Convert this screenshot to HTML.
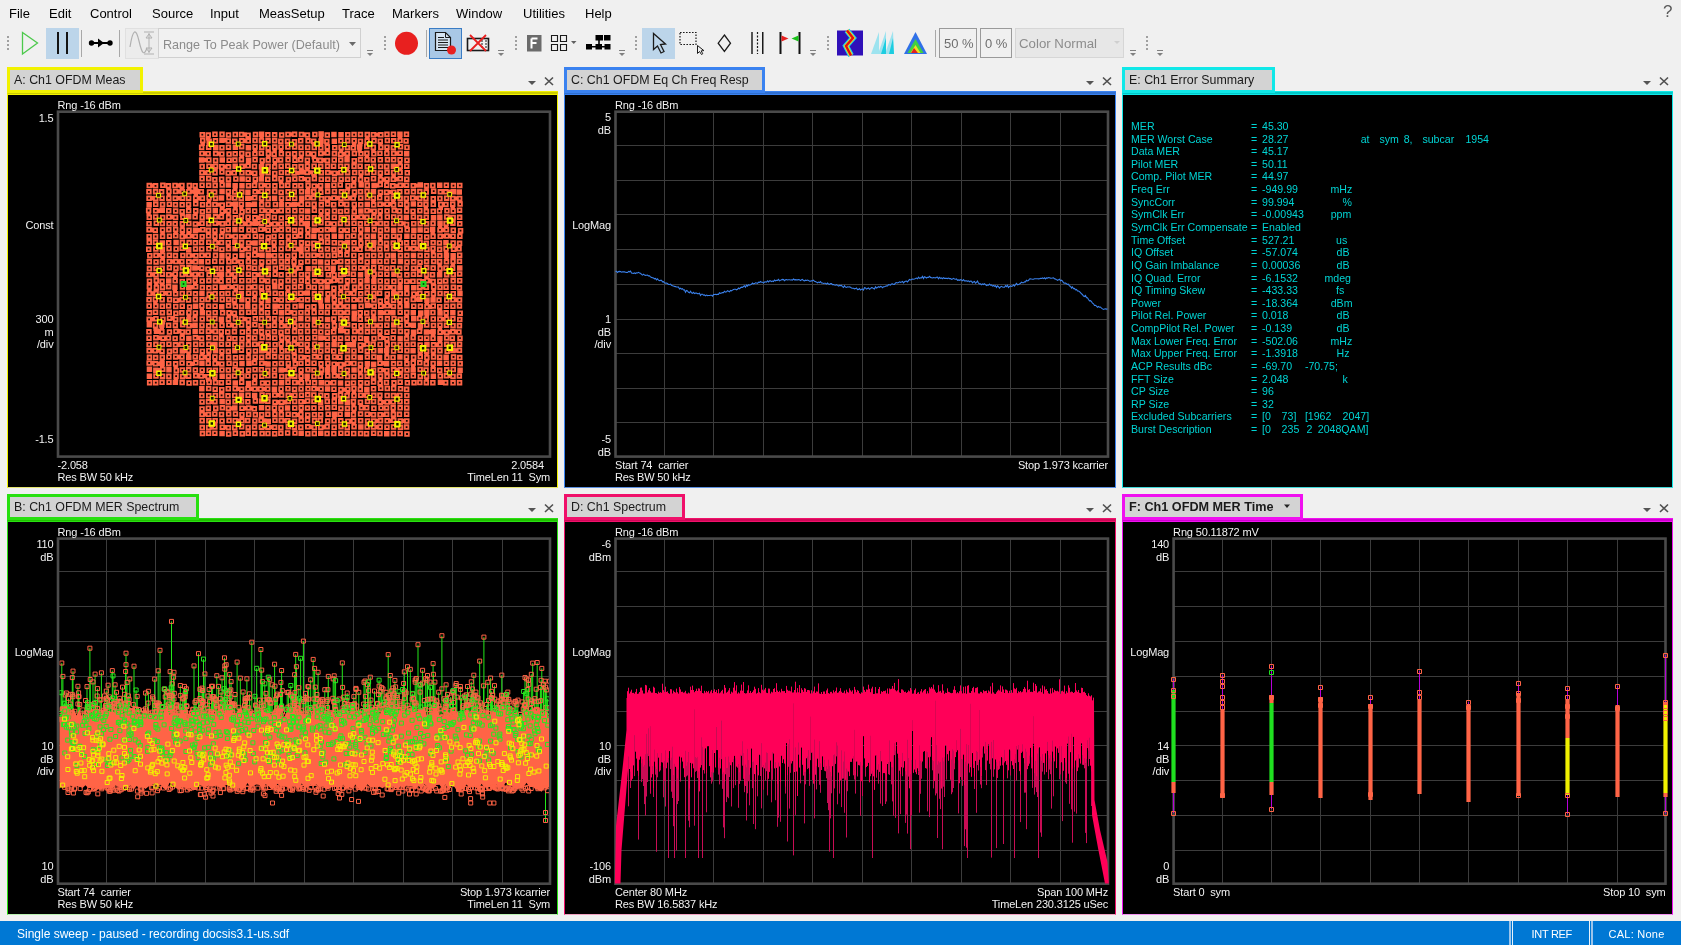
<!DOCTYPE html><html><head><meta charset="utf-8"><title>VSA</title><style>
*{box-sizing:border-box}
html,body{margin:0;padding:0}
body{width:1681px;height:945px;background:#f0f0f0;position:relative;overflow:hidden;will-change:transform;font-family:'Liberation Sans', sans-serif;color:#000}
.a{position:absolute;white-space:pre}
.m{font-size:13px;top:6px;line-height:16px;color:#000}
.tab{position:absolute;background:#d3d3d3;border:3px solid;font-size:12.4px;line-height:16px;color:#1a1a1a;padding:2px 0 0 4px}
.frame{position:absolute;background:#000;border-style:solid}
.pt{position:absolute;white-space:pre;color:#f2f2f2;font-size:11px;line-height:12px;letter-spacing:-0.15px}
.r{text-align:right}
.e{position:absolute;white-space:pre;color:#00d4d4;font-size:10.6px;line-height:12px}
svg{position:absolute;left:0;top:0;overflow:visible}
</style></head><body>
<div class="a m" style="left:9px">File</div>
<div class="a m" style="left:49px">Edit</div>
<div class="a m" style="left:90px">Control</div>
<div class="a m" style="left:152px">Source</div>
<div class="a m" style="left:210px">Input</div>
<div class="a m" style="left:259px">MeasSetup</div>
<div class="a m" style="left:342px">Trace</div>
<div class="a m" style="left:392px">Markers</div>
<div class="a m" style="left:456px">Window</div>
<div class="a m" style="left:523px">Utilities</div>
<div class="a m" style="left:585px">Help</div>
<div class="a" style="left:1663px;top:2px;font-size:17px;color:#5a5a5a">?</div>
<svg width="1681" height="70" style="left:0;top:0">
<rect x="7" y="36" width="2" height="2" fill="#a0a0a0"/><rect x="7" y="40" width="2" height="2" fill="#a0a0a0"/><rect x="7" y="44" width="2" height="2" fill="#a0a0a0"/><rect x="7" y="48" width="2" height="2" fill="#a0a0a0"/>
<path d="M22.5 32.5 L37.5 43 L22.5 54 Z" fill="none" stroke="#4cc94c" stroke-width="1.3"/>
<rect x="46" y="28" width="33" height="31" fill="#bcd5ea"/>
<rect x="57" y="32" width="2" height="22" fill="#141414"/><rect x="66" y="32" width="2" height="22" fill="#141414"/>
<rect x="81" y="30" width="1" height="27" fill="#a8a8a8"/>
<circle cx="91.5" cy="43" r="2.7" fill="#000"/><circle cx="110" cy="43" r="2.7" fill="#000"/><rect x="91" y="42" width="19" height="2" fill="#000"/><path d="M98 38.5 L104 43 L98 47.5Z" fill="#000"/>
<rect x="119" y="30" width="1" height="27" fill="#a8a8a8"/>
<rect x="125.5" y="28.5" width="33" height="30" fill="#ececec" stroke="#e0e0e0"/>
<path d="M130 47 C133 28, 136 28, 139 41 S 144 56, 147 48" fill="none" stroke="#b0b0b0" stroke-width="1.2"/><path d="M144 32 h10 M149 33 v20 M144 54 h10 M146 38 l3 -4 l3 4z M146 48 l3 4 l3 -4z" fill="none" stroke="#b0b0b0" stroke-width="1"/>
<rect x="158.5" y="28.5" width="202" height="29" fill="#f1f1f1" stroke="#d0d0d0"/>
<path d="M349 42 h7 l-3.5 4z" fill="#6a6a6a"/>
<rect x="367" y="50" width="6" height="1" fill="#808080"/><path d="M367 53 h6 l-3 3z" fill="#808080"/>
<rect x="384" y="36" width="2" height="2" fill="#a0a0a0"/><rect x="384" y="40" width="2" height="2" fill="#a0a0a0"/><rect x="384" y="44" width="2" height="2" fill="#a0a0a0"/><rect x="384" y="48" width="2" height="2" fill="#a0a0a0"/>
<circle cx="406.5" cy="43.3" r="11.5" fill="#e8201f"/>
<rect x="426" y="30" width="1" height="27" fill="#a8a8a8"/>
<rect x="429.5" y="28.5" width="32" height="30" fill="#a9c8e6" stroke="#3a7cc4"/>
<path d="M435.5 32.5 h10 l5 5 v13 h-15z" fill="#d6e4f2" stroke="#1a1a1a" stroke-width="1.2"/><path d="M445.5 32.5 v5 h5" fill="none" stroke="#1a1a1a" stroke-width="1"/><path d="M438 37.5h6 M438 40h10 M438 42.5h10 M438 45h10 M438 47.5h10" stroke="#1a1a1a" stroke-width="1"/>
<circle cx="451.5" cy="50" r="4.5" fill="#e8201f"/>
<rect x="467.5" y="38.5" width="21" height="12" fill="none" stroke="#1a1a1a" stroke-width="1.6"/><path d="M481 41h2 M481 44h2 M481 47h2 M485 41h2 M485 44h2 M485 47h2" stroke="#1a1a1a" stroke-width="1.2"/><path d="M470 35 L486 51 M486 35 L470 51" stroke="#e82020" stroke-width="1.8"/>
<rect x="498" y="50" width="6" height="1" fill="#808080"/><path d="M498 53 h6 l-3 3z" fill="#808080"/>
<rect x="515" y="36" width="2" height="2" fill="#a0a0a0"/><rect x="515" y="40" width="2" height="2" fill="#a0a0a0"/><rect x="515" y="44" width="2" height="2" fill="#a0a0a0"/><rect x="515" y="48" width="2" height="2" fill="#a0a0a0"/>
<rect x="527" y="35" width="14.5" height="16.5" fill="#6b6b6b"/><path d="M531.5 38.5 h6 M531.5 38.5 v10 M531.5 43 h5" stroke="#fff" stroke-width="2" fill="none"/>
<path d="M551.5 35.5h6v6h-6z M560.5 35.5h6v6h-6z M551.5 44.5h6v6h-6z M560.5 44.5h6v6h-6z" fill="none" stroke="#1a1a1a" stroke-width="1.1"/><path d="M571 41h5.5l-2.75 3z" fill="#606060"/>
<rect x="586" y="44" width="6" height="5.5" fill="#000"/><rect x="595.5" y="44" width="6.5" height="5.5" fill="#000"/><rect x="604.5" y="44" width="6" height="5.5" fill="#000"/><rect x="595.5" y="35" width="7.5" height="5.5" fill="#000"/><rect x="604" y="35" width="6.5" height="5.5" fill="#000"/><path d="M588 46.7h20 M599 38v8" stroke="#000" stroke-width="1.6"/>
<rect x="619" y="50" width="6" height="1" fill="#808080"/><path d="M619 53 h6 l-3 3z" fill="#808080"/>
<rect x="635" y="36" width="2" height="2" fill="#a0a0a0"/><rect x="635" y="40" width="2" height="2" fill="#a0a0a0"/><rect x="635" y="44" width="2" height="2" fill="#a0a0a0"/><rect x="635" y="48" width="2" height="2" fill="#a0a0a0"/>
<rect x="642" y="28" width="33" height="31" fill="#bcd5ea"/>
<path d="M653.5 33.5 L653.5 49.5 L657.5 46 L661 53 L664 51.5 L660.5 44.5 L665.5 44 Z" fill="none" stroke="#1a1a1a" stroke-width="1.3" stroke-linejoin="miter"/>
<rect x="680" y="32.5" width="16" height="12" fill="none" stroke="#1a1a1a" stroke-width="1.2" stroke-dasharray="1.6 1.4"/><path d="M697.5 45.5 v8 l2 -2 l2 3 l1.3 -0.8 l-1.7 -2.8 l2.8 -0.3z" fill="none" stroke="#1a1a1a" stroke-width="1"/>
<path d="M724.4 35 L730.5 43.2 L724.4 51.5 L718.2 43.2 Z" fill="none" stroke="#1a1a1a" stroke-width="1.3"/>
<rect x="751" y="32" width="2" height="22" fill="#555"/><path d="M757.5 32 v22" stroke="#1a1a1a" stroke-width="1.2" stroke-dasharray="2 1.5"/><rect x="762" y="32" width="1.5" height="22" fill="#1a1a1a"/>
<rect x="779.5" y="32" width="2" height="22" fill="#111"/><rect x="798.5" y="32" width="2" height="22" fill="#111"/><path d="M781.5 35.5 L788.5 38.5 L781.5 41.5Z" fill="#e82020"/><path d="M798.5 35.5 L791.5 38.5 L798.5 41.5Z" fill="#1cc41c"/>
<rect x="810" y="50" width="6" height="1" fill="#808080"/><path d="M810 53 h6 l-3 3z" fill="#808080"/>
<rect x="827" y="36" width="2" height="2" fill="#a0a0a0"/><rect x="827" y="40" width="2" height="2" fill="#a0a0a0"/><rect x="827" y="44" width="2" height="2" fill="#a0a0a0"/><rect x="827" y="48" width="2" height="2" fill="#a0a0a0"/>
<rect x="837" y="30.5" width="26" height="25" fill="#3010b8"/><path d="M847 30.5 L853 38 L846 46 L851 55.5" fill="none" stroke="#18c8f0" stroke-width="6"/><path d="M847 30.5 L853 38 L846 46 L851 55.5" fill="none" stroke="#f0e020" stroke-width="4"/><path d="M847 30.5 L853 38 L846 46 L851 55.5" fill="none" stroke="#e01010" stroke-width="2.4"/>
<path d="M871 54 L879 32 L879 54Z M878 54 L886 31 L886 54Z M885 54 L893 31 L894 54Z" fill="#5ad8ee" opacity="0.55"/><path d="M881 54 L886 38 L886 54Z M889 54 L893 38 L894 54Z" fill="#1ccde0"/>
<path d="M915.5 32 L927 54 L904 54Z" fill="#3070e8"/><path d="M915.5 39 L923.5 53 L907.5 53Z" fill="#40d040"/><path d="M915.5 45 L920.5 53 L910.5 53Z" fill="#f0e020"/><path d="M914 48 L918 53 L911 53Z" fill="#e02020"/>
<rect x="935" y="30" width="1" height="27" fill="#a8a8a8"/>
<rect x="939.5" y="28.5" width="37" height="29" fill="#f0f0f0" stroke="#9a9a9a"/><rect x="980.5" y="28.5" width="31" height="29" fill="#f0f0f0" stroke="#9a9a9a"/><rect x="1015.5" y="28.5" width="108" height="29" fill="#e7e7e7" stroke="#d6d6d6"/><path d="M1114 41h6l-3 3z" fill="#cfcfcf"/>
<rect x="1130" y="50" width="6" height="1" fill="#808080"/><path d="M1130 53 h6 l-3 3z" fill="#808080"/>
<rect x="1146" y="36" width="2" height="2" fill="#a0a0a0"/><rect x="1146" y="40" width="2" height="2" fill="#a0a0a0"/><rect x="1146" y="44" width="2" height="2" fill="#a0a0a0"/><rect x="1146" y="48" width="2" height="2" fill="#a0a0a0"/>
<rect x="1157" y="50" width="6" height="1" fill="#808080"/><path d="M1157 53 h6 l-3 3z" fill="#808080"/>
</svg>
<div class="a" style="left:163px;top:36.5px;font-size:12.6px;line-height:16px;color:#8c8c8c">Range To Peak Power (Default)</div>
<div class="a" style="left:944px;top:36px;font-size:13px;line-height:16px;color:#6e6e6e">50 %</div>
<div class="a" style="left:985px;top:36px;font-size:13px;line-height:16px;color:#6e6e6e">0 %</div>
<div class="a" style="left:1019px;top:36px;font-size:13.25px;line-height:16px;color:#8c8c8c">Color Normal</div>
<div class="frame" style="left:7px;top:91px;width:551px;height:397px;border-width:4px 1.5px 1px 1px;border-color:#cccc00 #f2f200 #e4e470 #f2f200"></div>
<div class="a" style="left:7px;top:91px;width:551px;height:1px;background:#f2f200"></div>
<div class="a" style="left:7px;top:94px;width:551px;height:1px;background:#f2f200"></div>
<div class="tab" style="left:7px;top:67px;width:136px;height:26px;border-color:#f2f200;">A: Ch1 OFDM Meas</div>
<svg width="40" height="30" style="left:527px;top:67px"><path d="M1 14 h8 l-4 4z" fill="#555"/><path d="M18 10.5 L26 18 M26 10.5 L18 18" stroke="#505050" stroke-width="1.6"/></svg>
<div class="frame" style="left:564px;top:91px;width:552px;height:397px;border-width:4px 1.5px 1px 1px;border-color:#2f6fd0 #3a82f0 #5c90e0 #3a82f0"></div>
<div class="a" style="left:565px;top:91px;width:551px;height:1px;background:#3a82f0"></div>
<div class="a" style="left:565px;top:94px;width:551px;height:1px;background:#3a82f0"></div>
<div class="tab" style="left:564px;top:67px;width:201px;height:26px;border-color:#3a82f0;">C: Ch1 OFDM Eq Ch Freq Resp</div>
<svg width="40" height="30" style="left:1085px;top:67px"><path d="M1 14 h8 l-4 4z" fill="#555"/><path d="M18 10.5 L26 18 M26 10.5 L18 18" stroke="#505050" stroke-width="1.6"/></svg>
<div class="frame" style="left:1122px;top:91px;width:551px;height:397px;border-width:4px 1.5px 1px 1px;border-color:#00c8c8 #10e8e8 #40d8d8 #10e8e8"></div>
<div class="a" style="left:1123px;top:91px;width:550px;height:1px;background:#10e8e8"></div>
<div class="a" style="left:1123px;top:94px;width:550px;height:1px;background:#10e8e8"></div>
<div class="tab" style="left:1122px;top:67px;width:153px;height:26px;border-color:#10e8e8;">E: Ch1 Error Summary</div>
<svg width="40" height="30" style="left:1642px;top:67px"><path d="M1 14 h8 l-4 4z" fill="#555"/><path d="M18 10.5 L26 18 M26 10.5 L18 18" stroke="#505050" stroke-width="1.6"/></svg>
<div class="frame" style="left:7px;top:518px;width:551px;height:397px;border-width:4px 1.5px 1px 1px;border-color:#20c000 #28e010 #b8f0b0 #28e010"></div>
<div class="a" style="left:7px;top:518px;width:551px;height:1px;background:#28e010"></div>
<div class="a" style="left:7px;top:521px;width:551px;height:1px;background:#28e010"></div>
<div class="tab" style="left:7px;top:494px;width:192px;height:26px;border-color:#28e010;">B: Ch1 OFDM MER Spectrum</div>
<svg width="40" height="30" style="left:527px;top:494px"><path d="M1 14 h8 l-4 4z" fill="#555"/><path d="M18 10.5 L26 18 M26 10.5 L18 18" stroke="#505050" stroke-width="1.6"/></svg>
<div class="frame" style="left:564px;top:518px;width:552px;height:397px;border-width:4px 1.5px 1px 1px;border-color:#d00858 #f0106a #f0a0c0 #f0106a"></div>
<div class="a" style="left:565px;top:518px;width:551px;height:1px;background:#f0106a"></div>
<div class="a" style="left:565px;top:521px;width:551px;height:1px;background:#f0106a"></div>
<div class="tab" style="left:564px;top:494px;width:121px;height:26px;border-color:#f0106a;">D: Ch1 Spectrum</div>
<svg width="40" height="30" style="left:1085px;top:494px"><path d="M1 14 h8 l-4 4z" fill="#555"/><path d="M18 10.5 L26 18 M26 10.5 L18 18" stroke="#505050" stroke-width="1.6"/></svg>
<div class="frame" style="left:1122px;top:518px;width:551px;height:397px;border-width:4px 1.5px 1px 1px;border-color:#d000d0 #f010f0 #f090f0 #f010f0"></div>
<div class="a" style="left:1123px;top:518px;width:550px;height:1px;background:#f010f0"></div>
<div class="a" style="left:1123px;top:521px;width:550px;height:1px;background:#f010f0"></div>
<div class="tab" style="left:1122px;top:494px;width:181px;height:26px;border-color:#f010f0;font-weight:bold;font-size:12.65px;">F: Ch1 OFDM MER Time</div>
<svg width="40" height="30" style="left:1642px;top:494px"><path d="M1 14 h8 l-4 4z" fill="#555"/><path d="M18 10.5 L26 18 M26 10.5 L18 18" stroke="#505050" stroke-width="1.6"/></svg>
<svg width="20" height="20" style="left:1280px;top:500px"><path d="M4 4.5h6l-3 3.5z" fill="#222"/></svg>
<svg width="1681" height="945" style="left:0;top:0">
<rect x="58.0" y="111.7" width="492.0" height="344.90000000000003" fill="none" stroke="#4a4a4a" stroke-width="2.6"/>
</svg>
<svg width="1681" height="945" style="left:0;top:0">
<path d="M664.5 111.7V456.6M713.5 111.7V456.6M763.5 111.7V456.6M812.5 111.7V456.6M862.5 111.7V456.6M911.5 111.7V456.6M961.5 111.7V456.6M1010.5 111.7V456.6M1060.5 111.7V456.6M615.5 145.5H1108.0M615.5 180.5H1108.0M615.5 214.5H1108.0M615.5 249.5H1108.0M615.5 284.5H1108.0M615.5 319.5H1108.0M615.5 353.5H1108.0M615.5 388.5H1108.0M615.5 422.5H1108.0" stroke="#3c3c3c" stroke-width="1" fill="none"/>
<rect x="615.5" y="111.7" width="492.5" height="344.90000000000003" fill="none" stroke="#4a4a4a" stroke-width="2.6"/>
</svg>
<svg width="1681" height="945" style="left:0;top:0">
<path d="M106.5 538.6V883.7M155.5 538.6V883.7M205.5 538.6V883.7M254.5 538.6V883.7M304.5 538.6V883.7M353.5 538.6V883.7M403.5 538.6V883.7M452.5 538.6V883.7M502.5 538.6V883.7M58.0 571.5H550.0M58.0 606.5H550.0M58.0 641.5H550.0M58.0 676.5H550.0M58.0 711.5H550.0M58.0 745.5H550.0M58.0 780.5H550.0M58.0 815.5H550.0M58.0 850.5H550.0" stroke="#3c3c3c" stroke-width="1" fill="none"/>
<rect x="58.0" y="538.6" width="492.0" height="345.1" fill="none" stroke="#4a4a4a" stroke-width="2.6"/>
</svg>
<svg width="1681" height="945" style="left:0;top:0">
<path d="M664.5 538.6V883.7M713.5 538.6V883.7M763.5 538.6V883.7M812.5 538.6V883.7M862.5 538.6V883.7M911.5 538.6V883.7M961.5 538.6V883.7M1010.5 538.6V883.7M1060.5 538.6V883.7M615.5 571.5H1108.0M615.5 606.5H1108.0M615.5 641.5H1108.0M615.5 676.5H1108.0M615.5 711.5H1108.0M615.5 745.5H1108.0M615.5 780.5H1108.0M615.5 815.5H1108.0M615.5 850.5H1108.0" stroke="#3c3c3c" stroke-width="1" fill="none"/>
<rect x="615.5" y="538.6" width="492.5" height="345.1" fill="none" stroke="#4a4a4a" stroke-width="2.6"/>
</svg>
<svg width="1681" height="945" style="left:0;top:0">
<path d="M1222.5 538.6V883.7M1271.5 538.6V883.7M1320.5 538.6V883.7M1370.5 538.6V883.7M1419.5 538.6V883.7M1468.5 538.6V883.7M1518.5 538.6V883.7M1567.5 538.6V883.7M1617.5 538.6V883.7M1173.6 571.5H1665.5M1173.6 606.5H1665.5M1173.6 641.5H1665.5M1173.6 676.5H1665.5M1173.6 711.5H1665.5M1173.6 745.5H1665.5M1173.6 780.5H1665.5M1173.6 815.5H1665.5M1173.6 850.5H1665.5" stroke="#3c3c3c" stroke-width="1" fill="none"/>
<rect x="1173.6" y="538.6" width="491.9000000000001" height="345.1" fill="none" stroke="#4a4a4a" stroke-width="2.6"/>
</svg>
<svg width="1681" height="945" style="left:0;top:0">
<path d="M146.5 182.8h5.5v5.5h-5.5zM150.3 183.4h4.4v4.4h-4.4zM146.2 189.1h5.5v5.5h-5.5zM146.3 195.6h5.5v5.5h-5.5zM150.1 196.1h4.4v4.4h-4.4zM146.4 202h5.5v5.5h-5.5zM145.9 207.8h5.5v5.5h-5.5zM146.4 211.5h4.4v4.4h-4.4zM146.5 214.6h5.5v5.5h-5.5zM146.3 220.9h5.5v5.5h-5.5zM146.3 226.9h5.5v5.5h-5.5zM150.2 227.5h4.4v4.4h-4.4zM146.4 233.9h5.5v5.5h-5.5zM147 237.6h4.4v4.4h-4.4zM146.5 239.6h5.5v5.5h-5.5zM146 246.6h5.5v5.5h-5.5zM147.1 252.9h5.5v5.5h-5.5zM146.6 259h5.5v5.5h-5.5zM146.7 265.8h5.5v5.5h-5.5zM146.3 271.8h5.5v5.5h-5.5zM150.2 272.3h4.4v4.4h-4.4zM146.7 278.5h5.5v5.5h-5.5zM146.6 283.9h5.5v5.5h-5.5zM147.2 287.6h4.4v4.4h-4.4zM146.7 290.7h5.5v5.5h-5.5zM150.5 291.3h4.4v4.4h-4.4zM146.3 297.1h5.5v5.5h-5.5zM146.4 303.2h5.5v5.5h-5.5zM146.8 310.1h5.5v5.5h-5.5zM146.4 316.6h5.5v5.5h-5.5zM150.2 317.1h4.4v4.4h-4.4zM146.6 322.1h5.5v5.5h-5.5zM146.2 329.1h5.5v5.5h-5.5zM146.3 335.4h5.5v5.5h-5.5zM146.4 341.9h5.5v5.5h-5.5zM146.4 348.1h5.5v5.5h-5.5zM150.3 348.6h4.4v4.4h-4.4zM146.7 354.5h5.5v5.5h-5.5zM146.4 360.2h5.5v5.5h-5.5zM150.3 360.8h4.4v4.4h-4.4zM146.7 366.6h5.5v5.5h-5.5zM146.7 373.6h5.5v5.5h-5.5zM146.9 379.9h5.5v5.5h-5.5zM152.8 183h5.5v5.5h-5.5zM152.8 188.9h5.5v5.5h-5.5zM153 195.7h5.5v5.5h-5.5zM153 201.6h5.5v5.5h-5.5zM152.9 208.1h5.5v5.5h-5.5zM156.8 208.6h4.4v4.4h-4.4zM152.9 214.2h5.5v5.5h-5.5zM153.5 220.4h5.5v5.5h-5.5zM152.5 227.5h5.5v5.5h-5.5zM152.8 233.7h5.5v5.5h-5.5zM152.7 239.6h5.5v5.5h-5.5zM153.1 246.3h5.5v5.5h-5.5zM153.2 252.6h5.5v5.5h-5.5zM157.1 253.1h4.4v4.4h-4.4zM153.3 259.2h5.5v5.5h-5.5zM153.3 265.7h5.5v5.5h-5.5zM153.3 272h5.5v5.5h-5.5zM153.5 277.7h5.5v5.5h-5.5zM154.1 281.5h4.4v4.4h-4.4zM153.6 284.9h5.5v5.5h-5.5zM153.3 290.5h5.5v5.5h-5.5zM152.6 296.6h5.5v5.5h-5.5zM153.1 300.3h4.4v4.4h-4.4zM153.1 303.3h5.5v5.5h-5.5zM152.8 309.4h5.5v5.5h-5.5zM153.2 316h5.5v5.5h-5.5zM152.8 322.7h5.5v5.5h-5.5zM153.3 326.5h4.4v4.4h-4.4zM153.7 328.6h5.5v5.5h-5.5zM153.1 334.9h5.5v5.5h-5.5zM156.9 335.5h4.4v4.4h-4.4zM153.1 341.6h5.5v5.5h-5.5zM152.4 347.9h5.5v5.5h-5.5zM156.2 348.4h4.4v4.4h-4.4zM152.9 354.8h5.5v5.5h-5.5zM152.8 361.1h5.5v5.5h-5.5zM156.6 361.7h4.4v4.4h-4.4zM153.1 367.4h5.5v5.5h-5.5zM156.9 368h4.4v4.4h-4.4zM153.2 373.3h5.5v5.5h-5.5zM153 379.9h5.5v5.5h-5.5zM160.1 182.6h5.5v5.5h-5.5zM158.9 189.1h5.5v5.5h-5.5zM159.3 195.4h5.5v5.5h-5.5zM159.8 201.8h5.5v5.5h-5.5zM159.5 207.6h5.5v5.5h-5.5zM159.9 214.7h5.5v5.5h-5.5zM159.6 220.8h5.5v5.5h-5.5zM159.8 227.2h5.5v5.5h-5.5zM160.4 231h4.4v4.4h-4.4zM159.8 233.6h5.5v5.5h-5.5zM159.6 240.2h5.5v5.5h-5.5zM159.6 246.4h5.5v5.5h-5.5zM160.1 250.1h4.4v4.4h-4.4zM159.9 252.4h5.5v5.5h-5.5zM160.5 256.2h4.4v4.4h-4.4zM159.6 258.9h5.5v5.5h-5.5zM159.4 265.5h5.5v5.5h-5.5zM159.6 271.4h5.5v5.5h-5.5zM159.3 278.5h5.5v5.5h-5.5zM159.9 282.3h4.4v4.4h-4.4zM159.7 284.6h5.5v5.5h-5.5zM159.5 290.4h5.5v5.5h-5.5zM163.3 291h4.4v4.4h-4.4zM159.4 296.9h5.5v5.5h-5.5zM159.6 303.6h5.5v5.5h-5.5zM159.6 310h5.5v5.5h-5.5zM160.2 316.5h5.5v5.5h-5.5zM160.8 320.2h4.4v4.4h-4.4zM159.1 322.2h5.5v5.5h-5.5zM159.6 326h4.4v4.4h-4.4zM159.1 328.9h5.5v5.5h-5.5zM160.3 335.4h5.5v5.5h-5.5zM159.6 341.7h5.5v5.5h-5.5zM159.3 348.4h5.5v5.5h-5.5zM159.5 354.6h5.5v5.5h-5.5zM160.1 358.3h4.4v4.4h-4.4zM159.3 360.4h5.5v5.5h-5.5zM159.8 364.1h4.4v4.4h-4.4zM160 366.6h5.5v5.5h-5.5zM159.8 373.4h5.5v5.5h-5.5zM159.3 379.6h5.5v5.5h-5.5zM165.7 183.1h5.5v5.5h-5.5zM166.2 186.9h4.4v4.4h-4.4zM166.2 188.7h5.5v5.5h-5.5zM166.7 192.5h4.4v4.4h-4.4zM166.1 195.5h5.5v5.5h-5.5zM166.6 201.4h5.5v5.5h-5.5zM166 208h5.5v5.5h-5.5zM166.1 214.3h5.5v5.5h-5.5zM170 214.8h4.4v4.4h-4.4zM166.3 221.1h5.5v5.5h-5.5zM166.1 226.9h5.5v5.5h-5.5zM166.7 233.4h5.5v5.5h-5.5zM166 240.1h5.5v5.5h-5.5zM166.3 246h5.5v5.5h-5.5zM166.6 252.4h5.5v5.5h-5.5zM166.5 258.7h5.5v5.5h-5.5zM170.3 259.3h4.4v4.4h-4.4zM166.6 264.9h5.5v5.5h-5.5zM165.9 271.9h5.5v5.5h-5.5zM169.8 272.4h4.4v4.4h-4.4zM166 278.2h5.5v5.5h-5.5zM165.9 283.9h5.5v5.5h-5.5zM166.3 290.8h5.5v5.5h-5.5zM166.8 296.9h5.5v5.5h-5.5zM165.9 303.3h5.5v5.5h-5.5zM166.5 309.6h5.5v5.5h-5.5zM166.7 315.4h5.5v5.5h-5.5zM170.5 316h4.4v4.4h-4.4zM165.9 322.6h5.5v5.5h-5.5zM166.7 329.2h5.5v5.5h-5.5zM165.7 335.2h5.5v5.5h-5.5zM166.2 341.4h5.5v5.5h-5.5zM166.7 348.6h5.5v5.5h-5.5zM166.2 354.3h5.5v5.5h-5.5zM166 361h5.5v5.5h-5.5zM166.2 366.9h5.5v5.5h-5.5zM166.1 373.6h5.5v5.5h-5.5zM166.3 379.5h5.5v5.5h-5.5zM172.2 182.7h5.5v5.5h-5.5zM176.1 183.3h4.4v4.4h-4.4zM172.8 188.8h5.5v5.5h-5.5zM176.6 189.3h4.4v4.4h-4.4zM172.5 195.5h5.5v5.5h-5.5zM176.4 196.1h4.4v4.4h-4.4zM172.7 202h5.5v5.5h-5.5zM172.9 208.2h5.5v5.5h-5.5zM172.8 214.7h5.5v5.5h-5.5zM172.4 221h5.5v5.5h-5.5zM172.9 226.8h5.5v5.5h-5.5zM173.5 230.5h4.4v4.4h-4.4zM173 233.1h5.5v5.5h-5.5zM173.3 239.8h5.5v5.5h-5.5zM173.3 246.3h5.5v5.5h-5.5zM172.7 252.8h5.5v5.5h-5.5zM173.2 258.8h5.5v5.5h-5.5zM177 259.4h4.4v4.4h-4.4zM173.2 265.5h5.5v5.5h-5.5zM172.6 271.3h5.5v5.5h-5.5zM173.1 275h4.4v4.4h-4.4zM172.4 278h5.5v5.5h-5.5zM172.2 284.4h5.5v5.5h-5.5zM172.7 288.1h4.4v4.4h-4.4zM172.9 291.1h5.5v5.5h-5.5zM173 297.4h5.5v5.5h-5.5zM176.9 298h4.4v4.4h-4.4zM173 303.8h5.5v5.5h-5.5zM173.1 310.5h5.5v5.5h-5.5zM172.9 316.7h5.5v5.5h-5.5zM172.6 322.6h5.5v5.5h-5.5zM173.2 328.6h5.5v5.5h-5.5zM177 329.1h4.4v4.4h-4.4zM172.4 335.7h5.5v5.5h-5.5zM172.7 342h5.5v5.5h-5.5zM176.6 342.6h4.4v4.4h-4.4zM172.6 348.1h5.5v5.5h-5.5zM172.9 354.2h5.5v5.5h-5.5zM176.8 354.7h4.4v4.4h-4.4zM172.9 361.1h5.5v5.5h-5.5zM173.5 364.8h4.4v4.4h-4.4zM173.5 367.8h5.5v5.5h-5.5zM173.3 373.5h5.5v5.5h-5.5zM173.9 377.2h4.4v4.4h-4.4zM172.6 379.4h5.5v5.5h-5.5zM179.2 182.7h5.5v5.5h-5.5zM179.8 186.4h4.4v4.4h-4.4zM179.6 188.8h5.5v5.5h-5.5zM179.8 195.4h5.5v5.5h-5.5zM179.4 202h5.5v5.5h-5.5zM179.4 208.9h5.5v5.5h-5.5zM179.9 212.7h4.4v4.4h-4.4zM180.1 214.4h5.5v5.5h-5.5zM179.6 221.1h5.5v5.5h-5.5zM180.2 224.8h4.4v4.4h-4.4zM179.6 227.4h5.5v5.5h-5.5zM180.2 231.2h4.4v4.4h-4.4zM179.4 233.7h5.5v5.5h-5.5zM183.3 234.3h4.4v4.4h-4.4zM179.6 239.7h5.5v5.5h-5.5zM179.4 245.6h5.5v5.5h-5.5zM183.2 246.2h4.4v4.4h-4.4zM180.1 252.7h5.5v5.5h-5.5zM179.1 258.9h5.5v5.5h-5.5zM179.6 264.9h5.5v5.5h-5.5zM179.4 271.7h5.5v5.5h-5.5zM183.2 272.3h4.4v4.4h-4.4zM179.5 278.7h5.5v5.5h-5.5zM179.7 284.3h5.5v5.5h-5.5zM179.5 290.8h5.5v5.5h-5.5zM179.4 296.9h5.5v5.5h-5.5zM179.5 303.5h5.5v5.5h-5.5zM179.1 309.9h5.5v5.5h-5.5zM179.5 316.7h5.5v5.5h-5.5zM180.1 320.5h4.4v4.4h-4.4zM179.9 322.1h5.5v5.5h-5.5zM179.7 329.2h5.5v5.5h-5.5zM180.2 332.9h4.4v4.4h-4.4zM179.4 335.2h5.5v5.5h-5.5zM178.8 341.6h5.5v5.5h-5.5zM179.6 348.2h5.5v5.5h-5.5zM183.4 348.7h4.4v4.4h-4.4zM179.2 354.2h5.5v5.5h-5.5zM179.3 360.2h5.5v5.5h-5.5zM179.6 367.2h5.5v5.5h-5.5zM179.8 373.7h5.5v5.5h-5.5zM183.7 374.2h4.4v4.4h-4.4zM179.4 379.8h5.5v5.5h-5.5zM186.6 182.7h5.5v5.5h-5.5zM187.1 186.5h4.4v4.4h-4.4zM186.1 188.9h5.5v5.5h-5.5zM189.9 189.4h4.4v4.4h-4.4zM185.9 195.4h5.5v5.5h-5.5zM185.8 201.7h5.5v5.5h-5.5zM186.3 205.4h4.4v4.4h-4.4zM185.9 208.1h5.5v5.5h-5.5zM185.9 213.9h5.5v5.5h-5.5zM186.1 220.8h5.5v5.5h-5.5zM186.3 227.4h5.5v5.5h-5.5zM186.9 231.2h4.4v4.4h-4.4zM185.9 233.2h5.5v5.5h-5.5zM189.8 233.8h4.4v4.4h-4.4zM186.4 239.8h5.5v5.5h-5.5zM186 247.1h5.5v5.5h-5.5zM186.1 252.8h5.5v5.5h-5.5zM189.9 253.3h4.4v4.4h-4.4zM186 259h5.5v5.5h-5.5zM189.8 259.6h4.4v4.4h-4.4zM186.3 265.1h5.5v5.5h-5.5zM186.9 268.8h4.4v4.4h-4.4zM186.2 271.8h5.5v5.5h-5.5zM190 272.4h4.4v4.4h-4.4zM186.2 278.3h5.5v5.5h-5.5zM186 284.5h5.5v5.5h-5.5zM189.8 285.1h4.4v4.4h-4.4zM186.3 290.6h5.5v5.5h-5.5zM185.8 297.3h5.5v5.5h-5.5zM186.8 304.2h5.5v5.5h-5.5zM186.1 310h5.5v5.5h-5.5zM186.7 313.7h4.4v4.4h-4.4zM186.1 316.7h5.5v5.5h-5.5zM186.2 322.9h5.5v5.5h-5.5zM190 323.4h4.4v4.4h-4.4zM185.4 329.3h5.5v5.5h-5.5zM186.1 335.7h5.5v5.5h-5.5zM186 342.1h5.5v5.5h-5.5zM185.9 347.8h5.5v5.5h-5.5zM186.4 351.5h4.4v4.4h-4.4zM186 354.7h5.5v5.5h-5.5zM186.2 361h5.5v5.5h-5.5zM190 361.6h4.4v4.4h-4.4zM185.9 367h5.5v5.5h-5.5zM185.9 373.4h5.5v5.5h-5.5zM186.3 380.2h5.5v5.5h-5.5zM192.4 183h5.5v5.5h-5.5zM193.2 188.5h5.5v5.5h-5.5zM193.7 192.2h4.4v4.4h-4.4zM192.9 195.4h5.5v5.5h-5.5zM196.8 196h4.4v4.4h-4.4zM193 201.1h5.5v5.5h-5.5zM193 208.1h5.5v5.5h-5.5zM193.5 211.8h4.4v4.4h-4.4zM192.4 214h5.5v5.5h-5.5zM192.6 221.2h5.5v5.5h-5.5zM196.5 221.7h4.4v4.4h-4.4zM192.7 227.4h5.5v5.5h-5.5zM196.5 228h4.4v4.4h-4.4zM192.6 233.6h5.5v5.5h-5.5zM192.6 240.1h5.5v5.5h-5.5zM192.8 246.2h5.5v5.5h-5.5zM193.2 253h5.5v5.5h-5.5zM192.8 259.1h5.5v5.5h-5.5zM192.1 265.3h5.5v5.5h-5.5zM196 265.9h4.4v4.4h-4.4zM192.5 271.7h5.5v5.5h-5.5zM196.3 272.2h4.4v4.4h-4.4zM192.4 277.5h5.5v5.5h-5.5zM192.9 281.3h4.4v4.4h-4.4zM192.9 284.1h5.5v5.5h-5.5zM192.7 291h5.5v5.5h-5.5zM192.7 296.9h5.5v5.5h-5.5zM192.9 303.5h5.5v5.5h-5.5zM192.6 310.2h5.5v5.5h-5.5zM193.1 313.9h4.4v4.4h-4.4zM192.3 316.3h5.5v5.5h-5.5zM192.3 322.4h5.5v5.5h-5.5zM192.4 328.8h5.5v5.5h-5.5zM192.6 335h5.5v5.5h-5.5zM196.4 335.6h4.4v4.4h-4.4zM192.9 341.5h5.5v5.5h-5.5zM193 347.7h5.5v5.5h-5.5zM192.5 354.2h5.5v5.5h-5.5zM193.1 360.1h5.5v5.5h-5.5zM192.6 367.2h5.5v5.5h-5.5zM193 372.9h5.5v5.5h-5.5zM192.7 380h5.5v5.5h-5.5zM199.5 131.9h5.5v5.5h-5.5zM200 137.8h5.5v5.5h-5.5zM200.5 141.5h4.4v4.4h-4.4zM198.9 144.6h5.5v5.5h-5.5zM199.2 150.7h5.5v5.5h-5.5zM203.1 151.3h4.4v4.4h-4.4zM198.9 157.3h5.5v5.5h-5.5zM202.8 157.8h4.4v4.4h-4.4zM199.4 163.8h5.5v5.5h-5.5zM199.2 169.9h5.5v5.5h-5.5zM203.1 170.5h4.4v4.4h-4.4zM199.3 176.1h5.5v5.5h-5.5zM199.3 182.5h5.5v5.5h-5.5zM198.6 188.9h5.5v5.5h-5.5zM199.6 195.6h5.5v5.5h-5.5zM199.8 201.9h5.5v5.5h-5.5zM199.6 208.9h5.5v5.5h-5.5zM199.4 214.7h5.5v5.5h-5.5zM199.3 220.6h5.5v5.5h-5.5zM200 227h5.5v5.5h-5.5zM199.4 233.9h5.5v5.5h-5.5zM198.8 239.7h5.5v5.5h-5.5zM199 246.2h5.5v5.5h-5.5zM199.1 252.6h5.5v5.5h-5.5zM203 253.2h4.4v4.4h-4.4zM198.6 258.9h5.5v5.5h-5.5zM199 265.4h5.5v5.5h-5.5zM198.7 271.7h5.5v5.5h-5.5zM199.4 278.3h5.5v5.5h-5.5zM199.6 284.8h5.5v5.5h-5.5zM199.2 290.8h5.5v5.5h-5.5zM199.3 297h5.5v5.5h-5.5zM199.1 303h5.5v5.5h-5.5zM199.7 306.8h4.4v4.4h-4.4zM199.6 309.9h5.5v5.5h-5.5zM199.4 316.2h5.5v5.5h-5.5zM199.2 322.6h5.5v5.5h-5.5zM198.8 328.6h5.5v5.5h-5.5zM198.8 335.6h5.5v5.5h-5.5zM199.1 341.6h5.5v5.5h-5.5zM199.6 348.4h5.5v5.5h-5.5zM200.2 352.2h4.4v4.4h-4.4zM198.8 354.4h5.5v5.5h-5.5zM202.7 355h4.4v4.4h-4.4zM199.2 360.5h5.5v5.5h-5.5zM199.4 367.4h5.5v5.5h-5.5zM198.5 373.3h5.5v5.5h-5.5zM202.4 373.9h4.4v4.4h-4.4zM199.6 379.7h5.5v5.5h-5.5zM199.1 385.9h5.5v5.5h-5.5zM199.1 392.8h5.5v5.5h-5.5zM199.3 399.2h5.5v5.5h-5.5zM199.3 406.2h5.5v5.5h-5.5zM199.3 411.7h5.5v5.5h-5.5zM203.1 412.2h4.4v4.4h-4.4zM199.4 417.9h5.5v5.5h-5.5zM199.5 424.8h5.5v5.5h-5.5zM199.7 430.8h5.5v5.5h-5.5zM205.5 132.3h5.5v5.5h-5.5zM206 136.1h4.4v4.4h-4.4zM206.4 138.5h5.5v5.5h-5.5zM207 142.2h4.4v4.4h-4.4zM205.9 144.4h5.5v5.5h-5.5zM205.4 151h5.5v5.5h-5.5zM206.1 157.3h5.5v5.5h-5.5zM206.2 163.5h5.5v5.5h-5.5zM210.1 164h4.4v4.4h-4.4zM205.7 170.1h5.5v5.5h-5.5zM206 175.9h5.5v5.5h-5.5zM205.9 182.6h5.5v5.5h-5.5zM206.7 189.3h5.5v5.5h-5.5zM207.3 193h4.4v4.4h-4.4zM206.3 195.1h5.5v5.5h-5.5zM206.8 198.8h4.4v4.4h-4.4zM206 201.9h5.5v5.5h-5.5zM205.9 207.9h5.5v5.5h-5.5zM205.7 214h5.5v5.5h-5.5zM205.9 221h5.5v5.5h-5.5zM205.7 227.5h5.5v5.5h-5.5zM206.2 231.3h4.4v4.4h-4.4zM205.8 233.3h5.5v5.5h-5.5zM206 239.5h5.5v5.5h-5.5zM206.1 246.1h5.5v5.5h-5.5zM205.4 252.6h5.5v5.5h-5.5zM205.2 259h5.5v5.5h-5.5zM205.2 266.2h5.5v5.5h-5.5zM206.3 272.1h5.5v5.5h-5.5zM206.1 277.9h5.5v5.5h-5.5zM206.1 285h5.5v5.5h-5.5zM206.4 291.3h5.5v5.5h-5.5zM210.2 291.9h4.4v4.4h-4.4zM205.2 296.7h5.5v5.5h-5.5zM205.8 303.5h5.5v5.5h-5.5zM205.9 310.3h5.5v5.5h-5.5zM206.2 315.9h5.5v5.5h-5.5zM205.9 323.1h5.5v5.5h-5.5zM205.6 328.7h5.5v5.5h-5.5zM209.5 329.2h4.4v4.4h-4.4zM206 335.1h5.5v5.5h-5.5zM206.1 341.6h5.5v5.5h-5.5zM210 342.2h4.4v4.4h-4.4zM206.1 347.9h5.5v5.5h-5.5zM206.6 351.7h4.4v4.4h-4.4zM205.5 354.4h5.5v5.5h-5.5zM206 358.2h4.4v4.4h-4.4zM205.5 360.6h5.5v5.5h-5.5zM206.4 367.4h5.5v5.5h-5.5zM205.4 374h5.5v5.5h-5.5zM206 377.7h4.4v4.4h-4.4zM206.4 379.6h5.5v5.5h-5.5zM205.9 385.8h5.5v5.5h-5.5zM206 393h5.5v5.5h-5.5zM205.7 399h5.5v5.5h-5.5zM209.5 399.6h4.4v4.4h-4.4zM205.6 405.5h5.5v5.5h-5.5zM205.8 411.5h5.5v5.5h-5.5zM206.1 417.9h5.5v5.5h-5.5zM205.9 424.7h5.5v5.5h-5.5zM209.7 425.3h4.4v4.4h-4.4zM205.8 430.5h5.5v5.5h-5.5zM212.2 131.5h5.5v5.5h-5.5zM212.7 138.1h5.5v5.5h-5.5zM213 144.7h5.5v5.5h-5.5zM212.9 150.8h5.5v5.5h-5.5zM216.8 151.4h4.4v4.4h-4.4zM212.8 157.8h5.5v5.5h-5.5zM212.9 163.4h5.5v5.5h-5.5zM213.4 167.2h4.4v4.4h-4.4zM212.3 169.9h5.5v5.5h-5.5zM212.1 177h5.5v5.5h-5.5zM212.4 182.7h5.5v5.5h-5.5zM212 189.3h5.5v5.5h-5.5zM212.8 195.5h5.5v5.5h-5.5zM212.1 201.8h5.5v5.5h-5.5zM216 202.4h4.4v4.4h-4.4zM212.5 208h5.5v5.5h-5.5zM212.8 214.1h5.5v5.5h-5.5zM216.6 214.7h4.4v4.4h-4.4zM212.5 220.5h5.5v5.5h-5.5zM216.3 221.1h4.4v4.4h-4.4zM212.2 227.7h5.5v5.5h-5.5zM212.7 231.4h4.4v4.4h-4.4zM212.2 233.6h5.5v5.5h-5.5zM212.8 237.3h4.4v4.4h-4.4zM212.5 239.9h5.5v5.5h-5.5zM216.4 240.5h4.4v4.4h-4.4zM213.1 246h5.5v5.5h-5.5zM212.7 252.6h5.5v5.5h-5.5zM212 258.6h5.5v5.5h-5.5zM212.6 265.8h5.5v5.5h-5.5zM213.2 272h5.5v5.5h-5.5zM212.6 277.9h5.5v5.5h-5.5zM216.5 278.4h4.4v4.4h-4.4zM212.4 284.4h5.5v5.5h-5.5zM212.4 290.8h5.5v5.5h-5.5zM212.7 296.8h5.5v5.5h-5.5zM212.3 303.4h5.5v5.5h-5.5zM212.4 310h5.5v5.5h-5.5zM212.2 316h5.5v5.5h-5.5zM212.2 322.7h5.5v5.5h-5.5zM212.6 328.8h5.5v5.5h-5.5zM212.6 335.2h5.5v5.5h-5.5zM212.2 341.8h5.5v5.5h-5.5zM212.8 345.6h4.4v4.4h-4.4zM212.8 347.9h5.5v5.5h-5.5zM212.2 354.3h5.5v5.5h-5.5zM212.8 358h4.4v4.4h-4.4zM212.3 360.8h5.5v5.5h-5.5zM216.2 361.3h4.4v4.4h-4.4zM212.6 367.6h5.5v5.5h-5.5zM212.1 373.5h5.5v5.5h-5.5zM212.6 377.2h4.4v4.4h-4.4zM212.8 379.8h5.5v5.5h-5.5zM212.4 386.4h5.5v5.5h-5.5zM212.6 392.7h5.5v5.5h-5.5zM212.2 399h5.5v5.5h-5.5zM213 405.6h5.5v5.5h-5.5zM212.1 411.2h5.5v5.5h-5.5zM212.4 417.9h5.5v5.5h-5.5zM212.9 421.6h4.4v4.4h-4.4zM212.1 424.2h5.5v5.5h-5.5zM212.1 430.5h5.5v5.5h-5.5zM219.3 131.5h5.5v5.5h-5.5zM219.2 137.6h5.5v5.5h-5.5zM223.1 138.1h4.4v4.4h-4.4zM219.2 144.9h5.5v5.5h-5.5zM219.1 151.3h5.5v5.5h-5.5zM219.5 157.3h5.5v5.5h-5.5zM219 163.9h5.5v5.5h-5.5zM222.9 164.4h4.4v4.4h-4.4zM219.2 169.3h5.5v5.5h-5.5zM218.9 176.4h5.5v5.5h-5.5zM219.4 180.1h4.4v4.4h-4.4zM219.4 182.2h5.5v5.5h-5.5zM219.3 188.8h5.5v5.5h-5.5zM218.8 195.2h5.5v5.5h-5.5zM219.5 202.3h5.5v5.5h-5.5zM220 206.1h4.4v4.4h-4.4zM219.4 208.4h5.5v5.5h-5.5zM223.3 209h4.4v4.4h-4.4zM218.7 214.1h5.5v5.5h-5.5zM219.8 220.9h5.5v5.5h-5.5zM219.6 227.4h5.5v5.5h-5.5zM220.2 231.1h4.4v4.4h-4.4zM218.9 233.4h5.5v5.5h-5.5zM218.8 239.8h5.5v5.5h-5.5zM219.1 246.7h5.5v5.5h-5.5zM219.2 252.9h5.5v5.5h-5.5zM218.9 258.8h5.5v5.5h-5.5zM218.5 265.7h5.5v5.5h-5.5zM218.7 271.4h5.5v5.5h-5.5zM219.2 275.1h4.4v4.4h-4.4zM218.4 278.3h5.5v5.5h-5.5zM219.3 284.5h5.5v5.5h-5.5zM223.2 285h4.4v4.4h-4.4zM219.2 290.9h5.5v5.5h-5.5zM219.4 297h5.5v5.5h-5.5zM219 304.1h5.5v5.5h-5.5zM219.8 310h5.5v5.5h-5.5zM218.7 316.6h5.5v5.5h-5.5zM219.3 320.4h4.4v4.4h-4.4zM219.2 322.6h5.5v5.5h-5.5zM218.5 328.9h5.5v5.5h-5.5zM219 332.6h4.4v4.4h-4.4zM218.7 335.5h5.5v5.5h-5.5zM218.7 341.4h5.5v5.5h-5.5zM219.1 348.4h5.5v5.5h-5.5zM219.7 352.2h4.4v4.4h-4.4zM218.8 354.8h5.5v5.5h-5.5zM219.1 361.2h5.5v5.5h-5.5zM219.2 367.3h5.5v5.5h-5.5zM219.4 373.4h5.5v5.5h-5.5zM218.6 379.9h5.5v5.5h-5.5zM219 386.9h5.5v5.5h-5.5zM218.9 392.5h5.5v5.5h-5.5zM219.4 398.7h5.5v5.5h-5.5zM219.6 405.1h5.5v5.5h-5.5zM218.8 411.7h5.5v5.5h-5.5zM219.3 418.2h5.5v5.5h-5.5zM219.5 424.5h5.5v5.5h-5.5zM223.4 425h4.4v4.4h-4.4zM219.3 430.7h5.5v5.5h-5.5zM225.7 132.2h5.5v5.5h-5.5zM225.6 138.3h5.5v5.5h-5.5zM225.7 144.4h5.5v5.5h-5.5zM226.3 151.3h5.5v5.5h-5.5zM226.4 157.4h5.5v5.5h-5.5zM225.8 164.1h5.5v5.5h-5.5zM225.4 170.2h5.5v5.5h-5.5zM229.3 170.8h4.4v4.4h-4.4zM225.7 176.6h5.5v5.5h-5.5zM225.6 182.3h5.5v5.5h-5.5zM225.6 188.9h5.5v5.5h-5.5zM226.1 192.6h4.4v4.4h-4.4zM226.2 194.9h5.5v5.5h-5.5zM225.8 201.5h5.5v5.5h-5.5zM229.7 202.1h4.4v4.4h-4.4zM225.7 208.1h5.5v5.5h-5.5zM226.3 211.9h4.4v4.4h-4.4zM225.9 214.6h5.5v5.5h-5.5zM226.4 218.4h4.4v4.4h-4.4zM225.4 220.6h5.5v5.5h-5.5zM225.5 226.9h5.5v5.5h-5.5zM225.2 233.6h5.5v5.5h-5.5zM229.1 234.2h4.4v4.4h-4.4zM225.5 239.9h5.5v5.5h-5.5zM226 243.7h4.4v4.4h-4.4zM225.7 246.1h5.5v5.5h-5.5zM225.4 252.7h5.5v5.5h-5.5zM225.9 256.4h4.4v4.4h-4.4zM226.1 258.9h5.5v5.5h-5.5zM225.8 265.4h5.5v5.5h-5.5zM226.3 269.2h4.4v4.4h-4.4zM225.5 271.8h5.5v5.5h-5.5zM229.4 272.3h4.4v4.4h-4.4zM225.8 278.1h5.5v5.5h-5.5zM225.5 284.3h5.5v5.5h-5.5zM229.4 284.9h4.4v4.4h-4.4zM225.2 290.8h5.5v5.5h-5.5zM225.8 296.9h5.5v5.5h-5.5zM225.8 303h5.5v5.5h-5.5zM226.2 310h5.5v5.5h-5.5zM226.8 313.8h4.4v4.4h-4.4zM225.7 316.4h5.5v5.5h-5.5zM226.1 322.3h5.5v5.5h-5.5zM229.9 322.8h4.4v4.4h-4.4zM225 329.2h5.5v5.5h-5.5zM226.3 335.4h5.5v5.5h-5.5zM225.4 341.5h5.5v5.5h-5.5zM225.6 348.6h5.5v5.5h-5.5zM225.9 354.6h5.5v5.5h-5.5zM226.3 360.5h5.5v5.5h-5.5zM225.6 367.3h5.5v5.5h-5.5zM225.7 373.4h5.5v5.5h-5.5zM225.7 379.4h5.5v5.5h-5.5zM225.5 385.9h5.5v5.5h-5.5zM225.3 393.1h5.5v5.5h-5.5zM225.4 399.3h5.5v5.5h-5.5zM225.6 405.6h5.5v5.5h-5.5zM229.5 406.2h4.4v4.4h-4.4zM225.9 411.3h5.5v5.5h-5.5zM226.3 417.8h5.5v5.5h-5.5zM225.7 425h5.5v5.5h-5.5zM225.9 431.2h5.5v5.5h-5.5zM232.5 131.7h5.5v5.5h-5.5zM232 138.6h5.5v5.5h-5.5zM232.6 144.5h5.5v5.5h-5.5zM232.4 151.1h5.5v5.5h-5.5zM232.1 157.3h5.5v5.5h-5.5zM232.4 163.5h5.5v5.5h-5.5zM231.5 170h5.5v5.5h-5.5zM233.1 176.2h5.5v5.5h-5.5zM232.4 182.9h5.5v5.5h-5.5zM233 186.7h4.4v4.4h-4.4zM232 189.2h5.5v5.5h-5.5zM232 195.2h5.5v5.5h-5.5zM232.7 201.4h5.5v5.5h-5.5zM233.2 205.2h4.4v4.4h-4.4zM232.4 208.6h5.5v5.5h-5.5zM232.5 215.1h5.5v5.5h-5.5zM232.2 220.8h5.5v5.5h-5.5zM232.2 227h5.5v5.5h-5.5zM232.7 233.7h5.5v5.5h-5.5zM232.1 239.6h5.5v5.5h-5.5zM232.3 245.9h5.5v5.5h-5.5zM232.4 253.2h5.5v5.5h-5.5zM231.8 258.6h5.5v5.5h-5.5zM235.7 259.2h4.4v4.4h-4.4zM232.3 265.2h5.5v5.5h-5.5zM232.1 271.7h5.5v5.5h-5.5zM232.7 275.4h4.4v4.4h-4.4zM232 277.7h5.5v5.5h-5.5zM233.1 284.2h5.5v5.5h-5.5zM233.6 287.9h4.4v4.4h-4.4zM232.2 290.8h5.5v5.5h-5.5zM231.7 297.3h5.5v5.5h-5.5zM232.3 301.1h4.4v4.4h-4.4zM232.6 303.6h5.5v5.5h-5.5zM231.7 310.4h5.5v5.5h-5.5zM232.6 315.9h5.5v5.5h-5.5zM232.1 322.9h5.5v5.5h-5.5zM231.7 329h5.5v5.5h-5.5zM232.1 335.9h5.5v5.5h-5.5zM232.1 342.1h5.5v5.5h-5.5zM232.1 348h5.5v5.5h-5.5zM232.7 354.9h5.5v5.5h-5.5zM232.5 361.3h5.5v5.5h-5.5zM232.2 366.9h5.5v5.5h-5.5zM236 367.5h4.4v4.4h-4.4zM231.8 373.2h5.5v5.5h-5.5zM232.5 380.2h5.5v5.5h-5.5zM232.4 385.9h5.5v5.5h-5.5zM236.2 386.5h4.4v4.4h-4.4zM232 392.7h5.5v5.5h-5.5zM232.3 398.9h5.5v5.5h-5.5zM232.1 405.2h5.5v5.5h-5.5zM232.7 411.2h5.5v5.5h-5.5zM232.4 417.9h5.5v5.5h-5.5zM236.2 418.5h4.4v4.4h-4.4zM232 424.8h5.5v5.5h-5.5zM232.6 430.5h5.5v5.5h-5.5zM238.7 131.7h5.5v5.5h-5.5zM242.5 132.3h4.4v4.4h-4.4zM238.9 138h5.5v5.5h-5.5zM242.8 138.6h4.4v4.4h-4.4zM238.9 144h5.5v5.5h-5.5zM239 150.8h5.5v5.5h-5.5zM239.5 154.5h4.4v4.4h-4.4zM238.7 157h5.5v5.5h-5.5zM239.2 163.6h5.5v5.5h-5.5zM243 164.1h4.4v4.4h-4.4zM239.2 170.1h5.5v5.5h-5.5zM239.4 176.3h5.5v5.5h-5.5zM239.2 182.9h5.5v5.5h-5.5zM239 189.2h5.5v5.5h-5.5zM238.5 195.6h5.5v5.5h-5.5zM238.6 201.4h5.5v5.5h-5.5zM239.1 205.1h4.4v4.4h-4.4zM239.3 209h5.5v5.5h-5.5zM238.6 213.5h5.5v5.5h-5.5zM239.2 217.2h4.4v4.4h-4.4zM239.1 221.1h5.5v5.5h-5.5zM242.9 221.6h4.4v4.4h-4.4zM238.6 227.1h5.5v5.5h-5.5zM238.9 234h5.5v5.5h-5.5zM242.8 234.5h4.4v4.4h-4.4zM238.8 240h5.5v5.5h-5.5zM239.4 243.7h4.4v4.4h-4.4zM239.2 246.4h5.5v5.5h-5.5zM243 246.9h4.4v4.4h-4.4zM239.2 252.6h5.5v5.5h-5.5zM238.5 259.3h5.5v5.5h-5.5zM239 264.9h5.5v5.5h-5.5zM238.7 271.4h5.5v5.5h-5.5zM239 278h5.5v5.5h-5.5zM238.9 284.7h5.5v5.5h-5.5zM238.6 290.9h5.5v5.5h-5.5zM239.1 294.6h4.4v4.4h-4.4zM239.1 297h5.5v5.5h-5.5zM238.8 303.7h5.5v5.5h-5.5zM238.9 309.7h5.5v5.5h-5.5zM238.7 316.2h5.5v5.5h-5.5zM242.5 316.8h4.4v4.4h-4.4zM238.9 322.2h5.5v5.5h-5.5zM239.5 329.2h5.5v5.5h-5.5zM239.2 335.9h5.5v5.5h-5.5zM239 341.8h5.5v5.5h-5.5zM238.7 347.5h5.5v5.5h-5.5zM238.9 354.4h5.5v5.5h-5.5zM239.2 360.8h5.5v5.5h-5.5zM238.5 367.5h5.5v5.5h-5.5zM239.2 373.3h5.5v5.5h-5.5zM239.7 377.1h4.4v4.4h-4.4zM238.9 379.5h5.5v5.5h-5.5zM238.9 386.4h5.5v5.5h-5.5zM238.7 392.6h5.5v5.5h-5.5zM239.3 396.4h4.4v4.4h-4.4zM238.9 399h5.5v5.5h-5.5zM239.2 405.5h5.5v5.5h-5.5zM243.1 406h4.4v4.4h-4.4zM239.2 412h5.5v5.5h-5.5zM239.8 415.7h4.4v4.4h-4.4zM239.3 418h5.5v5.5h-5.5zM238.9 424.1h5.5v5.5h-5.5zM239.5 430.9h5.5v5.5h-5.5zM245.4 132.4h5.5v5.5h-5.5zM245.5 138.1h5.5v5.5h-5.5zM245.6 145.1h5.5v5.5h-5.5zM245.3 151.6h5.5v5.5h-5.5zM245.8 157.4h5.5v5.5h-5.5zM245.4 163.1h5.5v5.5h-5.5zM245.3 170.1h5.5v5.5h-5.5zM249.2 170.6h4.4v4.4h-4.4zM245.4 176.4h5.5v5.5h-5.5zM245.7 182.9h5.5v5.5h-5.5zM245.2 189.4h5.5v5.5h-5.5zM245.1 195.5h5.5v5.5h-5.5zM249 196h4.4v4.4h-4.4zM245.3 202.1h5.5v5.5h-5.5zM249.1 202.6h4.4v4.4h-4.4zM245.4 208.1h5.5v5.5h-5.5zM245.4 214.5h5.5v5.5h-5.5zM245.9 218.2h4.4v4.4h-4.4zM246 220.9h5.5v5.5h-5.5zM249.8 221.4h4.4v4.4h-4.4zM246.2 227.3h5.5v5.5h-5.5zM245.4 233.5h5.5v5.5h-5.5zM245.8 240.2h5.5v5.5h-5.5zM249.6 240.7h4.4v4.4h-4.4zM245.8 246.1h5.5v5.5h-5.5zM245.6 252.3h5.5v5.5h-5.5zM246.2 256h4.4v4.4h-4.4zM245.6 258.9h5.5v5.5h-5.5zM246 264.9h5.5v5.5h-5.5zM245.7 271.4h5.5v5.5h-5.5zM245.8 277.9h5.5v5.5h-5.5zM245.8 284.6h5.5v5.5h-5.5zM249.7 285.1h4.4v4.4h-4.4zM245.8 290.5h5.5v5.5h-5.5zM245.2 297.3h5.5v5.5h-5.5zM245.7 301h4.4v4.4h-4.4zM245.1 303.5h5.5v5.5h-5.5zM245.8 309.6h5.5v5.5h-5.5zM245.7 316.9h5.5v5.5h-5.5zM245.8 322.4h5.5v5.5h-5.5zM246.3 326.1h4.4v4.4h-4.4zM245.7 329.2h5.5v5.5h-5.5zM245.9 335.1h5.5v5.5h-5.5zM246.4 338.8h4.4v4.4h-4.4zM245.7 341.8h5.5v5.5h-5.5zM246 348.3h5.5v5.5h-5.5zM246.5 352h4.4v4.4h-4.4zM245.7 354.7h5.5v5.5h-5.5zM246.2 360.6h5.5v5.5h-5.5zM245.8 367.4h5.5v5.5h-5.5zM245.2 373.3h5.5v5.5h-5.5zM245.8 380.8h5.5v5.5h-5.5zM245.2 386.1h5.5v5.5h-5.5zM249.1 386.6h4.4v4.4h-4.4zM245.3 392.5h5.5v5.5h-5.5zM245.1 399.1h5.5v5.5h-5.5zM245.8 405.2h5.5v5.5h-5.5zM249.7 405.8h4.4v4.4h-4.4zM245.9 411.6h5.5v5.5h-5.5zM245 417.8h5.5v5.5h-5.5zM245.4 424.7h5.5v5.5h-5.5zM245.4 430.5h5.5v5.5h-5.5zM252.7 131.7h5.5v5.5h-5.5zM252.3 137.8h5.5v5.5h-5.5zM252.3 144.2h5.5v5.5h-5.5zM252.9 147.9h4.4v4.4h-4.4zM252.2 151.1h5.5v5.5h-5.5zM252.3 157.1h5.5v5.5h-5.5zM251.7 163.8h5.5v5.5h-5.5zM252 170.5h5.5v5.5h-5.5zM252.5 176.5h5.5v5.5h-5.5zM253.1 180.2h4.4v4.4h-4.4zM251.8 182.6h5.5v5.5h-5.5zM252.3 189.1h5.5v5.5h-5.5zM256.1 189.7h4.4v4.4h-4.4zM252 195.1h5.5v5.5h-5.5zM251.7 201.5h5.5v5.5h-5.5zM251.9 208.3h5.5v5.5h-5.5zM252.1 215.1h5.5v5.5h-5.5zM256 215.6h4.4v4.4h-4.4zM252.6 220.6h5.5v5.5h-5.5zM256.4 221.2h4.4v4.4h-4.4zM252 227.4h5.5v5.5h-5.5zM252.5 233.4h5.5v5.5h-5.5zM252.3 240.3h5.5v5.5h-5.5zM252.3 246.8h5.5v5.5h-5.5zM252 252.2h5.5v5.5h-5.5zM255.9 252.8h4.4v4.4h-4.4zM251.9 259.3h5.5v5.5h-5.5zM251.9 265.4h5.5v5.5h-5.5zM251.9 272h5.5v5.5h-5.5zM255.7 272.6h4.4v4.4h-4.4zM251.7 277.8h5.5v5.5h-5.5zM252.1 284.3h5.5v5.5h-5.5zM252.1 290.6h5.5v5.5h-5.5zM252.7 294.4h4.4v4.4h-4.4zM251.8 297.1h5.5v5.5h-5.5zM251.9 303.8h5.5v5.5h-5.5zM251.7 309.6h5.5v5.5h-5.5zM252.5 316.1h5.5v5.5h-5.5zM252.1 322h5.5v5.5h-5.5zM252.5 329.1h5.5v5.5h-5.5zM252 335.2h5.5v5.5h-5.5zM252 341.6h5.5v5.5h-5.5zM255.9 342.2h4.4v4.4h-4.4zM252.6 348.2h5.5v5.5h-5.5zM252.4 354.4h5.5v5.5h-5.5zM251.9 360.1h5.5v5.5h-5.5zM252.3 366.9h5.5v5.5h-5.5zM252.2 373.7h5.5v5.5h-5.5zM252.7 377.5h4.4v4.4h-4.4zM251.9 380.1h5.5v5.5h-5.5zM252.1 386.2h5.5v5.5h-5.5zM255.9 386.8h4.4v4.4h-4.4zM251.9 392.8h5.5v5.5h-5.5zM252.6 398.2h5.5v5.5h-5.5zM251.6 406.1h5.5v5.5h-5.5zM252.6 412h5.5v5.5h-5.5zM252.1 418.2h5.5v5.5h-5.5zM251.8 424.3h5.5v5.5h-5.5zM252 430.8h5.5v5.5h-5.5zM258.8 131.4h5.5v5.5h-5.5zM259.4 135.1h4.4v4.4h-4.4zM258.7 138h5.5v5.5h-5.5zM259 144.5h5.5v5.5h-5.5zM258.6 150.6h5.5v5.5h-5.5zM259.4 157.7h5.5v5.5h-5.5zM259.9 161.4h4.4v4.4h-4.4zM258.7 164.1h5.5v5.5h-5.5zM259.3 167.8h4.4v4.4h-4.4zM259.1 170.1h5.5v5.5h-5.5zM259.7 173.8h4.4v4.4h-4.4zM258.6 176.2h5.5v5.5h-5.5zM258.4 182.5h5.5v5.5h-5.5zM262.2 183.1h4.4v4.4h-4.4zM258.7 188.6h5.5v5.5h-5.5zM258.8 195.5h5.5v5.5h-5.5zM259.4 199.3h4.4v4.4h-4.4zM258.9 201.8h5.5v5.5h-5.5zM259.1 207.8h5.5v5.5h-5.5zM262.9 208.3h4.4v4.4h-4.4zM258.9 214.1h5.5v5.5h-5.5zM258.8 220.5h5.5v5.5h-5.5zM258.2 226.5h5.5v5.5h-5.5zM262 227.1h4.4v4.4h-4.4zM258.6 233.7h5.5v5.5h-5.5zM258.6 239.7h5.5v5.5h-5.5zM258.7 246.2h5.5v5.5h-5.5zM259.3 252.4h5.5v5.5h-5.5zM258.9 259.2h5.5v5.5h-5.5zM259.5 262.9h4.4v4.4h-4.4zM258.4 265.2h5.5v5.5h-5.5zM258.9 271.8h5.5v5.5h-5.5zM259 277.7h5.5v5.5h-5.5zM262.8 278.2h4.4v4.4h-4.4zM258.6 284.5h5.5v5.5h-5.5zM259.1 290.1h5.5v5.5h-5.5zM259.7 293.8h4.4v4.4h-4.4zM258.7 297.4h5.5v5.5h-5.5zM259.3 301.2h4.4v4.4h-4.4zM258.7 303.7h5.5v5.5h-5.5zM259.2 307.5h4.4v4.4h-4.4zM258.7 309.7h5.5v5.5h-5.5zM258.7 315.9h5.5v5.5h-5.5zM258.3 323h5.5v5.5h-5.5zM258.7 329.1h5.5v5.5h-5.5zM259.3 332.8h4.4v4.4h-4.4zM259.3 334.7h5.5v5.5h-5.5zM258.4 341.3h5.5v5.5h-5.5zM259 345.1h4.4v4.4h-4.4zM258.9 348.1h5.5v5.5h-5.5zM262.7 348.7h4.4v4.4h-4.4zM258.9 354.5h5.5v5.5h-5.5zM259 360.5h5.5v5.5h-5.5zM262.8 361.1h4.4v4.4h-4.4zM258.6 366.9h5.5v5.5h-5.5zM259 373.5h5.5v5.5h-5.5zM259.7 380.2h5.5v5.5h-5.5zM257.9 386.2h5.5v5.5h-5.5zM261.7 386.8h4.4v4.4h-4.4zM259.3 392.2h5.5v5.5h-5.5zM258.9 398.2h5.5v5.5h-5.5zM262.8 398.8h4.4v4.4h-4.4zM258.8 405h5.5v5.5h-5.5zM258.9 412h5.5v5.5h-5.5zM258.3 417.6h5.5v5.5h-5.5zM262.2 418.2h4.4v4.4h-4.4zM258.6 424.4h5.5v5.5h-5.5zM262.4 425h4.4v4.4h-4.4zM259.4 430.8h5.5v5.5h-5.5zM265.1 132h5.5v5.5h-5.5zM265.3 138.1h5.5v5.5h-5.5zM265.4 145.3h5.5v5.5h-5.5zM265.6 150.8h5.5v5.5h-5.5zM266.1 154.6h4.4v4.4h-4.4zM265.4 157.2h5.5v5.5h-5.5zM265.4 163.6h5.5v5.5h-5.5zM266 167.4h4.4v4.4h-4.4zM265.3 170.1h5.5v5.5h-5.5zM265 176.6h5.5v5.5h-5.5zM265.3 183h5.5v5.5h-5.5zM265.1 189h5.5v5.5h-5.5zM265.5 195.7h5.5v5.5h-5.5zM265.2 201.7h5.5v5.5h-5.5zM265.5 208.2h5.5v5.5h-5.5zM269.3 208.7h4.4v4.4h-4.4zM265.3 214.1h5.5v5.5h-5.5zM265.8 217.8h4.4v4.4h-4.4zM265.3 221.4h5.5v5.5h-5.5zM269.2 221.9h4.4v4.4h-4.4zM265.4 227.4h5.5v5.5h-5.5zM265.5 234.4h5.5v5.5h-5.5zM265.1 239.5h5.5v5.5h-5.5zM265.4 246.9h5.5v5.5h-5.5zM265.6 252.9h5.5v5.5h-5.5zM269.5 253.4h4.4v4.4h-4.4zM265.8 259.2h5.5v5.5h-5.5zM265.6 265.5h5.5v5.5h-5.5zM265.5 271.7h5.5v5.5h-5.5zM265 278.2h5.5v5.5h-5.5zM265.3 284.7h5.5v5.5h-5.5zM265.7 290.6h5.5v5.5h-5.5zM265.3 297.5h5.5v5.5h-5.5zM265 303.4h5.5v5.5h-5.5zM264.8 310h5.5v5.5h-5.5zM265.5 316h5.5v5.5h-5.5zM265.7 323h5.5v5.5h-5.5zM265.2 329.5h5.5v5.5h-5.5zM265.6 335.1h5.5v5.5h-5.5zM265.4 341.7h5.5v5.5h-5.5zM265.8 348h5.5v5.5h-5.5zM266.3 351.7h4.4v4.4h-4.4zM265.4 353.9h5.5v5.5h-5.5zM265.3 361.3h5.5v5.5h-5.5zM265.1 367.6h5.5v5.5h-5.5zM265.1 373.1h5.5v5.5h-5.5zM265 380.2h5.5v5.5h-5.5zM265 386.2h5.5v5.5h-5.5zM265.4 392.8h5.5v5.5h-5.5zM265.1 398.6h5.5v5.5h-5.5zM265.1 405.2h5.5v5.5h-5.5zM265.1 411.6h5.5v5.5h-5.5zM265.5 418.6h5.5v5.5h-5.5zM265.3 424.4h5.5v5.5h-5.5zM269.2 424.9h4.4v4.4h-4.4zM265.2 430.7h5.5v5.5h-5.5zM271.9 132.1h5.5v5.5h-5.5zM271.9 137.9h5.5v5.5h-5.5zM272 144.3h5.5v5.5h-5.5zM272.5 148.1h4.4v4.4h-4.4zM271.4 151.4h5.5v5.5h-5.5zM272.3 157.3h5.5v5.5h-5.5zM272.8 161h4.4v4.4h-4.4zM271.9 163.9h5.5v5.5h-5.5zM272 170.7h5.5v5.5h-5.5zM272.6 174.5h4.4v4.4h-4.4zM272 176h5.5v5.5h-5.5zM272.1 183.1h5.5v5.5h-5.5zM272 188.7h5.5v5.5h-5.5zM271.8 195.5h5.5v5.5h-5.5zM272.6 201.7h5.5v5.5h-5.5zM272.3 208.3h5.5v5.5h-5.5zM276.2 208.8h4.4v4.4h-4.4zM271.6 214.7h5.5v5.5h-5.5zM272 221.2h5.5v5.5h-5.5zM275.8 221.8h4.4v4.4h-4.4zM272.1 227.2h5.5v5.5h-5.5zM276 227.7h4.4v4.4h-4.4zM271.3 233.7h5.5v5.5h-5.5zM271.3 239.7h5.5v5.5h-5.5zM271.9 243.4h4.4v4.4h-4.4zM271.5 246.4h5.5v5.5h-5.5zM271.8 252.9h5.5v5.5h-5.5zM271.8 259h5.5v5.5h-5.5zM272.5 265.5h5.5v5.5h-5.5zM273.1 269.3h4.4v4.4h-4.4zM272.4 271.4h5.5v5.5h-5.5zM271.8 278.7h5.5v5.5h-5.5zM272.1 284.1h5.5v5.5h-5.5zM272.4 290.6h5.5v5.5h-5.5zM272.4 297.1h5.5v5.5h-5.5zM276.2 297.7h4.4v4.4h-4.4zM272.3 303.5h5.5v5.5h-5.5zM276.1 304.1h4.4v4.4h-4.4zM272.4 309.3h5.5v5.5h-5.5zM271.8 315.9h5.5v5.5h-5.5zM272.4 319.6h4.4v4.4h-4.4zM271.8 322.5h5.5v5.5h-5.5zM271.7 328.9h5.5v5.5h-5.5zM272 335.3h5.5v5.5h-5.5zM272.3 341.9h5.5v5.5h-5.5zM271.9 348h5.5v5.5h-5.5zM271.9 354h5.5v5.5h-5.5zM272.2 361h5.5v5.5h-5.5zM271.8 367.3h5.5v5.5h-5.5zM271.8 372.9h5.5v5.5h-5.5zM272.1 379.9h5.5v5.5h-5.5zM271.7 386.4h5.5v5.5h-5.5zM272 392.3h5.5v5.5h-5.5zM275.9 392.9h4.4v4.4h-4.4zM272.2 399.5h5.5v5.5h-5.5zM276 400h4.4v4.4h-4.4zM271.7 405.3h5.5v5.5h-5.5zM272.2 409h4.4v4.4h-4.4zM272.1 411.5h5.5v5.5h-5.5zM272.2 417.6h5.5v5.5h-5.5zM271.9 424.5h5.5v5.5h-5.5zM271.9 430.9h5.5v5.5h-5.5zM278.9 132.2h5.5v5.5h-5.5zM278.1 138.5h5.5v5.5h-5.5zM278.3 144.2h5.5v5.5h-5.5zM278.8 148h4.4v4.4h-4.4zM278.6 151.1h5.5v5.5h-5.5zM277.9 157.2h5.5v5.5h-5.5zM278.4 163.4h5.5v5.5h-5.5zM278.6 169.7h5.5v5.5h-5.5zM278.2 176h5.5v5.5h-5.5zM278.8 179.7h4.4v4.4h-4.4zM279 182.7h5.5v5.5h-5.5zM278.4 189.5h5.5v5.5h-5.5zM278.7 195.4h5.5v5.5h-5.5zM279.3 199.2h4.4v4.4h-4.4zM278.7 201.9h5.5v5.5h-5.5zM278.5 207.9h5.5v5.5h-5.5zM278.5 215.2h5.5v5.5h-5.5zM278.5 221.3h5.5v5.5h-5.5zM278.6 227.1h5.5v5.5h-5.5zM278.4 233.4h5.5v5.5h-5.5zM278.8 240h5.5v5.5h-5.5zM278.4 246.2h5.5v5.5h-5.5zM278.3 252.7h5.5v5.5h-5.5zM278.6 258.7h5.5v5.5h-5.5zM278.8 264.6h5.5v5.5h-5.5zM278.4 272h5.5v5.5h-5.5zM278.3 278.7h5.5v5.5h-5.5zM278.1 284.1h5.5v5.5h-5.5zM278.5 290.9h5.5v5.5h-5.5zM278.5 297.3h5.5v5.5h-5.5zM278.3 303.8h5.5v5.5h-5.5zM278.7 310.1h5.5v5.5h-5.5zM278.5 316.3h5.5v5.5h-5.5zM279 320.1h4.4v4.4h-4.4zM278.7 323.1h5.5v5.5h-5.5zM282.6 323.6h4.4v4.4h-4.4zM278.3 329.6h5.5v5.5h-5.5zM278.8 333.4h4.4v4.4h-4.4zM279 334.9h5.5v5.5h-5.5zM279.6 338.7h4.4v4.4h-4.4zM278.4 341.3h5.5v5.5h-5.5zM279 345h4.4v4.4h-4.4zM279.1 348.3h5.5v5.5h-5.5zM278.4 354.2h5.5v5.5h-5.5zM278.6 360.8h5.5v5.5h-5.5zM278.4 367.3h5.5v5.5h-5.5zM282.2 367.9h4.4v4.4h-4.4zM279 373.7h5.5v5.5h-5.5zM278.8 380h5.5v5.5h-5.5zM278.3 386.3h5.5v5.5h-5.5zM278.9 390h4.4v4.4h-4.4zM278.9 392.3h5.5v5.5h-5.5zM278.8 399.5h5.5v5.5h-5.5zM282.6 400h4.4v4.4h-4.4zM278.3 405.5h5.5v5.5h-5.5zM278.9 409.3h4.4v4.4h-4.4zM278.6 411.7h5.5v5.5h-5.5zM278.5 417.7h5.5v5.5h-5.5zM282.4 418.3h4.4v4.4h-4.4zM278.1 424.7h5.5v5.5h-5.5zM278.1 430.6h5.5v5.5h-5.5zM285.2 131.7h5.5v5.5h-5.5zM289 132.2h4.4v4.4h-4.4zM284.8 138.4h5.5v5.5h-5.5zM285.1 144.3h5.5v5.5h-5.5zM285.4 151.2h5.5v5.5h-5.5zM285.3 157.1h5.5v5.5h-5.5zM285 163.3h5.5v5.5h-5.5zM284.9 170.1h5.5v5.5h-5.5zM285.7 176.7h5.5v5.5h-5.5zM285 182.5h5.5v5.5h-5.5zM285.3 189.1h5.5v5.5h-5.5zM285.5 195.5h5.5v5.5h-5.5zM285.1 202.1h5.5v5.5h-5.5zM289 202.6h4.4v4.4h-4.4zM285.3 208h5.5v5.5h-5.5zM285.3 214.4h5.5v5.5h-5.5zM284.9 221h5.5v5.5h-5.5zM285.5 227.1h5.5v5.5h-5.5zM285.6 233.7h5.5v5.5h-5.5zM286.2 237.5h4.4v4.4h-4.4zM285.6 240h5.5v5.5h-5.5zM286.1 243.7h4.4v4.4h-4.4zM285.3 245.8h5.5v5.5h-5.5zM285 253.2h5.5v5.5h-5.5zM284.6 259.1h5.5v5.5h-5.5zM284.8 265.2h5.5v5.5h-5.5zM285.4 272.1h5.5v5.5h-5.5zM285.3 278h5.5v5.5h-5.5zM285.2 284.7h5.5v5.5h-5.5zM285.8 288.5h4.4v4.4h-4.4zM285.1 291.2h5.5v5.5h-5.5zM285.3 297.2h5.5v5.5h-5.5zM289.2 297.8h4.4v4.4h-4.4zM284.9 303.8h5.5v5.5h-5.5zM284.8 309.4h5.5v5.5h-5.5zM288.7 310h4.4v4.4h-4.4zM285.2 316.6h5.5v5.5h-5.5zM285.5 322.8h5.5v5.5h-5.5zM284.7 328.8h5.5v5.5h-5.5zM285 335.3h5.5v5.5h-5.5zM285.6 339.1h4.4v4.4h-4.4zM285.5 341.6h5.5v5.5h-5.5zM285 347.9h5.5v5.5h-5.5zM284.8 354.6h5.5v5.5h-5.5zM285.5 360.7h5.5v5.5h-5.5zM286.1 364.4h4.4v4.4h-4.4zM285.7 366.8h5.5v5.5h-5.5zM285.1 373.8h5.5v5.5h-5.5zM288.9 374.3h4.4v4.4h-4.4zM285.2 379.6h5.5v5.5h-5.5zM285.2 385.9h5.5v5.5h-5.5zM285.4 392.5h5.5v5.5h-5.5zM289.3 393.1h4.4v4.4h-4.4zM285.5 398.7h5.5v5.5h-5.5zM284.8 405.2h5.5v5.5h-5.5zM285.4 411.5h5.5v5.5h-5.5zM285 418h5.5v5.5h-5.5zM285.5 424h5.5v5.5h-5.5zM284.9 430.2h5.5v5.5h-5.5zM291.8 131.6h5.5v5.5h-5.5zM291.8 138.9h5.5v5.5h-5.5zM291.9 144.3h5.5v5.5h-5.5zM291.8 151h5.5v5.5h-5.5zM292.4 154.8h4.4v4.4h-4.4zM292.2 157.5h5.5v5.5h-5.5zM292 163.9h5.5v5.5h-5.5zM291.4 170.3h5.5v5.5h-5.5zM295.3 170.8h4.4v4.4h-4.4zM292.1 176.3h5.5v5.5h-5.5zM292.2 183h5.5v5.5h-5.5zM291.5 189.2h5.5v5.5h-5.5zM291.9 195.5h5.5v5.5h-5.5zM291.5 201.7h5.5v5.5h-5.5zM295.3 202.2h4.4v4.4h-4.4zM292.1 208.1h5.5v5.5h-5.5zM291.9 214.8h5.5v5.5h-5.5zM292.1 220.6h5.5v5.5h-5.5zM291.8 227.5h5.5v5.5h-5.5zM292.1 233.5h5.5v5.5h-5.5zM296 234h4.4v4.4h-4.4zM291.6 240h5.5v5.5h-5.5zM291.9 246.2h5.5v5.5h-5.5zM295.8 246.8h4.4v4.4h-4.4zM291.5 252.5h5.5v5.5h-5.5zM292 256.3h4.4v4.4h-4.4zM291.3 258.9h5.5v5.5h-5.5zM291.8 262.7h4.4v4.4h-4.4zM292.1 265.5h5.5v5.5h-5.5zM292.7 269.3h4.4v4.4h-4.4zM291.6 271.8h5.5v5.5h-5.5zM291.7 278.3h5.5v5.5h-5.5zM291.8 284.3h5.5v5.5h-5.5zM291.9 290.8h5.5v5.5h-5.5zM291.5 297.1h5.5v5.5h-5.5zM295.4 297.7h4.4v4.4h-4.4zM292.3 303.8h5.5v5.5h-5.5zM291.8 310.2h5.5v5.5h-5.5zM291.8 316.6h5.5v5.5h-5.5zM292.3 320.3h4.4v4.4h-4.4zM292.1 323.3h5.5v5.5h-5.5zM292.7 327.1h4.4v4.4h-4.4zM291.8 328.7h5.5v5.5h-5.5zM292 335.8h5.5v5.5h-5.5zM291.5 341.3h5.5v5.5h-5.5zM295.4 341.9h4.4v4.4h-4.4zM291.3 348.4h5.5v5.5h-5.5zM291.8 352.1h4.4v4.4h-4.4zM291.7 354.1h5.5v5.5h-5.5zM292.3 357.8h4.4v4.4h-4.4zM292.5 361h5.5v5.5h-5.5zM291.3 366.8h5.5v5.5h-5.5zM292 373.4h5.5v5.5h-5.5zM292 379.8h5.5v5.5h-5.5zM295.8 380.3h4.4v4.4h-4.4zM291.8 386.5h5.5v5.5h-5.5zM292.1 392.4h5.5v5.5h-5.5zM291.9 398.7h5.5v5.5h-5.5zM292 405.3h5.5v5.5h-5.5zM291.7 412.1h5.5v5.5h-5.5zM295.5 412.7h4.4v4.4h-4.4zM291.8 418.5h5.5v5.5h-5.5zM291.7 424.4h5.5v5.5h-5.5zM292.2 430.2h5.5v5.5h-5.5zM298.7 131.7h5.5v5.5h-5.5zM302.5 132.3h4.4v4.4h-4.4zM298 138.1h5.5v5.5h-5.5zM298.2 144.6h5.5v5.5h-5.5zM298.6 150.7h5.5v5.5h-5.5zM299.2 154.5h4.4v4.4h-4.4zM297.9 157.1h5.5v5.5h-5.5zM298.3 163.8h5.5v5.5h-5.5zM298.9 167.6h4.4v4.4h-4.4zM299 169.3h5.5v5.5h-5.5zM298.5 176.1h5.5v5.5h-5.5zM302.3 176.7h4.4v4.4h-4.4zM298.1 182.9h5.5v5.5h-5.5zM298.8 189h5.5v5.5h-5.5zM298.9 195.6h5.5v5.5h-5.5zM299.4 199.4h4.4v4.4h-4.4zM298.6 201.6h5.5v5.5h-5.5zM298.8 207.9h5.5v5.5h-5.5zM298.5 214.4h5.5v5.5h-5.5zM299 218.1h4.4v4.4h-4.4zM298.7 220.8h5.5v5.5h-5.5zM302.5 221.4h4.4v4.4h-4.4zM297.9 227.5h5.5v5.5h-5.5zM297.7 233.1h5.5v5.5h-5.5zM298.7 240.1h5.5v5.5h-5.5zM299.2 243.9h4.4v4.4h-4.4zM298.3 246.4h5.5v5.5h-5.5zM298.8 250.2h4.4v4.4h-4.4zM298.8 252.6h5.5v5.5h-5.5zM298.2 259.4h5.5v5.5h-5.5zM297.4 265.2h5.5v5.5h-5.5zM298.6 272h5.5v5.5h-5.5zM298.5 277.9h5.5v5.5h-5.5zM298 284h5.5v5.5h-5.5zM297.9 290.5h5.5v5.5h-5.5zM301.8 291h4.4v4.4h-4.4zM298.6 297h5.5v5.5h-5.5zM298.4 303.3h5.5v5.5h-5.5zM298.2 309.9h5.5v5.5h-5.5zM298.1 316h5.5v5.5h-5.5zM298.3 322.7h5.5v5.5h-5.5zM297.9 329h5.5v5.5h-5.5zM298.3 335.2h5.5v5.5h-5.5zM298.3 341.5h5.5v5.5h-5.5zM298.2 347.8h5.5v5.5h-5.5zM298.2 354.6h5.5v5.5h-5.5zM302 355.1h4.4v4.4h-4.4zM298.2 360.6h5.5v5.5h-5.5zM298.3 367.4h5.5v5.5h-5.5zM298.8 371.2h4.4v4.4h-4.4zM298.3 373.4h5.5v5.5h-5.5zM298.9 377.2h4.4v4.4h-4.4zM298.7 380.1h5.5v5.5h-5.5zM298.3 386.2h5.5v5.5h-5.5zM298.7 392.5h5.5v5.5h-5.5zM298.2 398.9h5.5v5.5h-5.5zM302 399.5h4.4v4.4h-4.4zM298.4 405h5.5v5.5h-5.5zM299 408.8h4.4v4.4h-4.4zM298.2 411.7h5.5v5.5h-5.5zM298.7 415.4h4.4v4.4h-4.4zM298.4 417.5h5.5v5.5h-5.5zM298.1 424.6h5.5v5.5h-5.5zM298.4 430.5h5.5v5.5h-5.5zM304.7 132.2h5.5v5.5h-5.5zM305.3 138.1h5.5v5.5h-5.5zM304.9 144.7h5.5v5.5h-5.5zM305.3 151h5.5v5.5h-5.5zM309.1 151.5h4.4v4.4h-4.4zM304.6 157.4h5.5v5.5h-5.5zM305.2 161.1h4.4v4.4h-4.4zM304.6 163.4h5.5v5.5h-5.5zM305.2 167.1h4.4v4.4h-4.4zM304.5 169.7h5.5v5.5h-5.5zM308.3 170.2h4.4v4.4h-4.4zM305.2 176.7h5.5v5.5h-5.5zM305.3 182.6h5.5v5.5h-5.5zM305.8 186.3h4.4v4.4h-4.4zM305 189.3h5.5v5.5h-5.5zM304.9 195.1h5.5v5.5h-5.5zM308.8 195.6h4.4v4.4h-4.4zM305.1 201.5h5.5v5.5h-5.5zM304.9 208.3h5.5v5.5h-5.5zM304.8 214.7h5.5v5.5h-5.5zM304.5 221h5.5v5.5h-5.5zM305.1 224.8h4.4v4.4h-4.4zM305.1 227h5.5v5.5h-5.5zM305.7 230.8h4.4v4.4h-4.4zM305.1 233.6h5.5v5.5h-5.5zM304.9 240.4h5.5v5.5h-5.5zM304.4 246.3h5.5v5.5h-5.5zM305.1 252.6h5.5v5.5h-5.5zM304.9 258.7h5.5v5.5h-5.5zM305.3 266h5.5v5.5h-5.5zM304.8 271.9h5.5v5.5h-5.5zM305.4 275.6h4.4v4.4h-4.4zM304.9 278.4h5.5v5.5h-5.5zM305.6 284.2h5.5v5.5h-5.5zM304.6 290.2h5.5v5.5h-5.5zM304.8 297.1h5.5v5.5h-5.5zM305 304.3h5.5v5.5h-5.5zM304.5 309.9h5.5v5.5h-5.5zM304.9 316.3h5.5v5.5h-5.5zM304.5 322.8h5.5v5.5h-5.5zM304.8 328.8h5.5v5.5h-5.5zM305 335.4h5.5v5.5h-5.5zM304.4 341.8h5.5v5.5h-5.5zM304.9 345.6h4.4v4.4h-4.4zM304.8 348.2h5.5v5.5h-5.5zM304.9 355h5.5v5.5h-5.5zM305 360.4h5.5v5.5h-5.5zM305.2 366.9h5.5v5.5h-5.5zM304.4 373.4h5.5v5.5h-5.5zM305 377.2h4.4v4.4h-4.4zM305.5 379.7h5.5v5.5h-5.5zM305.2 386.1h5.5v5.5h-5.5zM305 392h5.5v5.5h-5.5zM304.9 398.3h5.5v5.5h-5.5zM304.8 405.3h5.5v5.5h-5.5zM305 412.2h5.5v5.5h-5.5zM304.8 417.3h5.5v5.5h-5.5zM305 424.1h5.5v5.5h-5.5zM308.9 424.7h4.4v4.4h-4.4zM305.1 431h5.5v5.5h-5.5zM312.1 131.7h5.5v5.5h-5.5zM311 138.4h5.5v5.5h-5.5zM311.5 142.1h4.4v4.4h-4.4zM311.5 144.8h5.5v5.5h-5.5zM311 151.3h5.5v5.5h-5.5zM311.6 155h4.4v4.4h-4.4zM312.2 157.3h5.5v5.5h-5.5zM311.4 163.4h5.5v5.5h-5.5zM311.3 170.5h5.5v5.5h-5.5zM311.6 176h5.5v5.5h-5.5zM311.5 183.3h5.5v5.5h-5.5zM315.3 183.8h4.4v4.4h-4.4zM311 188.9h5.5v5.5h-5.5zM311.6 192.6h4.4v4.4h-4.4zM310.8 195.1h5.5v5.5h-5.5zM311.4 201.6h5.5v5.5h-5.5zM311.9 205.4h4.4v4.4h-4.4zM311.6 207.5h5.5v5.5h-5.5zM311.7 214.9h5.5v5.5h-5.5zM311.8 221h5.5v5.5h-5.5zM311.4 227.4h5.5v5.5h-5.5zM315.2 228h4.4v4.4h-4.4zM311.1 233.5h5.5v5.5h-5.5zM311.1 240.4h5.5v5.5h-5.5zM314.9 240.9h4.4v4.4h-4.4zM311.2 245.9h5.5v5.5h-5.5zM311.2 252.6h5.5v5.5h-5.5zM315.1 253.1h4.4v4.4h-4.4zM311.8 258.9h5.5v5.5h-5.5zM311.5 265.8h5.5v5.5h-5.5zM311.8 271.4h5.5v5.5h-5.5zM311.8 278.3h5.5v5.5h-5.5zM315.6 278.8h4.4v4.4h-4.4zM311.5 284.8h5.5v5.5h-5.5zM311.6 291h5.5v5.5h-5.5zM311.9 296.7h5.5v5.5h-5.5zM311.2 304h5.5v5.5h-5.5zM311.7 307.8h4.4v4.4h-4.4zM311.4 309.7h5.5v5.5h-5.5zM311.7 316.5h5.5v5.5h-5.5zM312.2 320.2h4.4v4.4h-4.4zM311.7 322.2h5.5v5.5h-5.5zM311.9 328.8h5.5v5.5h-5.5zM312.1 334.9h5.5v5.5h-5.5zM311.9 341.5h5.5v5.5h-5.5zM312.5 345.2h4.4v4.4h-4.4zM311.7 348h5.5v5.5h-5.5zM311.7 354.1h5.5v5.5h-5.5zM311.3 360.4h5.5v5.5h-5.5zM311.2 367.3h5.5v5.5h-5.5zM311.2 373.8h5.5v5.5h-5.5zM311.8 380.1h5.5v5.5h-5.5zM311.2 386.1h5.5v5.5h-5.5zM315 386.6h4.4v4.4h-4.4zM311.1 392.2h5.5v5.5h-5.5zM311.2 398.6h5.5v5.5h-5.5zM311.2 405.3h5.5v5.5h-5.5zM311.7 411.9h5.5v5.5h-5.5zM311.8 417.9h5.5v5.5h-5.5zM311.6 424.7h5.5v5.5h-5.5zM311.5 430.7h5.5v5.5h-5.5zM318.4 131.3h5.5v5.5h-5.5zM319 135.1h4.4v4.4h-4.4zM318.3 138.3h5.5v5.5h-5.5zM318.9 142.1h4.4v4.4h-4.4zM318.1 145.1h5.5v5.5h-5.5zM318 150.7h5.5v5.5h-5.5zM321.9 151.2h4.4v4.4h-4.4zM317.6 157.6h5.5v5.5h-5.5zM321.4 158.1h4.4v4.4h-4.4zM318 163.6h5.5v5.5h-5.5zM318.5 169.9h5.5v5.5h-5.5zM318.5 176.5h5.5v5.5h-5.5zM317.9 182.9h5.5v5.5h-5.5zM318.4 186.7h4.4v4.4h-4.4zM318.1 189.4h5.5v5.5h-5.5zM318.8 195.9h5.5v5.5h-5.5zM318.5 202h5.5v5.5h-5.5zM318.3 208.2h5.5v5.5h-5.5zM318.8 212h4.4v4.4h-4.4zM318.2 215.1h5.5v5.5h-5.5zM318.2 220.1h5.5v5.5h-5.5zM318.3 227.2h5.5v5.5h-5.5zM318 233.8h5.5v5.5h-5.5zM318.6 239.2h5.5v5.5h-5.5zM318 246.5h5.5v5.5h-5.5zM318.8 252.6h5.5v5.5h-5.5zM317.9 259.2h5.5v5.5h-5.5zM317.9 265.6h5.5v5.5h-5.5zM318.1 271.5h5.5v5.5h-5.5zM317.9 278.7h5.5v5.5h-5.5zM321.8 279.2h4.4v4.4h-4.4zM318.4 284.7h5.5v5.5h-5.5zM318.1 290.9h5.5v5.5h-5.5zM317.7 297.2h5.5v5.5h-5.5zM318.3 301h4.4v4.4h-4.4zM318.5 303.4h5.5v5.5h-5.5zM318.3 309.6h5.5v5.5h-5.5zM318 316.3h5.5v5.5h-5.5zM318.4 323h5.5v5.5h-5.5zM318.1 329.3h5.5v5.5h-5.5zM318.1 335.2h5.5v5.5h-5.5zM321.9 335.7h4.4v4.4h-4.4zM318.1 341.9h5.5v5.5h-5.5zM318.1 348.2h5.5v5.5h-5.5zM317.2 354.2h5.5v5.5h-5.5zM318.2 361.1h5.5v5.5h-5.5zM318.8 364.8h4.4v4.4h-4.4zM318.7 367h5.5v5.5h-5.5zM319.2 370.7h4.4v4.4h-4.4zM317.5 373.6h5.5v5.5h-5.5zM318.5 380h5.5v5.5h-5.5zM318.3 386.3h5.5v5.5h-5.5zM318.1 392.5h5.5v5.5h-5.5zM317.8 399.4h5.5v5.5h-5.5zM318.1 405.3h5.5v5.5h-5.5zM317.9 412h5.5v5.5h-5.5zM317.6 417.7h5.5v5.5h-5.5zM318 424.5h5.5v5.5h-5.5zM321.8 425.1h4.4v4.4h-4.4zM318 430.6h5.5v5.5h-5.5zM324.5 132.3h5.5v5.5h-5.5zM324.1 138.7h5.5v5.5h-5.5zM324.5 144.2h5.5v5.5h-5.5zM325.1 148h4.4v4.4h-4.4zM324.7 150.2h5.5v5.5h-5.5zM324.7 157.7h5.5v5.5h-5.5zM324.8 163.4h5.5v5.5h-5.5zM324.9 169.8h5.5v5.5h-5.5zM328.8 170.4h4.4v4.4h-4.4zM324.9 176.5h5.5v5.5h-5.5zM324.7 182.9h5.5v5.5h-5.5zM324.9 188.8h5.5v5.5h-5.5zM324.5 195.7h5.5v5.5h-5.5zM328.3 196.2h4.4v4.4h-4.4zM324.9 201.3h5.5v5.5h-5.5zM324.7 208.5h5.5v5.5h-5.5zM325.2 212.2h4.4v4.4h-4.4zM324.6 214.4h5.5v5.5h-5.5zM324.9 220.8h5.5v5.5h-5.5zM328.7 221.3h4.4v4.4h-4.4zM324.5 227h5.5v5.5h-5.5zM328.4 227.6h4.4v4.4h-4.4zM324.5 233.8h5.5v5.5h-5.5zM324.8 239.6h5.5v5.5h-5.5zM324.7 246.3h5.5v5.5h-5.5zM325.2 252.8h5.5v5.5h-5.5zM324.5 259.6h5.5v5.5h-5.5zM324.5 265.6h5.5v5.5h-5.5zM325.5 271.9h5.5v5.5h-5.5zM325 278.5h5.5v5.5h-5.5zM328.9 279h4.4v4.4h-4.4zM324.4 284.3h5.5v5.5h-5.5zM325.2 291h5.5v5.5h-5.5zM325.8 294.8h4.4v4.4h-4.4zM324.6 297.2h5.5v5.5h-5.5zM325 303.7h5.5v5.5h-5.5zM324.5 309.7h5.5v5.5h-5.5zM324.8 316.8h5.5v5.5h-5.5zM324.6 323.2h5.5v5.5h-5.5zM324.7 329.4h5.5v5.5h-5.5zM324.7 335.4h5.5v5.5h-5.5zM324.7 342h5.5v5.5h-5.5zM324.6 347.7h5.5v5.5h-5.5zM324.6 354.6h5.5v5.5h-5.5zM325.1 360.6h5.5v5.5h-5.5zM325.7 364.3h4.4v4.4h-4.4zM324.8 367.2h5.5v5.5h-5.5zM325.3 371h4.4v4.4h-4.4zM325 373.2h5.5v5.5h-5.5zM324.3 380.3h5.5v5.5h-5.5zM328.2 380.8h4.4v4.4h-4.4zM324.8 386.3h5.5v5.5h-5.5zM324.1 393h5.5v5.5h-5.5zM324.5 398.7h5.5v5.5h-5.5zM324.9 405h5.5v5.5h-5.5zM325.4 411.4h5.5v5.5h-5.5zM324.9 418.3h5.5v5.5h-5.5zM324.4 424h5.5v5.5h-5.5zM324.3 430.8h5.5v5.5h-5.5zM331.2 131.8h5.5v5.5h-5.5zM331.6 138.4h5.5v5.5h-5.5zM332 145.1h5.5v5.5h-5.5zM331.7 150.9h5.5v5.5h-5.5zM331.5 157.3h5.5v5.5h-5.5zM330.9 163.5h5.5v5.5h-5.5zM331.8 170.4h5.5v5.5h-5.5zM335.7 170.9h4.4v4.4h-4.4zM331.7 176.6h5.5v5.5h-5.5zM331.2 182.4h5.5v5.5h-5.5zM331.7 188.7h5.5v5.5h-5.5zM331.3 195.3h5.5v5.5h-5.5zM335.1 195.8h4.4v4.4h-4.4zM331 201.9h5.5v5.5h-5.5zM331.7 208.2h5.5v5.5h-5.5zM331.6 214.6h5.5v5.5h-5.5zM331.3 221.3h5.5v5.5h-5.5zM331.1 227h5.5v5.5h-5.5zM331.5 233.6h5.5v5.5h-5.5zM331.5 239.9h5.5v5.5h-5.5zM331.3 246.8h5.5v5.5h-5.5zM331.6 252.6h5.5v5.5h-5.5zM331.1 259.2h5.5v5.5h-5.5zM334.9 259.7h4.4v4.4h-4.4zM330.4 265.5h5.5v5.5h-5.5zM331 269.2h4.4v4.4h-4.4zM331.4 272.2h5.5v5.5h-5.5zM331.3 277.6h5.5v5.5h-5.5zM335.2 278.1h4.4v4.4h-4.4zM331.2 285.4h5.5v5.5h-5.5zM331.1 290.7h5.5v5.5h-5.5zM331.6 294.5h4.4v4.4h-4.4zM331.5 297.1h5.5v5.5h-5.5zM332.1 300.8h4.4v4.4h-4.4zM331.6 303.7h5.5v5.5h-5.5zM335.5 304.3h4.4v4.4h-4.4zM332 309.7h5.5v5.5h-5.5zM331.1 316.3h5.5v5.5h-5.5zM331.6 320.1h4.4v4.4h-4.4zM331.7 323h5.5v5.5h-5.5zM332.2 326.7h4.4v4.4h-4.4zM331 329.1h5.5v5.5h-5.5zM331.6 335.4h5.5v5.5h-5.5zM332.1 339.2h4.4v4.4h-4.4zM331.4 341.7h5.5v5.5h-5.5zM331 348.3h5.5v5.5h-5.5zM331.8 354.2h5.5v5.5h-5.5zM331.4 361.4h5.5v5.5h-5.5zM335.2 361.9h4.4v4.4h-4.4zM331.3 366.9h5.5v5.5h-5.5zM331.9 370.7h4.4v4.4h-4.4zM331.7 373.1h5.5v5.5h-5.5zM335.6 373.7h4.4v4.4h-4.4zM331 379.9h5.5v5.5h-5.5zM331.2 386.4h5.5v5.5h-5.5zM331.8 393h5.5v5.5h-5.5zM331.5 398.6h5.5v5.5h-5.5zM331.5 404.6h5.5v5.5h-5.5zM331.7 411.6h5.5v5.5h-5.5zM332.2 415.4h4.4v4.4h-4.4zM331.3 417.9h5.5v5.5h-5.5zM331.4 424.6h5.5v5.5h-5.5zM331.1 430.8h5.5v5.5h-5.5zM338.3 132h5.5v5.5h-5.5zM338.1 138h5.5v5.5h-5.5zM338.3 144.8h5.5v5.5h-5.5zM338.9 148.5h4.4v4.4h-4.4zM337.8 151.4h5.5v5.5h-5.5zM341.7 152h4.4v4.4h-4.4zM338 157.3h5.5v5.5h-5.5zM337.9 163.5h5.5v5.5h-5.5zM338.2 169.9h5.5v5.5h-5.5zM338.4 176.5h5.5v5.5h-5.5zM337.5 182.2h5.5v5.5h-5.5zM338.6 189.1h5.5v5.5h-5.5zM338.3 195.6h5.5v5.5h-5.5zM338.1 201.2h5.5v5.5h-5.5zM342 201.8h4.4v4.4h-4.4zM337.8 208.7h5.5v5.5h-5.5zM338.4 215.1h5.5v5.5h-5.5zM342.3 215.6h4.4v4.4h-4.4zM337.6 220.7h5.5v5.5h-5.5zM338.3 227.4h5.5v5.5h-5.5zM342.1 227.9h4.4v4.4h-4.4zM338.2 233.4h5.5v5.5h-5.5zM337.7 240.3h5.5v5.5h-5.5zM341.6 240.9h4.4v4.4h-4.4zM337.3 246.5h5.5v5.5h-5.5zM337.5 252.1h5.5v5.5h-5.5zM338 258.7h5.5v5.5h-5.5zM337.8 265.2h5.5v5.5h-5.5zM337.8 271.9h5.5v5.5h-5.5zM341.6 272.5h4.4v4.4h-4.4zM337.9 277.9h5.5v5.5h-5.5zM338.2 284.7h5.5v5.5h-5.5zM338.7 288.5h4.4v4.4h-4.4zM337.8 291h5.5v5.5h-5.5zM337.8 297.6h5.5v5.5h-5.5zM338.4 301.4h4.4v4.4h-4.4zM337.5 303.8h5.5v5.5h-5.5zM341.4 304.3h4.4v4.4h-4.4zM337.8 310h5.5v5.5h-5.5zM341.7 310.5h4.4v4.4h-4.4zM338 316h5.5v5.5h-5.5zM341.8 316.5h4.4v4.4h-4.4zM338.5 322.4h5.5v5.5h-5.5zM342.4 322.9h4.4v4.4h-4.4zM338 328.1h5.5v5.5h-5.5zM341.9 328.7h4.4v4.4h-4.4zM337.8 335.4h5.5v5.5h-5.5zM337.4 341.7h5.5v5.5h-5.5zM338 348.6h5.5v5.5h-5.5zM337.2 354.4h5.5v5.5h-5.5zM338 361.7h5.5v5.5h-5.5zM341.8 362.3h4.4v4.4h-4.4zM337.9 367.1h5.5v5.5h-5.5zM338 373.2h5.5v5.5h-5.5zM337.8 380.2h5.5v5.5h-5.5zM338.1 386.8h5.5v5.5h-5.5zM341.9 387.4h4.4v4.4h-4.4zM337.8 392.2h5.5v5.5h-5.5zM338.3 395.9h4.4v4.4h-4.4zM338 399.1h5.5v5.5h-5.5zM338.1 405.6h5.5v5.5h-5.5zM337.4 411.5h5.5v5.5h-5.5zM338 418h5.5v5.5h-5.5zM338.2 424h5.5v5.5h-5.5zM338.1 430.4h5.5v5.5h-5.5zM345 131.9h5.5v5.5h-5.5zM344.9 138h5.5v5.5h-5.5zM344.7 144.9h5.5v5.5h-5.5zM344.6 150.9h5.5v5.5h-5.5zM345.1 154.7h4.4v4.4h-4.4zM344.3 157.1h5.5v5.5h-5.5zM344.2 163.4h5.5v5.5h-5.5zM344.7 167.2h4.4v4.4h-4.4zM344.8 169.9h5.5v5.5h-5.5zM344.8 176.6h5.5v5.5h-5.5zM345.2 183h5.5v5.5h-5.5zM345.8 186.7h4.4v4.4h-4.4zM344.3 189h5.5v5.5h-5.5zM344.1 195.3h5.5v5.5h-5.5zM348 195.9h4.4v4.4h-4.4zM344 201.7h5.5v5.5h-5.5zM344.1 208.3h5.5v5.5h-5.5zM344.5 214.7h5.5v5.5h-5.5zM344.6 220.8h5.5v5.5h-5.5zM344.5 227.5h5.5v5.5h-5.5zM344.9 233.7h5.5v5.5h-5.5zM344.7 240h5.5v5.5h-5.5zM344.6 246.2h5.5v5.5h-5.5zM345.1 250h4.4v4.4h-4.4zM344.2 252.1h5.5v5.5h-5.5zM344.7 259.1h5.5v5.5h-5.5zM344.7 265.2h5.5v5.5h-5.5zM344.6 271.1h5.5v5.5h-5.5zM344.8 278h5.5v5.5h-5.5zM345.3 281.8h4.4v4.4h-4.4zM344 284.5h5.5v5.5h-5.5zM344.7 290.5h5.5v5.5h-5.5zM348.5 291.1h4.4v4.4h-4.4zM344.6 296.9h5.5v5.5h-5.5zM344.6 303.7h5.5v5.5h-5.5zM344.7 309.8h5.5v5.5h-5.5zM344.1 316.1h5.5v5.5h-5.5zM344.9 322.1h5.5v5.5h-5.5zM344.3 328.9h5.5v5.5h-5.5zM344.6 335.4h5.5v5.5h-5.5zM345.2 341.7h5.5v5.5h-5.5zM344.8 348h5.5v5.5h-5.5zM344.8 354.5h5.5v5.5h-5.5zM344.6 360.5h5.5v5.5h-5.5zM348.5 361.1h4.4v4.4h-4.4zM344.6 367.4h5.5v5.5h-5.5zM345.1 371.1h4.4v4.4h-4.4zM344.9 373.8h5.5v5.5h-5.5zM344.8 380.4h5.5v5.5h-5.5zM345.1 386.5h5.5v5.5h-5.5zM345.6 390.2h4.4v4.4h-4.4zM344.3 392.9h5.5v5.5h-5.5zM344.6 399.4h5.5v5.5h-5.5zM344.7 405.5h5.5v5.5h-5.5zM344.5 411.5h5.5v5.5h-5.5zM345.1 418.4h5.5v5.5h-5.5zM349 419h4.4v4.4h-4.4zM344.5 424.6h5.5v5.5h-5.5zM344.4 430.6h5.5v5.5h-5.5zM351.3 131.8h5.5v5.5h-5.5zM351.4 138h5.5v5.5h-5.5zM351.9 141.8h4.4v4.4h-4.4zM350.6 145h5.5v5.5h-5.5zM351.6 150.8h5.5v5.5h-5.5zM351.5 158h5.5v5.5h-5.5zM351.3 163.5h5.5v5.5h-5.5zM351.9 169.8h5.5v5.5h-5.5zM351.2 176.3h5.5v5.5h-5.5zM351.8 180h4.4v4.4h-4.4zM351 182.8h5.5v5.5h-5.5zM351.7 189.2h5.5v5.5h-5.5zM352.3 193h4.4v4.4h-4.4zM350.5 195.3h5.5v5.5h-5.5zM351.5 201.7h5.5v5.5h-5.5zM352.1 205.4h4.4v4.4h-4.4zM351.5 208.8h5.5v5.5h-5.5zM351.1 214.4h5.5v5.5h-5.5zM355 215h4.4v4.4h-4.4zM351.3 220.5h5.5v5.5h-5.5zM351.5 226.9h5.5v5.5h-5.5zM351 233.3h5.5v5.5h-5.5zM351.3 240h5.5v5.5h-5.5zM351.4 246.3h5.5v5.5h-5.5zM355.2 246.9h4.4v4.4h-4.4zM351.1 252.8h5.5v5.5h-5.5zM351.2 258.9h5.5v5.5h-5.5zM351.4 265.2h5.5v5.5h-5.5zM350.7 271.6h5.5v5.5h-5.5zM351.1 278.1h5.5v5.5h-5.5zM351.8 284.6h5.5v5.5h-5.5zM352.4 288.4h4.4v4.4h-4.4zM351.1 290.7h5.5v5.5h-5.5zM351.2 297.1h5.5v5.5h-5.5zM355.1 297.7h4.4v4.4h-4.4zM351.3 303.9h5.5v5.5h-5.5zM351.5 310.5h5.5v5.5h-5.5zM352.1 314.3h4.4v4.4h-4.4zM351.4 316.1h5.5v5.5h-5.5zM351.5 323h5.5v5.5h-5.5zM351.9 328.7h5.5v5.5h-5.5zM355.8 329.2h4.4v4.4h-4.4zM351.3 335.6h5.5v5.5h-5.5zM351.9 339.4h4.4v4.4h-4.4zM350.6 342h5.5v5.5h-5.5zM351.2 348.2h5.5v5.5h-5.5zM351.2 354.3h5.5v5.5h-5.5zM351.2 360.7h5.5v5.5h-5.5zM351.3 367.3h5.5v5.5h-5.5zM351.2 373.7h5.5v5.5h-5.5zM350.8 380.2h5.5v5.5h-5.5zM351.2 386h5.5v5.5h-5.5zM351.8 389.7h4.4v4.4h-4.4zM351.2 392.9h5.5v5.5h-5.5zM350.7 398.9h5.5v5.5h-5.5zM351.3 402.6h4.4v4.4h-4.4zM351.2 405.7h5.5v5.5h-5.5zM351.7 409.5h4.4v4.4h-4.4zM350.7 412h5.5v5.5h-5.5zM350.9 418.1h5.5v5.5h-5.5zM351.4 421.9h4.4v4.4h-4.4zM351.3 423.9h5.5v5.5h-5.5zM351 430.7h5.5v5.5h-5.5zM357.7 131.7h5.5v5.5h-5.5zM357.7 138.4h5.5v5.5h-5.5zM358.2 142.1h4.4v4.4h-4.4zM356.8 144.3h5.5v5.5h-5.5zM357.4 148h4.4v4.4h-4.4zM358.2 151h5.5v5.5h-5.5zM357.7 157.1h5.5v5.5h-5.5zM357.4 163.5h5.5v5.5h-5.5zM358.2 169.7h5.5v5.5h-5.5zM358.7 173.4h4.4v4.4h-4.4zM357.8 176.7h5.5v5.5h-5.5zM358.4 180.5h4.4v4.4h-4.4zM358.4 182.3h5.5v5.5h-5.5zM357.8 189h5.5v5.5h-5.5zM358 195.2h5.5v5.5h-5.5zM358 201.9h5.5v5.5h-5.5zM358.1 208.2h5.5v5.5h-5.5zM358.5 214.3h5.5v5.5h-5.5zM362.3 214.9h4.4v4.4h-4.4zM357.6 221h5.5v5.5h-5.5zM358 226.8h5.5v5.5h-5.5zM358.6 230.5h4.4v4.4h-4.4zM357.8 233.7h5.5v5.5h-5.5zM358.4 237.5h4.4v4.4h-4.4zM358.1 240.3h5.5v5.5h-5.5zM358.7 244.1h4.4v4.4h-4.4zM357.3 246.5h5.5v5.5h-5.5zM358.1 253.1h5.5v5.5h-5.5zM357.9 258.5h5.5v5.5h-5.5zM358 265.2h5.5v5.5h-5.5zM361.8 265.7h4.4v4.4h-4.4zM357.8 272.1h5.5v5.5h-5.5zM357.9 278.2h5.5v5.5h-5.5zM358.4 281.9h4.4v4.4h-4.4zM357.8 284.6h5.5v5.5h-5.5zM357.9 291.1h5.5v5.5h-5.5zM357.7 296.9h5.5v5.5h-5.5zM358.3 303.6h5.5v5.5h-5.5zM357.5 310.1h5.5v5.5h-5.5zM358 313.8h4.4v4.4h-4.4zM357.5 316.4h5.5v5.5h-5.5zM358.2 323h5.5v5.5h-5.5zM358.7 326.8h4.4v4.4h-4.4zM358.1 328.9h5.5v5.5h-5.5zM357.8 335.5h5.5v5.5h-5.5zM357.6 342.2h5.5v5.5h-5.5zM361.4 342.8h4.4v4.4h-4.4zM357.9 347.5h5.5v5.5h-5.5zM357.6 354.7h5.5v5.5h-5.5zM357.7 361.4h5.5v5.5h-5.5zM357.5 366.9h5.5v5.5h-5.5zM358 370.7h4.4v4.4h-4.4zM357.9 373.6h5.5v5.5h-5.5zM357.9 380.1h5.5v5.5h-5.5zM358.4 383.9h4.4v4.4h-4.4zM357.6 386.4h5.5v5.5h-5.5zM357.9 392.5h5.5v5.5h-5.5zM361.8 393h4.4v4.4h-4.4zM357.7 399.4h5.5v5.5h-5.5zM358.6 405.1h5.5v5.5h-5.5zM357.8 411.3h5.5v5.5h-5.5zM357.9 418h5.5v5.5h-5.5zM358.1 424.3h5.5v5.5h-5.5zM357.8 430.8h5.5v5.5h-5.5zM364.5 131.8h5.5v5.5h-5.5zM365.1 135.6h4.4v4.4h-4.4zM364.4 138.3h5.5v5.5h-5.5zM364.9 142h4.4v4.4h-4.4zM364 143.7h5.5v5.5h-5.5zM364.1 150.6h5.5v5.5h-5.5zM364.7 154.3h4.4v4.4h-4.4zM364.3 156.9h5.5v5.5h-5.5zM364.5 163.9h5.5v5.5h-5.5zM364.5 170h5.5v5.5h-5.5zM364.1 177h5.5v5.5h-5.5zM364.5 182.8h5.5v5.5h-5.5zM364.3 188.8h5.5v5.5h-5.5zM364.8 192.5h4.4v4.4h-4.4zM364.6 195.1h5.5v5.5h-5.5zM364.5 201.8h5.5v5.5h-5.5zM364.2 207.9h5.5v5.5h-5.5zM368 208.4h4.4v4.4h-4.4zM364.2 214.5h5.5v5.5h-5.5zM364.1 220.7h5.5v5.5h-5.5zM364.5 227h5.5v5.5h-5.5zM364.4 233.5h5.5v5.5h-5.5zM364.9 239.5h5.5v5.5h-5.5zM365.4 243.2h4.4v4.4h-4.4zM364.8 245.8h5.5v5.5h-5.5zM368.7 246.4h4.4v4.4h-4.4zM364.7 252.8h5.5v5.5h-5.5zM364.4 259.3h5.5v5.5h-5.5zM364.2 265.2h5.5v5.5h-5.5zM364.8 268.9h4.4v4.4h-4.4zM364.5 271.3h5.5v5.5h-5.5zM365 275h4.4v4.4h-4.4zM364.3 277.9h5.5v5.5h-5.5zM364.5 284.3h5.5v5.5h-5.5zM364.4 290.3h5.5v5.5h-5.5zM364.2 297.1h5.5v5.5h-5.5zM364.7 302.8h5.5v5.5h-5.5zM368.6 303.4h4.4v4.4h-4.4zM364 310.2h5.5v5.5h-5.5zM364.6 316.2h5.5v5.5h-5.5zM364.5 323h5.5v5.5h-5.5zM364.6 329h5.5v5.5h-5.5zM363.9 335.9h5.5v5.5h-5.5zM364.4 341.3h5.5v5.5h-5.5zM364.5 348.4h5.5v5.5h-5.5zM364.6 354.3h5.5v5.5h-5.5zM364.6 361h5.5v5.5h-5.5zM365.1 364.8h4.4v4.4h-4.4zM363.9 367.2h5.5v5.5h-5.5zM364.4 373.5h5.5v5.5h-5.5zM364.3 380.2h5.5v5.5h-5.5zM364.1 386.7h5.5v5.5h-5.5zM364.3 392.6h5.5v5.5h-5.5zM364.7 398.8h5.5v5.5h-5.5zM363.9 405.1h5.5v5.5h-5.5zM364.5 411.4h5.5v5.5h-5.5zM368.3 411.9h4.4v4.4h-4.4zM364.8 418.3h5.5v5.5h-5.5zM365.4 422h4.4v4.4h-4.4zM364.4 424.2h5.5v5.5h-5.5zM363.8 431h5.5v5.5h-5.5zM370.6 131.9h5.5v5.5h-5.5zM374.4 132.4h4.4v4.4h-4.4zM371.3 138.1h5.5v5.5h-5.5zM370.6 144.7h5.5v5.5h-5.5zM371.2 148.5h4.4v4.4h-4.4zM371.1 151h5.5v5.5h-5.5zM370.5 157.2h5.5v5.5h-5.5zM370.9 163.5h5.5v5.5h-5.5zM371.1 169.8h5.5v5.5h-5.5zM370.8 175.9h5.5v5.5h-5.5zM371.3 182.7h5.5v5.5h-5.5zM375.1 183.3h4.4v4.4h-4.4zM370.7 188.9h5.5v5.5h-5.5zM370.6 195.4h5.5v5.5h-5.5zM371.2 199.2h4.4v4.4h-4.4zM370.9 202h5.5v5.5h-5.5zM371.4 208.4h5.5v5.5h-5.5zM372 212.1h4.4v4.4h-4.4zM371 214.2h5.5v5.5h-5.5zM371.2 220.9h5.5v5.5h-5.5zM375 221.4h4.4v4.4h-4.4zM371.4 227.1h5.5v5.5h-5.5zM370.7 233.5h5.5v5.5h-5.5zM371.1 239.8h5.5v5.5h-5.5zM371.6 243.6h4.4v4.4h-4.4zM370.9 246.2h5.5v5.5h-5.5zM371 252.8h5.5v5.5h-5.5zM371.1 259h5.5v5.5h-5.5zM371 265.1h5.5v5.5h-5.5zM371.6 268.9h4.4v4.4h-4.4zM371.4 271.5h5.5v5.5h-5.5zM371.9 275.2h4.4v4.4h-4.4zM371.1 278.4h5.5v5.5h-5.5zM371.2 284.4h5.5v5.5h-5.5zM371.2 290.5h5.5v5.5h-5.5zM371.8 294.3h4.4v4.4h-4.4zM371.2 297.2h5.5v5.5h-5.5zM371.5 303.6h5.5v5.5h-5.5zM370.8 309.8h5.5v5.5h-5.5zM371.4 313.5h4.4v4.4h-4.4zM371.1 316.3h5.5v5.5h-5.5zM370.8 322.8h5.5v5.5h-5.5zM374.6 323.3h4.4v4.4h-4.4zM370.8 328.7h5.5v5.5h-5.5zM371.2 335.8h5.5v5.5h-5.5zM370.4 341.6h5.5v5.5h-5.5zM371 348.1h5.5v5.5h-5.5zM371.1 354.3h5.5v5.5h-5.5zM370.9 361.4h5.5v5.5h-5.5zM370.8 367.4h5.5v5.5h-5.5zM371.4 371.1h4.4v4.4h-4.4zM370.8 373.9h5.5v5.5h-5.5zM370.8 379.3h5.5v5.5h-5.5zM370.8 386.1h5.5v5.5h-5.5zM371.1 392.5h5.5v5.5h-5.5zM370.8 398.7h5.5v5.5h-5.5zM371.1 405.6h5.5v5.5h-5.5zM370.8 412h5.5v5.5h-5.5zM371 418.2h5.5v5.5h-5.5zM374.8 418.7h4.4v4.4h-4.4zM370.7 424.3h5.5v5.5h-5.5zM374.6 424.9h4.4v4.4h-4.4zM370.9 430.4h5.5v5.5h-5.5zM378.1 132.1h5.5v5.5h-5.5zM377.5 138.4h5.5v5.5h-5.5zM378.1 142.1h4.4v4.4h-4.4zM378.1 144.5h5.5v5.5h-5.5zM377.2 150.5h5.5v5.5h-5.5zM377.6 157.1h5.5v5.5h-5.5zM377.9 163.7h5.5v5.5h-5.5zM377.6 170.2h5.5v5.5h-5.5zM378.2 173.9h4.4v4.4h-4.4zM377.8 176.9h5.5v5.5h-5.5zM381.7 177.4h4.4v4.4h-4.4zM377.5 181.8h5.5v5.5h-5.5zM377.7 189.4h5.5v5.5h-5.5zM377 195.1h5.5v5.5h-5.5zM377.3 201.6h5.5v5.5h-5.5zM381.1 202.2h4.4v4.4h-4.4zM377.5 208.2h5.5v5.5h-5.5zM378.1 212h4.4v4.4h-4.4zM377.2 214.7h5.5v5.5h-5.5zM377.8 220.7h5.5v5.5h-5.5zM377.7 227.6h5.5v5.5h-5.5zM377.7 233.3h5.5v5.5h-5.5zM378.2 237.1h4.4v4.4h-4.4zM377.6 240.3h5.5v5.5h-5.5zM377.2 246.3h5.5v5.5h-5.5zM377.7 252.5h5.5v5.5h-5.5zM377.2 258.7h5.5v5.5h-5.5zM378.1 265h5.5v5.5h-5.5zM377.6 271.4h5.5v5.5h-5.5zM377.5 278.3h5.5v5.5h-5.5zM377.9 284.5h5.5v5.5h-5.5zM376.9 290.6h5.5v5.5h-5.5zM377.5 298.3h5.5v5.5h-5.5zM378 303.4h5.5v5.5h-5.5zM381.8 304h4.4v4.4h-4.4zM377.7 310.1h5.5v5.5h-5.5zM381.5 310.6h4.4v4.4h-4.4zM377.8 316h5.5v5.5h-5.5zM377.5 322.8h5.5v5.5h-5.5zM377.2 328.7h5.5v5.5h-5.5zM377.7 332.4h4.4v4.4h-4.4zM377.4 335.1h5.5v5.5h-5.5zM381.2 335.7h4.4v4.4h-4.4zM377.4 341.7h5.5v5.5h-5.5zM377.6 348h5.5v5.5h-5.5zM376.9 354.8h5.5v5.5h-5.5zM377.2 360.5h5.5v5.5h-5.5zM381 361h4.4v4.4h-4.4zM377.4 367.3h5.5v5.5h-5.5zM381.3 367.9h4.4v4.4h-4.4zM377.8 373.3h5.5v5.5h-5.5zM378.3 377.1h4.4v4.4h-4.4zM377.4 380.4h5.5v5.5h-5.5zM377.9 384.1h4.4v4.4h-4.4zM378 385.6h5.5v5.5h-5.5zM377.2 392.6h5.5v5.5h-5.5zM377.8 396.4h4.4v4.4h-4.4zM377.5 399.4h5.5v5.5h-5.5zM381.3 399.9h4.4v4.4h-4.4zM378.2 405.2h5.5v5.5h-5.5zM377.3 412h5.5v5.5h-5.5zM381.2 412.5h4.4v4.4h-4.4zM377.8 417.9h5.5v5.5h-5.5zM377.4 424.2h5.5v5.5h-5.5zM377.2 430.7h5.5v5.5h-5.5zM384.2 131.5h5.5v5.5h-5.5zM384.6 137.8h5.5v5.5h-5.5zM384.2 144.4h5.5v5.5h-5.5zM384.7 148.1h4.4v4.4h-4.4zM384.1 150.7h5.5v5.5h-5.5zM384.7 156.9h5.5v5.5h-5.5zM384 163.7h5.5v5.5h-5.5zM384.3 169.6h5.5v5.5h-5.5zM384.3 176.5h5.5v5.5h-5.5zM384.8 180.2h4.4v4.4h-4.4zM384 182.4h5.5v5.5h-5.5zM383.9 189.4h5.5v5.5h-5.5zM387.7 189.9h4.4v4.4h-4.4zM384.2 195.6h5.5v5.5h-5.5zM384.4 201.4h5.5v5.5h-5.5zM388.2 201.9h4.4v4.4h-4.4zM384.3 208.2h5.5v5.5h-5.5zM384.5 214.3h5.5v5.5h-5.5zM383.8 221h5.5v5.5h-5.5zM384.2 226.9h5.5v5.5h-5.5zM384 233.8h5.5v5.5h-5.5zM383.8 240.6h5.5v5.5h-5.5zM383.9 246.1h5.5v5.5h-5.5zM384.7 252.7h5.5v5.5h-5.5zM383.9 258.8h5.5v5.5h-5.5zM384.1 265.5h5.5v5.5h-5.5zM384.1 271.4h5.5v5.5h-5.5zM384.2 278.5h5.5v5.5h-5.5zM384.1 284.6h5.5v5.5h-5.5zM387.9 285.1h4.4v4.4h-4.4zM384.5 291.2h5.5v5.5h-5.5zM385 294.9h4.4v4.4h-4.4zM384.1 297.5h5.5v5.5h-5.5zM384.6 303h5.5v5.5h-5.5zM388.4 303.6h4.4v4.4h-4.4zM384.4 309.7h5.5v5.5h-5.5zM388.2 310.2h4.4v4.4h-4.4zM384.6 316.1h5.5v5.5h-5.5zM384.1 322.5h5.5v5.5h-5.5zM384.2 329.5h5.5v5.5h-5.5zM384.1 336.1h5.5v5.5h-5.5zM384.4 341.5h5.5v5.5h-5.5zM384.9 345.3h4.4v4.4h-4.4zM383.9 347.8h5.5v5.5h-5.5zM384.5 351.6h4.4v4.4h-4.4zM384.2 354.8h5.5v5.5h-5.5zM383.8 361h5.5v5.5h-5.5zM384.1 367.9h5.5v5.5h-5.5zM384.3 373.6h5.5v5.5h-5.5zM383.7 379.8h5.5v5.5h-5.5zM384.5 385.8h5.5v5.5h-5.5zM384.4 392.7h5.5v5.5h-5.5zM384.5 399.2h5.5v5.5h-5.5zM388.3 399.8h4.4v4.4h-4.4zM383.8 405.2h5.5v5.5h-5.5zM383.9 411.5h5.5v5.5h-5.5zM384.4 418h5.5v5.5h-5.5zM388.2 418.6h4.4v4.4h-4.4zM384.2 424.4h5.5v5.5h-5.5zM384 431.1h5.5v5.5h-5.5zM390.7 131.4h5.5v5.5h-5.5zM391 138.1h5.5v5.5h-5.5zM390.6 144.9h5.5v5.5h-5.5zM390.9 150.7h5.5v5.5h-5.5zM394.7 151.3h4.4v4.4h-4.4zM390.9 157.1h5.5v5.5h-5.5zM390.7 163.5h5.5v5.5h-5.5zM394.6 164.1h4.4v4.4h-4.4zM390.8 169.7h5.5v5.5h-5.5zM391.4 173.5h4.4v4.4h-4.4zM390.5 176.5h5.5v5.5h-5.5zM394.4 177.1h4.4v4.4h-4.4zM390 183.1h5.5v5.5h-5.5zM393.9 183.7h4.4v4.4h-4.4zM391.1 189.4h5.5v5.5h-5.5zM390.6 195.3h5.5v5.5h-5.5zM391.1 199h4.4v4.4h-4.4zM390.8 202h5.5v5.5h-5.5zM391.4 207.8h5.5v5.5h-5.5zM395.3 208.4h4.4v4.4h-4.4zM391 214.2h5.5v5.5h-5.5zM391 220.8h5.5v5.5h-5.5zM390.9 227.4h5.5v5.5h-5.5zM390.9 233.4h5.5v5.5h-5.5zM390.5 240.3h5.5v5.5h-5.5zM390.9 246.1h5.5v5.5h-5.5zM394.7 246.6h4.4v4.4h-4.4zM390.6 252.8h5.5v5.5h-5.5zM390.8 258.5h5.5v5.5h-5.5zM390.1 265.2h5.5v5.5h-5.5zM391.1 271.6h5.5v5.5h-5.5zM391.1 278.5h5.5v5.5h-5.5zM391 284.8h5.5v5.5h-5.5zM391.5 288.5h4.4v4.4h-4.4zM391 290.9h5.5v5.5h-5.5zM394.8 291.5h4.4v4.4h-4.4zM390.8 297.4h5.5v5.5h-5.5zM390.7 303.7h5.5v5.5h-5.5zM390.2 309.9h5.5v5.5h-5.5zM391.3 316h5.5v5.5h-5.5zM391 322.2h5.5v5.5h-5.5zM390.9 328.4h5.5v5.5h-5.5zM390.4 335.3h5.5v5.5h-5.5zM390.9 341.8h5.5v5.5h-5.5zM390.8 348.3h5.5v5.5h-5.5zM390.3 354.8h5.5v5.5h-5.5zM390.8 361h5.5v5.5h-5.5zM390.8 367.1h5.5v5.5h-5.5zM394.7 367.7h4.4v4.4h-4.4zM390.7 373.3h5.5v5.5h-5.5zM391.2 380h5.5v5.5h-5.5zM391.8 383.8h4.4v4.4h-4.4zM390.9 385.7h5.5v5.5h-5.5zM390.7 392.7h5.5v5.5h-5.5zM394.5 393.2h4.4v4.4h-4.4zM390.4 399.2h5.5v5.5h-5.5zM390.4 405.1h5.5v5.5h-5.5zM391 408.8h4.4v4.4h-4.4zM390.6 411.6h5.5v5.5h-5.5zM391.2 415.3h4.4v4.4h-4.4zM391 417.6h5.5v5.5h-5.5zM390.8 424.3h5.5v5.5h-5.5zM390.6 430.8h5.5v5.5h-5.5zM397.2 131.6h5.5v5.5h-5.5zM397.8 135.4h4.4v4.4h-4.4zM397.3 137.8h5.5v5.5h-5.5zM397.8 144h5.5v5.5h-5.5zM397.4 150.5h5.5v5.5h-5.5zM397.3 157.1h5.5v5.5h-5.5zM397.9 160.9h4.4v4.4h-4.4zM397.5 163.6h5.5v5.5h-5.5zM398 167.3h4.4v4.4h-4.4zM397.4 169.7h5.5v5.5h-5.5zM397.6 176.1h5.5v5.5h-5.5zM397.6 182.5h5.5v5.5h-5.5zM401.4 183.1h4.4v4.4h-4.4zM397.1 189.1h5.5v5.5h-5.5zM397.4 195.6h5.5v5.5h-5.5zM397.7 201.4h5.5v5.5h-5.5zM396.8 208.2h5.5v5.5h-5.5zM397.2 214.4h5.5v5.5h-5.5zM397.5 220.7h5.5v5.5h-5.5zM401.4 221.2h4.4v4.4h-4.4zM397.4 227.2h5.5v5.5h-5.5zM396.6 233.8h5.5v5.5h-5.5zM397.1 237.5h4.4v4.4h-4.4zM397.5 240.2h5.5v5.5h-5.5zM397.4 246.4h5.5v5.5h-5.5zM397.7 252.8h5.5v5.5h-5.5zM397.7 258.7h5.5v5.5h-5.5zM397.1 265.6h5.5v5.5h-5.5zM396.9 272.2h5.5v5.5h-5.5zM397.5 278.2h5.5v5.5h-5.5zM398.1 281.9h4.4v4.4h-4.4zM397.3 284.8h5.5v5.5h-5.5zM397.6 290.8h5.5v5.5h-5.5zM397.1 297.4h5.5v5.5h-5.5zM397.7 301.1h4.4v4.4h-4.4zM397.3 303.6h5.5v5.5h-5.5zM397.4 309.5h5.5v5.5h-5.5zM397.4 316.6h5.5v5.5h-5.5zM397.4 322.8h5.5v5.5h-5.5zM397.7 328.7h5.5v5.5h-5.5zM397.4 335.8h5.5v5.5h-5.5zM397.4 341.8h5.5v5.5h-5.5zM397.5 347.6h5.5v5.5h-5.5zM397.2 354.2h5.5v5.5h-5.5zM397 360.7h5.5v5.5h-5.5zM397.9 367h5.5v5.5h-5.5zM398.5 370.8h4.4v4.4h-4.4zM397.4 373h5.5v5.5h-5.5zM397.4 379.4h5.5v5.5h-5.5zM397.8 386.1h5.5v5.5h-5.5zM397.1 392.7h5.5v5.5h-5.5zM397.3 398.9h5.5v5.5h-5.5zM397.4 405.1h5.5v5.5h-5.5zM396.7 411.6h5.5v5.5h-5.5zM397.6 418.2h5.5v5.5h-5.5zM401.4 418.7h4.4v4.4h-4.4zM397.7 424.5h5.5v5.5h-5.5zM397.4 430.8h5.5v5.5h-5.5zM403.7 131.6h5.5v5.5h-5.5zM403.3 138.2h5.5v5.5h-5.5zM404.2 144.7h5.5v5.5h-5.5zM403.9 150.9h5.5v5.5h-5.5zM404.2 157.4h5.5v5.5h-5.5zM404 163.4h5.5v5.5h-5.5zM404.5 170h5.5v5.5h-5.5zM404 176.4h5.5v5.5h-5.5zM403.8 182.5h5.5v5.5h-5.5zM404.2 189h5.5v5.5h-5.5zM403.6 195.7h5.5v5.5h-5.5zM404.2 199.5h4.4v4.4h-4.4zM404 202h5.5v5.5h-5.5zM404.5 205.7h4.4v4.4h-4.4zM403.9 208.2h5.5v5.5h-5.5zM403.6 214.7h5.5v5.5h-5.5zM403.8 221.7h5.5v5.5h-5.5zM404.4 225.5h4.4v4.4h-4.4zM404.4 227.1h5.5v5.5h-5.5zM404.1 233.5h5.5v5.5h-5.5zM403.8 240.1h5.5v5.5h-5.5zM404.2 245.8h5.5v5.5h-5.5zM408.1 246.3h4.4v4.4h-4.4zM404.1 252.8h5.5v5.5h-5.5zM404.2 259.2h5.5v5.5h-5.5zM403.7 265.2h5.5v5.5h-5.5zM404.1 272.1h5.5v5.5h-5.5zM403.9 278.7h5.5v5.5h-5.5zM407.7 279.2h4.4v4.4h-4.4zM404 285.1h5.5v5.5h-5.5zM404.6 288.9h4.4v4.4h-4.4zM404.1 290.7h5.5v5.5h-5.5zM403.9 297.4h5.5v5.5h-5.5zM404.1 303h5.5v5.5h-5.5zM404 309.8h5.5v5.5h-5.5zM404.5 313.5h4.4v4.4h-4.4zM403.7 316h5.5v5.5h-5.5zM404.3 319.8h4.4v4.4h-4.4zM404.2 322.3h5.5v5.5h-5.5zM408 322.8h4.4v4.4h-4.4zM404.1 328.9h5.5v5.5h-5.5zM404.6 332.6h4.4v4.4h-4.4zM403.8 335.8h5.5v5.5h-5.5zM404.2 341.8h5.5v5.5h-5.5zM404.2 347.9h5.5v5.5h-5.5zM403.7 354.5h5.5v5.5h-5.5zM404.3 358.2h4.4v4.4h-4.4zM404.1 361h5.5v5.5h-5.5zM404.2 367.2h5.5v5.5h-5.5zM403.8 373.5h5.5v5.5h-5.5zM404.6 380.1h5.5v5.5h-5.5zM403.9 386.6h5.5v5.5h-5.5zM404.1 392.7h5.5v5.5h-5.5zM404 399.1h5.5v5.5h-5.5zM404 405.2h5.5v5.5h-5.5zM403.9 411.4h5.5v5.5h-5.5zM404 418.2h5.5v5.5h-5.5zM403.8 424.3h5.5v5.5h-5.5zM404.2 431.3h5.5v5.5h-5.5zM410.5 182.9h5.5v5.5h-5.5zM414.3 183.4h4.4v4.4h-4.4zM410.7 189.1h5.5v5.5h-5.5zM409.9 195.3h5.5v5.5h-5.5zM413.8 195.8h4.4v4.4h-4.4zM410.6 201.3h5.5v5.5h-5.5zM410.3 208.4h5.5v5.5h-5.5zM410.6 214.2h5.5v5.5h-5.5zM411 220.9h5.5v5.5h-5.5zM411.1 227.6h5.5v5.5h-5.5zM410.7 233.5h5.5v5.5h-5.5zM411 240h5.5v5.5h-5.5zM410.9 246h5.5v5.5h-5.5zM414.7 246.6h4.4v4.4h-4.4zM410.7 252.7h5.5v5.5h-5.5zM410.9 259h5.5v5.5h-5.5zM410.8 265.4h5.5v5.5h-5.5zM410.7 271.5h5.5v5.5h-5.5zM410.3 278.5h5.5v5.5h-5.5zM411 285h5.5v5.5h-5.5zM411.1 291.3h5.5v5.5h-5.5zM415 291.8h4.4v4.4h-4.4zM410.5 296.8h5.5v5.5h-5.5zM414.4 297.3h4.4v4.4h-4.4zM411 303.4h5.5v5.5h-5.5zM410.5 309.9h5.5v5.5h-5.5zM411 316.1h5.5v5.5h-5.5zM410.6 322.4h5.5v5.5h-5.5zM410.8 329.5h5.5v5.5h-5.5zM410.4 335h5.5v5.5h-5.5zM410.4 341.6h5.5v5.5h-5.5zM410.3 347.9h5.5v5.5h-5.5zM410.9 354.7h5.5v5.5h-5.5zM410.5 360.3h5.5v5.5h-5.5zM411 364h4.4v4.4h-4.4zM410.4 367.3h5.5v5.5h-5.5zM410.5 373h5.5v5.5h-5.5zM411.3 379.9h5.5v5.5h-5.5zM417.5 182.3h5.5v5.5h-5.5zM417.1 188.8h5.5v5.5h-5.5zM417.1 195.6h5.5v5.5h-5.5zM417.2 201.4h5.5v5.5h-5.5zM417.1 207.9h5.5v5.5h-5.5zM416.9 214.7h5.5v5.5h-5.5zM417.4 221h5.5v5.5h-5.5zM417.4 227.3h5.5v5.5h-5.5zM417.2 233.9h5.5v5.5h-5.5zM417.3 239.7h5.5v5.5h-5.5zM417.9 243.4h4.4v4.4h-4.4zM417.8 246h5.5v5.5h-5.5zM417.4 252.8h5.5v5.5h-5.5zM417.3 259.4h5.5v5.5h-5.5zM416.5 265.3h5.5v5.5h-5.5zM417 269h4.4v4.4h-4.4zM416.9 271.4h5.5v5.5h-5.5zM416.5 278.4h5.5v5.5h-5.5zM420.3 279h4.4v4.4h-4.4zM416.9 284.5h5.5v5.5h-5.5zM420.8 285h4.4v4.4h-4.4zM417.1 290.6h5.5v5.5h-5.5zM417.1 296.6h5.5v5.5h-5.5zM417.6 303.6h5.5v5.5h-5.5zM418 310.3h5.5v5.5h-5.5zM416.9 315.8h5.5v5.5h-5.5zM417.7 322.7h5.5v5.5h-5.5zM418.2 326.4h4.4v4.4h-4.4zM416.8 328.5h5.5v5.5h-5.5zM417.7 335.4h5.5v5.5h-5.5zM417.4 342.2h5.5v5.5h-5.5zM417.5 347.9h5.5v5.5h-5.5zM418 351.6h4.4v4.4h-4.4zM417.5 354.1h5.5v5.5h-5.5zM417.1 360.1h5.5v5.5h-5.5zM417.4 366.7h5.5v5.5h-5.5zM417.5 373.7h5.5v5.5h-5.5zM417.1 379.8h5.5v5.5h-5.5zM423.7 183h5.5v5.5h-5.5zM424.3 186.7h4.4v4.4h-4.4zM423.5 189.2h5.5v5.5h-5.5zM423.2 195.7h5.5v5.5h-5.5zM423.2 201.6h5.5v5.5h-5.5zM423.7 205.3h4.4v4.4h-4.4zM423.6 208.5h5.5v5.5h-5.5zM423.5 214.4h5.5v5.5h-5.5zM423.8 221.1h5.5v5.5h-5.5zM423.7 227.4h5.5v5.5h-5.5zM424 234.2h5.5v5.5h-5.5zM423.6 240.5h5.5v5.5h-5.5zM424.2 246.6h5.5v5.5h-5.5zM424.1 252.8h5.5v5.5h-5.5zM423.8 258.9h5.5v5.5h-5.5zM423.9 265.1h5.5v5.5h-5.5zM423.8 271.8h5.5v5.5h-5.5zM424.3 275.5h4.4v4.4h-4.4zM424.2 277.9h5.5v5.5h-5.5zM428 278.5h4.4v4.4h-4.4zM423.6 284.6h5.5v5.5h-5.5zM424.2 291h5.5v5.5h-5.5zM424.2 297.5h5.5v5.5h-5.5zM424.7 301.2h4.4v4.4h-4.4zM424.2 303.9h5.5v5.5h-5.5zM428 304.5h4.4v4.4h-4.4zM424.1 310h5.5v5.5h-5.5zM424.6 313.8h4.4v4.4h-4.4zM423.4 316.5h5.5v5.5h-5.5zM424 322.2h5.5v5.5h-5.5zM423.7 329.3h5.5v5.5h-5.5zM427.5 329.8h4.4v4.4h-4.4zM424 335.4h5.5v5.5h-5.5zM424.2 341.8h5.5v5.5h-5.5zM423.9 348.4h5.5v5.5h-5.5zM424.4 352.1h4.4v4.4h-4.4zM424.1 354.8h5.5v5.5h-5.5zM424.6 358.6h4.4v4.4h-4.4zM423.5 360.9h5.5v5.5h-5.5zM423.3 367.2h5.5v5.5h-5.5zM423.8 373.5h5.5v5.5h-5.5zM424.4 377.3h4.4v4.4h-4.4zM423.6 379.9h5.5v5.5h-5.5zM430.1 182.7h5.5v5.5h-5.5zM430.9 188.5h5.5v5.5h-5.5zM430.5 196.1h5.5v5.5h-5.5zM431 199.9h4.4v4.4h-4.4zM430.5 201.6h5.5v5.5h-5.5zM430.5 208.6h5.5v5.5h-5.5zM430.8 215.1h5.5v5.5h-5.5zM430.3 220.7h5.5v5.5h-5.5zM429.9 226.7h5.5v5.5h-5.5zM430.5 230.4h4.4v4.4h-4.4zM430.3 233.6h5.5v5.5h-5.5zM430.4 240h5.5v5.5h-5.5zM430.3 245.9h5.5v5.5h-5.5zM430.8 249.6h4.4v4.4h-4.4zM430.8 252.6h5.5v5.5h-5.5zM430.9 258.7h5.5v5.5h-5.5zM430.4 265.3h5.5v5.5h-5.5zM429.8 271.9h5.5v5.5h-5.5zM430.4 278.8h5.5v5.5h-5.5zM430.9 284.3h5.5v5.5h-5.5zM431.5 288h4.4v4.4h-4.4zM430.7 291h5.5v5.5h-5.5zM431.2 294.8h4.4v4.4h-4.4zM430.3 297.2h5.5v5.5h-5.5zM430.5 303.3h5.5v5.5h-5.5zM430.2 309.8h5.5v5.5h-5.5zM430.5 316.2h5.5v5.5h-5.5zM430.7 322.7h5.5v5.5h-5.5zM430.4 329h5.5v5.5h-5.5zM430.9 332.8h4.4v4.4h-4.4zM430.3 335.5h5.5v5.5h-5.5zM430.8 342.1h5.5v5.5h-5.5zM434.6 342.6h4.4v4.4h-4.4zM430.6 347.9h5.5v5.5h-5.5zM431.1 351.7h4.4v4.4h-4.4zM430.8 354.3h5.5v5.5h-5.5zM430.4 360.7h5.5v5.5h-5.5zM431 364.5h4.4v4.4h-4.4zM430.4 367.1h5.5v5.5h-5.5zM430.6 373.6h5.5v5.5h-5.5zM430.1 379.9h5.5v5.5h-5.5zM437 182.6h5.5v5.5h-5.5zM437.6 189h5.5v5.5h-5.5zM437.2 195.7h5.5v5.5h-5.5zM438 201.8h5.5v5.5h-5.5zM438.6 205.5h4.4v4.4h-4.4zM436.7 208.2h5.5v5.5h-5.5zM437.1 214.4h5.5v5.5h-5.5zM437.3 220.5h5.5v5.5h-5.5zM437.9 224.2h4.4v4.4h-4.4zM437.2 227.2h5.5v5.5h-5.5zM441.1 227.7h4.4v4.4h-4.4zM437.4 233.5h5.5v5.5h-5.5zM441.3 234.1h4.4v4.4h-4.4zM436.7 240.2h5.5v5.5h-5.5zM436.9 246.5h5.5v5.5h-5.5zM437.1 252.8h5.5v5.5h-5.5zM436.9 258.9h5.5v5.5h-5.5zM437.4 262.7h4.4v4.4h-4.4zM437.3 265.7h5.5v5.5h-5.5zM437.9 269.5h4.4v4.4h-4.4zM436.9 272.1h5.5v5.5h-5.5zM437.1 278.5h5.5v5.5h-5.5zM437.3 284.6h5.5v5.5h-5.5zM437.3 290.7h5.5v5.5h-5.5zM436.3 297.3h5.5v5.5h-5.5zM437 303.9h5.5v5.5h-5.5zM437.5 307.6h4.4v4.4h-4.4zM437.3 310.2h5.5v5.5h-5.5zM437.1 316.3h5.5v5.5h-5.5zM441 316.9h4.4v4.4h-4.4zM437.2 322.4h5.5v5.5h-5.5zM437.8 326.2h4.4v4.4h-4.4zM437.3 329.4h5.5v5.5h-5.5zM441.1 330h4.4v4.4h-4.4zM437.2 335.8h5.5v5.5h-5.5zM437.8 339.5h4.4v4.4h-4.4zM437.2 341.9h5.5v5.5h-5.5zM437.2 347.9h5.5v5.5h-5.5zM437 354.5h5.5v5.5h-5.5zM436.9 360.6h5.5v5.5h-5.5zM437 367.5h5.5v5.5h-5.5zM437.5 373.3h5.5v5.5h-5.5zM437.7 379.5h5.5v5.5h-5.5zM443.6 182.4h5.5v5.5h-5.5zM443 189.1h5.5v5.5h-5.5zM446.8 189.6h4.4v4.4h-4.4zM443.9 195.5h5.5v5.5h-5.5zM443.2 201.7h5.5v5.5h-5.5zM444.2 208.1h5.5v5.5h-5.5zM443.9 214.2h5.5v5.5h-5.5zM447.8 214.7h4.4v4.4h-4.4zM443.3 220.8h5.5v5.5h-5.5zM443.9 224.5h4.4v4.4h-4.4zM443.7 227.1h5.5v5.5h-5.5zM444.1 233.3h5.5v5.5h-5.5zM448 233.9h4.4v4.4h-4.4zM443.2 240h5.5v5.5h-5.5zM443.3 246.1h5.5v5.5h-5.5zM443.9 249.9h4.4v4.4h-4.4zM443.7 252.5h5.5v5.5h-5.5zM444.3 256.2h4.4v4.4h-4.4zM443.7 259.1h5.5v5.5h-5.5zM443.2 265.3h5.5v5.5h-5.5zM443.9 271.9h5.5v5.5h-5.5zM443 278.2h5.5v5.5h-5.5zM443.3 284.6h5.5v5.5h-5.5zM443.6 291h5.5v5.5h-5.5zM444 297.2h5.5v5.5h-5.5zM443.7 303.4h5.5v5.5h-5.5zM443.4 310h5.5v5.5h-5.5zM444 313.8h4.4v4.4h-4.4zM443.9 316.3h5.5v5.5h-5.5zM443.7 322.4h5.5v5.5h-5.5zM443.9 329.5h5.5v5.5h-5.5zM447.8 330.1h4.4v4.4h-4.4zM443.9 335.3h5.5v5.5h-5.5zM443.9 341.5h5.5v5.5h-5.5zM444.4 348.6h5.5v5.5h-5.5zM443.4 354.5h5.5v5.5h-5.5zM443.7 360.4h5.5v5.5h-5.5zM444 367.1h5.5v5.5h-5.5zM443.6 373h5.5v5.5h-5.5zM447.5 373.6h4.4v4.4h-4.4zM442.9 380h5.5v5.5h-5.5zM450.7 182.8h5.5v5.5h-5.5zM450.6 189.1h5.5v5.5h-5.5zM450 195.7h5.5v5.5h-5.5zM453.9 196.2h4.4v4.4h-4.4zM450 201.4h5.5v5.5h-5.5zM450.5 205.1h4.4v4.4h-4.4zM450.4 208.2h5.5v5.5h-5.5zM450.4 214.7h5.5v5.5h-5.5zM451 218.5h4.4v4.4h-4.4zM450.2 220.5h5.5v5.5h-5.5zM450.5 227.4h5.5v5.5h-5.5zM450.3 233.4h5.5v5.5h-5.5zM450.4 240.2h5.5v5.5h-5.5zM451 244h4.4v4.4h-4.4zM450.8 246.4h5.5v5.5h-5.5zM450.4 253h5.5v5.5h-5.5zM450.3 258.6h5.5v5.5h-5.5zM450.8 262.4h4.4v4.4h-4.4zM449.9 265.4h5.5v5.5h-5.5zM450.5 272h5.5v5.5h-5.5zM450.4 278h5.5v5.5h-5.5zM450.6 284.5h5.5v5.5h-5.5zM450.5 290.9h5.5v5.5h-5.5zM450.1 297h5.5v5.5h-5.5zM454 297.6h4.4v4.4h-4.4zM450.2 303.6h5.5v5.5h-5.5zM450.1 310h5.5v5.5h-5.5zM450.2 316.1h5.5v5.5h-5.5zM450.3 323h5.5v5.5h-5.5zM450.1 329.1h5.5v5.5h-5.5zM454 329.6h4.4v4.4h-4.4zM449.6 335.4h5.5v5.5h-5.5zM450.4 341.7h5.5v5.5h-5.5zM450.1 347.8h5.5v5.5h-5.5zM454 348.3h4.4v4.4h-4.4zM450.8 354.3h5.5v5.5h-5.5zM450.4 360.6h5.5v5.5h-5.5zM450.5 366.7h5.5v5.5h-5.5zM450.3 373.7h5.5v5.5h-5.5zM450.3 380.1h5.5v5.5h-5.5zM457 182.7h5.5v5.5h-5.5zM456.5 189.3h5.5v5.5h-5.5zM456.9 195.8h5.5v5.5h-5.5zM457.3 201.3h5.5v5.5h-5.5zM456.8 207.4h5.5v5.5h-5.5zM456.9 214.6h5.5v5.5h-5.5zM457 221.1h5.5v5.5h-5.5zM457.8 227.9h5.5v5.5h-5.5zM457.1 233.5h5.5v5.5h-5.5zM456.8 240.6h5.5v5.5h-5.5zM456.3 246.1h5.5v5.5h-5.5zM456.9 252.4h5.5v5.5h-5.5zM456.7 258.6h5.5v5.5h-5.5zM457 265.3h5.5v5.5h-5.5zM456.9 271.2h5.5v5.5h-5.5zM456.9 278h5.5v5.5h-5.5zM456.7 285.1h5.5v5.5h-5.5zM457.2 290.7h5.5v5.5h-5.5zM456.8 297.2h5.5v5.5h-5.5zM456.7 303.3h5.5v5.5h-5.5zM457.4 310.4h5.5v5.5h-5.5zM457 316.7h5.5v5.5h-5.5zM456.7 323h5.5v5.5h-5.5zM456.2 329.2h5.5v5.5h-5.5zM457.2 335.4h5.5v5.5h-5.5zM456.8 341.4h5.5v5.5h-5.5zM456.7 347.6h5.5v5.5h-5.5zM457 354.8h5.5v5.5h-5.5zM457.4 360.9h5.5v5.5h-5.5zM457.3 367.5h5.5v5.5h-5.5zM456.6 373.3h5.5v5.5h-5.5zM456.8 380h5.5v5.5h-5.5z" fill="#ff6446"/>
<path d="M148.3 184.7h1.8v1.8h-1.8zM148 190.9h1.8v1.8h-1.8zM148.1 197.4h1.8v1.8h-1.8zM147.7 209.6h1.8v1.8h-1.8zM148.4 216.4h1.8v1.8h-1.8zM148.1 222.7h1.8v1.8h-1.8zM148.2 228.8h1.8v1.8h-1.8zM148.3 235.7h1.8v1.8h-1.8zM148.3 241.4h1.8v1.8h-1.8zM147.8 248.4h1.8v1.8h-1.8zM148.9 254.8h1.8v1.8h-1.8zM148.5 260.8h1.8v1.8h-1.8zM148.5 267.7h1.8v1.8h-1.8zM148.2 273.6h1.8v1.8h-1.8zM148.6 280.3h1.8v1.8h-1.8zM148.5 285.7h1.8v1.8h-1.8zM148.5 292.6h1.8v1.8h-1.8zM148.2 299h1.8v1.8h-1.8zM148.2 305.1h1.8v1.8h-1.8zM148.7 312h1.8v1.8h-1.8zM148.2 318.4h1.8v1.8h-1.8zM148 330.9h1.8v1.8h-1.8zM148.1 337.3h1.8v1.8h-1.8zM148.2 343.8h1.8v1.8h-1.8zM148.3 349.9h1.8v1.8h-1.8zM148.6 356.4h1.8v1.8h-1.8zM148.3 362.1h1.8v1.8h-1.8zM148.7 381.7h1.8v1.8h-1.8zM154.6 184.9h1.8v1.8h-1.8zM154.7 190.7h1.8v1.8h-1.8zM154.9 197.6h1.8v1.8h-1.8zM154.8 203.5h1.8v1.8h-1.8zM154.8 209.9h1.8v1.8h-1.8zM154.7 216h1.8v1.8h-1.8zM155.3 222.3h1.8v1.8h-1.8zM154.4 229.3h1.8v1.8h-1.8zM154.7 235.6h1.8v1.8h-1.8zM154.6 241.4h1.8v1.8h-1.8zM155 248.2h1.8v1.8h-1.8zM155.1 254.4h1.8v1.8h-1.8zM155.1 261h1.8v1.8h-1.8zM155.2 267.5h1.8v1.8h-1.8zM155.1 273.9h1.8v1.8h-1.8zM155.4 279.6h1.8v1.8h-1.8zM155.5 286.8h1.8v1.8h-1.8zM155.2 292.4h1.8v1.8h-1.8zM154.4 298.4h1.8v1.8h-1.8zM154.9 305.2h1.8v1.8h-1.8zM154.6 311.3h1.8v1.8h-1.8zM155 317.8h1.8v1.8h-1.8zM154.6 324.6h1.8v1.8h-1.8zM154.9 336.8h1.8v1.8h-1.8zM154.9 343.5h1.8v1.8h-1.8zM154.2 349.7h1.8v1.8h-1.8zM154.7 356.7h1.8v1.8h-1.8zM154.6 363h1.8v1.8h-1.8zM155.1 375.2h1.8v1.8h-1.8zM154.9 381.7h1.8v1.8h-1.8zM161.9 184.4h1.8v1.8h-1.8zM160.7 191h1.8v1.8h-1.8zM161.2 197.2h1.8v1.8h-1.8zM161.6 203.6h1.8v1.8h-1.8zM161.8 216.6h1.8v1.8h-1.8zM161.4 222.7h1.8v1.8h-1.8zM161.7 229.1h1.8v1.8h-1.8zM161.7 235.5h1.8v1.8h-1.8zM161.8 254.3h1.8v1.8h-1.8zM161.4 260.7h1.8v1.8h-1.8zM161.2 267.4h1.8v1.8h-1.8zM161.4 273.3h1.8v1.8h-1.8zM161.2 280.4h1.8v1.8h-1.8zM161.6 286.5h1.8v1.8h-1.8zM161.3 292.3h1.8v1.8h-1.8zM161.2 298.8h1.8v1.8h-1.8zM161.4 305.5h1.8v1.8h-1.8zM161.5 311.8h1.8v1.8h-1.8zM162.1 318.3h1.8v1.8h-1.8zM161 330.7h1.8v1.8h-1.8zM162.2 337.3h1.8v1.8h-1.8zM161.5 343.5h1.8v1.8h-1.8zM161.2 350.3h1.8v1.8h-1.8zM161.4 356.4h1.8v1.8h-1.8zM161.8 368.5h1.8v1.8h-1.8zM161.6 375.3h1.8v1.8h-1.8zM161.1 381.5h1.8v1.8h-1.8zM167.5 185h1.8v1.8h-1.8zM168 190.6h1.8v1.8h-1.8zM167.9 197.3h1.8v1.8h-1.8zM168.4 203.3h1.8v1.8h-1.8zM167.8 209.9h1.8v1.8h-1.8zM168 216.1h1.8v1.8h-1.8zM168.1 223h1.8v1.8h-1.8zM167.9 228.8h1.8v1.8h-1.8zM168.6 235.2h1.8v1.8h-1.8zM167.9 242h1.8v1.8h-1.8zM168.1 247.8h1.8v1.8h-1.8zM168.4 254.3h1.8v1.8h-1.8zM168.3 260.6h1.8v1.8h-1.8zM168.4 266.8h1.8v1.8h-1.8zM167.8 273.7h1.8v1.8h-1.8zM167.8 285.8h1.8v1.8h-1.8zM168.2 292.7h1.8v1.8h-1.8zM168.7 298.7h1.8v1.8h-1.8zM167.7 305.1h1.8v1.8h-1.8zM168.4 311.5h1.8v1.8h-1.8zM168.5 317.3h1.8v1.8h-1.8zM167.8 324.4h1.8v1.8h-1.8zM168.5 331.1h1.8v1.8h-1.8zM167.5 337.1h1.8v1.8h-1.8zM168.1 343.2h1.8v1.8h-1.8zM168.5 350.5h1.8v1.8h-1.8zM168.1 356.1h1.8v1.8h-1.8zM167.8 362.8h1.8v1.8h-1.8zM167.9 375.4h1.8v1.8h-1.8zM168.1 381.3h1.8v1.8h-1.8zM174.1 184.6h1.8v1.8h-1.8zM174.6 190.6h1.8v1.8h-1.8zM174.4 197.4h1.8v1.8h-1.8zM174.6 203.8h1.8v1.8h-1.8zM174.8 210.1h1.8v1.8h-1.8zM174.6 216.6h1.8v1.8h-1.8zM174.3 222.9h1.8v1.8h-1.8zM174.8 228.6h1.8v1.8h-1.8zM174.8 235h1.8v1.8h-1.8zM175.2 248.1h1.8v1.8h-1.8zM174.5 254.7h1.8v1.8h-1.8zM175 260.7h1.8v1.8h-1.8zM175 267.4h1.8v1.8h-1.8zM174.4 273.1h1.8v1.8h-1.8zM174.2 279.9h1.8v1.8h-1.8zM174.7 292.9h1.8v1.8h-1.8zM174.9 299.3h1.8v1.8h-1.8zM174.8 305.6h1.8v1.8h-1.8zM175 312.4h1.8v1.8h-1.8zM174.8 318.5h1.8v1.8h-1.8zM174.4 324.4h1.8v1.8h-1.8zM175 330.4h1.8v1.8h-1.8zM174.3 337.5h1.8v1.8h-1.8zM174.6 343.9h1.8v1.8h-1.8zM174.5 350h1.8v1.8h-1.8zM174.8 356h1.8v1.8h-1.8zM174.8 362.9h1.8v1.8h-1.8zM175.4 369.6h1.8v1.8h-1.8zM175.2 375.3h1.8v1.8h-1.8zM181.1 184.5h1.8v1.8h-1.8zM181.5 190.7h1.8v1.8h-1.8zM181.7 197.3h1.8v1.8h-1.8zM181.3 203.9h1.8v1.8h-1.8zM181.2 210.8h1.8v1.8h-1.8zM181.9 216.3h1.8v1.8h-1.8zM181.5 222.9h1.8v1.8h-1.8zM181.5 229.3h1.8v1.8h-1.8zM181.3 235.6h1.8v1.8h-1.8zM181.4 241.6h1.8v1.8h-1.8zM181.2 247.5h1.8v1.8h-1.8zM181.9 254.5h1.8v1.8h-1.8zM181 260.7h1.8v1.8h-1.8zM181.4 266.8h1.8v1.8h-1.8zM181.2 273.6h1.8v1.8h-1.8zM181.3 280.5h1.8v1.8h-1.8zM181.5 286.1h1.8v1.8h-1.8zM181.3 292.6h1.8v1.8h-1.8zM181.3 298.7h1.8v1.8h-1.8zM181.3 305.3h1.8v1.8h-1.8zM181 311.7h1.8v1.8h-1.8zM181.4 318.6h1.8v1.8h-1.8zM181.8 323.9h1.8v1.8h-1.8zM181.5 331h1.8v1.8h-1.8zM181.2 337h1.8v1.8h-1.8zM180.7 343.5h1.8v1.8h-1.8zM181.1 356h1.8v1.8h-1.8zM181.1 362.1h1.8v1.8h-1.8zM181.4 369h1.8v1.8h-1.8zM181.7 375.5h1.8v1.8h-1.8zM181.3 381.7h1.8v1.8h-1.8zM188.4 184.6h1.8v1.8h-1.8zM187.9 190.7h1.8v1.8h-1.8zM187.7 197.3h1.8v1.8h-1.8zM187.6 203.5h1.8v1.8h-1.8zM187.8 210h1.8v1.8h-1.8zM188 222.7h1.8v1.8h-1.8zM188.2 229.3h1.8v1.8h-1.8zM187.8 235.1h1.8v1.8h-1.8zM188.3 241.7h1.8v1.8h-1.8zM187.9 254.6h1.8v1.8h-1.8zM187.8 260.9h1.8v1.8h-1.8zM188.2 266.9h1.8v1.8h-1.8zM188 273.7h1.8v1.8h-1.8zM188.1 280.2h1.8v1.8h-1.8zM188.2 292.4h1.8v1.8h-1.8zM187.6 299.1h1.8v1.8h-1.8zM188.6 306h1.8v1.8h-1.8zM188 311.8h1.8v1.8h-1.8zM188 324.7h1.8v1.8h-1.8zM187.3 331.1h1.8v1.8h-1.8zM187.9 343.9h1.8v1.8h-1.8zM187.7 349.6h1.8v1.8h-1.8zM188 362.9h1.8v1.8h-1.8zM187.8 368.9h1.8v1.8h-1.8zM187.8 375.2h1.8v1.8h-1.8zM188.2 382.1h1.8v1.8h-1.8zM194.3 184.8h1.8v1.8h-1.8zM194.8 197.3h1.8v1.8h-1.8zM194.8 203h1.8v1.8h-1.8zM194.8 209.9h1.8v1.8h-1.8zM194.3 215.9h1.8v1.8h-1.8zM194.5 223h1.8v1.8h-1.8zM194.5 235.5h1.8v1.8h-1.8zM194.4 241.9h1.8v1.8h-1.8zM194.6 248h1.8v1.8h-1.8zM195.1 254.8h1.8v1.8h-1.8zM194.7 260.9h1.8v1.8h-1.8zM194.3 273.5h1.8v1.8h-1.8zM194.2 279.4h1.8v1.8h-1.8zM194.7 285.9h1.8v1.8h-1.8zM194.5 292.9h1.8v1.8h-1.8zM194.6 298.8h1.8v1.8h-1.8zM194.4 312h1.8v1.8h-1.8zM194.1 318.2h1.8v1.8h-1.8zM194.4 336.9h1.8v1.8h-1.8zM194.8 343.4h1.8v1.8h-1.8zM194.9 349.6h1.8v1.8h-1.8zM194.3 356h1.8v1.8h-1.8zM195 361.9h1.8v1.8h-1.8zM194.5 369.1h1.8v1.8h-1.8zM194.9 374.7h1.8v1.8h-1.8zM194.6 381.8h1.8v1.8h-1.8zM201.4 133.8h1.8v1.8h-1.8zM201.8 139.6h1.8v1.8h-1.8zM200.8 146.5h1.8v1.8h-1.8zM201.1 152.6h1.8v1.8h-1.8zM201.2 165.6h1.8v1.8h-1.8zM201.1 171.8h1.8v1.8h-1.8zM201.1 178h1.8v1.8h-1.8zM201.2 184.3h1.8v1.8h-1.8zM200.5 190.7h1.8v1.8h-1.8zM201.5 197.5h1.8v1.8h-1.8zM201.7 203.7h1.8v1.8h-1.8zM201.5 210.7h1.8v1.8h-1.8zM201.2 216.6h1.8v1.8h-1.8zM201.2 222.4h1.8v1.8h-1.8zM201.8 228.8h1.8v1.8h-1.8zM201.3 235.8h1.8v1.8h-1.8zM200.6 241.5h1.8v1.8h-1.8zM200.8 248.1h1.8v1.8h-1.8zM201 254.5h1.8v1.8h-1.8zM200.9 267.2h1.8v1.8h-1.8zM200.6 273.6h1.8v1.8h-1.8zM201.2 280.2h1.8v1.8h-1.8zM201.4 286.7h1.8v1.8h-1.8zM201.2 298.9h1.8v1.8h-1.8zM201 304.9h1.8v1.8h-1.8zM201.3 318.1h1.8v1.8h-1.8zM201.1 324.5h1.8v1.8h-1.8zM200.7 330.5h1.8v1.8h-1.8zM200.7 337.4h1.8v1.8h-1.8zM200.9 343.5h1.8v1.8h-1.8zM201.5 350.3h1.8v1.8h-1.8zM200.7 356.3h1.8v1.8h-1.8zM201.2 369.3h1.8v1.8h-1.8zM200.4 375.2h1.8v1.8h-1.8zM201.5 381.6h1.8v1.8h-1.8zM200.9 394.7h1.8v1.8h-1.8zM201.2 401h1.8v1.8h-1.8zM201.1 408h1.8v1.8h-1.8zM201.1 413.5h1.8v1.8h-1.8zM201.2 419.7h1.8v1.8h-1.8zM201.3 426.7h1.8v1.8h-1.8zM201.6 432.7h1.8v1.8h-1.8zM207.3 134.2h1.8v1.8h-1.8zM207.8 146.2h1.8v1.8h-1.8zM207.2 152.8h1.8v1.8h-1.8zM208 159.1h1.8v1.8h-1.8zM208.1 165.3h1.8v1.8h-1.8zM207.5 171.9h1.8v1.8h-1.8zM207.8 177.8h1.8v1.8h-1.8zM207.7 184.5h1.8v1.8h-1.8zM208.6 191.1h1.8v1.8h-1.8zM208.1 196.9h1.8v1.8h-1.8zM207.9 203.8h1.8v1.8h-1.8zM207.8 209.8h1.8v1.8h-1.8zM207.8 222.8h1.8v1.8h-1.8zM207.5 229.4h1.8v1.8h-1.8zM207.6 235.1h1.8v1.8h-1.8zM207.8 241.4h1.8v1.8h-1.8zM207.9 248h1.8v1.8h-1.8zM207.2 254.4h1.8v1.8h-1.8zM207.1 260.8h1.8v1.8h-1.8zM207.1 268h1.8v1.8h-1.8zM208.1 273.9h1.8v1.8h-1.8zM207.9 279.8h1.8v1.8h-1.8zM208 286.9h1.8v1.8h-1.8zM208.2 293.2h1.8v1.8h-1.8zM207.1 298.5h1.8v1.8h-1.8zM207.7 305.4h1.8v1.8h-1.8zM207.7 312.1h1.8v1.8h-1.8zM208 317.8h1.8v1.8h-1.8zM207.8 325h1.8v1.8h-1.8zM207.5 330.5h1.8v1.8h-1.8zM207.9 337h1.8v1.8h-1.8zM208 343.5h1.8v1.8h-1.8zM207.9 349.8h1.8v1.8h-1.8zM207.3 356.3h1.8v1.8h-1.8zM207.3 362.4h1.8v1.8h-1.8zM208.3 369.3h1.8v1.8h-1.8zM207.3 375.8h1.8v1.8h-1.8zM208.2 381.4h1.8v1.8h-1.8zM207.8 387.7h1.8v1.8h-1.8zM207.8 394.8h1.8v1.8h-1.8zM207.5 400.9h1.8v1.8h-1.8zM207.5 407.3h1.8v1.8h-1.8zM207.6 413.4h1.8v1.8h-1.8zM207.9 419.7h1.8v1.8h-1.8zM207.7 426.6h1.8v1.8h-1.8zM207.7 432.4h1.8v1.8h-1.8zM214.1 133.4h1.8v1.8h-1.8zM214.6 139.9h1.8v1.8h-1.8zM214.8 152.7h1.8v1.8h-1.8zM214.7 159.6h1.8v1.8h-1.8zM214.7 165.3h1.8v1.8h-1.8zM214.2 171.8h1.8v1.8h-1.8zM213.9 178.8h1.8v1.8h-1.8zM214.2 184.5h1.8v1.8h-1.8zM213.8 191.2h1.8v1.8h-1.8zM214.6 197.4h1.8v1.8h-1.8zM214 203.7h1.8v1.8h-1.8zM214.6 216h1.8v1.8h-1.8zM214.3 222.4h1.8v1.8h-1.8zM214 229.5h1.8v1.8h-1.8zM214.1 235.4h1.8v1.8h-1.8zM214.4 241.8h1.8v1.8h-1.8zM214.9 247.8h1.8v1.8h-1.8zM214.5 254.5h1.8v1.8h-1.8zM213.8 260.5h1.8v1.8h-1.8zM214.5 267.6h1.8v1.8h-1.8zM215 273.8h1.8v1.8h-1.8zM214.5 279.7h1.8v1.8h-1.8zM214.3 286.2h1.8v1.8h-1.8zM214.2 292.7h1.8v1.8h-1.8zM214.5 298.7h1.8v1.8h-1.8zM214.1 305.3h1.8v1.8h-1.8zM214.3 311.8h1.8v1.8h-1.8zM214.1 317.8h1.8v1.8h-1.8zM214.1 324.6h1.8v1.8h-1.8zM214.5 330.6h1.8v1.8h-1.8zM214.4 337h1.8v1.8h-1.8zM214.1 356.1h1.8v1.8h-1.8zM214.2 362.6h1.8v1.8h-1.8zM214.4 369.4h1.8v1.8h-1.8zM213.9 375.3h1.8v1.8h-1.8zM214.6 381.6h1.8v1.8h-1.8zM214.3 388.2h1.8v1.8h-1.8zM214.4 394.5h1.8v1.8h-1.8zM214.1 400.8h1.8v1.8h-1.8zM214.8 407.4h1.8v1.8h-1.8zM213.9 413h1.8v1.8h-1.8zM214.2 419.7h1.8v1.8h-1.8zM213.9 426.1h1.8v1.8h-1.8zM213.9 432.3h1.8v1.8h-1.8zM221.1 133.4h1.8v1.8h-1.8zM221 146.7h1.8v1.8h-1.8zM221 153.1h1.8v1.8h-1.8zM220.9 165.7h1.8v1.8h-1.8zM221 171.2h1.8v1.8h-1.8zM220.7 178.2h1.8v1.8h-1.8zM221.2 184h1.8v1.8h-1.8zM221.3 204.2h1.8v1.8h-1.8zM221.3 210.3h1.8v1.8h-1.8zM220.5 215.9h1.8v1.8h-1.8zM221.6 222.7h1.8v1.8h-1.8zM221.5 229.2h1.8v1.8h-1.8zM220.8 235.2h1.8v1.8h-1.8zM220.6 241.7h1.8v1.8h-1.8zM221 248.5h1.8v1.8h-1.8zM220.8 260.6h1.8v1.8h-1.8zM220.3 267.6h1.8v1.8h-1.8zM220.3 280.2h1.8v1.8h-1.8zM221 292.8h1.8v1.8h-1.8zM221.3 298.8h1.8v1.8h-1.8zM221.6 311.9h1.8v1.8h-1.8zM221 324.5h1.8v1.8h-1.8zM220.3 330.7h1.8v1.8h-1.8zM220.6 337.4h1.8v1.8h-1.8zM220.5 343.2h1.8v1.8h-1.8zM221 350.3h1.8v1.8h-1.8zM220.6 356.6h1.8v1.8h-1.8zM221 363h1.8v1.8h-1.8zM221.1 369.1h1.8v1.8h-1.8zM220.5 381.7h1.8v1.8h-1.8zM220.9 388.7h1.8v1.8h-1.8zM220.7 394.4h1.8v1.8h-1.8zM221.5 407h1.8v1.8h-1.8zM220.6 413.5h1.8v1.8h-1.8zM221.1 420.1h1.8v1.8h-1.8zM221.4 426.3h1.8v1.8h-1.8zM227.6 134h1.8v1.8h-1.8zM227.5 140.1h1.8v1.8h-1.8zM227.5 146.2h1.8v1.8h-1.8zM228.2 153.2h1.8v1.8h-1.8zM228.2 159.2h1.8v1.8h-1.8zM227.6 165.9h1.8v1.8h-1.8zM227.3 172.1h1.8v1.8h-1.8zM227.5 178.5h1.8v1.8h-1.8zM227.4 190.7h1.8v1.8h-1.8zM228 196.7h1.8v1.8h-1.8zM227.7 203.4h1.8v1.8h-1.8zM227.6 210h1.8v1.8h-1.8zM227.7 216.5h1.8v1.8h-1.8zM227.2 222.5h1.8v1.8h-1.8zM227.3 228.7h1.8v1.8h-1.8zM227.1 235.5h1.8v1.8h-1.8zM227.3 241.8h1.8v1.8h-1.8zM227.6 247.9h1.8v1.8h-1.8zM227.2 254.5h1.8v1.8h-1.8zM228 260.7h1.8v1.8h-1.8zM227.6 267.3h1.8v1.8h-1.8zM227.4 273.6h1.8v1.8h-1.8zM227.7 279.9h1.8v1.8h-1.8zM227.4 286.2h1.8v1.8h-1.8zM227.1 292.7h1.8v1.8h-1.8zM227.6 298.7h1.8v1.8h-1.8zM227.6 304.9h1.8v1.8h-1.8zM228.1 311.9h1.8v1.8h-1.8zM227.6 318.3h1.8v1.8h-1.8zM227.9 324.1h1.8v1.8h-1.8zM226.8 331.1h1.8v1.8h-1.8zM228.2 337.3h1.8v1.8h-1.8zM227.2 343.3h1.8v1.8h-1.8zM227.4 350.4h1.8v1.8h-1.8zM227.7 356.4h1.8v1.8h-1.8zM228.1 362.4h1.8v1.8h-1.8zM227.4 369.2h1.8v1.8h-1.8zM227.6 375.3h1.8v1.8h-1.8zM227.6 381.2h1.8v1.8h-1.8zM227.4 387.8h1.8v1.8h-1.8zM227.1 394.9h1.8v1.8h-1.8zM227.2 401.1h1.8v1.8h-1.8zM227.5 407.5h1.8v1.8h-1.8zM227.7 413.2h1.8v1.8h-1.8zM228.2 419.7h1.8v1.8h-1.8zM227.5 426.8h1.8v1.8h-1.8zM227.7 433.1h1.8v1.8h-1.8zM234.3 133.6h1.8v1.8h-1.8zM233.9 140.4h1.8v1.8h-1.8zM234.3 153h1.8v1.8h-1.8zM234 159.2h1.8v1.8h-1.8zM233.3 171.9h1.8v1.8h-1.8zM234.9 178h1.8v1.8h-1.8zM233.9 191h1.8v1.8h-1.8zM233.9 197.1h1.8v1.8h-1.8zM234.3 210.5h1.8v1.8h-1.8zM234.3 216.9h1.8v1.8h-1.8zM234.1 222.6h1.8v1.8h-1.8zM234.6 235.5h1.8v1.8h-1.8zM234.2 255.1h1.8v1.8h-1.8zM233.7 260.5h1.8v1.8h-1.8zM234.2 267.1h1.8v1.8h-1.8zM234 273.5h1.8v1.8h-1.8zM233.8 279.6h1.8v1.8h-1.8zM234.9 286h1.8v1.8h-1.8zM234.1 292.6h1.8v1.8h-1.8zM233.6 299.2h1.8v1.8h-1.8zM234.4 305.5h1.8v1.8h-1.8zM233.5 312.2h1.8v1.8h-1.8zM234.5 317.7h1.8v1.8h-1.8zM234 324.8h1.8v1.8h-1.8zM233.6 330.8h1.8v1.8h-1.8zM233.9 337.8h1.8v1.8h-1.8zM233.9 343.9h1.8v1.8h-1.8zM234.6 356.7h1.8v1.8h-1.8zM234.4 363.1h1.8v1.8h-1.8zM234 368.8h1.8v1.8h-1.8zM233.7 375.1h1.8v1.8h-1.8zM234.2 387.8h1.8v1.8h-1.8zM233.8 394.6h1.8v1.8h-1.8zM234.2 400.7h1.8v1.8h-1.8zM234.5 413h1.8v1.8h-1.8zM234.2 419.8h1.8v1.8h-1.8zM233.8 426.7h1.8v1.8h-1.8zM234.4 432.4h1.8v1.8h-1.8zM240.5 133.6h1.8v1.8h-1.8zM240.8 139.9h1.8v1.8h-1.8zM240.8 145.8h1.8v1.8h-1.8zM240.8 152.6h1.8v1.8h-1.8zM240.6 158.8h1.8v1.8h-1.8zM241 165.4h1.8v1.8h-1.8zM241 171.9h1.8v1.8h-1.8zM240.9 191.1h1.8v1.8h-1.8zM240.4 197.4h1.8v1.8h-1.8zM240.4 203.2h1.8v1.8h-1.8zM241.1 210.9h1.8v1.8h-1.8zM240.5 215.3h1.8v1.8h-1.8zM240.9 222.9h1.8v1.8h-1.8zM240.4 228.9h1.8v1.8h-1.8zM240.8 235.8h1.8v1.8h-1.8zM240.7 241.8h1.8v1.8h-1.8zM241 248.2h1.8v1.8h-1.8zM240.3 261.2h1.8v1.8h-1.8zM240.9 266.8h1.8v1.8h-1.8zM240.5 273.3h1.8v1.8h-1.8zM240.9 279.8h1.8v1.8h-1.8zM240.8 286.5h1.8v1.8h-1.8zM240.7 305.5h1.8v1.8h-1.8zM240.8 311.6h1.8v1.8h-1.8zM240.5 318.1h1.8v1.8h-1.8zM240.7 324.1h1.8v1.8h-1.8zM241.4 331.1h1.8v1.8h-1.8zM241.1 337.7h1.8v1.8h-1.8zM240.8 343.6h1.8v1.8h-1.8zM240.5 349.3h1.8v1.8h-1.8zM240.8 356.3h1.8v1.8h-1.8zM240.4 369.3h1.8v1.8h-1.8zM241 375.2h1.8v1.8h-1.8zM240.7 381.3h1.8v1.8h-1.8zM240.7 388.2h1.8v1.8h-1.8zM240.8 400.8h1.8v1.8h-1.8zM241.1 407.3h1.8v1.8h-1.8zM241.1 413.8h1.8v1.8h-1.8zM241.1 419.9h1.8v1.8h-1.8zM240.8 425.9h1.8v1.8h-1.8zM241.4 432.8h1.8v1.8h-1.8zM247.2 134.3h1.8v1.8h-1.8zM247.4 139.9h1.8v1.8h-1.8zM247.2 153.5h1.8v1.8h-1.8zM247.2 164.9h1.8v1.8h-1.8zM247.2 171.9h1.8v1.8h-1.8zM247.2 178.2h1.8v1.8h-1.8zM247.5 184.7h1.8v1.8h-1.8zM247.3 209.9h1.8v1.8h-1.8zM247.2 216.3h1.8v1.8h-1.8zM247.8 222.7h1.8v1.8h-1.8zM248.1 229.2h1.8v1.8h-1.8zM247.2 235.4h1.8v1.8h-1.8zM247.6 242h1.8v1.8h-1.8zM247.6 247.9h1.8v1.8h-1.8zM247.5 254.1h1.8v1.8h-1.8zM247.5 260.8h1.8v1.8h-1.8zM247.9 266.8h1.8v1.8h-1.8zM247.6 273.2h1.8v1.8h-1.8zM247.6 279.8h1.8v1.8h-1.8zM247.7 286.4h1.8v1.8h-1.8zM247.6 292.3h1.8v1.8h-1.8zM247 299.1h1.8v1.8h-1.8zM247.7 311.4h1.8v1.8h-1.8zM247.5 318.8h1.8v1.8h-1.8zM247.6 324.2h1.8v1.8h-1.8zM247.6 331h1.8v1.8h-1.8zM247.7 336.9h1.8v1.8h-1.8zM247.5 343.6h1.8v1.8h-1.8zM247.8 350.1h1.8v1.8h-1.8zM247.5 356.5h1.8v1.8h-1.8zM247.7 369.2h1.8v1.8h-1.8zM247 375.1h1.8v1.8h-1.8zM247.1 387.9h1.8v1.8h-1.8zM247.2 394.4h1.8v1.8h-1.8zM247 401h1.8v1.8h-1.8zM247.7 407.1h1.8v1.8h-1.8zM247.7 413.5h1.8v1.8h-1.8zM246.8 419.7h1.8v1.8h-1.8zM247.2 426.5h1.8v1.8h-1.8zM247.2 432.4h1.8v1.8h-1.8zM254.5 133.5h1.8v1.8h-1.8zM254.2 139.7h1.8v1.8h-1.8zM254.2 146h1.8v1.8h-1.8zM254.1 152.9h1.8v1.8h-1.8zM254.1 159h1.8v1.8h-1.8zM253.6 165.6h1.8v1.8h-1.8zM253.8 172.3h1.8v1.8h-1.8zM254.4 178.3h1.8v1.8h-1.8zM253.6 184.4h1.8v1.8h-1.8zM254.1 191h1.8v1.8h-1.8zM253.8 197h1.8v1.8h-1.8zM253.8 210.2h1.8v1.8h-1.8zM254 216.9h1.8v1.8h-1.8zM253.9 229.3h1.8v1.8h-1.8zM254.4 235.2h1.8v1.8h-1.8zM254.1 248.7h1.8v1.8h-1.8zM253.9 254.1h1.8v1.8h-1.8zM253.8 261.1h1.8v1.8h-1.8zM253.7 267.2h1.8v1.8h-1.8zM253.7 273.9h1.8v1.8h-1.8zM253.5 279.7h1.8v1.8h-1.8zM253.9 286.1h1.8v1.8h-1.8zM254 292.5h1.8v1.8h-1.8zM253.7 298.9h1.8v1.8h-1.8zM253.7 305.7h1.8v1.8h-1.8zM253.6 311.4h1.8v1.8h-1.8zM254.3 317.9h1.8v1.8h-1.8zM254 323.9h1.8v1.8h-1.8zM254.4 330.9h1.8v1.8h-1.8zM253.9 337h1.8v1.8h-1.8zM253.9 343.5h1.8v1.8h-1.8zM254.5 350h1.8v1.8h-1.8zM254.3 356.3h1.8v1.8h-1.8zM253.8 362h1.8v1.8h-1.8zM254.2 368.8h1.8v1.8h-1.8zM254 375.6h1.8v1.8h-1.8zM253.8 382h1.8v1.8h-1.8zM253.9 388.1h1.8v1.8h-1.8zM254.4 400h1.8v1.8h-1.8zM253.5 408h1.8v1.8h-1.8zM254.4 413.8h1.8v1.8h-1.8zM253.9 420h1.8v1.8h-1.8zM253.6 426.2h1.8v1.8h-1.8zM253.9 432.7h1.8v1.8h-1.8zM260.6 139.8h1.8v1.8h-1.8zM260.9 146.4h1.8v1.8h-1.8zM260.4 152.4h1.8v1.8h-1.8zM261.2 159.5h1.8v1.8h-1.8zM260.2 184.4h1.8v1.8h-1.8zM260.6 190.4h1.8v1.8h-1.8zM260.7 197.4h1.8v1.8h-1.8zM260.8 203.7h1.8v1.8h-1.8zM260.9 209.6h1.8v1.8h-1.8zM260.7 216h1.8v1.8h-1.8zM260.6 222.3h1.8v1.8h-1.8zM260 228.4h1.8v1.8h-1.8zM260.5 235.5h1.8v1.8h-1.8zM260.5 241.6h1.8v1.8h-1.8zM260.5 248.1h1.8v1.8h-1.8zM260.8 261h1.8v1.8h-1.8zM260.2 267.1h1.8v1.8h-1.8zM260.8 273.6h1.8v1.8h-1.8zM260.8 279.5h1.8v1.8h-1.8zM260.5 286.3h1.8v1.8h-1.8zM261 291.9h1.8v1.8h-1.8zM260.6 299.3h1.8v1.8h-1.8zM260.5 305.6h1.8v1.8h-1.8zM260.6 311.6h1.8v1.8h-1.8zM260.5 317.8h1.8v1.8h-1.8zM260.2 324.8h1.8v1.8h-1.8zM260.6 330.9h1.8v1.8h-1.8zM261.2 336.5h1.8v1.8h-1.8zM260.3 343.2h1.8v1.8h-1.8zM260.7 356.3h1.8v1.8h-1.8zM260.8 362.4h1.8v1.8h-1.8zM260.5 368.7h1.8v1.8h-1.8zM260.9 375.4h1.8v1.8h-1.8zM261.5 382h1.8v1.8h-1.8zM259.7 388.1h1.8v1.8h-1.8zM261.1 394h1.8v1.8h-1.8zM260.8 413.8h1.8v1.8h-1.8zM260.2 419.5h1.8v1.8h-1.8zM260.4 426.3h1.8v1.8h-1.8zM261.2 432.7h1.8v1.8h-1.8zM267 133.9h1.8v1.8h-1.8zM267.2 139.9h1.8v1.8h-1.8zM267.3 147.1h1.8v1.8h-1.8zM267.4 152.7h1.8v1.8h-1.8zM267.3 159.1h1.8v1.8h-1.8zM267.3 165.5h1.8v1.8h-1.8zM267.2 172h1.8v1.8h-1.8zM266.9 178.4h1.8v1.8h-1.8zM267.2 184.8h1.8v1.8h-1.8zM267 190.9h1.8v1.8h-1.8zM267.3 197.6h1.8v1.8h-1.8zM267.1 203.6h1.8v1.8h-1.8zM267.3 210h1.8v1.8h-1.8zM267.1 215.9h1.8v1.8h-1.8zM267.2 223.2h1.8v1.8h-1.8zM267.2 229.3h1.8v1.8h-1.8zM267.3 236.2h1.8v1.8h-1.8zM267 241.4h1.8v1.8h-1.8zM267.3 248.7h1.8v1.8h-1.8zM267.7 261.1h1.8v1.8h-1.8zM267.3 273.6h1.8v1.8h-1.8zM266.9 280h1.8v1.8h-1.8zM267.2 286.5h1.8v1.8h-1.8zM267.6 292.5h1.8v1.8h-1.8zM266.8 305.2h1.8v1.8h-1.8zM266.6 311.8h1.8v1.8h-1.8zM267.3 317.9h1.8v1.8h-1.8zM267.5 324.8h1.8v1.8h-1.8zM267.1 331.3h1.8v1.8h-1.8zM267.4 337h1.8v1.8h-1.8zM267.3 343.6h1.8v1.8h-1.8zM267.6 349.8h1.8v1.8h-1.8zM267.3 355.8h1.8v1.8h-1.8zM267 369.4h1.8v1.8h-1.8zM267 375h1.8v1.8h-1.8zM266.9 382.1h1.8v1.8h-1.8zM266.9 388.1h1.8v1.8h-1.8zM267.3 394.6h1.8v1.8h-1.8zM266.9 400.5h1.8v1.8h-1.8zM266.9 407.1h1.8v1.8h-1.8zM266.9 413.5h1.8v1.8h-1.8zM267.2 426.2h1.8v1.8h-1.8zM267 432.6h1.8v1.8h-1.8zM273.7 134h1.8v1.8h-1.8zM273.8 139.7h1.8v1.8h-1.8zM273.8 146.2h1.8v1.8h-1.8zM273.3 153.3h1.8v1.8h-1.8zM274.1 159.1h1.8v1.8h-1.8zM273.8 165.7h1.8v1.8h-1.8zM273.9 172.6h1.8v1.8h-1.8zM273.8 177.8h1.8v1.8h-1.8zM273.9 184.9h1.8v1.8h-1.8zM273.9 190.6h1.8v1.8h-1.8zM274.4 203.5h1.8v1.8h-1.8zM274.2 210.1h1.8v1.8h-1.8zM273.5 216.6h1.8v1.8h-1.8zM273.8 223.1h1.8v1.8h-1.8zM274 229h1.8v1.8h-1.8zM273.2 235.5h1.8v1.8h-1.8zM273.2 241.5h1.8v1.8h-1.8zM273.4 248.2h1.8v1.8h-1.8zM273.7 254.7h1.8v1.8h-1.8zM273.7 260.9h1.8v1.8h-1.8zM274.4 267.4h1.8v1.8h-1.8zM274.2 273.3h1.8v1.8h-1.8zM273.7 280.6h1.8v1.8h-1.8zM274.3 292.4h1.8v1.8h-1.8zM274.2 299h1.8v1.8h-1.8zM274.2 311.1h1.8v1.8h-1.8zM273.7 317.7h1.8v1.8h-1.8zM273.6 324.4h1.8v1.8h-1.8zM273.5 330.8h1.8v1.8h-1.8zM273.9 337.2h1.8v1.8h-1.8zM274.1 343.7h1.8v1.8h-1.8zM273.8 349.8h1.8v1.8h-1.8zM273.8 355.9h1.8v1.8h-1.8zM274 362.9h1.8v1.8h-1.8zM273.6 369.1h1.8v1.8h-1.8zM273.6 374.8h1.8v1.8h-1.8zM273.9 381.8h1.8v1.8h-1.8zM273.9 394.2h1.8v1.8h-1.8zM274 401.3h1.8v1.8h-1.8zM273.5 407.1h1.8v1.8h-1.8zM274 413.3h1.8v1.8h-1.8zM274 419.4h1.8v1.8h-1.8zM273.8 426.4h1.8v1.8h-1.8zM273.8 432.7h1.8v1.8h-1.8zM280.8 134h1.8v1.8h-1.8zM279.9 140.4h1.8v1.8h-1.8zM280.1 146.1h1.8v1.8h-1.8zM280.4 153h1.8v1.8h-1.8zM279.8 159h1.8v1.8h-1.8zM280.3 165.3h1.8v1.8h-1.8zM280.4 171.6h1.8v1.8h-1.8zM280.1 177.8h1.8v1.8h-1.8zM280.8 184.5h1.8v1.8h-1.8zM280.2 191.4h1.8v1.8h-1.8zM280.6 197.3h1.8v1.8h-1.8zM280.3 209.7h1.8v1.8h-1.8zM280.3 217.1h1.8v1.8h-1.8zM280.4 223.1h1.8v1.8h-1.8zM280.4 229h1.8v1.8h-1.8zM280.2 235.3h1.8v1.8h-1.8zM280.6 241.8h1.8v1.8h-1.8zM280.3 248.1h1.8v1.8h-1.8zM280.2 254.5h1.8v1.8h-1.8zM280.4 260.6h1.8v1.8h-1.8zM280.7 266.5h1.8v1.8h-1.8zM280.3 273.9h1.8v1.8h-1.8zM280.1 280.6h1.8v1.8h-1.8zM280 286h1.8v1.8h-1.8zM280.3 292.8h1.8v1.8h-1.8zM280.4 299.2h1.8v1.8h-1.8zM280.2 305.7h1.8v1.8h-1.8zM280.3 318.2h1.8v1.8h-1.8zM280.6 324.9h1.8v1.8h-1.8zM280.1 331.5h1.8v1.8h-1.8zM280.9 336.8h1.8v1.8h-1.8zM280.3 343.1h1.8v1.8h-1.8zM280.9 350.1h1.8v1.8h-1.8zM280.3 356h1.8v1.8h-1.8zM280.4 362.6h1.8v1.8h-1.8zM280.8 375.6h1.8v1.8h-1.8zM280.2 388.1h1.8v1.8h-1.8zM280.7 394.2h1.8v1.8h-1.8zM280.6 401.3h1.8v1.8h-1.8zM280.2 407.4h1.8v1.8h-1.8zM280.5 413.6h1.8v1.8h-1.8zM280.4 419.6h1.8v1.8h-1.8zM280 426.6h1.8v1.8h-1.8zM279.9 432.5h1.8v1.8h-1.8zM287 133.5h1.8v1.8h-1.8zM286.7 140.2h1.8v1.8h-1.8zM287 146.2h1.8v1.8h-1.8zM287.2 153.1h1.8v1.8h-1.8zM287.2 159h1.8v1.8h-1.8zM286.9 165.2h1.8v1.8h-1.8zM286.7 171.9h1.8v1.8h-1.8zM287.5 178.5h1.8v1.8h-1.8zM286.9 184.4h1.8v1.8h-1.8zM287.1 191h1.8v1.8h-1.8zM287.4 197.3h1.8v1.8h-1.8zM287 203.9h1.8v1.8h-1.8zM287.2 209.9h1.8v1.8h-1.8zM287.2 216.2h1.8v1.8h-1.8zM286.8 222.8h1.8v1.8h-1.8zM287.3 228.9h1.8v1.8h-1.8zM287.5 235.6h1.8v1.8h-1.8zM287.4 241.8h1.8v1.8h-1.8zM287.1 247.7h1.8v1.8h-1.8zM286.8 255h1.8v1.8h-1.8zM286.4 260.9h1.8v1.8h-1.8zM286.6 267h1.8v1.8h-1.8zM287.2 273.9h1.8v1.8h-1.8zM287.2 279.8h1.8v1.8h-1.8zM287.1 286.6h1.8v1.8h-1.8zM287 293h1.8v1.8h-1.8zM287.2 299.1h1.8v1.8h-1.8zM286.8 305.7h1.8v1.8h-1.8zM286.7 311.3h1.8v1.8h-1.8zM287.1 318.5h1.8v1.8h-1.8zM287.4 324.6h1.8v1.8h-1.8zM286.6 330.6h1.8v1.8h-1.8zM286.9 337.2h1.8v1.8h-1.8zM287.4 343.5h1.8v1.8h-1.8zM286.9 349.8h1.8v1.8h-1.8zM286.7 356.4h1.8v1.8h-1.8zM287.4 362.5h1.8v1.8h-1.8zM287.5 368.7h1.8v1.8h-1.8zM286.9 375.6h1.8v1.8h-1.8zM287.1 381.4h1.8v1.8h-1.8zM287 387.8h1.8v1.8h-1.8zM287.3 394.4h1.8v1.8h-1.8zM287.4 400.5h1.8v1.8h-1.8zM287.3 413.3h1.8v1.8h-1.8zM286.8 419.8h1.8v1.8h-1.8zM287.3 425.8h1.8v1.8h-1.8zM286.7 432.1h1.8v1.8h-1.8zM293.7 133.5h1.8v1.8h-1.8zM293.6 140.7h1.8v1.8h-1.8zM293.8 146.2h1.8v1.8h-1.8zM293.7 152.9h1.8v1.8h-1.8zM294 159.3h1.8v1.8h-1.8zM293.8 165.7h1.8v1.8h-1.8zM293.3 172.1h1.8v1.8h-1.8zM294 178.2h1.8v1.8h-1.8zM294.1 184.9h1.8v1.8h-1.8zM293.4 191.1h1.8v1.8h-1.8zM293.7 197.4h1.8v1.8h-1.8zM293.9 210h1.8v1.8h-1.8zM293.8 216.7h1.8v1.8h-1.8zM293.9 222.4h1.8v1.8h-1.8zM293.6 229.3h1.8v1.8h-1.8zM294 235.3h1.8v1.8h-1.8zM293.4 241.8h1.8v1.8h-1.8zM293.8 248.1h1.8v1.8h-1.8zM293.3 254.4h1.8v1.8h-1.8zM293.1 260.8h1.8v1.8h-1.8zM294 267.4h1.8v1.8h-1.8zM293.5 273.7h1.8v1.8h-1.8zM293.5 280.2h1.8v1.8h-1.8zM293.7 286.2h1.8v1.8h-1.8zM293.7 292.6h1.8v1.8h-1.8zM293.4 299h1.8v1.8h-1.8zM294.1 305.7h1.8v1.8h-1.8zM293.6 312.1h1.8v1.8h-1.8zM293.6 318.4h1.8v1.8h-1.8zM294 325.2h1.8v1.8h-1.8zM293.7 330.6h1.8v1.8h-1.8zM293.9 337.6h1.8v1.8h-1.8zM293.4 343.2h1.8v1.8h-1.8zM293.1 350.2h1.8v1.8h-1.8zM293.6 355.9h1.8v1.8h-1.8zM294.4 362.9h1.8v1.8h-1.8zM293.2 368.7h1.8v1.8h-1.8zM293.8 375.3h1.8v1.8h-1.8zM293.8 381.6h1.8v1.8h-1.8zM293.7 388.3h1.8v1.8h-1.8zM294 394.2h1.8v1.8h-1.8zM293.8 400.6h1.8v1.8h-1.8zM293.9 407.1h1.8v1.8h-1.8zM293.5 414h1.8v1.8h-1.8zM293.7 420.3h1.8v1.8h-1.8zM293.5 426.2h1.8v1.8h-1.8zM294.1 432.1h1.8v1.8h-1.8zM300.5 133.6h1.8v1.8h-1.8zM299.8 139.9h1.8v1.8h-1.8zM300.1 146.4h1.8v1.8h-1.8zM300.5 152.6h1.8v1.8h-1.8zM299.8 159h1.8v1.8h-1.8zM300.2 165.7h1.8v1.8h-1.8zM300.3 178h1.8v1.8h-1.8zM299.9 184.8h1.8v1.8h-1.8zM300.6 190.8h1.8v1.8h-1.8zM300.5 203.5h1.8v1.8h-1.8zM300.7 209.7h1.8v1.8h-1.8zM300.3 216.2h1.8v1.8h-1.8zM300.5 222.7h1.8v1.8h-1.8zM299.7 229.4h1.8v1.8h-1.8zM299.6 235h1.8v1.8h-1.8zM300.5 242h1.8v1.8h-1.8zM300.6 254.4h1.8v1.8h-1.8zM300.1 261.2h1.8v1.8h-1.8zM299.3 267.1h1.8v1.8h-1.8zM300.4 273.8h1.8v1.8h-1.8zM300.3 279.7h1.8v1.8h-1.8zM299.8 285.9h1.8v1.8h-1.8zM299.8 292.3h1.8v1.8h-1.8zM300.5 298.8h1.8v1.8h-1.8zM300 311.8h1.8v1.8h-1.8zM300.1 324.5h1.8v1.8h-1.8zM299.8 330.8h1.8v1.8h-1.8zM300.1 337h1.8v1.8h-1.8zM300.2 343.4h1.8v1.8h-1.8zM300.1 349.6h1.8v1.8h-1.8zM300 356.4h1.8v1.8h-1.8zM300 362.5h1.8v1.8h-1.8zM300.1 369.3h1.8v1.8h-1.8zM300.2 375.3h1.8v1.8h-1.8zM300.5 382h1.8v1.8h-1.8zM300.2 388h1.8v1.8h-1.8zM300.5 394.3h1.8v1.8h-1.8zM300 400.8h1.8v1.8h-1.8zM300.3 406.9h1.8v1.8h-1.8zM300 413.5h1.8v1.8h-1.8zM300.3 419.4h1.8v1.8h-1.8zM299.9 426.4h1.8v1.8h-1.8zM306.5 134.1h1.8v1.8h-1.8zM307.2 140h1.8v1.8h-1.8zM306.8 146.6h1.8v1.8h-1.8zM307.1 152.8h1.8v1.8h-1.8zM306.5 159.2h1.8v1.8h-1.8zM306.5 165.2h1.8v1.8h-1.8zM306.3 171.5h1.8v1.8h-1.8zM307 178.5h1.8v1.8h-1.8zM307.1 184.4h1.8v1.8h-1.8zM306.8 196.9h1.8v1.8h-1.8zM306.9 203.4h1.8v1.8h-1.8zM306.7 216.5h1.8v1.8h-1.8zM307 228.9h1.8v1.8h-1.8zM307 235.4h1.8v1.8h-1.8zM306.8 242.3h1.8v1.8h-1.8zM306.2 248.1h1.8v1.8h-1.8zM306.9 254.4h1.8v1.8h-1.8zM306.8 260.6h1.8v1.8h-1.8zM306.7 273.7h1.8v1.8h-1.8zM306.8 280.3h1.8v1.8h-1.8zM307.5 286.1h1.8v1.8h-1.8zM306.6 298.9h1.8v1.8h-1.8zM306.8 306.1h1.8v1.8h-1.8zM306.3 311.7h1.8v1.8h-1.8zM306.7 318.1h1.8v1.8h-1.8zM306.3 324.6h1.8v1.8h-1.8zM306.7 330.6h1.8v1.8h-1.8zM306.9 337.3h1.8v1.8h-1.8zM306.2 343.7h1.8v1.8h-1.8zM306.7 350.1h1.8v1.8h-1.8zM306.8 356.9h1.8v1.8h-1.8zM306.8 362.2h1.8v1.8h-1.8zM307.1 368.8h1.8v1.8h-1.8zM307.3 381.6h1.8v1.8h-1.8zM307.1 388h1.8v1.8h-1.8zM306.8 393.9h1.8v1.8h-1.8zM306.7 400.1h1.8v1.8h-1.8zM306.6 407.2h1.8v1.8h-1.8zM306.8 414h1.8v1.8h-1.8zM306.6 419.1h1.8v1.8h-1.8zM306.9 426h1.8v1.8h-1.8zM306.9 432.8h1.8v1.8h-1.8zM314 133.5h1.8v1.8h-1.8zM312.8 140.2h1.8v1.8h-1.8zM313.3 146.6h1.8v1.8h-1.8zM312.9 153.1h1.8v1.8h-1.8zM314.1 159.1h1.8v1.8h-1.8zM313.2 165.3h1.8v1.8h-1.8zM313.2 172.3h1.8v1.8h-1.8zM313.5 177.8h1.8v1.8h-1.8zM313.3 185.1h1.8v1.8h-1.8zM312.9 190.7h1.8v1.8h-1.8zM312.7 196.9h1.8v1.8h-1.8zM313.2 203.5h1.8v1.8h-1.8zM313.5 209.4h1.8v1.8h-1.8zM313.6 216.7h1.8v1.8h-1.8zM313.6 222.8h1.8v1.8h-1.8zM312.9 242.2h1.8v1.8h-1.8zM313.1 247.8h1.8v1.8h-1.8zM313.1 254.4h1.8v1.8h-1.8zM313.6 260.7h1.8v1.8h-1.8zM313.3 267.7h1.8v1.8h-1.8zM313.6 280.1h1.8v1.8h-1.8zM313.4 286.6h1.8v1.8h-1.8zM313.5 292.9h1.8v1.8h-1.8zM313.7 298.5h1.8v1.8h-1.8zM313 305.9h1.8v1.8h-1.8zM313.2 311.6h1.8v1.8h-1.8zM313.5 324h1.8v1.8h-1.8zM313.8 330.7h1.8v1.8h-1.8zM313.9 336.7h1.8v1.8h-1.8zM313.8 343.3h1.8v1.8h-1.8zM313.5 349.9h1.8v1.8h-1.8zM313.6 356h1.8v1.8h-1.8zM313.2 362.3h1.8v1.8h-1.8zM313.1 369.2h1.8v1.8h-1.8zM313.1 375.6h1.8v1.8h-1.8zM313.6 381.9h1.8v1.8h-1.8zM313 387.9h1.8v1.8h-1.8zM313 394.1h1.8v1.8h-1.8zM313 400.5h1.8v1.8h-1.8zM313 407.1h1.8v1.8h-1.8zM313.5 413.8h1.8v1.8h-1.8zM313.6 419.8h1.8v1.8h-1.8zM313.5 426.6h1.8v1.8h-1.8zM313.4 432.6h1.8v1.8h-1.8zM319.9 147h1.8v1.8h-1.8zM319.9 152.5h1.8v1.8h-1.8zM319.4 159.4h1.8v1.8h-1.8zM319.8 165.5h1.8v1.8h-1.8zM320.4 171.7h1.8v1.8h-1.8zM320.4 178.4h1.8v1.8h-1.8zM319.7 184.8h1.8v1.8h-1.8zM319.9 191.2h1.8v1.8h-1.8zM320.6 197.7h1.8v1.8h-1.8zM320.4 203.9h1.8v1.8h-1.8zM320.1 210.1h1.8v1.8h-1.8zM320 216.9h1.8v1.8h-1.8zM320.1 222h1.8v1.8h-1.8zM320.1 229.1h1.8v1.8h-1.8zM319.8 235.7h1.8v1.8h-1.8zM320.4 241h1.8v1.8h-1.8zM319.9 248.4h1.8v1.8h-1.8zM320.7 254.5h1.8v1.8h-1.8zM319.8 267.4h1.8v1.8h-1.8zM319.9 273.3h1.8v1.8h-1.8zM319.8 280.5h1.8v1.8h-1.8zM320.3 286.6h1.8v1.8h-1.8zM319.9 292.8h1.8v1.8h-1.8zM320.1 311.5h1.8v1.8h-1.8zM319.9 318.2h1.8v1.8h-1.8zM320.2 324.9h1.8v1.8h-1.8zM320 331.1h1.8v1.8h-1.8zM319.9 350.1h1.8v1.8h-1.8zM319.1 356h1.8v1.8h-1.8zM320.1 362.9h1.8v1.8h-1.8zM320.5 368.8h1.8v1.8h-1.8zM319.4 375.5h1.8v1.8h-1.8zM320.1 388.1h1.8v1.8h-1.8zM319.9 394.3h1.8v1.8h-1.8zM320 407.2h1.8v1.8h-1.8zM319.8 413.8h1.8v1.8h-1.8zM319.4 419.6h1.8v1.8h-1.8zM319.8 426.4h1.8v1.8h-1.8zM326.4 134.2h1.8v1.8h-1.8zM325.9 140.5h1.8v1.8h-1.8zM326.4 146.1h1.8v1.8h-1.8zM326.6 152.1h1.8v1.8h-1.8zM326.5 159.6h1.8v1.8h-1.8zM326.6 165.3h1.8v1.8h-1.8zM326.8 171.7h1.8v1.8h-1.8zM326.8 178.4h1.8v1.8h-1.8zM326.7 190.7h1.8v1.8h-1.8zM326.3 197.5h1.8v1.8h-1.8zM326.7 203.2h1.8v1.8h-1.8zM326.5 210.3h1.8v1.8h-1.8zM326.5 216.3h1.8v1.8h-1.8zM326.7 222.6h1.8v1.8h-1.8zM326.4 228.9h1.8v1.8h-1.8zM326.4 235.7h1.8v1.8h-1.8zM326.6 241.5h1.8v1.8h-1.8zM326.5 248.2h1.8v1.8h-1.8zM327.1 254.6h1.8v1.8h-1.8zM326.3 261.4h1.8v1.8h-1.8zM326.4 267.5h1.8v1.8h-1.8zM327.3 273.8h1.8v1.8h-1.8zM326.9 280.3h1.8v1.8h-1.8zM327.1 292.9h1.8v1.8h-1.8zM326.9 305.5h1.8v1.8h-1.8zM326.4 311.6h1.8v1.8h-1.8zM326.4 325h1.8v1.8h-1.8zM326.5 331.3h1.8v1.8h-1.8zM326.5 337.2h1.8v1.8h-1.8zM326.5 343.8h1.8v1.8h-1.8zM326.5 349.5h1.8v1.8h-1.8zM326.4 356.5h1.8v1.8h-1.8zM327 362.4h1.8v1.8h-1.8zM326.8 375h1.8v1.8h-1.8zM326.2 382.1h1.8v1.8h-1.8zM326 394.9h1.8v1.8h-1.8zM326.3 400.6h1.8v1.8h-1.8zM326.7 406.9h1.8v1.8h-1.8zM327.2 413.2h1.8v1.8h-1.8zM326.8 420.1h1.8v1.8h-1.8zM326.3 425.8h1.8v1.8h-1.8zM326.2 432.7h1.8v1.8h-1.8zM333.8 146.9h1.8v1.8h-1.8zM333.5 152.7h1.8v1.8h-1.8zM333.3 159.1h1.8v1.8h-1.8zM332.8 165.3h1.8v1.8h-1.8zM333.7 172.2h1.8v1.8h-1.8zM333.5 178.5h1.8v1.8h-1.8zM333.1 184.2h1.8v1.8h-1.8zM333.5 190.5h1.8v1.8h-1.8zM333.1 197.1h1.8v1.8h-1.8zM332.9 203.7h1.8v1.8h-1.8zM333.6 210.1h1.8v1.8h-1.8zM333.4 216.4h1.8v1.8h-1.8zM333.2 223.1h1.8v1.8h-1.8zM333.3 241.8h1.8v1.8h-1.8zM333.2 248.7h1.8v1.8h-1.8zM333.5 254.5h1.8v1.8h-1.8zM332.9 261h1.8v1.8h-1.8zM333.3 274h1.8v1.8h-1.8zM333.2 279.4h1.8v1.8h-1.8zM333 287.3h1.8v1.8h-1.8zM332.9 292.6h1.8v1.8h-1.8zM333.4 298.9h1.8v1.8h-1.8zM333.5 305.6h1.8v1.8h-1.8zM333.8 311.6h1.8v1.8h-1.8zM332.9 318.2h1.8v1.8h-1.8zM333.5 324.8h1.8v1.8h-1.8zM332.9 330.9h1.8v1.8h-1.8zM333.4 337.3h1.8v1.8h-1.8zM332.9 350.2h1.8v1.8h-1.8zM333.6 356h1.8v1.8h-1.8zM333.2 363.2h1.8v1.8h-1.8zM333.6 375h1.8v1.8h-1.8zM332.9 381.8h1.8v1.8h-1.8zM333.1 388.3h1.8v1.8h-1.8zM333.7 394.9h1.8v1.8h-1.8zM333.3 400.5h1.8v1.8h-1.8zM333.4 406.4h1.8v1.8h-1.8zM333.1 419.8h1.8v1.8h-1.8zM333.3 426.4h1.8v1.8h-1.8zM332.9 432.7h1.8v1.8h-1.8zM340 139.9h1.8v1.8h-1.8zM340.2 146.6h1.8v1.8h-1.8zM339.7 153.3h1.8v1.8h-1.8zM339.8 159.2h1.8v1.8h-1.8zM339.7 165.3h1.8v1.8h-1.8zM340.1 171.8h1.8v1.8h-1.8zM340.3 178.3h1.8v1.8h-1.8zM339.4 184h1.8v1.8h-1.8zM340.4 190.9h1.8v1.8h-1.8zM340.1 197.4h1.8v1.8h-1.8zM340 203.1h1.8v1.8h-1.8zM339.7 210.5h1.8v1.8h-1.8zM340.3 216.9h1.8v1.8h-1.8zM339.5 222.5h1.8v1.8h-1.8zM340.1 229.2h1.8v1.8h-1.8zM339.6 242.2h1.8v1.8h-1.8zM339.1 248.3h1.8v1.8h-1.8zM339.4 254h1.8v1.8h-1.8zM339.9 260.5h1.8v1.8h-1.8zM339.7 267h1.8v1.8h-1.8zM339.6 273.8h1.8v1.8h-1.8zM339.7 279.8h1.8v1.8h-1.8zM340 286.6h1.8v1.8h-1.8zM339.7 292.9h1.8v1.8h-1.8zM339.7 299.5h1.8v1.8h-1.8zM339.4 305.6h1.8v1.8h-1.8zM339.7 311.8h1.8v1.8h-1.8zM339.8 317.8h1.8v1.8h-1.8zM340.4 324.2h1.8v1.8h-1.8zM339.7 337.3h1.8v1.8h-1.8zM339.3 343.6h1.8v1.8h-1.8zM339.8 350.5h1.8v1.8h-1.8zM339 356.3h1.8v1.8h-1.8zM339.8 363.6h1.8v1.8h-1.8zM339.7 368.9h1.8v1.8h-1.8zM339.9 375h1.8v1.8h-1.8zM339.9 388.7h1.8v1.8h-1.8zM339.6 394h1.8v1.8h-1.8zM340 407.4h1.8v1.8h-1.8zM339.3 413.3h1.8v1.8h-1.8zM339.9 419.9h1.8v1.8h-1.8zM340.1 425.8h1.8v1.8h-1.8zM340 432.3h1.8v1.8h-1.8zM346.9 133.7h1.8v1.8h-1.8zM346.8 139.8h1.8v1.8h-1.8zM346.5 146.8h1.8v1.8h-1.8zM346.4 152.8h1.8v1.8h-1.8zM346 165.3h1.8v1.8h-1.8zM346.7 171.8h1.8v1.8h-1.8zM346.7 178.4h1.8v1.8h-1.8zM347.1 184.8h1.8v1.8h-1.8zM346.1 190.8h1.8v1.8h-1.8zM346 197.2h1.8v1.8h-1.8zM345.8 203.6h1.8v1.8h-1.8zM345.9 210.1h1.8v1.8h-1.8zM346.3 216.6h1.8v1.8h-1.8zM346.4 222.6h1.8v1.8h-1.8zM346.3 229.3h1.8v1.8h-1.8zM346.7 235.6h1.8v1.8h-1.8zM346.4 248.1h1.8v1.8h-1.8zM346.1 253.9h1.8v1.8h-1.8zM346.5 260.9h1.8v1.8h-1.8zM346.5 267.1h1.8v1.8h-1.8zM346.4 273h1.8v1.8h-1.8zM346.6 279.9h1.8v1.8h-1.8zM345.9 286.4h1.8v1.8h-1.8zM346.5 292.4h1.8v1.8h-1.8zM346.5 298.8h1.8v1.8h-1.8zM346.5 305.5h1.8v1.8h-1.8zM346.6 311.7h1.8v1.8h-1.8zM346 317.9h1.8v1.8h-1.8zM346.8 324h1.8v1.8h-1.8zM346.1 330.7h1.8v1.8h-1.8zM346.5 337.2h1.8v1.8h-1.8zM346.6 349.8h1.8v1.8h-1.8zM346.6 356.4h1.8v1.8h-1.8zM346.5 362.4h1.8v1.8h-1.8zM346.4 369.2h1.8v1.8h-1.8zM346.7 375.6h1.8v1.8h-1.8zM346.7 382.2h1.8v1.8h-1.8zM346.9 388.3h1.8v1.8h-1.8zM346.2 394.8h1.8v1.8h-1.8zM346.6 407.4h1.8v1.8h-1.8zM347 420.3h1.8v1.8h-1.8zM346.3 426.5h1.8v1.8h-1.8zM346.3 432.5h1.8v1.8h-1.8zM353.2 133.7h1.8v1.8h-1.8zM353.2 139.9h1.8v1.8h-1.8zM352.4 146.9h1.8v1.8h-1.8zM353.5 152.6h1.8v1.8h-1.8zM353.3 159.8h1.8v1.8h-1.8zM353.2 165.4h1.8v1.8h-1.8zM353.7 171.7h1.8v1.8h-1.8zM353.1 178.1h1.8v1.8h-1.8zM352.8 184.7h1.8v1.8h-1.8zM353.6 191.1h1.8v1.8h-1.8zM352.4 197.2h1.8v1.8h-1.8zM353.4 203.5h1.8v1.8h-1.8zM353.4 210.6h1.8v1.8h-1.8zM353 216.3h1.8v1.8h-1.8zM353.2 222.4h1.8v1.8h-1.8zM353.3 228.8h1.8v1.8h-1.8zM352.9 235.1h1.8v1.8h-1.8zM353.1 241.9h1.8v1.8h-1.8zM353.2 248.2h1.8v1.8h-1.8zM353 254.6h1.8v1.8h-1.8zM353 260.8h1.8v1.8h-1.8zM353.3 267h1.8v1.8h-1.8zM352.5 273.5h1.8v1.8h-1.8zM352.9 280h1.8v1.8h-1.8zM353.7 286.5h1.8v1.8h-1.8zM353 292.5h1.8v1.8h-1.8zM353.1 299h1.8v1.8h-1.8zM353.4 324.9h1.8v1.8h-1.8zM353.8 330.5h1.8v1.8h-1.8zM353.2 337.5h1.8v1.8h-1.8zM353 350h1.8v1.8h-1.8zM353.1 356.2h1.8v1.8h-1.8zM353.1 362.6h1.8v1.8h-1.8zM353 375.5h1.8v1.8h-1.8zM352.7 382h1.8v1.8h-1.8zM353.1 387.8h1.8v1.8h-1.8zM353.1 394.8h1.8v1.8h-1.8zM352.6 400.7h1.8v1.8h-1.8zM353 407.6h1.8v1.8h-1.8zM352.6 413.8h1.8v1.8h-1.8zM352.7 420h1.8v1.8h-1.8zM353.2 425.8h1.8v1.8h-1.8zM352.8 432.6h1.8v1.8h-1.8zM359.6 133.5h1.8v1.8h-1.8zM359.5 140.2h1.8v1.8h-1.8zM360.1 152.9h1.8v1.8h-1.8zM359.5 158.9h1.8v1.8h-1.8zM359.2 165.3h1.8v1.8h-1.8zM360 171.5h1.8v1.8h-1.8zM359.7 178.6h1.8v1.8h-1.8zM359.6 190.8h1.8v1.8h-1.8zM359.8 197h1.8v1.8h-1.8zM359.9 203.7h1.8v1.8h-1.8zM360.3 216.2h1.8v1.8h-1.8zM359.5 222.9h1.8v1.8h-1.8zM359.9 228.6h1.8v1.8h-1.8zM359.7 235.6h1.8v1.8h-1.8zM360 242.2h1.8v1.8h-1.8zM359.2 248.4h1.8v1.8h-1.8zM359.9 254.9h1.8v1.8h-1.8zM359.8 260.4h1.8v1.8h-1.8zM359.8 267h1.8v1.8h-1.8zM359.7 280h1.8v1.8h-1.8zM359.6 286.4h1.8v1.8h-1.8zM359.8 293h1.8v1.8h-1.8zM359.6 298.7h1.8v1.8h-1.8zM360.2 305.5h1.8v1.8h-1.8zM359.3 311.9h1.8v1.8h-1.8zM359.4 318.2h1.8v1.8h-1.8zM360 324.9h1.8v1.8h-1.8zM359.9 330.7h1.8v1.8h-1.8zM359.7 337.3h1.8v1.8h-1.8zM359.4 344.1h1.8v1.8h-1.8zM359.8 349.4h1.8v1.8h-1.8zM359.5 363.3h1.8v1.8h-1.8zM359.3 368.8h1.8v1.8h-1.8zM359.7 375.4h1.8v1.8h-1.8zM359.7 382h1.8v1.8h-1.8zM359.4 388.2h1.8v1.8h-1.8zM359.8 394.3h1.8v1.8h-1.8zM359.6 401.2h1.8v1.8h-1.8zM360.5 406.9h1.8v1.8h-1.8zM359.7 413.2h1.8v1.8h-1.8zM359.7 419.8h1.8v1.8h-1.8zM359.7 432.6h1.8v1.8h-1.8zM366.4 133.7h1.8v1.8h-1.8zM366.2 140.1h1.8v1.8h-1.8zM365.8 145.5h1.8v1.8h-1.8zM366 152.4h1.8v1.8h-1.8zM366.1 158.8h1.8v1.8h-1.8zM366.4 165.7h1.8v1.8h-1.8zM366.3 171.8h1.8v1.8h-1.8zM366 178.8h1.8v1.8h-1.8zM366.4 184.6h1.8v1.8h-1.8zM366.1 190.6h1.8v1.8h-1.8zM366.4 197h1.8v1.8h-1.8zM366 209.7h1.8v1.8h-1.8zM366.1 216.4h1.8v1.8h-1.8zM366 222.5h1.8v1.8h-1.8zM366.3 235.3h1.8v1.8h-1.8zM366.7 241.3h1.8v1.8h-1.8zM366.7 247.7h1.8v1.8h-1.8zM366.5 254.6h1.8v1.8h-1.8zM366.3 261.1h1.8v1.8h-1.8zM366.1 267h1.8v1.8h-1.8zM366.4 286.1h1.8v1.8h-1.8zM366.3 292.2h1.8v1.8h-1.8zM366.1 298.9h1.8v1.8h-1.8zM365.8 312h1.8v1.8h-1.8zM366.4 318h1.8v1.8h-1.8zM366.3 324.8h1.8v1.8h-1.8zM366.4 330.9h1.8v1.8h-1.8zM366.2 343.2h1.8v1.8h-1.8zM366.4 350.2h1.8v1.8h-1.8zM366.4 356.2h1.8v1.8h-1.8zM365.8 369h1.8v1.8h-1.8zM366.3 375.3h1.8v1.8h-1.8zM366.2 382h1.8v1.8h-1.8zM366.1 394.4h1.8v1.8h-1.8zM366.6 400.7h1.8v1.8h-1.8zM365.8 407h1.8v1.8h-1.8zM366.3 413.2h1.8v1.8h-1.8zM366.7 420.1h1.8v1.8h-1.8zM366.2 426.1h1.8v1.8h-1.8zM365.6 432.8h1.8v1.8h-1.8zM372.4 133.7h1.8v1.8h-1.8zM373.1 139.9h1.8v1.8h-1.8zM372.5 146.6h1.8v1.8h-1.8zM372.9 152.9h1.8v1.8h-1.8zM372.3 159h1.8v1.8h-1.8zM372.8 165.4h1.8v1.8h-1.8zM373 171.6h1.8v1.8h-1.8zM372.6 177.8h1.8v1.8h-1.8zM372.5 197.3h1.8v1.8h-1.8zM372.7 203.9h1.8v1.8h-1.8zM373.3 210.2h1.8v1.8h-1.8zM372.9 216h1.8v1.8h-1.8zM373 222.7h1.8v1.8h-1.8zM373.2 229h1.8v1.8h-1.8zM372.7 248h1.8v1.8h-1.8zM372.8 254.7h1.8v1.8h-1.8zM372.9 267h1.8v1.8h-1.8zM373.2 273.3h1.8v1.8h-1.8zM373 286.3h1.8v1.8h-1.8zM373.1 292.4h1.8v1.8h-1.8zM373.1 299h1.8v1.8h-1.8zM373.4 305.4h1.8v1.8h-1.8zM372.7 311.6h1.8v1.8h-1.8zM372.6 324.6h1.8v1.8h-1.8zM372.7 330.5h1.8v1.8h-1.8zM373.1 337.6h1.8v1.8h-1.8zM372.2 343.5h1.8v1.8h-1.8zM372.8 349.9h1.8v1.8h-1.8zM372.9 356.1h1.8v1.8h-1.8zM372.7 369.2h1.8v1.8h-1.8zM372.7 375.7h1.8v1.8h-1.8zM372.7 381.2h1.8v1.8h-1.8zM372.7 388h1.8v1.8h-1.8zM372.9 394.4h1.8v1.8h-1.8zM372.7 400.6h1.8v1.8h-1.8zM373 407.5h1.8v1.8h-1.8zM372.6 413.8h1.8v1.8h-1.8zM372.8 420h1.8v1.8h-1.8zM372.6 426.2h1.8v1.8h-1.8zM372.8 432.2h1.8v1.8h-1.8zM379.9 133.9h1.8v1.8h-1.8zM379.4 140.2h1.8v1.8h-1.8zM380 146.4h1.8v1.8h-1.8zM379.1 152.4h1.8v1.8h-1.8zM379.4 159h1.8v1.8h-1.8zM379.7 165.6h1.8v1.8h-1.8zM379.5 172h1.8v1.8h-1.8zM379.7 178.7h1.8v1.8h-1.8zM379.3 183.7h1.8v1.8h-1.8zM379.6 191.3h1.8v1.8h-1.8zM378.9 196.9h1.8v1.8h-1.8zM379.1 203.5h1.8v1.8h-1.8zM379.4 210.1h1.8v1.8h-1.8zM379 216.6h1.8v1.8h-1.8zM379.6 222.6h1.8v1.8h-1.8zM379.6 229.5h1.8v1.8h-1.8zM379.5 235.2h1.8v1.8h-1.8zM379.5 242.1h1.8v1.8h-1.8zM379 248.2h1.8v1.8h-1.8zM379.6 254.4h1.8v1.8h-1.8zM379 260.5h1.8v1.8h-1.8zM380 266.8h1.8v1.8h-1.8zM379.5 273.3h1.8v1.8h-1.8zM379.3 280.1h1.8v1.8h-1.8zM379.7 286.4h1.8v1.8h-1.8zM378.8 292.5h1.8v1.8h-1.8zM379.4 300.2h1.8v1.8h-1.8zM379.8 305.3h1.8v1.8h-1.8zM379.6 317.9h1.8v1.8h-1.8zM379.4 324.7h1.8v1.8h-1.8zM379 330.5h1.8v1.8h-1.8zM379.2 337h1.8v1.8h-1.8zM379.2 343.6h1.8v1.8h-1.8zM379 362.3h1.8v1.8h-1.8zM379.3 369.2h1.8v1.8h-1.8zM379.6 375.2h1.8v1.8h-1.8zM379.2 382.2h1.8v1.8h-1.8zM379.8 387.4h1.8v1.8h-1.8zM379.1 394.5h1.8v1.8h-1.8zM379.3 401.2h1.8v1.8h-1.8zM380.1 407.1h1.8v1.8h-1.8zM379.2 413.8h1.8v1.8h-1.8zM379.6 419.7h1.8v1.8h-1.8zM379.3 426.1h1.8v1.8h-1.8zM379 432.6h1.8v1.8h-1.8zM386 133.4h1.8v1.8h-1.8zM386.4 139.6h1.8v1.8h-1.8zM386 146.2h1.8v1.8h-1.8zM385.9 152.6h1.8v1.8h-1.8zM386.6 158.8h1.8v1.8h-1.8zM385.8 165.6h1.8v1.8h-1.8zM386.1 171.4h1.8v1.8h-1.8zM386.1 178.3h1.8v1.8h-1.8zM385.9 184.2h1.8v1.8h-1.8zM385.7 191.2h1.8v1.8h-1.8zM386 197.5h1.8v1.8h-1.8zM386.2 203.2h1.8v1.8h-1.8zM386.2 210.1h1.8v1.8h-1.8zM386.4 216.1h1.8v1.8h-1.8zM385.6 222.8h1.8v1.8h-1.8zM386.1 228.8h1.8v1.8h-1.8zM385.8 235.6h1.8v1.8h-1.8zM385.6 242.5h1.8v1.8h-1.8zM385.7 248h1.8v1.8h-1.8zM386.5 254.6h1.8v1.8h-1.8zM385.8 260.6h1.8v1.8h-1.8zM386 267.3h1.8v1.8h-1.8zM386 273.3h1.8v1.8h-1.8zM386 280.4h1.8v1.8h-1.8zM385.9 286.4h1.8v1.8h-1.8zM386.3 293h1.8v1.8h-1.8zM385.9 299.3h1.8v1.8h-1.8zM386.4 304.9h1.8v1.8h-1.8zM386.2 311.5h1.8v1.8h-1.8zM386.5 318h1.8v1.8h-1.8zM385.9 324.4h1.8v1.8h-1.8zM386.1 331.3h1.8v1.8h-1.8zM385.9 338h1.8v1.8h-1.8zM386.2 343.4h1.8v1.8h-1.8zM386.1 356.7h1.8v1.8h-1.8zM385.9 369.7h1.8v1.8h-1.8zM386.2 375.4h1.8v1.8h-1.8zM385.6 381.6h1.8v1.8h-1.8zM386.4 387.6h1.8v1.8h-1.8zM386.3 394.6h1.8v1.8h-1.8zM386.3 401.1h1.8v1.8h-1.8zM385.7 407h1.8v1.8h-1.8zM385.8 413.4h1.8v1.8h-1.8zM386.2 419.9h1.8v1.8h-1.8zM386.1 426.2h1.8v1.8h-1.8zM392.5 133.2h1.8v1.8h-1.8zM392.9 140h1.8v1.8h-1.8zM392.5 146.7h1.8v1.8h-1.8zM392.7 152.6h1.8v1.8h-1.8zM392.8 159h1.8v1.8h-1.8zM392.7 171.6h1.8v1.8h-1.8zM392.4 178.4h1.8v1.8h-1.8zM391.9 185h1.8v1.8h-1.8zM393 191.3h1.8v1.8h-1.8zM392.4 197.1h1.8v1.8h-1.8zM392.7 203.9h1.8v1.8h-1.8zM393.3 209.7h1.8v1.8h-1.8zM392.8 216.1h1.8v1.8h-1.8zM392.9 222.6h1.8v1.8h-1.8zM392.7 235.3h1.8v1.8h-1.8zM392.3 242.2h1.8v1.8h-1.8zM392.7 247.9h1.8v1.8h-1.8zM392.6 260.3h1.8v1.8h-1.8zM391.9 267.1h1.8v1.8h-1.8zM393 280.4h1.8v1.8h-1.8zM392.8 286.6h1.8v1.8h-1.8zM392.6 299.3h1.8v1.8h-1.8zM392.6 305.5h1.8v1.8h-1.8zM393.1 317.8h1.8v1.8h-1.8zM392.8 330.2h1.8v1.8h-1.8zM392.2 337.1h1.8v1.8h-1.8zM392.7 343.6h1.8v1.8h-1.8zM392.6 350.1h1.8v1.8h-1.8zM392.1 356.6h1.8v1.8h-1.8zM392.7 362.9h1.8v1.8h-1.8zM392.7 369h1.8v1.8h-1.8zM392.6 375.1h1.8v1.8h-1.8zM393.1 381.9h1.8v1.8h-1.8zM392.7 387.6h1.8v1.8h-1.8zM392.5 394.5h1.8v1.8h-1.8zM392.3 401.1h1.8v1.8h-1.8zM392.3 406.9h1.8v1.8h-1.8zM392.5 413.4h1.8v1.8h-1.8zM392.8 419.4h1.8v1.8h-1.8zM392.6 426.1h1.8v1.8h-1.8zM392.5 432.6h1.8v1.8h-1.8zM399.2 139.7h1.8v1.8h-1.8zM399.6 145.9h1.8v1.8h-1.8zM399.3 152.3h1.8v1.8h-1.8zM399.2 159h1.8v1.8h-1.8zM399.3 165.4h1.8v1.8h-1.8zM399.2 171.6h1.8v1.8h-1.8zM399.4 177.9h1.8v1.8h-1.8zM399.4 184.4h1.8v1.8h-1.8zM398.9 190.9h1.8v1.8h-1.8zM399.2 197.4h1.8v1.8h-1.8zM399.5 203.3h1.8v1.8h-1.8zM398.6 210.1h1.8v1.8h-1.8zM399 216.2h1.8v1.8h-1.8zM399.4 222.5h1.8v1.8h-1.8zM399.3 229h1.8v1.8h-1.8zM398.4 235.6h1.8v1.8h-1.8zM399.3 242.1h1.8v1.8h-1.8zM399.2 248.3h1.8v1.8h-1.8zM399.6 254.7h1.8v1.8h-1.8zM398.9 267.4h1.8v1.8h-1.8zM398.8 274h1.8v1.8h-1.8zM399.4 280h1.8v1.8h-1.8zM399.4 292.7h1.8v1.8h-1.8zM399 299.2h1.8v1.8h-1.8zM399.1 305.5h1.8v1.8h-1.8zM399.2 311.3h1.8v1.8h-1.8zM399.2 318.4h1.8v1.8h-1.8zM399.3 324.7h1.8v1.8h-1.8zM399.6 330.5h1.8v1.8h-1.8zM399.2 343.7h1.8v1.8h-1.8zM399.3 349.4h1.8v1.8h-1.8zM398.8 362.5h1.8v1.8h-1.8zM399.8 368.9h1.8v1.8h-1.8zM399.3 374.9h1.8v1.8h-1.8zM399.2 381.2h1.8v1.8h-1.8zM399.6 387.9h1.8v1.8h-1.8zM399 394.5h1.8v1.8h-1.8zM399.2 400.8h1.8v1.8h-1.8zM399.2 407h1.8v1.8h-1.8zM398.6 413.5h1.8v1.8h-1.8zM399.4 420h1.8v1.8h-1.8zM399.5 426.4h1.8v1.8h-1.8zM399.2 432.7h1.8v1.8h-1.8zM405.6 133.5h1.8v1.8h-1.8zM405.1 140h1.8v1.8h-1.8zM406 146.6h1.8v1.8h-1.8zM406 159.3h1.8v1.8h-1.8zM405.8 165.3h1.8v1.8h-1.8zM406.3 171.9h1.8v1.8h-1.8zM405.9 178.3h1.8v1.8h-1.8zM405.7 184.3h1.8v1.8h-1.8zM406.1 190.8h1.8v1.8h-1.8zM405.5 197.6h1.8v1.8h-1.8zM405.8 203.8h1.8v1.8h-1.8zM405.8 210.1h1.8v1.8h-1.8zM405.7 223.6h1.8v1.8h-1.8zM406.3 228.9h1.8v1.8h-1.8zM405.6 241.9h1.8v1.8h-1.8zM406.1 247.6h1.8v1.8h-1.8zM405.9 254.7h1.8v1.8h-1.8zM406.1 261.1h1.8v1.8h-1.8zM405.6 267.1h1.8v1.8h-1.8zM405.9 274h1.8v1.8h-1.8zM405.7 280.5h1.8v1.8h-1.8zM406 292.6h1.8v1.8h-1.8zM405.7 299.2h1.8v1.8h-1.8zM405.8 311.6h1.8v1.8h-1.8zM405.6 317.9h1.8v1.8h-1.8zM406 324.1h1.8v1.8h-1.8zM405.9 330.7h1.8v1.8h-1.8zM405.6 337.7h1.8v1.8h-1.8zM406.1 343.6h1.8v1.8h-1.8zM406.1 349.8h1.8v1.8h-1.8zM405.6 356.3h1.8v1.8h-1.8zM405.9 362.9h1.8v1.8h-1.8zM406.1 369.1h1.8v1.8h-1.8zM405.6 375.3h1.8v1.8h-1.8zM406.4 382h1.8v1.8h-1.8zM405.7 388.4h1.8v1.8h-1.8zM405.9 394.6h1.8v1.8h-1.8zM405.8 401h1.8v1.8h-1.8zM405.8 407h1.8v1.8h-1.8zM405.8 413.3h1.8v1.8h-1.8zM405.9 420h1.8v1.8h-1.8zM405.7 426.2h1.8v1.8h-1.8zM406.1 433.1h1.8v1.8h-1.8zM412.3 184.7h1.8v1.8h-1.8zM412.5 191h1.8v1.8h-1.8zM411.8 197.1h1.8v1.8h-1.8zM412.1 210.2h1.8v1.8h-1.8zM412.5 216h1.8v1.8h-1.8zM412.8 222.7h1.8v1.8h-1.8zM412.5 235.4h1.8v1.8h-1.8zM412.9 241.8h1.8v1.8h-1.8zM412.7 247.9h1.8v1.8h-1.8zM412.7 260.9h1.8v1.8h-1.8zM412.7 267.3h1.8v1.8h-1.8zM412.5 273.4h1.8v1.8h-1.8zM412.1 280.4h1.8v1.8h-1.8zM413 293.1h1.8v1.8h-1.8zM412.4 298.6h1.8v1.8h-1.8zM412.9 305.3h1.8v1.8h-1.8zM412.3 336.8h1.8v1.8h-1.8zM412.3 343.5h1.8v1.8h-1.8zM412.7 356.6h1.8v1.8h-1.8zM412.3 362.1h1.8v1.8h-1.8zM412.3 374.9h1.8v1.8h-1.8zM413.1 381.7h1.8v1.8h-1.8zM418.9 190.7h1.8v1.8h-1.8zM418.9 197.4h1.8v1.8h-1.8zM419 203.3h1.8v1.8h-1.8zM419 209.8h1.8v1.8h-1.8zM418.8 216.5h1.8v1.8h-1.8zM419.3 222.9h1.8v1.8h-1.8zM419.1 235.8h1.8v1.8h-1.8zM419.2 241.5h1.8v1.8h-1.8zM419.6 247.8h1.8v1.8h-1.8zM419.3 254.7h1.8v1.8h-1.8zM419.2 261.3h1.8v1.8h-1.8zM418.3 267.1h1.8v1.8h-1.8zM418.7 273.3h1.8v1.8h-1.8zM418.3 280.3h1.8v1.8h-1.8zM418.8 286.3h1.8v1.8h-1.8zM419 292.5h1.8v1.8h-1.8zM419.4 305.5h1.8v1.8h-1.8zM418.7 317.6h1.8v1.8h-1.8zM418.6 330.3h1.8v1.8h-1.8zM419.5 337.3h1.8v1.8h-1.8zM419.2 344h1.8v1.8h-1.8zM419.3 349.7h1.8v1.8h-1.8zM419.3 355.9h1.8v1.8h-1.8zM418.9 361.9h1.8v1.8h-1.8zM419.2 368.5h1.8v1.8h-1.8zM419.3 375.5h1.8v1.8h-1.8zM418.9 381.6h1.8v1.8h-1.8zM425.6 184.8h1.8v1.8h-1.8zM425.3 191.1h1.8v1.8h-1.8zM425 197.6h1.8v1.8h-1.8zM425 203.4h1.8v1.8h-1.8zM425.5 210.4h1.8v1.8h-1.8zM425.4 216.2h1.8v1.8h-1.8zM425.6 223h1.8v1.8h-1.8zM425.6 229.2h1.8v1.8h-1.8zM425.8 236h1.8v1.8h-1.8zM425.4 242.4h1.8v1.8h-1.8zM426 248.5h1.8v1.8h-1.8zM425.9 254.7h1.8v1.8h-1.8zM425.7 260.7h1.8v1.8h-1.8zM425.8 266.9h1.8v1.8h-1.8zM425.6 273.6h1.8v1.8h-1.8zM426 279.8h1.8v1.8h-1.8zM425.4 286.5h1.8v1.8h-1.8zM426 292.9h1.8v1.8h-1.8zM426 305.8h1.8v1.8h-1.8zM425.3 318.4h1.8v1.8h-1.8zM425.9 324.1h1.8v1.8h-1.8zM425.9 337.3h1.8v1.8h-1.8zM425.7 350.2h1.8v1.8h-1.8zM425.9 356.7h1.8v1.8h-1.8zM425.4 362.8h1.8v1.8h-1.8zM425.2 369.1h1.8v1.8h-1.8zM425.7 375.4h1.8v1.8h-1.8zM425.4 381.7h1.8v1.8h-1.8zM431.9 184.6h1.8v1.8h-1.8zM432.8 190.3h1.8v1.8h-1.8zM432.3 198h1.8v1.8h-1.8zM432.3 203.5h1.8v1.8h-1.8zM432.3 210.5h1.8v1.8h-1.8zM432.1 222.5h1.8v1.8h-1.8zM432.1 235.4h1.8v1.8h-1.8zM432.3 241.8h1.8v1.8h-1.8zM432.1 247.7h1.8v1.8h-1.8zM432.7 254.4h1.8v1.8h-1.8zM432.8 260.5h1.8v1.8h-1.8zM432.3 267.2h1.8v1.8h-1.8zM431.6 273.8h1.8v1.8h-1.8zM432.3 280.7h1.8v1.8h-1.8zM432.8 286.1h1.8v1.8h-1.8zM432.5 292.9h1.8v1.8h-1.8zM432.3 305.1h1.8v1.8h-1.8zM432 311.6h1.8v1.8h-1.8zM432.3 318.1h1.8v1.8h-1.8zM432.6 324.5h1.8v1.8h-1.8zM432.2 337.4h1.8v1.8h-1.8zM432.6 343.9h1.8v1.8h-1.8zM432.4 349.8h1.8v1.8h-1.8zM432.7 356.2h1.8v1.8h-1.8zM432.3 362.6h1.8v1.8h-1.8zM432.2 369h1.8v1.8h-1.8zM431.9 381.8h1.8v1.8h-1.8zM439.5 190.9h1.8v1.8h-1.8zM439 197.6h1.8v1.8h-1.8zM439.9 203.6h1.8v1.8h-1.8zM438.5 210.1h1.8v1.8h-1.8zM439.1 229h1.8v1.8h-1.8zM439.3 235.4h1.8v1.8h-1.8zM438.6 242h1.8v1.8h-1.8zM438.7 248.4h1.8v1.8h-1.8zM438.9 254.7h1.8v1.8h-1.8zM438.7 260.8h1.8v1.8h-1.8zM439.2 267.6h1.8v1.8h-1.8zM438.9 280.3h1.8v1.8h-1.8zM439.2 286.5h1.8v1.8h-1.8zM439.1 292.5h1.8v1.8h-1.8zM438.1 299.2h1.8v1.8h-1.8zM438.8 305.7h1.8v1.8h-1.8zM439 318.2h1.8v1.8h-1.8zM439.1 324.3h1.8v1.8h-1.8zM439.1 331.3h1.8v1.8h-1.8zM439.1 343.7h1.8v1.8h-1.8zM439 349.8h1.8v1.8h-1.8zM438.9 356.3h1.8v1.8h-1.8zM438.8 369.4h1.8v1.8h-1.8zM439.3 375.1h1.8v1.8h-1.8zM445.4 184.3h1.8v1.8h-1.8zM444.8 190.9h1.8v1.8h-1.8zM445.8 197.3h1.8v1.8h-1.8zM445 203.5h1.8v1.8h-1.8zM446.1 210h1.8v1.8h-1.8zM445.8 216h1.8v1.8h-1.8zM445.2 222.6h1.8v1.8h-1.8zM445.5 229h1.8v1.8h-1.8zM446 235.2h1.8v1.8h-1.8zM445.2 248h1.8v1.8h-1.8zM445.6 261h1.8v1.8h-1.8zM445 267.2h1.8v1.8h-1.8zM445.7 273.7h1.8v1.8h-1.8zM444.8 280.1h1.8v1.8h-1.8zM445.1 286.5h1.8v1.8h-1.8zM445.5 292.9h1.8v1.8h-1.8zM445.8 299.1h1.8v1.8h-1.8zM445.6 305.3h1.8v1.8h-1.8zM445.3 311.9h1.8v1.8h-1.8zM445.7 318.1h1.8v1.8h-1.8zM445.6 324.3h1.8v1.8h-1.8zM445.8 331.4h1.8v1.8h-1.8zM445.8 337.1h1.8v1.8h-1.8zM445.8 343.3h1.8v1.8h-1.8zM446.3 350.4h1.8v1.8h-1.8zM445.5 362.2h1.8v1.8h-1.8zM445.8 369h1.8v1.8h-1.8zM445.5 374.9h1.8v1.8h-1.8zM444.8 381.8h1.8v1.8h-1.8zM452.5 184.7h1.8v1.8h-1.8zM451.9 197.5h1.8v1.8h-1.8zM451.8 203.2h1.8v1.8h-1.8zM452.3 210.1h1.8v1.8h-1.8zM452.3 216.6h1.8v1.8h-1.8zM452 222.3h1.8v1.8h-1.8zM452.4 229.2h1.8v1.8h-1.8zM452.2 235.2h1.8v1.8h-1.8zM452.3 242.1h1.8v1.8h-1.8zM452.7 248.2h1.8v1.8h-1.8zM452.1 260.5h1.8v1.8h-1.8zM451.7 267.3h1.8v1.8h-1.8zM452.3 273.8h1.8v1.8h-1.8zM452.3 279.9h1.8v1.8h-1.8zM452.4 286.4h1.8v1.8h-1.8zM452.3 292.8h1.8v1.8h-1.8zM452 298.9h1.8v1.8h-1.8zM452.1 305.5h1.8v1.8h-1.8zM452 317.9h1.8v1.8h-1.8zM452.1 324.8h1.8v1.8h-1.8zM452 330.9h1.8v1.8h-1.8zM451.4 337.3h1.8v1.8h-1.8zM452.3 343.6h1.8v1.8h-1.8zM452.6 356.1h1.8v1.8h-1.8zM452.3 362.4h1.8v1.8h-1.8zM452.4 368.6h1.8v1.8h-1.8zM452.1 375.5h1.8v1.8h-1.8zM452.1 381.9h1.8v1.8h-1.8zM458.9 184.5h1.8v1.8h-1.8zM458.8 197.6h1.8v1.8h-1.8zM459.2 203.2h1.8v1.8h-1.8zM458.7 209.3h1.8v1.8h-1.8zM458.7 216.5h1.8v1.8h-1.8zM458.9 222.9h1.8v1.8h-1.8zM459.6 229.7h1.8v1.8h-1.8zM459 235.3h1.8v1.8h-1.8zM458.7 242.4h1.8v1.8h-1.8zM458.2 248h1.8v1.8h-1.8zM458.7 254.3h1.8v1.8h-1.8zM458.6 260.5h1.8v1.8h-1.8zM458.7 273h1.8v1.8h-1.8zM458.8 279.8h1.8v1.8h-1.8zM458.6 286.9h1.8v1.8h-1.8zM458.6 299.1h1.8v1.8h-1.8zM458.6 305.1h1.8v1.8h-1.8zM459.2 312.2h1.8v1.8h-1.8zM458.8 318.5h1.8v1.8h-1.8zM458.6 324.8h1.8v1.8h-1.8zM458.1 331.1h1.8v1.8h-1.8zM459.1 337.2h1.8v1.8h-1.8zM458.7 343.2h1.8v1.8h-1.8zM458.6 349.5h1.8v1.8h-1.8zM458.9 356.7h1.8v1.8h-1.8zM459.3 362.8h1.8v1.8h-1.8zM458.4 375.2h1.8v1.8h-1.8zM458.7 381.8h1.8v1.8h-1.8z" fill="#1e0802"/>
<path d="M157.1 243.8h4.4v4.4h-4.4zm26.6 24.5h4.4v4.4h-4.4zm26.5 102.8h4.4v4.4h-4.4zm-0.6 50.2h4.4v4.4h-4.4zm26.8 -23.6h4.4v4.4h-4.4zm26.3 -229.7h4.4v4.4h-4.4zm-0.8 75.9h4.4v4.4h-4.4zm0.9 25.3h4.4v4.4h-4.4zm-0.7 24.9h4.4v4.4h-4.4zm0 50.9h4.4v4.4h-4.4zm0.2 51h4.4v4.4h-4.4zm26.6 -177.9h4.4v4.4h-4.4zm0.2 76.5h4.4v4.4h-4.4zm0.1 76.3h4.4v4.4h-4.4zm-0.5 50.7h4.4v4.4h-4.4zm26.4 -253.2h4.4v4.4h-4.4zm0.3 49.8h4.4v4.4h-4.4zm0 51.3h4.4v4.4h-4.4zm0.3 25.2h4.4v4.4h-4.4zm-0.1 102.1h4.4v4.4h-4.4zm26.3 -127.9h4.4v4.4h-4.4zm-0.1 51.5h4.4v4.4h-4.4zm-0.5 25.6h4.4v4.4h-4.4zm27.1 24.2h4.4v4.4h-4.4zm26.4 -176.8h4.4v4.4h-4.4zm-0.3 50.1h4.4v4.4h-4.4zm0.7 178.6h4.4v4.4h-4.4zm25.8 -178.2h4.4v4.4h-4.4zm-0.1 102.1h4.4v4.4h-4.4zm26.9 -127.6h4.4v4.4h-4.4zm-0.4 50.5h4.4v4.4h-4.4zm0.2 76.7h4.4v4.4h-4.4z" fill="#1a1400" stroke="#f2f200" stroke-width="2.0"/>
<path d="M157.1 268.6h4v4h-4zm-0.5 25.9h4v4h-4zm1.1 25.4h4v4h-4zm-0.8 51.3h4v4h-4zm26.4 -126.9h4v4h-4zm-0.1 75.8h4v4h-4zm26.2 -177.8h4v4h-4zm-0.1 76h4v4h-4zm1.2 51h4v4h-4zm26.2 -102.3h4v4h-4zm0.9 25.9h4v4h-4zm-0.7 26h4v4h-4zm0 49.4h4v4h-4zm-0.4 153.9h4v4h-4zm26.2 -280.4h4v4h-4zm0.1 51.5h4v4h-4zm26.8 -24.8h4v4h-4zm0 23.9h4v4h-4zm-1 127.1h4v4h-4zm0.4 26.4h4v4h-4zm26.1 -204h4v4h-4zm0.6 101.8h4v4h-4zm26.1 -76h4v4h-4zm0.8 25.4h4v4h-4zm-0.6 24.5h4v4h-4zm-0.4 179.1h4v4h-4zm0.9 25.3h4v4h-4zm25.3 -280h4v4h-4zm0.8 25h4v4h-4zm-0.2 254.9h4v4h-4zm26.7 -279.2h4v4h-4zm-0.3 177.4h4v4h-4zm-0.1 51.3h4v4h-4zm0.3 25.7h4v4h-4zm26.2 -204.1h4v4h-4zm-0.2 26.6h4v4h-4zm0.8 49.2h4v4h-4zm-0.9 25.8h4v4h-4zm26.4 -0.1h4v4h-4zm0 25.9h4v4h-4z" fill="#1a1400" stroke="#f2f200" stroke-width="1.4"/>
<path d="M156.6 193.4h3.8v3.8h-3.8zm0.8 24.8h3.8v3.8h-3.8zm-0.3 127.1h3.8v3.8h-3.8zm25.7 -153.3h3.8v3.8h-3.8zm1.1 26.5h3.8v3.8h-3.8zm-0.4 76.8h3.8v3.8h-3.8zm0.5 50.3h3.8v3.8h-3.8zm-0.9 25.3h3.8v3.8h-3.8zm26.2 -202.8h3.8v3.8h-3.8zm0.1 25h3.8v3.8h-3.8zm1 51.3h3.8v3.8h-3.8zm-0.3 50.6h3.8v3.8h-3.8zm0.2 25.1h3.8v3.8h-3.8zm0.2 25.8h3.8v3.8h-3.8zm-0.2 50.4h3.8v3.8h-3.8zm26 -254.2h3.8v3.8h-3.8zm-0.9 101.8h3.8v3.8h-3.8zm1.4 50.6h3.8v3.8h-3.8zm-0.5 25.9h3.8v3.8h-3.8zm-0.6 25.4h3.8v3.8h-3.8zm0.5 25.1h3.8v3.8h-3.8zm26.6 -151.4h3.8v3.8h-3.8zm0 100.8h3.8v3.8h-3.8zm0.3 51.3h3.8v3.8h-3.8zm-0.5 51.5h3.8v3.8h-3.8zm26.9 -280.9h3.8v3.8h-3.8zm-0.4 101.3h3.8v3.8h-3.8zm0 25.5h3.8v3.8h-3.8zm-1.1 127.4h3.8v3.8h-3.8zm28 -203.4h3.8v3.8h-3.8zm0.2 127.4h3.8v3.8h-3.8zm-0.9 24.6h3.8v3.8h-3.8zm0.1 26.2h3.8v3.8h-3.8zm0.1 50.5h3.8v3.8h-3.8zm26.9 -279h3.8v3.8h-3.8zm0.2 101.5h3.8v3.8h-3.8zm-1 50.6h3.8v3.8h-3.8zm0.5 76.9h3.8v3.8h-3.8zm25.8 -178.5h3.8v3.8h-3.8zm0.2 25.6h3.8v3.8h-3.8zm0 24.4h3.8v3.8h-3.8zm0.1 26.8h3.8v3.8h-3.8zm0 24.9h3.8v3.8h-3.8zm0.4 25h3.8v3.8h-3.8zm0.4 25.9h3.8v3.8h-3.8zm-1.2 49.7h3.8v3.8h-3.8zm27 -228h3.8v3.8h-3.8zm-0.2 51.3h3.8v3.8h-3.8zm0.7 50.3h3.8v3.8h-3.8zm-0.8 26h3.8v3.8h-3.8zm0.4 50.8h3.8v3.8h-3.8zm26.1 -26.1h3.8v3.8h-3.8zm0.7 51.4h3.8v3.8h-3.8zm26.1 -178.8h3.8v3.8h-3.8zm-0.5 51.7h3.8v3.8h-3.8zm0.4 126.9h3.8v3.8h-3.8z" fill="#1a1400" stroke="#f2f200" stroke-width="1.0"/>
<path d="M180.5 281h6v6h-6z M420.5 281h6v6h-6z" fill="#22d822"/><path d="M182.7 283.2h1.6v1.6h-1.6z M422.7 283.2h1.6v1.6h-1.6z" fill="#062006"/>
</svg>
<svg width="1681" height="945" style="left:0;top:0"><path d="M615.5 271.4 616.5 271.4 617.5 272.5 618.5 271.6 619.5 271.4 620.5 271.6 621.5 272.2 622.5 271.8 623.5 271.9 624.5 271.9 625.5 272.2 626.5 272.4 627.5 272.5 628.5 271.4 629.5 271.8 630.5 271 631.5 273 632.5 273.2 633.5 273.4 634.5 272.9 635.5 273.5 636.5 272.9 637.5 273 638.5 272.4 639.5 273 640.5 273.3 641.5 274.4 642.5 275.1 643.5 274.2 644.5 275.1 645.5 275.4 646.5 275.2 647.5 275 648.5 275.9 649.5 275.9 650.5 276.9 651.5 277.4 652.5 277.7 653.5 278.1 654.5 278.8 655.5 278.4 656.5 279.8 657.5 278.8 658.5 280.1 659.5 280.7 660.5 280.4 661.5 280.3 662.5 281.9 663.5 281.6 664.5 282.8 665.5 283.1 666.5 283.1 667.5 283.5 668.5 284.4 669.5 284.5 670.5 284.2 671.5 285.2 672.5 285.8 673.5 286 674.5 286.4 675.5 286.6 676.5 287 677.5 287 678.5 287.1 679.5 288.9 680.5 288.3 681.5 289.2 682.5 288.7 683.5 290 684.5 289.8 685.5 292.3 686.5 290.5 687.5 290.9 688.5 292.3 689.5 292.7 690.5 291.2 691.5 292.8 692.5 293.3 693.5 292.4 694.5 293.6 695.5 293.1 696.5 293 697.5 293.6 698.5 293.7 699.5 293.3 700.5 295.5 701.5 294.2 702.5 294.2 703.5 295.2 704.5 294.9 705.5 295.8 706.5 295.1 707.5 295.6 708.5 295.5 709.5 295.5 710.5 295.3 711.5 295.2 712.5 296.1 713.5 294.6 714.5 294.5 715.5 294.3 716.5 294.6 717.5 294.2 718.5 294.3 719.5 292.8 720.5 293.4 721.5 292.9 722.5 292.6 723.5 292.6 724.5 291.2 725.5 292.1 726.5 291.8 727.5 290.7 728.5 291.2 729.5 291.8 730.5 290.5 731.5 290.8 732.5 290.1 733.5 289.5 734.5 289.2 735.5 289.2 736.5 289.8 737.5 289.3 738.5 288.1 739.5 288.8 740.5 287.8 741.5 287.2 742.5 287.5 743.5 286.5 744.5 285.8 745.5 287.1 746.5 285.1 747.5 286.1 748.5 284.7 749.5 285.2 750.5 284.8 751.5 284.3 752.5 283.1 753.5 283.9 754.5 283.6 755.5 282.9 756.5 283 757.5 283.3 758.5 282.2 759.5 282.5 760.5 281.5 761.5 282.2 762.5 282.2 763.5 283.1 764.5 282.1 765.5 281.8 766.5 282.2 767.5 280.8 768.5 281.9 769.5 280.9 770.5 280.8 771.5 281.6 772.5 281.1 773.5 281.6 774.5 280 775.5 280.8 776.5 280.3 777.5 280.4 778.5 279.4 779.5 280.9 780.5 280.4 781.5 279.7 782.5 279.4 783.5 279.6 784.5 280.7 785.5 279.8 786.5 279.6 787.5 280 788.5 279.7 789.5 279.8 790.5 280 791.5 279.8 792.5 280.1 793.5 279 794.5 279.8 795.5 279.6 796.5 279.9 797.5 279.9 798.5 279.6 799.5 279.8 800.5 280.6 801.5 279.8 802.5 279.5 803.5 280.6 804.5 280.8 805.5 280.2 806.5 280.5 807.5 280 808.5 280.4 809.5 281.2 810.5 281.1 811.5 280.9 812.5 280.7 813.5 280.1 814.5 281.3 815.5 281.6 816.5 282.1 817.5 282.8 818.5 282.1 819.5 282.6 820.5 281.6 821.5 283 822.5 283 823.5 283.5 824.5 283.3 825.5 283.3 826.5 284.1 827.5 283.1 828.5 284 829.5 284.4 830.5 283.6 831.5 283.6 832.5 284.6 833.5 284.6 834.5 285 835.5 285.2 836.5 284.7 837.5 285.4 838.5 286 839.5 285.4 840.5 285.6 841.5 285.4 842.5 286.6 843.5 287.4 844.5 285.8 845.5 287.1 846.5 287.4 847.5 286.8 848.5 287 849.5 286.9 850.5 287.2 851.5 287.9 852.5 288.3 853.5 288.2 854.5 288.8 855.5 288.6 856.5 288 857.5 289.6 858.5 289.5 859.5 288.6 860.5 290 861.5 289.3 862.5 289.1 863.5 290 864.5 287.6 865.5 288 866.5 289.1 867.5 288.5 868.5 288 869.5 289.3 870.5 288.6 871.5 287.6 872.5 287.8 873.5 288.6 874.5 289 875.5 286.8 876.5 288 877.5 287.5 878.5 286.6 879.5 287.3 880.5 286.4 881.5 286.7 882.5 287.7 883.5 286.8 884.5 286.7 885.5 286.3 886.5 285.9 887.5 286 888.5 284.6 889.5 284.7 890.5 285.1 891.5 284 892.5 283.8 893.5 284.5 894.5 284.4 895.5 282.9 896.5 282.5 897.5 283 898.5 282.6 899.5 281.8 900.5 282.3 901.5 282 902.5 281.5 903.5 282.8 904.5 281.8 905.5 281.2 906.5 281.1 907.5 282 908.5 280.7 909.5 279.5 910.5 279.9 911.5 279.5 912.5 279 913.5 279.2 914.5 279 915.5 278.6 916.5 278.1 917.5 278.7 918.5 277.2 919.5 278.4 920.5 277.8 921.5 277.9 922.5 276.4 923.5 278.5 924.5 276.7 925.5 277.2 926.5 278 927.5 277.3 928.5 277.4 929.5 276.4 930.5 277.4 931.5 277.7 932.5 278 933.5 277.5 934.5 277.7 935.5 277.9 936.5 277.3 937.5 277.2 938.5 278.7 939.5 277.3 940.5 278.4 941.5 277.9 942.5 278.7 943.5 277.7 944.5 278.4 945.5 278.4 946.5 278.2 947.5 278.6 948.5 278.1 949.5 278.6 950.5 278.6 951.5 279.3 952.5 279 953.5 278.4 954.5 279 955.5 279.3 956.5 279 957.5 280.3 958.5 279.9 959.5 280.3 960.5 279.6 961.5 279.9 962.5 280.8 963.5 279.7 964.5 280.9 965.5 280.9 966.5 280.8 967.5 281.3 968.5 280.8 969.5 281.7 970.5 281.1 971.5 281.3 972.5 282.9 973.5 281.9 974.5 281.4 975.5 283.2 976.5 282.4 977.5 281.1 978.5 283.2 979.5 283.9 980.5 283.8 981.5 284.7 982.5 283.9 983.5 284.5 984.5 283.8 985.5 284.6 986.5 285.5 987.5 285.1 988.5 285.1 989.5 284.1 990.5 285.2 991.5 284.9 992.5 286.1 993.5 285.5 994.5 286.3 995.5 285.7 996.5 287.4 997.5 285.9 998.5 286.7 999.5 288.1 1000.5 286.9 1001.5 286.3 1002.5 287.1 1003.5 287.3 1004.5 287.2 1005.5 285.6 1006.5 286.7 1007.5 285.4 1008.5 287.5 1009.5 286.4 1010.5 285.9 1011.5 286.3 1012.5 286 1013.5 284.9 1014.5 286.1 1015.5 284.7 1016.5 283.5 1017.5 284.9 1018.5 284.6 1019.5 284 1020.5 283.3 1021.5 282.1 1022.5 282.7 1023.5 282.8 1024.5 281.9 1025.5 281.9 1026.5 280.3 1027.5 280.9 1028.5 280.6 1029.5 279 1030.5 278.7 1031.5 279 1032.5 279.2 1033.5 279.3 1034.5 278.8 1035.5 278.8 1036.5 278.7 1037.5 278.7 1038.5 278.9 1039.5 278.8 1040.5 278.4 1041.5 278.5 1042.5 278 1043.5 278.6 1044.5 277.8 1045.5 278.9 1046.5 277.9 1047.5 278.1 1048.5 277.5 1049.5 277.8 1050.5 278.1 1051.5 278.2 1052.5 278 1053.5 277.9 1054.5 278.8 1055.5 279.1 1056.5 279.6 1057.5 280.3 1058.5 279.8 1059.5 279.2 1060.5 280.7 1061.5 280.2 1062.5 281 1063.5 282.8 1064.5 283.1 1065.5 283.1 1066.5 283.7 1067.5 284.5 1068.5 284.2 1069.5 286 1070.5 286.2 1071.5 288 1072.5 287 1073.5 288.7 1074.5 288.4 1075.5 289.9 1076.5 289.4 1077.5 291 1078.5 291 1079.5 291.6 1080.5 292.7 1081.5 293.8 1082.5 294.6 1083.5 296.1 1084.5 296.5 1085.5 295.5 1086.5 297.7 1087.5 297.7 1088.5 299.5 1089.5 300.9 1090.5 300.7 1091.5 301.7 1092.5 303.2 1093.5 303.8 1094.5 305.5 1095.5 305.4 1096.5 306.1 1097.5 307.3 1098.5 306.5 1099.5 307.2 1100.5 307 1101.5 308.1 1102.5 308.9 1103.5 309.4 1104.5 309 1105.5 308.9 1106.5 309.1 1107.5 309" fill="none" stroke="#3a7fe8" stroke-width="1.1"/></svg>
<svg width="1681" height="945" style="left:0;top:0">
<defs><clipPath id="cb"><rect x="59.5" y="539.8" width="489.5" height="342.70000000000005"/></clipPath></defs><g clip-path="url(#cb)">
<path d="M60.1 713.4V721.3M60.4 715.4V721.8M61.1 692.7V723M61.8 663V722.1M62.2 708.8V720.4M62.9 676.4V716.9M63.6 710.4V713.5M64.3 703.1V710M64.6 703.8V708.8M65.3 695V709M66.4 693V709.3M68.5 698.3V714.2M69.2 711.8V717.5M69.5 706.5V719.2M70.2 704V722.5M70.9 694.3V722.1M72 713V717.9M72.3 677.6V716.5M72.7 694.8V715.1M73 671.1V713.7M74.8 711.3V715.1M77.9 686.3V716.5M78.6 692.8V715M79 696.7V714.3M79.7 704.5V713.7M82.5 715.1V721.3M82.8 709.9V721.4M84.6 715.2V721.4M85.6 700.5V721.2M86.7 712.9V720.4M87 686.6V720.1M87.4 712.5V719.8M87.7 702.8V719.5M88.5 707.8V719M89.2 716.8V719.5M89.5 710.3V719.8M89.9 648.2V720.1M90.2 679.5V720.4M90.9 716.9V721M91.3 716V721.3M91.6 718.5V721.4M92.7 711.9V720.3M93 681.9V720M93.4 708.1V719.6M94.1 703.6V718.9M94.4 712.2V718.5M95.1 674.1V718.9M95.8 702.5V719.3M96.5 711.3V719.8M97.2 696V720.3M97.6 688.6V720.6M98.6 718.5V722.4M100 699.9V724.7M100.4 712.3V725.3M100.7 714.1V725.3M101.1 699.9V725M101.4 672.8V724.6M101.8 716.6V724.3M102.1 720.9V724M102.8 721V723.3M103.5 710.3V722.6M104.2 712.6V720.9M104.6 695.9V720.1M104.9 711.2V719.3M105.3 707V718.5M105.6 705.5V717.7M106 713.4V716.8M106.3 691.1V716M107.4 699.9V715.5M108.1 685.2V715.3M109.5 696.9V715M110.2 704.8V715.6M111.6 700.3V716.6M111.9 706.2V716.9M112.3 670.6V717.1M112.6 698.1V717.3M113 675.9V717.3M114 711.7V717.3M114.4 703.6V717.3M114.7 706.9V717.3M115.1 684.8V717.3M116.5 692.3V717.7M116.9 701.7V717.9M117.2 711.3V718M117.9 713.5V718.3M118.6 712.1V718.5M119.3 701.3V717.8M119.7 698.3V717.5M120 705.9V717.2M120.7 701.4V716.6M121.4 709.1V715.9M121.8 706.7V716.3M122.5 687.1V717.5M122.8 715.1V718M123.9 716.1V719.8M124.2 716.3V720.4M124.6 694.3V720.8M125.6 671.5V720M126 653.2V719.7M126.3 717.1V719.4M126.7 706.8V719.1M127 682.4V718.8M127.4 716.5V718.5M127.7 711.5V718.5M128.4 695.9V718.8M129.1 699.6V719.1M129.8 679V719.4M130.2 714.6V719.6M130.5 710.7V719.7M131.2 710.9V719.4M132.3 716.6V718.9M132.6 712.9V718.7M133 711.5V718.5M133.3 704.6V718.4M134 666.2V718.7M134.4 713.7V719M134.7 709.6V719.3M135.8 709.3V720.1M136.1 690V720.4M136.5 709V720.7M137.2 696.4V719.1M138.6 709.5V715.7M141.4 713.5V720.5M142.4 720.4V724.4M143.5 710.2V722.9M144.2 713.1V721.8M145.6 693V719.7M146 714.8V719.7M146.7 711V719.8M148.1 703.1V720M148.4 691.3V720.1M149.8 717.5V720.4M151.2 715.2V720.7M151.6 717V720.8M152.3 712.2V721.2M152.6 696.9V721.4M153 698.8V721.6M153.7 717.2V722.1M154 720.2V722.3M154.4 719.7V722.5M154.7 679.1V722.5M155.1 705.4V722.3M156.5 711.6V721.7M156.8 703V721.5M157.5 705.5V721.2M157.9 705.4V721M158.2 670.8V720.7M158.6 706.3V720.5M159.3 704V720M159.6 711.9V719.8M160 650.3V719.6M162.1 707.6V718.3M162.4 712.3V718.2M162.8 711.5V718M164.2 689.1V716.2M164.5 688.9V715.5M164.9 689.4V714.9M165.2 696.9V714.2M165.6 708.6V713.5M166.6 706V712.1M167 691.3V712.9M168 692.3V715.5M168.4 710.5V716.4M168.7 704.1V717.3M169.8 695.5V718.9M170.1 671.6V718.7M170.8 706.8V718.2M171.2 687.7V718M171.5 621.4V717.7M171.9 695.9V717.5M172.2 683.8V717.2M172.6 707.5V717M172.9 710.6V717M173.6 677.2V717M174 672.3V717M174.3 693.3V717M176.5 705.4V720.5M176.8 704.7V721.8M177.5 716.5V724.3M178.2 711.2V726.8M178.6 719.7V727.6M179.3 713V723.6M180 706.2V719.6M180.3 685.5V717.6M181.7 707V711.4M182.8 698.9V714.1M183.1 698V715M184.2 713.3V717.7M184.5 686.4V718.5M185.2 693.4V719.6M185.6 691.5V720.2M186.3 688.8V721.2M186.6 705.7V721.8M187 706.5V722.3M187.3 716.7V722.9M190.8 717.3V722.3M191.2 715.5V722.4M191.5 712.9V722.5M191.9 713.1V722.7M192.6 716.2V722.9M192.9 709.2V723M193.3 717.6V723.2M194 665.9V721.6M195 702.2V718.1M196.1 700.7V714.6M198.5 653.6V714.1M199.2 709.9V714.4M199.9 689.3V715.4M200.6 707.7V716.9M201.7 700.6V719.1M202 688.1V719.8M202.4 690.5V720.6M202.7 702.5V720.5M203.1 701.6V720M203.5 659.1V719.6M203.8 714.8V719.2M204.9 673.9V717.9M205.6 704.8V717.3M206.3 716.9V719.1M207.3 716.6V722M208 696V723.8M208.7 711.4V724.7M209.1 689.5V724M209.4 701.6V723.4M209.8 717.8V722.7M210.8 713.2V720.6M211.2 713.7V719.9M211.5 686.3V719.2M212.6 686.3V719.2M212.9 698.9V719.2M213.6 696.7V719.1M214.3 716.6V719.1M215 698.9V719.3M215.7 699.7V719.5M216.1 704.6V719.6M216.4 706V719.7M216.8 675.7V719.8M217.1 715.1V720M218.5 686.4V719.1M219.2 714V718.4M219.9 711.5V717.8M220.3 698.7V717.4M221 692V717.5M221.3 707.4V717.7M221.7 707.7V717.8M222 677.8V718M223.4 711.5V718.8M223.8 703V718.5M224.1 688.7V718.1M224.5 657.8V717.7M224.8 665.8V717.4M225.2 699.8V717M225.5 699.5V716.6M226.2 664.7V715.9M227.3 702.9V716.3M227.6 693.7V716.6M228.3 707.4V717.2M228.7 715V717.5M229.4 691.1V718.1M229.7 674.4V718M230.1 707.5V717.8M230.8 689.9V717.4M231.1 681.6V717.2M231.5 705.2V717M232.2 703.8V716.6M232.6 704.1V716.4M234 705.6V717.8M234.3 704V718.2M235 694.5V718.9M235.7 715.3V718.9M237.1 662.1V715.8M238.9 707.3V712.6M240.3 678.1V712.5M243.1 692V716.4M243.8 709.1V718.3M244.5 705.4V720.1M244.8 712V720.1M245.2 698.9V720M245.5 701.8V719.8M245.9 707.9V719.7M246.2 698.4V719.6M246.6 716.3V719.5M246.9 678.8V719.4M247.3 697.8V719.3M248.3 707.6V717.9M249.4 693.8V716.3M249.7 698V715.7M250.8 711.9V714.8M251.8 642.2V715.8M253.6 713.3V717.3M255 696.3V715.8M255.7 705V715M256 705.9V714.6M256.7 668.3V715.1M257.1 709.4V716.6M258.5 714.4V722.4M259.2 710.6V725.2M259.5 700.1V726.3M259.9 712.2V724.6M260.2 718V722.9M260.9 649.5V719.5M261.3 706.3V717.8M261.7 670.1V716.2M262.4 681.7V712.8M263.8 705.6V717.6M264.1 700.1V719.1M264.8 683.8V722.2M265.2 711.8V723.7M265.5 716.6V725.2M265.9 693.4V724M266.2 717.5V722.8M266.9 714.5V720.4M267.3 699.1V719.2M268.3 677.2V715.7M268.7 699.5V715.3M269.4 700V716.5M269.7 679.3V717.1M270.1 702.7V717.6M270.4 714.4V718.2M271.1 703.2V719.4M272.2 684.8V719.4M272.9 716.2V718.8M274.6 664.2V717.3M275 686.2V717.2M275.3 712.8V717.2M275.7 699.2V717.1M276 711.2V717.1M276.7 695.8V716.9M277.1 707.9V716.9M277.4 694.1V716.8M278.5 712.1V718.5M278.8 709.9V719.2M279.2 715.9V719.8M279.5 708.6V720.4M280.6 694.5V722.1M280.9 682.4V722M281.3 714.8V722M281.6 670.5V721.9M282 708.6V721.8M282.3 690.7V721.8M286.5 712.1V717.2M287.2 692.5V716.6M287.9 707.2V716M288.6 692.2V715.4M290.1 710V716.9M290.4 705.9V718.3M290.8 685.5V719.7M291.1 718V721.1M291.8 696.2V723.9M292.2 716.2V725.3M292.5 697.2V726.6M292.9 709.5V726.3M293.2 715.6V726M293.6 720.1V725.7M293.9 697.2V725.4M294.3 703.3V725.1M294.6 674.7V724.8M295 692.4V724.4M295.3 701.4V724.1M295.7 654.4V723.7M296 714.2V723.1M296.4 666.7V722.5M297.1 707.7V721.3M297.4 708.3V720.7M298.8 687.7V718.7M299.2 714V718.5M299.5 698.2V718.3M300.6 658.3V717.7M300.9 714.1V717.5M301.6 710.2V717.3M303 699.2V718.4M303.4 641.1V718.6M303.7 701.4V718.9M305.1 713.9V719.3M305.5 693.4V719.2M305.8 697.4V719.2M306.9 698.9V718.9M307.2 714.7V718.8M307.6 708.9V718.8M307.9 686.5V719.3M308.6 686.9V720.4M310 707.6V722.4M310.7 679.8V722.5M311.1 718.2V721.4M312.1 709.7V718.4M313.2 659.4V715.4M313.9 699V715M314.6 668.4V715.9M314.9 706.9V716.4M315.3 687.1V716.9M316 713.1V717.8M316.3 716V718.2M316.7 716V718.2M317 694.5V717.9M317.4 699.5V717.5M318.1 672.3V716.7M318.8 705.8V716M319.5 713V715.2M320.2 701V717.2M320.9 714.7V719.1M321.6 707.2V721.1M322 705.1V722.1M322.3 699.4V723M323 717.9V723.9M323.4 720.2V724.1M323.7 709.1V724.4M324.1 713.5V724.6M324.4 721.2V724.8M324.8 689.7V725.1M325.8 719.1V724.8M326.2 719.8V723.9M326.5 714.5V723M327.2 701.4V721.2M327.6 707.5V720.4M327.9 689.7V719.5M328.3 676.4V718.6M330 714.3V719.3M330.7 712.4V719.9M332.8 698.3V722M333.2 678.9V722.5M333.5 713.3V722.9M333.9 701.4V723.3M334.2 675.8V723.7M334.9 706.4V723M335.6 680.7V721.4M336.3 716.3V719.8M337 700.4V718.2M339.1 699V715.8M339.8 712.3V715.2M342.3 662.9V719.3M342.6 687.4V720.3M343 707.9V721.2M343.7 697.1V722.4M344 716.1V722.1M344.7 703.5V721.6M345.4 713.5V721.1M346.1 712.4V720.6M346.8 700.3V720.1M347.2 693V719.7M347.9 704.7V719.1M349 715.6V718.1M349.7 713.6V717.9M350.4 714V719.4M351.1 704.7V721M351.4 715.8V721.8M351.8 708.3V722.6M352.5 712V724.1M352.8 705.5V723.7M353.2 705.2V723.1M353.9 696.6V722M354.2 704.2V721.4M354.6 703.8V720.8M355.3 716V719.7M356 688.4V718.1M356.7 706V716.2M358.8 692.3V712M360.5 713.4V717M361.9 714.8V719.5M362.6 710.6V719.1M363.3 716.1V718.8M363.7 704V718.6M364 682.3V718.4M364.7 711.2V718.7M365.1 681V719.6M365.4 696.4V720.5M366.1 719.6V722.3M366.5 718.1V723.3M367.2 704.3V725.1M367.5 684.7V725.8M368.6 682V723.1M368.9 711.6V722.3M370.3 677.2V718.7M371 700.1V718.2M371.4 707.1V718.1M372.1 714.9V717.9M372.8 712.2V717.7M373.5 714V717.5M374.2 709.3V718.1M374.5 691V718.4M374.9 709.9V718.7M375.2 716.8V719M375.6 709.4V719.3M375.9 712.4V719.6M376.3 715.9V719.9M377 715V720M377.4 703.9V719.9M377.7 703.4V719.8M378.1 709V719.7M378.4 694.6V719.6M379.1 680.2V719.4M379.5 713.3V719.4M380.2 691.8V717.9M381.6 687.6V714.8M381.9 705.7V714M383 688.9V713.7M384.4 702.1V716.5M385.1 708.2V718M386.1 692.3V718.5M386.5 712.5V718.3M386.8 701.4V718.1M387.2 706.5V717.8M387.9 701.1V717.4M388.2 654.6V717.2M388.6 695.3V717.2M389.6 697.7V719.6M390.3 675.5V721.3M390.7 717.7V722.1M391 700.9V722.9M391.7 690.8V724.3M392.4 709.1V725.2M392.8 701.2V725.7M393.1 688V726.1M393.5 722.9V726.6M393.8 695.1V727.1M394.2 693.7V727.5M394.5 720.1V727.8M394.9 680.4V726.2M395.2 718.4V724.5M395.6 686.9V722.9M396.6 706.6V718M397 695.4V716.3M397.3 697.6V714.7M399.1 691.7V714.2M399.4 709.5V714.3M399.8 701.8V714.4M402.6 689.5V714.8M402.9 709.1V714.9M403.3 707.3V715M403.6 683.5V715M404.3 671.8V715.2M406.1 692.9V715.6M407.2 705.2V715.7M407.5 666.7V715.7M409.3 708.4V715.6M409.6 710.9V715.7M410 711.1V716.1M410.3 669.3V716.4M412.1 699.2V718.1M412.4 693.4V718.5M412.8 694V718.9M413.1 712.4V719.4M413.5 698.6V719.9M413.8 716.5V720.4M414.2 702.4V720.9M414.5 709.3V721.4M414.9 713.8V721.9M415.2 680V722.3M415.6 713.5V722.5M415.9 703.1V721.4M416.3 678.5V720.3M416.6 711.2V719.2M417 714V718M418 644.7V714.7M419.8 685.2V712.8M420.1 692.1V712.7M420.8 684.6V712.4M422.6 670.3V711.8M424.3 700.6V711.1M424.7 709.6V711.7M425.7 678.6V715.9M427.1 680.1V721.4M427.5 675.5V722.7M427.8 718V722.9M429.2 717.6V723.3M429.6 706.9V723.4M429.9 682.1V723.5M430.3 699V723.6M430.6 687.4V723.1M431.7 710V719.1M433.1 663.6V713.8M433.4 674.3V712.4M433.8 709.9V712.2M434.2 705.5V712.1M434.9 682.1V712.1M435.9 706.7V711.9M436.3 705V711.9M436.6 700.3V712.1M437 701.8V712.9M438.7 692.2V717M440.1 708.7V719.7M440.8 717.4V720.6M441.9 635.7V721.9M442.6 716.7V722.7M442.9 717.8V722.7M444 698.8V722.6M444.7 710.2V722.5M445 711.2V722.5M445.4 700.3V722.4M445.7 706V722.2M446.1 684.8V721.8M446.4 700.6V721.4M446.8 714.6V721M447.1 703.8V720.7M447.5 694.4V720.3M448.2 715.3V719.5M448.9 702.7V719.4M449.2 711.8V719.6M449.6 716.8V719.8M450.6 697.1V720.5M451.7 718.5V721M452.4 691.8V720.7M452.7 714.5V720.5M453.1 690.6V720.4M453.4 692.3V720.2M453.8 709.6V720M454.1 715.4V719.9M455.5 713.8V718.5M455.9 685.5V718.1M456.2 683.6V717.6M456.9 697.1V716.8M460.4 686.5V725.8M460.8 713.4V725.3M461.5 697.9V723.5M462.9 707.2V719.9M463.3 705.8V719M464.3 696V717.2M465 697.3V716.1M466.4 694.8V714.1M466.8 705.6V714.1M467.1 700.7V714.4M467.5 686.5V714.7M468.2 705.2V715.4M469.2 702V716.3M471 694.2V714.4M471.3 681.8V713.9M472 700V712.9M472.4 688.9V712.4M472.7 701.1V712.7M473.4 696.1V714.1M473.8 675.2V714.8M474.8 708.4V717M475.2 695.3V717.8M475.5 709.3V718.5M475.9 692.1V719M476.6 717.6V720M476.9 697.2V720.5M477.6 705.1V721.5M478 698V722M478.7 716.3V722.2M479 710.5V721.1M479.7 661.1V718.9M480.4 702.8V716.7M481.5 707.2V713.4M482.2 705.1V715.5M482.9 715.6V717.7M483.6 685.8V720M483.9 637.1V721.1M484.6 720.6V723.1M485 713.7V723.5M485.3 717.3V724M486 712.7V724.9M486.7 704.5V725.8M487.4 720.4V726.7M487.8 682.3V726.1M488.5 700.6V724.5M488.8 719.6V723.7M489.2 713.7V722.9M490.6 678V719.7M491.3 697.4V718.3M491.6 691.3V717.5M492.7 695.1V715.4M494.1 710.4V714M494.5 685.6V714.1M494.8 699.1V714.3M496.6 704.1V715M498 701.2V716M498.7 707.3V716.5M500.1 704.9V716.3M500.4 713.5V715.9M500.8 700.2V715.4M501.1 709.6V715M501.5 695.2V714.6M501.8 675.1V714.1M502.9 695.5V713.3M503.2 702.2V713.3M503.9 711.2V713.3M505 699.1V713.4M506.4 694.4V714.5M506.7 694.6V715M507.4 706.1V715.9M507.8 692.1V716.4M508.8 699.4V717.4M509.2 701.9V717.4M509.9 708.3V717.5M510.2 709.7V717.5M510.9 714.4V717.6M512 710.2V718.2M513 717V719.3M513.7 715.6V720M514.1 703.1V720.4M514.4 715.8V720.7M515.1 701.4V719.3M515.8 701.8V717.6M516.9 704.8V715M517.9 700.1V715.4M520 717V724M520.4 714.5V725.5M521.5 721.8V724.8M522.2 701.9V724.1M523.2 708.9V722.9M523.6 691.5V722.6M524.3 716.1V722.5M524.6 705.4V722.4M525 677.6V722.3M525.3 715.5V722.2M525.7 704.4V722.1M526 710.6V722.1M526.4 713.9V722M526.7 678.9V721.5M527.8 689.5V719.3M528.1 699V718.6M528.5 680V717.9M528.8 684.4V717.2M530.6 708.6V719.2M530.9 712.8V720.3M531.3 674.3V721.4M531.6 700.9V722.5M532.7 663.1V724.9M533.4 712.4V722.9M534.1 713.7V721M534.4 701.2V720M534.8 698.7V719M535.5 710.4V717.1M536.2 689.2V719M536.5 709.9V720M537.2 662.5V722M537.6 709.7V723M537.9 717.3V724M538.3 701.6V725M539 712.8V725.2M540.4 687.4V723.8M540.7 700.7V723.4M541.1 680.3V723.1M541.4 711.8V722.7M541.8 668.4V721.9M542.1 713.9V721M542.5 713.2V720.1M543.5 684.7V717.3M544.9 681.2V715.1M545.6 687.2V715.5M546 707.6V715.7M546.7 689.9V716.1M547.4 698.8V716.5M547.7 712.3V717.3M549.5 681.2V722.8" stroke="#24e81a" stroke-width="1" fill="none"/>
<path d="M545.5 790V822" stroke="#24e81a" stroke-width="1"/>
<path d="M58.5 714.7 61.5 719.7 64.5 704.8 67.5 705.6 70.5 719.8 73.5 707.8 76.5 715.6 79.5 709.2 82.5 717.4 85.5 717.4 88.5 714.9 91.5 717.5 94.5 714.4 97.5 716.5 100.5 721.5 103.5 718.6 106.5 711.6 109.5 711 112.5 713.3 115.5 713.3 118.5 714.5 121.5 711.8 124.5 716.9 127.5 714.4 130.5 715.7 133.5 714.3 136.5 716.7 139.5 709.5 142.5 720.6 145.5 715.7 148.5 716.1 151.5 716.7 154.5 718.6 157.5 717.2 160.5 715.2 163.5 713.6 166.5 707.7 169.5 715.1 172.5 713 175.5 713 178.5 723.9 181.5 706.9 184.5 714.5 187.5 719.1 190.5 718.1 193.5 719.3 196.5 709.2 199.5 710.5 202.5 716.8 205.5 713.1 208.5 721.2 211.5 715.2 214.5 715.1 217.5 716.1 220.5 713.2 223.5 714.8 226.5 711.6 229.5 714.2 232.5 712.4 235.5 715.3 238.5 708.7 241.5 708.4 244.5 716.2 247.5 715.2 250.5 710.5 253.5 713.4 256.5 710.1 259.5 722.5 262.5 708.1 265.5 721.2 268.5 711 271.5 716 274.5 713.3 277.5 712.8 280.5 718.1 283.5 717.6 286.5 713.2 289.5 710.7 292.5 722.6 295.5 720 298.5 714.9 301.5 713.2 304.5 715.5 307.5 714.7 310.5 719.1 313.5 710.5 316.5 714.4 319.5 711.2 322.5 719.6 325.5 721.6 328.5 714 331.5 716.5 334.5 720 337.5 713.2 340.5 710.6 343.5 718.5 346.5 716.4 349.5 713.5 352.5 720.2 355.5 715.3 358.5 707.2 361.5 715.7 364.5 714.1 367.5 721.9 370.5 714.3 373.5 713.5 376.5 716.1 379.5 715.3 382.5 708.7 385.5 714.8 388.5 713.1 391.5 720 394.5 724 397.5 709.9 400.5 710.5 403.5 711 406.5 711.7 409.5 711.6 412.5 714.6 415.5 718.7 418.5 709.2 421.5 708.2 424.5 707 427.5 718.8 430.5 719.7 433.5 708.2 436.5 707.8 439.5 714.9 442.5 718.7 445.5 718.4 448.5 715.1 451.5 717.1 454.5 715.7 457.5 712.2 460.5 722 463.5 714.4 466.5 709.9 469.5 712.5 472.5 708.2 475.5 714.4 478.5 718.8 481.5 709.3 484.5 718.9 487.5 722.8 490.5 715.9 493.5 709.7 496.5 711 499.5 713 502.5 709.2 505.5 709.4 508.5 713.3 511.5 713.7 514.5 716.8 517.5 709.6 520.5 721.9 523.5 718.6 526.5 717.9 529.5 711.8 532.5 721.3 535.5 713 538.5 721.6 541.5 718.7 544.5 710.8 547.5 712.6 550.5 721.9 L550.5 785.1 547.5 788.8 544.5 788.6 541.5 791.7 538.5 789.9 535.5 789.5 532.5 786.1 529.5 787.6 526.5 782.7 523.5 787.6 520.5 788.4 517.5 789.1 514.5 788.8 511.5 785.2 508.5 784.3 505.5 782.7 502.5 787.3 499.5 787.2 496.5 784.6 493.5 790.7 490.5 785.6 487.5 787.4 484.5 787.8 481.5 783.7 478.5 789.9 475.5 787 472.5 787.3 469.5 787.8 466.5 784.4 463.5 788.9 460.5 790.3 457.5 791.8 454.5 787.1 451.5 786.1 448.5 788.3 445.5 784.6 442.5 788.9 439.5 784.7 436.5 785.1 433.5 788.6 430.5 789 427.5 786.9 424.5 784.2 421.5 789.6 418.5 785.6 415.5 789.7 412.5 786.7 409.5 786.4 406.5 785.4 403.5 788.5 400.5 786.2 397.5 789.2 394.5 787.4 391.5 785.8 388.5 787.6 385.5 786.2 382.5 788.2 379.5 786.7 376.5 787.6 373.5 787.1 370.5 787.3 367.5 784.3 364.5 788.4 361.5 791.4 358.5 788.9 355.5 784.4 352.5 788.8 349.5 787.6 346.5 789.3 343.5 784.7 340.5 787.3 337.5 787.7 334.5 786.4 331.5 787.3 328.5 789.2 325.5 788.8 322.5 785.9 319.5 787.5 316.5 784.5 313.5 785.9 310.5 784.7 307.5 788.1 304.5 786.4 301.5 783.5 298.5 790.1 295.5 786.5 292.5 786 289.5 788.7 286.5 786.8 283.5 786.1 280.5 787 277.5 783.7 274.5 788.5 271.5 789.5 268.5 785.9 265.5 784 262.5 790.8 259.5 785 256.5 784.5 253.5 785.5 250.5 788 247.5 782.9 244.5 788.2 241.5 790.2 238.5 787.7 235.5 791.4 232.5 787.3 229.5 785.8 226.5 785 223.5 786.4 220.5 788.6 217.5 785.8 214.5 786.1 211.5 786.7 208.5 785.6 205.5 787.6 202.5 786.2 199.5 784.7 196.5 788.4 193.5 790.5 190.5 788.3 187.5 788.2 184.5 787.8 181.5 787.8 178.5 789.7 175.5 787.8 172.5 784.6 169.5 782.7 166.5 790.1 163.5 788.3 160.5 784.8 157.5 786.6 154.5 783.4 151.5 785.2 148.5 786.4 145.5 789.1 142.5 787.1 139.5 788 136.5 786 133.5 789.9 130.5 785.1 127.5 788.1 124.5 787.1 121.5 788.7 118.5 786.7 115.5 785.4 112.5 788.3 109.5 786.8 106.5 788.6 103.5 788.4 100.5 789.7 97.5 789 94.5 788.7 91.5 787.4 88.5 788.6 85.5 785.3 82.5 788.1 79.5 786.3 76.5 785.9 73.5 786.8 70.5 785.6 67.5 787.6 64.5 787.6 61.5 786.9 58.5 789.2Z" fill="#ff6446"/>
<path d="M58.4 713.4h4v4h-4zm1.4 -52.4h4v4h-4zm0 57.1h4v4h-4zm0.4 -10.4h4v4h-4zm0 -0.9h4v4h-4zm0.7 -32.4h4v4h-4zm0.7 34h4v4h-4zm0.7 -2.3h4v4h-4zm1 -13.1h4v4h-4zm1.1 -2h4v4h-4zm2.1 5.3h4v4h-4zm0.7 16.8h4v4h-4zm0 -3.3h4v4h-4zm1 -7.8h4v4h-4zm0.7 -9.7h4v4h-4zm1.1 18.7h4v4h-4zm0.3 -0.1h4v4h-4zm0 -35.3h4v4h-4zm0.4 17.2h4v4h-4zm0.3 -23.7h4v4h-4zm0 25.6h4v4h-4zm1.8 14.6h4v4h-4zm3.1 -7.3h4v4h-4zm0 -17.7h4v4h-4zm0.7 6.5h4v4h-4zm0 3.7h4v4h-4zm0.4 0.2h4v4h-4zm0.7 7.8h4v4h-4zm2.8 10.6h4v4h-4zm0.3 -5.2h4v4h-4zm1.8 5.3h4v4h-4zm0.7 4.8h4v4h-4zm0.3 -19.5h4v4h-4zm1.1 12.4h4v4h-4zm0.3 -26.3h4v4h-4zm0.4 25.9h4v4h-4zm0.3 -5.8h4v4h-4zm1.5 10.1h4v4h-4zm0.3 -6.5h4v4h-4zm0.4 -62.1h4v4h-4zm0 56.5h4v4h-4zm0.3 -25.2h4v4h-4zm0.7 37.4h4v4h-4zm0.4 -0.9h4v4h-4zm0.3 2.5h4v4h-4zm0 1.4h4v4h-4zm1.1 -8h4v4h-4zm0.3 -30h4v4h-4zm0.4 26.2h4v4h-4zm0.7 -4.5h4v4h-4zm0.3 8.6h4v4h-4zm0.7 -38.1h4v4h-4zm1.4 37.2h4v4h-4zm0 0.4h4v4h-4zm0.7 -0.1h4v4h-4zm0 -15.6h4v4h-4zm0.4 -7.4h4v4h-4zm0 19.7h4v4h-4zm0 0.4h4v4h-4zm1 9.8h4v4h-4zm1.4 -18.6h4v4h-4zm0 18.5h4v4h-4zm0.4 -6.1h4v4h-4zm0.3 1.8h4v4h-4zm0.4 6h4v4h-4zm0 -20.2h4v4h-4zm0 19.8h4v4h-4zm0.3 -1.4h4v4h-4zm0 3.1h4v4h-4zm0 -48.6h4v4h-4zm0.4 43.8h4v4h-4zm0.3 4.3h4v4h-4zm0.7 0.1h4v4h-4zm0.7 -10.7h4v4h-4zm0.7 2.3h4v4h-4zm0.4 -16.7h4v4h-4zm0.3 18.1h4v4h-4zm0 -2.8h4v4h-4zm0.4 -4.2h4v4h-4zm0.3 -1.5h4v4h-4zm0.4 7.9h4v4h-4zm0.3 -22.3h4v4h-4zm0 7.2h4v4h-4zm0 9.4h4v4h-4zm1.1 -7.8h4v4h-4zm0.7 -14.7h4v4h-4zm1.4 11.7h4v4h-4zm0.7 7.9h4v4h-4zm1.4 -4.5h4v4h-4zm0.3 5.9h4v4h-4zm0.4 -35.6h4v4h-4zm0 43.9h4v4h-4zm0 -8.4h4v4h-4zm1.7 5.6h4v4h-4zm0.4 -8.1h4v4h-4zm0.3 7.8h4v4h-4zm0 -4.5h4v4h-4zm0.4 -22.1h4v4h-4zm1.4 7.5h4v4h-4zm0.4 9.4h4v4h-4zm0 2.3h4v4h-4zm0.3 7.3h4v4h-4zm0.7 2.2h4v4h-4zm0.7 -1.4h4v4h-4zm0.7 4.2h4v4h-4zm0 -15h4v4h-4zm0.4 -3h4v4h-4zm1 15.8h4v4h-4zm0 -12.7h4v4h-4zm0.7 7.7h4v4h-4zm0.4 -2.4h4v4h-4zm0.7 -19.6h4v4h-4zm0 20.2h4v4h-4zm0.3 7.8h4v4h-4zm1.1 1h4v4h-4zm0 2.2h4v4h-4zm0.3 -2h4v4h-4zm0.4 -22h4v4h-4zm0 9.9h4v4h-4zm0 9h4v4h-4zm1 -41.7h4v4h-4zm0 31.5h4v4h-4zm0.4 4.5h4v4h-4zm0 -54.3h4v4h-4zm0 11.5h4v4h-4zm0.3 52.4h4v4h-4zm0.4 -8.1h4v4h-4zm0.3 -26.6h4v4h-4zm0.4 34.1h4v4h-4zm0.3 -5h4v4h-4zm0.7 -8.1h4v4h-4zm0 -7.5h4v4h-4zm0 14.1h4v4h-4zm0.7 -10.4h4v4h-4zm0.7 -20.6h4v4h-4zm0.4 35.6h4v4h-4zm0.3 -3.9h4v4h-4zm0.7 0.2h4v4h-4zm1.1 5.7h4v4h-4zm0.3 -3.7h4v4h-4zm0.4 -1.4h4v4h-4zm0.3 3.9h4v4h-4zm0 -10.8h4v4h-4zm0.7 -38.4h4v4h-4zm0.4 47.5h4v4h-4zm0.3 -4.1h4v4h-4zm1.1 -0.3h4v4h-4zm0.7 -0.3h4v4h-4zm0.7 -12.6h4v4h-4zm1.4 13.1h4v4h-4zm2.8 4h4v4h-4zm1 6.9h4v4h-4zm0.4 2h4v4h-4zm0.3 -0.3h4v4h-4zm0.4 -0.7h4v4h-4zm0 -11.2h4v4h-4zm0 7.2h4v4h-4zm0.7 1.4h4v4h-4zm0 -5.7h4v4h-4zm1.4 -4.3h4v4h-4zm0 -15.8h4v4h-4zm0.4 21.8h4v4h-4zm0.7 -3.8h4v4h-4zm1.4 -7.9h4v4h-4zm0.3 10.1h4v4h-4zm0 -21.9h4v4h-4zm1.4 26.2h4v4h-4zm1.4 -2.3h4v4h-4zm0 1h4v4h-4zm0.4 0.8h4v4h-4zm0.7 -4.8h4v4h-4zm0.3 -15.3h4v4h-4zm0.4 1.9h4v4h-4zm0.7 18.4h4v4h-4zm0.3 3h4v4h-4zm0.4 -0.5h4v4h-4zm0.3 -40.6h4v4h-4zm0.4 33h4v4h-4zm0 -6.7h4v4h-4zm1.4 6.2h4v4h-4zm0 8.6h4v4h-4zm0.3 -17.2h4v4h-4zm0.7 2.5h4v4h-4zm0 12.2h4v4h-4zm0.4 -12.3h4v4h-4zm0.3 -2.4h4v4h-4zm0 -32.2h4v4h-4zm0.4 35.5h4v4h-4zm0 11.6h4v4h-4zm0.7 -13.9h4v4h-4zm0 12.2h4v4h-4zm0.3 -4.3h4v4h-4zm0.4 -61.6h4v4h-4zm2.1 57.3h4v4h-4zm0.3 4.7h4v4h-4zm0.4 4.2h4v4h-4zm0 -5h4v4h-4zm1.4 -22.4h4v4h-4zm0.3 21.9h4v4h-4zm0.4 -21.6h4v4h-4zm0.3 7.5h4v4h-4zm0.4 11.7h4v4h-4zm1 -2.6h4v4h-4zm0.4 -14.7h4v4h-4zm1 1h4v4h-4zm0.4 18.2h4v4h-4zm0.3 0.3h4v4h-4zm0 -6.7h4v4h-4zm1.1 -6.3h4v4h-4zm0 -2.3h4v4h-4zm0 13h4v4h-4zm0.3 -36.9h4v4h-4zm1.1 37.3h4v4h-4zm0 -1.7h4v4h-4zm0.3 -85.8h4v4h-4zm0.4 74.5h4v4h-4zm0.3 -12.1h4v4h-4zm0.4 23.7h4v4h-4zm0.3 5.6h4v4h-4zm0 -2.5h4v4h-4zm0.7 -33.4h4v4h-4zm0.4 35.2h4v4h-4zm0 -40.1h4v4h-4zm0 26.7h4v4h-4zm0.3 -5.7h4v4h-4zm1.1 22.3h4v4h-4zm1.1 -10.2h4v4h-4zm0.3 -0.7h4v4h-4zm0 2.1h4v4h-4zm0.7 9.7h4v4h-4zm0.7 7.3h4v4h-4zm0 -7.4h4v4h-4zm0 7.3h4v4h-4zm0 -12.5h4v4h-4zm0.4 8.5h4v4h-4zm0 2.3h4v4h-4zm0.7 -9h4v4h-4zm0.3 7.5h4v4h-4zm0.4 -4.5h4v4h-4zm0 -9.8h4v4h-4zm0.3 -10.6h4v4h-4zm0 -10.1h4v4h-4zm2.5 13.4h4v4h-4zm0.3 -0.9h4v4h-4zm1.1 15.3h4v4h-4zm0.3 -26.9h4v4h-4zm0.7 10.5h4v4h-4zm0 -3.5h4v4h-4zm0.4 20.4h4v4h-4zm0 -1.6h4v4h-4zm0 -0.2h4v4h-4zm0.7 -23.2h4v4h-4zm0 27.1h4v4h-4zm0.3 -10.2h4v4h-4zm0.4 0.8h4v4h-4zm0 12.2h4v4h-4zm0.3 -2h4v4h-4zm2.1 4.7h4v4h-4zm1.4 -4.1h4v4h-4zm0.4 -1.8h4v4h-4zm0.3 -2.6h4v4h-4zm0.4 0.2h4v4h-4zm0.7 3.1h4v4h-4zm0.3 -7h4v4h-4zm0 0.6h4v4h-4zm0 4.8h4v4h-4zm0.4 7.2h4v4h-4zm0 -4.2h4v4h-4zm0 1.8h4v4h-4zm0.7 -53.5h4v4h-4zm0 48.6h4v4h-4zm1 -12.3h4v4h-4zm0 14.7h4v4h-4zm1.1 -16.2h4v4h-4zm2.4 -47.1h4v4h-4zm0.7 56.3h4v4h-4zm0.7 -20.6h4v4h-4zm0 9.2h4v4h-4zm0.7 9.2h4v4h-4zm1.1 -7.1h4v4h-4zm0.3 -12.5h4v4h-4zm0 18.1h4v4h-4zm0.4 -15.7h4v4h-4zm0 26.3h4v4h-4zm0.3 -14.3h4v4h-4zm0.4 12.2h4v4h-4zm0 -13.1h4v4h-4zm0 11.3h4v4h-4zm0.7 1.9h4v4h-4zm0 3.2h4v4h-4zm1.1 -44.1h4v4h-4zm0.7 40.9h4v4h-4zm0 -10h4v4h-4zm0.3 11.7h4v4h-4zm1.4 0.1h4v4h-4zm0.7 -8.4h4v4h-4zm0 -12.2h4v4h-4zm0.7 27h4v4h-4zm0 -11.6h4v4h-4zm0.4 -21.9h4v4h-4zm0 30.6h4v4h-4zm0 -4.3h4v4h-4zm0 6.3h4v4h-4zm0.3 -20.5h4v4h-4zm0.4 16.2h4v4h-4zm1 0.4h4v4h-4zm0 -5h4v4h-4zm0 0.4h4v4h-4zm0.4 0.1h4v4h-4zm0 4.3h4v4h-4zm0.3 -31.7h4v4h-4zm0 25.5h4v4h-4zm1.1 -15.1h4v4h-4zm0 -10.4h4v4h-4zm0.3 12.6h4v4h-4zm0.4 18.7h4v4h-4zm0.3 -4.5h4v4h-4zm0 -16.4h4v4h-4zm0.4 20.9h4v4h-4zm0.3 -1h4v4h-4zm0.7 -0.6h4v4h-4zm0 -17.1h4v4h-4zm0 18.4h4v4h-4zm0.7 -17.6h4v4h-4zm0.4 4.9h4v4h-4zm0.3 1.4h4v4h-4zm0 11.5h4v4h-4zm0.4 -7.5h4v4h-4zm0 -34.3h4v4h-4zm0.3 39.4h4v4h-4zm0 2.7h4v4h-4zm1.4 -31.4h4v4h-4zm1.4 25.1h4v4h-4zm0 1.2h4v4h-4zm0.4 -14h4v4h-4zm0.7 4h4v4h-4zm0 -10.7h4v4h-4zm0.3 20h4v4h-4zm0 -4.6h4v4h-4zm0.4 0.3h4v4h-4zm0.3 -29.9h4v4h-4zm1.4 33.7h4v4h-4zm0.7 2.3h4v4h-4zm0.4 -6.7h4v4h-4zm0 -49.3h4v4h-4zm0.3 11.3h4v4h-4zm0 -3.3h4v4h-4zm0.4 34h4v4h-4zm1 -35.1h4v4h-4zm1.1 38.2h4v4h-4zm0 11.7h4v4h-4zm0.3 -20.9h4v4h-4zm0.7 13.7h4v4h-4zm0 2h4v4h-4zm0.4 5.6h4v4h-4zm0.7 1.9h4v4h-4zm0 -25.8h4v4h-4zm0 19.5h4v4h-4zm0 -8.2h4v4h-4zm0.3 -28h4v4h-4zm0 38.9h4v4h-4zm0.4 -2.8h4v4h-4zm0 4.2h4v4h-4zm0 -5.2h4v4h-4zm0.7 -19.6h4v4h-4zm0 7.1h4v4h-4zm0.3 -15.4h4v4h-4zm0.4 23.6h4v4h-4zm0.7 -1.4h4v4h-4zm0 8.1h4v4h-4zm0.4 -7.8h4v4h-4zm0 8.8h4v4h-4zm1.4 -7.3h4v4h-4zm0.3 -1.6h4v4h-4zm0.7 12.3h4v4h-4zm0 -21.8h4v4h-4zm0.7 20.8h4v4h-4zm1.4 -53.2h4v4h-4zm1.8 45.2h4v4h-4zm1.4 -29.2h4v4h-4zm2.8 13.9h4v4h-4zm0.3 23.4h4v4h-4zm0.4 -6.3h4v4h-4zm0.7 -3.7h4v4h-4zm0.7 -4.7h4v4h-4zm0 -1.8h4v4h-4zm0.3 2.9h4v4h-4zm0.4 6.1h4v4h-4zm0.3 -9.5h4v4h-4zm0.7 -19.6h4v4h-4zm0.4 19h4v4h-4zm1 9.8h4v4h-4zm1.1 -13.8h4v4h-4zm0.3 4.2h4v4h-4zm1.1 13.9h4v4h-4zm1 -69.7h4v4h-4zm1.1 73.1h4v4h-4zm0.7 -2h4v4h-4zm2.1 -8.3h4v4h-4zm0.3 0.9h4v4h-4zm1.1 3.5h4v4h-4zm1.7 12.7h4v4h-4zm0.4 -11.5h4v4h-4zm0.3 -10.5h4v4h-4zm0.4 12.1h4v4h-4zm0.3 5.8h4v4h-4zm0.7 -68.5h4v4h-4zm0 66.1h4v4h-4zm0.4 -9.3h4v4h-4zm0.4 -36.2h4v4h-4zm0.7 11.6h4v4h-4zm1.4 33.1h4v4h-4zm0 -9.2h4v4h-4zm0.3 11h4v4h-4zm0 -16.5h4v4h-4zm1.1 14.9h4v4h-4zm0 -3.2h4v4h-4zm0.3 4.8h4v4h-4zm0.4 -23.2h4v4h-4zm0 23.4h4v4h-4zm0.3 0.7h4v4h-4zm0.7 -3h4v4h-4zm0.4 -15.4h4v4h-4zm1.4 0.4h4v4h-4zm0.7 0.5h4v4h-4zm0.3 -20.7h4v4h-4zm0.4 23.4h4v4h-4zm0.3 11.7h4v4h-4zm0.7 -11.2h4v4h-4zm1.1 -18.4h4v4h-4zm0.7 31.4h4v4h-4zm1.7 -52h4v4h-4zm0.4 49.5h4v4h-4zm0 -27.5h4v4h-4zm0.3 26.6h4v4h-4zm0.4 -13.6h4v4h-4zm0.3 12h4v4h-4zm0.7 -15.4h4v4h-4zm0.4 12.1h4v4h-4zm0.3 -13.8h4v4h-4zm0 20.8h4v4h-4zm1.1 -2.8h4v4h-4zm0.3 -2.2h4v4h-4zm0.4 6h4v4h-4zm0.3 -7.3h4v4h-4zm1.1 1.1h4v4h-4zm0 -15.2h4v4h-4zm0.3 -12.1h4v4h-4zm0.4 32.4h4v4h-4zm0.3 -44.3h4v4h-4zm0 37.1h4v4h-4zm0.4 1h4v4h-4zm0.3 -17.9h4v4h-4zm4.2 21.4h4v4h-4zm0.7 -19.6h4v4h-4zm0.7 14.7h4v4h-4zm0.7 -15h4v4h-4zm1.8 13.7h4v4h-4zm0.4 -11.1h4v4h-4zm0.3 23.2h4v4h-4zm0.7 -8.4h4v4h-4zm0 2.2h4v4h-4zm0 -15.6h4v4h-4zm0.4 20h4v4h-4zm0.3 6.6h4v4h-4zm0.4 -13.3h4v4h-4zm0 4.8h4v4h-4zm0.3 1.3h4v4h-4zm0.4 4.5h4v4h-4zm0.3 -22.9h4v4h-4zm0 1.9h4v4h-4zm0.4 4.2h4v4h-4zm0 17.5h4v4h-4zm0.3 -46.1h4v4h-4zm0 31.4h4v4h-4zm0.4 -13.7h4v4h-4zm0.3 9h4v4h-4zm0 10.6h4v4h-4zm0.4 -57.6h4v4h-4zm0.3 59.8h4v4h-4zm0.4 5.3h4v4h-4zm0 -52.8h4v4h-4zm0.3 53.2h4v4h-4zm0.4 -12.2h4v4h-4zm0.3 0.6h4v4h-4zm1.4 -3.1h4v4h-4zm0 5.9h4v4h-4zm0 -23.4h4v4h-4zm0.4 26.3h4v4h-4zm0.3 1.9h4v4h-4zm1.4 -1.8h4v4h-4zm0.7 -3.9h4v4h-4zm1.4 -11h4v4h-4zm0.4 -58.1h4v4h-4zm0.3 60.3h4v4h-4zm1.4 12.5h4v4h-4zm0 3h4v4h-4zm0.4 -0.2h4v4h-4zm0 -23.3h4v4h-4zm0.3 4h4v4h-4zm1.1 1.5h4v4h-4zm0.3 15.8h4v4h-4zm0.4 -5.8h4v4h-4zm0.3 -22.4h4v4h-4zm0.7 12.7h4v4h-4zm0 -12.3h4v4h-4zm0.7 32.8h4v4h-4zm1.4 0.2h4v4h-4zm0 -40.1h4v4h-4zm0 38.9h4v4h-4zm0.4 -0.5h4v4h-4zm0.3 0.5h4v4h-4zm0.7 -9h4v4h-4zm1.1 -50.3h4v4h-4zm0.3 54h4v4h-4zm0.4 -14.4h4v4h-4zm0.7 -30.6h4v4h-4zm0.3 38.5h4v4h-4zm0 0.9h4v4h-4zm0.4 5.4h4v4h-4zm0 -26.1h4v4h-4zm0.7 26h4v4h-4zm0.3 2.9h4v4h-4zm0.4 0.6h4v4h-4zm0 -0.6h4v4h-4zm0.3 -21.5h4v4h-4zm0.4 5h4v4h-4zm0.7 15.1h4v4h-4zm0 -42.3h4v4h-4zm0.7 33.5h4v4h-4zm0.7 7.2h4v4h-4zm0.7 -12h4v4h-4zm0.7 13.7h4v4h-4zm0.7 -7.5h4v4h-4zm0 11.3h4v4h-4zm0.4 -13.4h4v4h-4zm0.3 -5.7h4v4h-4zm0 1.7h4v4h-4zm0.7 16.8h4v4h-4zm0.4 2.3h4v4h-4zm0.3 -11.1h4v4h-4zm0.4 4.4h4v4h-4zm0.3 7.7h4v4h-4zm0.4 -31.5h4v4h-4zm0 27.7h4v4h-4zm1.4 2.4h4v4h-4zm0.3 -5.3h4v4h-4zm0 5.3h4v4h-4zm0.7 -18.4h4v4h-4zm0 12.9h4v4h-4zm0.4 0.3h4v4h-4zm0 -7.1h4v4h-4zm0 10.8h4v4h-4zm0.3 -18.5h4v4h-4zm0 17.1h4v4h-4zm0 -27.2h4v4h-4zm0.4 23.5h4v4h-4zm0 -36.8h4v4h-4zm1.7 37.9h4v4h-4zm0.7 -1.9h4v4h-4zm0.4 6.1h4v4h-4zm1.7 -20.2h4v4h-4zm0.4 -19.4h4v4h-4zm0.3 34.4h4v4h-4zm0.4 -11.9h4v4h-4zm0 0.8h4v4h-4zm0.3 -26.4h4v4h-4zm0.7 30.6h4v4h-4zm0 9.6h4v4h-4zm0.7 0.4h4v4h-4zm0 -6.9h4v4h-4zm0.7 6.8h4v4h-4zm2.8 -17.3h4v4h-4zm0.7 13.3h4v4h-4zm2.5 -0.4h4v4h-4zm0 -49h4v4h-4zm0.3 24.5h4v4h-4zm0.4 20.5h4v4h-4zm0.7 2.5h4v4h-4zm0 1.7h4v4h-4zm0 -15h4v4h-4zm0.3 21.6h4v4h-4zm0 -2.6h4v4h-4zm0.7 -12.6h4v4h-4zm0.7 10h4v4h-4zm0.7 -1.1h4v4h-4zm0 5.2h4v4h-4zm0.7 -11.4h4v4h-4zm0 -5.9h4v4h-4zm0 16.5h4v4h-4zm0.4 -23.8h4v4h-4zm0 24.4h4v4h-4zm0.7 -12.7h4v4h-4zm1.1 10.9h4v4h-4zm0.7 -2h4v4h-4zm0.7 0.4h4v4h-4zm0.7 -9.3h4v4h-4zm0.3 11.1h4v4h-4zm0.4 -7.5h4v4h-4zm0.7 3.7h4v4h-4zm0.3 -1.7h4v4h-4zm0 3.4h4v4h-4zm0 -3.1h4v4h-4zm0.4 -5.4h4v4h-4zm0.7 -8.6h4v4h-4zm0 9.1h4v4h-4zm0.3 -1.5h4v4h-4zm0.4 5.5h4v4h-4zm0 -5.9h4v4h-4zm0.7 12.2h4v4h-4zm0.7 -27.6h4v4h-4zm0 0.9h4v4h-4zm0.3 26.3h4v4h-4zm0.4 -9.6h4v4h-4zm2.1 -13.7h4v4h-4zm1.7 21.1h4v4h-4zm1.4 1.4h4v4h-4zm0.7 -4.2h4v4h-4zm0.7 5.5h4v4h-4zm0.4 -12.1h4v4h-4zm0.3 -21.7h4v4h-4zm0.7 28.9h4v4h-4zm0.4 -30.2h4v4h-4zm0 34.7h4v4h-4zm0.3 -19.3h4v4h-4zm1.1 22.3h4v4h-4zm0.7 -14.4h4v4h-4zm0 7.8h4v4h-4zm0 -5.1h4v4h-4zm0.3 -22.3h4v4h-4zm1.1 6.1h4v4h-4zm0.3 20.8h4v4h-4zm1.4 -34.4h4v4h-4zm0.7 34.9h4v4h-4zm0 -12h4v4h-4zm0.4 7h4v4h-4zm0.7 7.8h4v4h-4zm1.4 -0.9h4v4h-4zm0.3 2.3h4v4h-4zm0.4 0.6h4v4h-4zm0 -7.6h4v4h-4zm0.3 -18.3h4v4h-4zm0.4 18.9h4v4h-4zm0.3 6.9h4v4h-4zm0.4 -7.4h4v4h-4zm0.7 6.5h4v4h-4zm0.7 -0.9h4v4h-4zm0.4 -11.1h4v4h-4zm0.3 -0.5h4v4h-4zm0.4 5.6h4v4h-4zm0.3 -14.4h4v4h-4zm0.7 -8.5h4v4h-4zm0.4 27.2h4v4h-4zm0.7 -21.5h4v4h-4zm1.4 -4.2h4v4h-4zm0.3 18.1h4v4h-4zm1.1 -1h4v4h-4zm0 -15.8h4v4h-4zm2.1 19.3h4v4h-4zm1 -15.9h4v4h-4zm0 6.4h4v4h-4zm0 -1h4v4h-4zm0.4 18h4v4h-4zm0.3 -14.3h4v4h-4zm0 2.9h4v4h-4zm0.4 2.2h4v4h-4zm0.7 -5.4h4v4h-4zm0.3 9.9h4v4h-4zm0 -56.4h4v4h-4zm0.4 40.7h4v4h-4zm1 2.4h4v4h-4zm0.7 -22.2h4v4h-4zm0.4 42.2h4v4h-4zm0.3 -16.8h4v4h-4zm0 18.7h4v4h-4zm0.7 -13h4v4h-4zm0 -15.8h4v4h-4zm0.7 18.3h4v4h-4zm0 11.7h4v4h-4zm0.4 -6.6h4v4h-4zm0 -13h4v4h-4zm0.3 13.2h4v4h-4zm0 6.2h4v4h-4zm0 -32.6h4v4h-4zm0.4 34.9h4v4h-4zm0.3 -27.8h4v4h-4zm0 29.5h4v4h-4zm0.4 -30.9h4v4h-4zm0.7 -13.3h4v4h-4zm0.3 38h4v4h-4zm0.4 -9.3h4v4h-4zm0 -22.2h4v4h-4zm1 19.7h4v4h-4zm0.4 -11.2h4v4h-4zm0.3 2.2h4v4h-4zm1.8 12.7h4v4h-4zm0.3 -0.8h4v4h-4zm0.4 -5.6h4v4h-4zm0 -2.1h4v4h-4zm3.1 7.3h4v4h-4zm0.4 -1.8h4v4h-4zm0.3 -23.8h4v4h-4zm0.7 7.4h4v4h-4zm0 7.4h4v4h-4zm0 -5.1h4v4h-4zm0 -21.4h4v4h-4zm1.8 21.1h4v4h-4zm1.1 12.3h4v4h-4zm0.3 -38.5h4v4h-4zm1.8 41.7h4v4h-4zm0.3 2.5h4v4h-4zm0.4 1h4v4h-4zm0 -0.8h4v4h-4zm0.3 -41.8h4v4h-4zm1.8 47.2h4v4h-4zm0 -17.3h4v4h-4zm0.3 17.5h4v4h-4zm0.4 -22.7h4v4h-4zm0.3 18.4h4v4h-4zm0.4 -13.8h4v4h-4zm0.3 17.9h4v4h-4zm0.4 -14.1h4v4h-4zm0 11.3h4v4h-4zm0.7 0.1h4v4h-4zm0.3 -31.6h4v4h-4zm0 -2.2h4v4h-4zm0.4 37.6h4v4h-4zm0 -4.1h4v4h-4zm0.3 -10.4h4v4h-4zm0.4 15.8h4v4h-4zm0 -40.4h4v4h-4zm0 26.7h4v4h-4zm0.3 6h4v4h-4zm0 2.5h4v4h-4zm0.4 0.3h4v4h-4zm1 -0.9h4v4h-4zm0 -68.4h4v4h-4zm2.1 47.4h4v4h-4zm0.7 -7.5h4v4h-4zm1.8 -14.3h4v4h-4zm0 12.8h4v4h-4zm1.7 17.5h4v4h-4zm0.4 9h4v4h-4zm1 -31h4v4h-4zm1.4 1.5h4v4h-4zm0.4 -4.6h4v4h-4zm0 23.9h4v4h-4zm0.3 18.6h4v4h-4zm1.4 -0.4h4v4h-4zm0.4 -10.7h4v4h-4zm0.3 6.6h4v4h-4zm0 -31.4h4v4h-4zm0.4 34.7h4v4h-4zm0 -17.8h4v4h-4zm1.4 18.4h4v4h-4zm0 -2h4v4h-4zm0 -5.4h4v4h-4zm1.4 -11.1h4v4h-4zm0 -35.3h4v4h-4zm0.3 10.7h4v4h-4zm0.4 35.6h4v4h-4zm0.4 -1.8h4v4h-4zm0.7 -26h4v4h-4zm1 24.6h4v4h-4zm0.4 -1.7h4v4h-4zm0.3 -4.7h4v4h-4zm0.4 1.5h4v4h-4zm0 7.4h4v4h-4zm0 2.5h4v4h-4zm1.7 -19.5h4v4h-4zm0 13.7h4v4h-4zm1.4 2.8h4v4h-4zm0.7 8.7h4v4h-4zm1.1 -81.7h4v4h-4zm0 53.1h4v4h-4zm0.7 27.9h4v4h-4zm0.3 1.1h4v4h-4zm1.1 -19h4v4h-4zm0 20.9h4v4h-4zm0.7 -9.5h4v4h-4zm0.3 1h4v4h-4zm0.4 -10.9h4v4h-4zm0 17.7h4v4h-4zm0.3 -12h4v4h-4zm0.4 1.5h4v4h-4zm0 -22.7h4v4h-4zm0 32.1h4v4h-4zm0.3 3h4v4h-4zm0.4 -5.3h4v4h-4zm0.3 -10.8h4v4h-4zm0.4 -9.4h4v4h-4zm0.7 20.9h4v4h-4zm0.7 -12.6h4v4h-4zm0.3 9.1h4v4h-4zm0.4 5h4v4h-4zm1 -19.7h4v4h-4zm0 19.8h4v4h-4zm1.1 1.6h4v4h-4zm0.3 0.9h4v4h-4zm0.4 -5.6h4v4h-4zm0 -22h4v4h-4zm0.3 22.7h4v4h-4zm0.4 -3.6h4v4h-4zm0 4.9h4v4h-4zm0.3 -13.4h4v4h-4zm0 15.2h4v4h-4zm0 -7h4v4h-4zm0 -18.3h4v4h-4zm0.4 17.3h4v4h-4zm0 5.5h4v4h-4zm0.3 0.3h4v4h-4zm1.4 -1.6h4v4h-4zm0.4 -28.3h4v4h-4zm0.3 -1.9h4v4h-4zm0.7 13.5h4v4h-4zm0.4 17.8h4v4h-4zm3.1 -28.4h4v4h-4zm0 2.9h4v4h-4zm0.4 30h4v4h-4zm0 -4.3h4v4h-4zm0.7 -17.2h4v4h-4zm0 21.8h4v4h-4zm1.4 -12.5h4v4h-4zm0.4 -1.4h4v4h-4zm1 -9.8h4v4h-4zm2.1 9.2h4v4h-4zm0 -10.4h4v4h-4zm0.4 10.8h4v4h-4zm0 7.1h4v4h-4zm0.3 -12h4v4h-4zm0.4 -14.2h4v4h-4zm0.7 18.7h4v4h-4zm1 -3.2h4v4h-4zm1.8 -7.8h4v4h-4zm0.3 10.1h4v4h-4zm0 -22.5h4v4h-4zm0.7 21.9h4v4h-4zm0.4 -14.8h4v4h-4zm0.3 12.2h4v4h-4zm0.7 -5h4v4h-4zm0.4 -20.9h4v4h-4zm1 35.5h4v4h-4zm0.4 -15.4h4v4h-4zm0.3 14h4v4h-4zm0.4 -17.2h4v4h-4zm0.7 25.5h4v4h-4zm0.3 -20.4h4v4h-4zm0 21.3h4v4h-4zm0 -2.6h4v4h-4zm0.7 -10.8h4v4h-4zm0.4 12.3h4v4h-4zm0 -19.4h4v4h-4zm0.7 18.3h4v4h-4zm0.3 -5.8h4v4h-4zm0.7 -49.4h4v4h-4zm0.7 41.7h4v4h-4zm1.1 4.4h4v4h-4zm0.3 5.3h4v4h-4zm0.4 -7.4h4v4h-4zm1.4 -19.3h4v4h-4zm0.3 -48.7h4v4h-4zm0.7 83.5h4v4h-4zm0.4 -6.9h4v4h-4zm0 4.2h4v4h-4zm0.3 -0.6h4v4h-4zm0.7 -0.7h4v4h-4zm0 3.7h4v4h-4zm0 -7.6h4v4h-4zm0.7 11.7h4v4h-4zm0 -19.9h4v4h-4zm0 6.5h4v4h-4zm0 3.9h4v4h-4zm0.7 5.5h4v4h-4zm0.4 -38.1h4v4h-4zm0.7 31h4v4h-4zm0 3.6h4v4h-4zm0 -16.3h4v4h-4zm0 18.4h4v4h-4zm0.3 0.6h4v4h-4zm0 0.2h4v4h-4zm0.4 -6.1h4v4h-4zm1.4 -35.7h4v4h-4zm0.7 19.4h4v4h-4zm0 1h4v4h-4zm0.3 -7.1h4v4h-4zm1.1 3.8h4v4h-4zm1.4 15.3h4v4h-4zm0.4 -24.8h4v4h-4zm0.3 13.5h4v4h-4zm1.8 5h4v4h-4zm1.4 3.7h4v4h-4zm0 -6.6h4v4h-4zm0.7 6.1h4v4h-4zm1.4 -2.4h4v4h-4zm0.3 8.6h4v4h-4zm0.4 0.6h4v4h-4zm0 -5.2h4v4h-4zm0 -8.7h4v4h-4zm0.3 9.4h4v4h-4zm0 0.8h4v4h-4zm0.4 -1.7h4v4h-4zm0 -13.5h4v4h-4zm0.3 14.9h4v4h-4zm0 -35h4v4h-4zm0 24.1h4v4h-4zm1.1 9.8h4v4h-4zm0 -13.5h4v4h-4zm0.3 6.7h4v4h-4zm0.7 9h4v4h-4zm1.1 -12.1h4v4h-4zm1 13.4h4v4h-4zm0.7 -14.6h4v4h-4zm0 -3.3h4v4h-4zm0.7 11.5h4v4h-4zm0.4 8.2h4v4h-4zm0 -22.2h4v4h-4zm1 7.3h4v4h-4zm0.4 2.5h4v4h-4zm0.7 6.4h4v4h-4zm0.3 1.4h4v4h-4zm1.8 0.5h4v4h-4zm1 6.8h4v4h-4zm0.7 0.6h4v4h-4zm0 -2h4v4h-4zm0.4 -12.5h4v4h-4zm0.3 12.7h4v4h-4zm0.7 -14.4h4v4h-4zm0.7 0.4h4v4h-4zm0 14h4v4h-4zm1.1 -11h4v4h-4zm1 -4.7h4v4h-4zm2.5 14.4h4v4h-4zm1.1 7.3h4v4h-4zm0.7 -3.7h4v4h-4zm0 3h4v4h-4zm0 -19.2h4v4h-4zm1 7h4v4h-4zm0.4 11.7h4v4h-4zm0.7 -4.5h4v4h-4zm0.3 -10.7h4v4h-4zm0.4 0.5h4v4h-4zm0 -28.3h4v4h-4zm0.3 38.4h4v4h-4zm0 -0.5h4v4h-4zm0.4 -11.1h4v4h-4zm0.3 6.2h4v4h-4zm0.4 3.3h4v4h-4zm0.3 -35h4v4h-4zm1.1 34.6h4v4h-4zm0 -24h4v4h-4zm0.3 9.5h4v4h-4zm0.4 -19h4v4h-4zm0.3 4.4h4v4h-4zm1.8 24.2h4v4h-4zm0.3 4.2h4v4h-4zm0.4 -38.5h4v4h-4zm0.3 26.6h4v4h-4zm0 2.6h4v4h-4zm0.7 19.3h4v4h-4zm0.4 -59.7h4v4h-4zm0.7 49.3h4v4h-4zm0.7 1.3h4v4h-4zm0.3 -12.5h4v4h-4zm0.4 -2.5h4v4h-4zm0.7 11.7h4v4h-4zm0.7 -1h4v4h-4zm0 -20.2h4v4h-4zm0.3 20.7h4v4h-4zm0 4h4v4h-4zm0.7 -51.4h4v4h-4zm0.4 47.2h4v4h-4zm0.7 -8.1h4v4h-4zm0 13.2h4v4h-4zm0.7 9.1h4v4h-4zm0 -11.1h4v4h-4zm0 5.7h4v4h-4zm1 4.1h4v4h-4zm0.4 -4.2h4v4h-4zm0 -31h4v4h-4zm0.3 13.3h4v4h-4zm0.4 -20.4h4v4h-4zm0 39.7h4v4h-4zm0.3 -7.6h4v4h-4zm0 -0.6h4v4h-4zm0.4 -43.4h4v4h-4zm0.3 45.5h4v4h-4zm1.4 -29.2h4v4h-4zm1.4 -3.5h4v4h-4zm0.7 6h4v4h-4zm0.4 20.4h4v4h-4zm0.7 -17.7h4v4h-4zm1 22.4h4v4h-4zm1.8 -31.1h4v4h-4zm-477.8 105.9h4v4h-4zm79.7 0.4h4v4h-4zm247.3 5.6h4v4h-4zm12.8 -2.9h4v4h-4zm-270.4 2.9h4v4h-4zm168 -2.8h4v4h-4zm-61.8 -1.7h4v4h-4zm-42.9 5.6h4v4h-4zm271.2 -6.3h4v4h-4zm-175.6 -0.7h4v4h-4zm196.6 1.2h4v4h-4zm-121.6 -0.7h4v4h-4zm-174.6 6.9h4v4h-4zm262.2 -6.2h4v4h-4zm-391.4 0.8h4v4h-4zm449.9 -1h4v4h-4zm-414.1 -0.3h4v4h-4zm399.8 0.7h4v4h-4zm-418.5 3.2h4v4h-4zm58.3 1.5h4v4h-4zm59.6 -5.8h4v4h-4zm302 -0.3h4v4h-4zm-243.2 8.4h4v4h-4zm213.1 -3.8h4v4h-4zm-284.3 -4.6h4v4h-4zm241.6 1.4h4v4h-4zm-124.6 -1.1h4v4h-4zm129.9 3.7h4v4h-4zm-62.4 0.3h4v4h-4zm42.9 -0.5h4v4h-4zm-279.8 -2h4v4h-4zm-17.6 -0.7h4v4h-4zm-7.7 0.7h4v4h-4zm373.7 14h4v4h-4zm-150.3 -5h4v4h-4zm-180.8 -9.8h4v4h-4zm113.8 14.8h4v4h-4zm143.7 -9h4v4h-4zm-50.1 -5.9h4v4h-4zm33.3 -0.6h4v4h-4zm16.5 2.6h4v4h-4zm65.7 -0.9h4v4h-4zm-218.2 4.6h4v4h-4zm-94.3 -4.4h4v4h-4zm344.3 0.9h4v4h-4zm-18.4 -3.1h4v4h-4zm-288.2 2.4h4v4h-4zm219.7 -1.2h4v4h-4zm-91.9 0h4v4h-4zm53.5 0.6h4v4h-4zm101.3 -1.1h4v4h-4zm-189.6 0.5h4v4h-4zm145 9h4v4h-4zm-225.1 -10.4h4v4h-4zm183.1 4h4v4h-4zm-155.7 -3h4v4h-4zm284.1 0.5h4v4h-4zm-422 2.6h4v4h-4zm128 0.2h4v4h-4zm44.6 -1.6h4v4h-4zm-124.3 1h4v4h-4zm112.1 -3.2h4v4h-4zm-56.6 2.8h4v4h-4zm123.4 -2.8h4v4h-4zm-156.4 3.2h4v4h-4zm-9.5 -2.5h4v4h-4zm-72.7 5.7h4v4h-4zm100.4 -5.9h4v4h-4zm-96.5 0.8h4v4h-4zm290.9 -1h4v4h-4zm-17 0.5h4v4h-4zm-25.3 -1h4v4h-4zm8.2 14.1h4v4h-4zm84.3 -11h4v4h-4zm72.1 -1.7h4v4h-4zm-28.9 -0.1h4v4h-4zm26.2 2.4h4v4h-4zm-374.5 5.8h4v4h-4zm213.9 2.7h4v4h-4zm85.1 -8.5h4v4h-4zm-28.4 -1.8h4v4h-4zm-84.3 0h4v4h-4zm-122.4 -1.1h4v4h-4zm336.3 0.6h4v4h-4zm-469.9 3.8h4v4h-4zm21.6 -3.1h4v4h-4zm274.9 -1.4h4v4h-4zm-85.2 0.2h4v4h-4zm132.6 1.4h4v4h-4zm-310.1 -2.3h4v4h-4zm413.1 0.6h4v4h-4zm-68.8 0.1h4v4h-4zm-44.1 -0.6h4v4h-4zm91.3 -0.3h4v4h-4zm-235.5 1h4v4h-4zm-48.4 0.9h4v4h-4zm214 -1.5h4v4h-4zm-172.8 2.3h4v4h-4zm-155 -2.3h4v4h-4zm222.6 2.5h4v4h-4zm123.8 1h4v4h-4zm-156.7 -2.9h4v4h-4zm-165.1 -0.8h4v4h-4zm350.5 15.7h4v4h-4zm74 -15.1h4v4h-4zm-241.4 -0.7h4v4h-4zm-66.7 1.4h4v4h-4zm-52.1 -1.5h4v4h-4zm2.8 2.8h4v4h-4zm306.6 13.1h4v4h-4zm-364.3 -13.7h4v4h-4zm59.6 -1.9h4v4h-4zm184.4 5h4v4h-4zm-134.7 -2.8h4v4h-4zm231.7 9h4v4h-4zm-23.1 -11.4h4v4h-4zm-338.6 2h4v4h-4zm219.2 -1h4v4h-4zm-258.9 1.8h4v4h-4zm425.8 -2.8h4v4h-4zm-5.8 1.3h4v4h-4zm-246 0.7h4v4h-4zm-148.7 -0.7h4v4h-4zm296.5 0.1h4v4h-4zm91.4 5.4h4v4h-4zm-76.3 -6.2h4v4h-4zm-233.7 -0.8h4v4h-4zm165.8 6.5h4v4h-4zm88.1 -4.6h4v4h-4zm-68.1 -1.6h4v4h-4zm33 2.3h4v4h-4zm-180.1 3.5h4v4h-4zm-59 -0.2h4v4h-4zm328.1 -4.3h4v4h-4zm-237.4 3.1h4v4h-4zm-47.6 -4.4h4v4h-4zm-81.9 2.9h4v4h-4zm388.7 -2.6h4v4h-4zm-370.7 1.4h4v4h-4zm91.9 -0.7h4v4h-4zm-70.4 -1.1h4v4h-4zm329.9 9.9h4v4h-4zm-271.8 -9.5h4v4h-4zm92.6 1.6h4v4h-4zm119.2 -1h4v4h-4zm-303.7 2.8h4v4h-4zm201.8 -2.3h4v4h-4zm181.1 -0.3h4v4h-4zm-24.3 -0.3h4v4h-4zm20.1 0.9h4v4h-4zm-296.8 5.4h4v4h-4zm11.8 -3.2h4v4h-4zm-101.8 -1.8h4v4h-4zm395.1 -0.1h4v4h-4zm-438.3 -1.2h4v4h-4zm-3 -0.8h4v4h-4zm56.7 0h4v4h-4zm110.5 1.6h4v4h-4zm233.4 -0.5h4v4h-4zm-123.5 6h4v4h-4zm7.1 -3.5h4v4h-4zm-262.9 1.5h4v4h-4zm310.5 -4.8h4v4h-4zm85.9 5.3h4v4h-4zm-402.2 -4.3h4v4h-4zm366.8 1.6h4v4h-4zm-164.5 -1.4h4v4h-4zm-69.5 7.2h4v4h-4zm215.5 -5.1h4v4h-4zm-299.5 -3h4v4h-4zm147.2 3.4h4v4h-4zm99.8 0.7h4v4h-4zm-83.4 -3.3h4v4h-4zm-2.2 0.9h4v4h-4zm-25 -1.4h4v4h-4zm-59.8 9h4v4h-4zm297.3 -8.3h4v4h-4zm-365.5 2.2h4v4h-4zm321.1 -1.6h4v4h-4zm-268.4 -0.9h4v4h-4zm-96.4 0.5h4v4h-4zm349.4 -0.2h4v4h-4zm-137.2 0.1h4v4h-4zm81.2 -0.3h4v4h-4zm-88.3 0.3h4v4h-4zm162.4 5h4v4h-4zm21.2 -5.1h4v4h-4zm-202.2 2.5h4v4h-4zm190.3 -3.5h4v4h-4zm-2 1.4h4v4h-4zm-151.9 0.7h4v4h-4zm206.3 0.2h4v4h-4zm-435.7 2.6h4v4h-4zm205.9 -5.2h4v4h-4zm22.8 4.7h4v4h-4zm-175.5 -3.5h4v4h-4zm-30.2 2.4h4v4h-4zm245.1 -2.1h4v4h-4zm-281.9 3.9h4v4h-4zm436.9 -3.8h4v4h-4zm37.3 1.5h4v4h-4zm-429.9 -0.3h4v4h-4zm24.2 0.6h4v4h-4zm327.6 0.6h4v4h-4zm10.8 -2.2h4v4h-4zm-121.2 -1.8h4v4h-4zm-19.4 3.3h4v4h-4zm104.2 -1.7h4v4h-4zm-220.1 -0.5h4v4h-4zm196.1 -1.5h4v4h-4zm-256.4 0.8h4v4h-4zm113.3 -0.4h4v4h-4zm219.8 -0.2h4v4h-4zm-243.7 2.7h4v4h-4zm70.3 5.9h4v4h-4zm-71.1 -8.4h4v4h-4zm-22.7 1.4h4v4h-4zm-154.6 -0.8h4v4h-4zm350.6 1.1h4v4h-4zm84.1 -0.4h4v4h-4zm-28.6 -0.7h4v4h-4zm-228.6 0h4v4h-4zm-70.9 2.3h4v4h-4zm228.1 3.5h4v4h-4zm-107 -6.5h4v4h-4zm41 0.3h4v4h-4zm-66 1.4h4v4h-4zm171.9 0.3h4v4h-4zm-131 -0.6h4v4h-4zm-210.2 -0.8h4v4h-4zm168.3 -0.1h4v4h-4zm97.4 -0.5h4v4h-4zm137.7 0h4v4h-4zm-294.5 0.5h4v4h-4zm165.1 7h4v4h-4zm-152.5 -7.5h4v4h-4zm62.6 2.7h4v4h-4zm216.1 0.7h4v4h-4zm-193.1 -3.5h4v4h-4zm-94.9 5.2h4v4h-4zm45.3 -5.4h4v4h-4zm15.9 8.2h4v4h-4zm60.9 -6.7h4v4h-4zm183 -0.3h4v4h-4zm-37.1 -1.2h4v4h-4zm-367.2 2.5h4v4h-4zm218.1 -2.2h4v4h-4zm188.3 0.1h4v4h-4zm-100.7 2.5h4v4h-4zm-352.3 -1.2h4v4h-4zm37.7 -1.7h4v4h-4zm256.1 1.9h4v4h-4zm134.5 -2h4v4h-4zm-41.5 2.3h4v4h-4zm-32.1 1.4h4v4h-4zm2.4 -2.5h4v4h-4zm-157.1 -0.6h4v4h-4zm-11.5 0.4h4v4h-4zm-32.9 1.9h4v4h-4zm298.5 1h4v4h-4z" stroke="#ff6446" stroke-width="1" fill="none"/>
<path d="M58.1 711.4h4v4h-4zm1 -20.7h4v4h-4zm3.2 10.4h4v4h-4zm0.3 0.7h4v4h-4zm4.9 2.7h4v4h-4zm18.2 -3.7h4v4h-4zm0.8 5h4v4h-4zm7.3 -5.3h4v4h-4zm10.5 11.5h4v4h-4zm1.8 -7.8h4v4h-4zm4.5 -8.1h4v4h-4zm0.4 -22.2h4v4h-4zm7 30h4v4h-4zm2.1 9.7h4v4h-4zm4.6 -8.8h4v4h-4zm2.4 6.3h4v4h-4zm7 -23.1h4v4h-4zm28.4 -1.1h4v4h-4zm6.3 17.9h4v4h-4zm0.4 -19.1h4v4h-4zm6.3 32.6h4v4h-4zm1.8 1.3h4v4h-4zm2.4 -14.6h4v4h-4zm3.9 -15.5h4v4h-4zm10.5 17.9h4v4h-4zm7.4 -50.3h4v4h-4zm2.8 57.8h4v4h-4zm5.9 0.6h4v4h-4zm7 -3.5h4v4h-4zm4.6 -11h4v4h-4zm0.3 -14.3h4v4h-4zm1.4 10.8h4v4h-4zm0.7 -8.7h4v4h-4zm3.9 16.7h4v4h-4zm14.7 4.5h4v4h-4zm1.8 4.3h4v4h-4zm8.4 -20h4v4h-4zm1.7 -28h4v4h-4zm0.4 41.8h4v4h-4zm1.4 4.3h4v4h-4zm6.3 -30.6h4v4h-4zm3.5 -6.6h4v4h-4zm13.3 28.7h4v4h-4zm2.5 13.8h4v4h-4zm6 -9.7h4v4h-4zm0.7 -24.5h4v4h-4zm1.7 11.7h4v4h-4zm7 1h4v4h-4zm1.1 -39.9h4v4h-4zm7.7 60.4h4v4h-4zm1.7 -11.1h4v4h-4zm15.8 11.5h4v4h-4zm1.4 -2.8h4v4h-4zm8.4 -35.6h4v4h-4zm1.4 19.7h4v4h-4zm10.2 -2.9h4v4h-4zm2.5 19.2h4v4h-4zm3.1 -11.2h4v4h-4zm13.3 14.1h4v4h-4zm0.4 -1.5h4v4h-4zm2.1 -36.1h4v4h-4zm4.2 30.2h4v4h-4zm3.1 0.2h4v4h-4zm3.2 -32.2h4v4h-4zm5.3 21.9h4v4h-4zm2.1 10.4h4v4h-4zm1.7 -1.9h4v4h-4zm3.5 2.8h4v4h-4zm1.8 11.9h4v4h-4zm1 -5.2h4v4h-4zm4.6 -28.4h4v4h-4zm3.5 -2.2h4v4h-4zm9.8 3.9h4v4h-4zm2.1 15.9h4v4h-4zm5.3 -24.1h4v4h-4zm1 21.8h4v4h-4zm9.8 -19.6h4v4h-4zm3.6 18.1h4v4h-4zm12.2 -4.9h4v4h-4zm6.7 -10h4v4h-4zm7.7 22.8h4v4h-4zm4.2 -16.1h4v4h-4zm7 2.7h4v4h-4zm2.5 14.7h4v4h-4zm0.3 -6.3h4v4h-4zm8.1 7.2h4v4h-4zm15.8 -1.8h4v4h-4zm4.2 -6.2h4v4h-4zm3.5 -13.2h4v4h-4zm4.5 20h4v4h-4zm9.1 2.6h4v4h-4zm0.4 5.9h4v4h-4zm3.2 -31.4h4v4h-4zm3.1 2.2h4v4h-4zm10.5 27.1h4v4h-4zm0.7 -3.5h4v4h-4zm4.6 -4.1h4v4h-4zm4.9 -14.4h4v4h-4zm0 8.7h4v4h-4zm2.1 8.2h4v4h-4zm-271.2 43.3h4v4h-4zm250.6 -3.7h4v4h-4zm-20.8 -26.8h4v4h-4zm-132.3 2.4h4v4h-4zm-29.8 -23h4v4h-4zm148.5 0h4v4h-4zm-166.5 13.1h4v4h-4zm-46.1 15.8h4v4h-4zm-189.9 -20.6h4v4h-4zm387.4 44.7h4v4h-4zm-190.4 -6.5h4v4h-4zm-115 -17.6h4v4h-4zm-39.9 -15.4h4v4h-4zm104.5 42.3h4v4h-4zm104.8 -42.5h4v4h-4zm114.5 8.5h4v4h-4zm-191.2 27h4v4h-4zm254.6 -32.7h4v4h-4zm-458 0.6h4v4h-4zm206.2 37h4v4h-4zm-145.5 -21.6h4v4h-4zm60.8 -17.2h4v4h-4zm-79.5 -6.2h4v4h-4zm395.3 -2.7h4v4h-4zm-308.9 6.3h4v4h-4zm120.7 7.9h4v4h-4zm-157.7 12.1h4v4h-4zm51.4 -24.2h4v4h-4zm284.5 9.7h4v4h-4zm-279.8 38.6h4v4h-4zm-48.1 -57.6h4v4h-4zm3.7 46h4v4h-4zm347.8 -23.2h4v4h-4zm-154.3 10.1h4v4h-4zm65.6 -19.8h4v4h-4zm-278 14.5h4v4h-4zm110.6 -8.1h4v4h-4zm-96.9 -8.6h4v4h-4zm276 18.6h4v4h-4zm-368.7 -12.1h4v4h-4zm248.7 -7.3h4v4h-4zm-240.6 15h4v4h-4zm109.1 -0.9h4v4h-4zm53.8 -15.5h4v4h-4zm156.9 -3.7h4v4h-4zm50.1 46.9h4v4h-4zm-81.8 -43.7h4v4h-4zm-5.5 8h4v4h-4zm28.4 8.8h4v4h-4zm-82.2 1h4v4h-4zm17.4 24.1h4v4h-4zm100.6 -20.3h4v4h-4zm-165.8 -16.6h4v4h-4zm-163.3 -1.4h4v4h-4zm332.8 7.8h4v4h-4zm-54.3 -12.9h4v4h-4zm-51.6 50.1h4v4h-4zm-248 -14.1h4v4h-4zm366.2 -1.6h4v4h-4zm-86.9 -39h4v4h-4zm158 38.8h4v4h-4zm-335.4 -29.5h4v4h-4zm264.2 1.5h4v4h-4zm-227.7 38.9h4v4h-4zm130.2 -33.8h4v4h-4zm-165.6 13.4h4v4h-4zm103.7 -16.6h4v4h-4zm-82.9 0.3h4v4h-4zm158.7 24.5h4v4h-4zm-58.5 9.2h4v4h-4zm81.4 -27.2h4v4h-4zm-158.3 7.1h4v4h-4zm206.8 -31.2h4v4h-4zm-334.4 1.1h4v4h-4zm238.3 39.1h4v4h-4zm-170.1 -30.3h4v4h-4zm2 41.5h4v4h-4zm226.9 -4.9h4v4h-4zm-197.4 -5.6h4v4h-4zm25.3 9.9h4v4h-4zm78.2 -15.1h4v4h-4zm-120.3 -16h4v4h-4zm92.3 -13.3h4v4h-4zm142.8 31.4h4v4h-4zm-248.6 -35.2h4v4h-4zm51.3 51.8h4v4h-4zm259.9 -36h4v4h-4zm-25.7 3.9h4v4h-4zm-236.8 -6.5h4v4h-4zm207.5 24.2h4v4h-4zm-19.7 13.6h4v4h-4zm-11.9 -0.3h4v4h-4zm68.6 -21.4h4v4h-4zm-344.4 -6.6h4v4h-4zm48.4 18.3h4v4h-4zm378.8 -16.4h4v4h-4zm-256.1 19.3h4v4h-4zm-185.1 -15.5h4v4h-4zm293.5 13.1h4v4h-4zm-310.5 -2h4v4h-4zm26.3 -19.9h4v4h-4zm248.3 -9.5h4v4h-4zm-50.8 12h4v4h-4zm-207.4 -16.6h4v4h-4zm441.1 16.2h4v4h-4zm-379.6 0.6h4v4h-4zm207.3 23.5h4v4h-4zm-293.4 -17.5h4v4h-4zm204.8 -4.8h4v4h-4zm243.6 -2.1h4v4h-4zm-317.7 25.1h4v4h-4zm-115.2 -46.4h4v4h-4zm117.5 41h4v4h-4zm167.7 -18.3h4v4h-4zm-172.8 -0.1h4v4h-4zm-115.4 -8h4v4h-4zm161.4 7.6h4v4h-4zm82.6 -15h4v4h-4zm-166.3 35.2h4v4h-4zm-46.3 -12.8h4v4h-4zm13.4 23.2h4v4h-4zm278 -17.4h4v4h-4zm-158.8 -19.9h4v4h-4zm-92.8 -5.1h4v4h-4zm12.3 41.9h4v4h-4zm-32.5 -19.3h4v4h-4zm43.5 -14.1h4v4h-4zm178.4 25.9h4v4h-4zm156 -29.6h4v4h-4zm-206.5 -1.5h4v4h-4zm-210.3 -1.4h4v4h-4zm324.4 14.3h4v4h-4zm-74.5 19.9h4v4h-4zm-205.5 -28.8h4v4h-4zm-38.7 -6.7h4v4h-4zm-37.2 35.1h4v4h-4zm473.5 -3.1h4v4h-4zm9.5 -24.7h4v4h-4zm-194.8 3.4h4v4h-4zm-228.5 -8.4h4v4h-4zm397 6.8h4v4h-4zm-282.5 4.9h4v4h-4zm122.3 -1.4h4v4h-4zm-108 23.1h4v4h-4zm191 -31.9h4v4h-4zm-313.3 34.1h4v4h-4zm259 -18.1h4v4h-4zm8.6 24.9h4v4h-4zm122.4 -5.7h4v4h-4zm-197.9 -4.8h4v4h-4zm-68.5 -36.5h4v4h-4zm0.1 46.3h4v4h-4zm232.3 -12.3h4v4h-4zm-223.5 -27.9h4v4h-4zm73.5 -8.5h4v4h-4zm-236.9 13.7h4v4h-4zm428.8 16.7h4v4h-4zm-321.5 -21.4h4v4h-4zm252.5 -3.1h4v4h-4zm-47.8 1.2h4v4h-4zm-335.3 5.8h4v4h-4zm400.9 -2.2h4v4h-4zm-400.9 41.7h4v4h-4zm194.1 -43.4h4v4h-4zm-75.1 -3.9h4v4h-4zm107.6 8.5h4v4h-4zm-59 27.3h4v4h-4zm283.5 -35.1h4v4h-4zm-151.6 1.8h4v4h-4zm168.2 -0.2h4v4h-4zm-50.8 13.6h4v4h-4zm-130 -13.8h4v4h-4zm51.7 18.3h4v4h-4zm-109.9 -0.9h4v4h-4zm114.2 -19.1h4v4h-4zm-337.1 6.6h4v4h-4zm263.3 39.3h4v4h-4zm-108.4 -43.5h4v4h-4zm56 -3.8h4v4h-4zm-85.1 30h4v4h-4zm70.6 4.7h4v4h-4zm229.6 -25.5h4v4h-4zm16.3 -2.9h4v4h-4zm-394.4 26.8h4v4h-4zm67.2 -37.1h4v4h-4zm337.3 20.5h4v4h-4zm-416.7 -11.3h4v4h-4zm15.9 34h4v4h-4zm133.6 -24h4v4h-4zm65.3 -6.9h4v4h-4zm-90.9 4.9h4v4h-4zm-51.1 -0.9h4v4h-4zm-21.1 25.9h4v4h-4zm-51.6 -43.3h4v4h-4zm12.7 22.5h4v4h-4zm257.7 6.3h4v4h-4zm-95.9 -18.5h4v4h-4zm230.5 6.2h4v4h-4zm-73.2 -5.3h4v4h-4zm-323.1 -0.2h4v4h-4zm-61.5 -5.5h4v4h-4zm301.4 25.7h4v4h-4zm171.3 -26.4h4v4h-4zm-398 28.4h4v4h-4zm153.2 -24.1h4v4h-4zm-173.6 9.4h4v4h-4zm256.9 -15.5h4v4h-4zm53.7 7.7h4v4h-4zm7.2 22.6h4v4h-4zm14.5 -21.1h4v4h-4zm-379.9 18.1h4v4h-4zm122.7 1.7h4v4h-4zm-88.2 15.7h4v4h-4zm167.7 -35.4h4v4h-4zm-136.2 33.9h4v4h-4zm133.4 -3.4h4v4h-4zm-136.5 -33.6h4v4h-4zm-49.8 -4.2h4v4h-4zm6.2 -2.1h4v4h-4zm291.7 19.4h4v4h-4zm102.6 20.3h4v4h-4zm-183.9 -18.7h4v4h-4zm180.2 -11h4v4h-4zm49.1 14.2h4v4h-4zm-119.2 15.3h4v4h-4zm4.6 -9.5h4v4h-4zm-137.5 -10h4v4h-4zm-181 -19.7h4v4h-4zm332.7 38.2h4v4h-4zm91.2 -14.3h4v4h-4zm-174.2 -28.1h4v4h-4zm-162 40.3h4v4h-4zm254.4 -13.5h4v4h-4zm-111.3 -5.3h4v4h-4zm-194.5 -10.3h4v4h-4zm293.6 -2.3h4v4h-4zm-102 5.8h4v4h-4zm101.7 9.5h4v4h-4zm1.9 -18h4v4h-4zm-130.3 9.6h4v4h-4zm129.6 -8.2h4v4h-4zm-207.8 -1.4h4v4h-4zm204.6 8.7h4v4h-4zm-300.3 -16.2h4v4h-4zm11.8 15.4h4v4h-4zm286.6 18.6h4v4h-4zm106.9 -30h4v4h-4zm-438.4 2h4v4h-4zm437.8 10h4v4h-4zm-421.3 36.6h4v4h-4zm391.1 -23.4h4v4h-4zm-174.8 -7.1h4v4h-4zm-67.4 -17.1h4v4h-4zm28.6 -5.6h4v4h-4zm99.7 49.2h4v4h-4zm-284.5 -24.6h4v4h-4zm410.4 -15h4v4h-4zm-258.3 11.6h4v4h-4zm-20.3 -10.4h4v4h-4zm56.2 1.7h4v4h-4zm43.3 21.1h4v4h-4zm-259.2 0.4h4v4h-4zm123.4 -4.9h4v4h-4zm209.5 20.1h4v4h-4zm-213.1 -45h4v4h-4zm316.5 15.7h4v4h-4zm-63.6 8.6h4v4h-4zm-305.5 -15h4v4h-4zm34.7 19.2h4v4h-4zm136.8 -12h4v4h-4zm-64.7 3.1h4v4h-4zm144.7 -22h4v4h-4zm-87.4 41.7h4v4h-4zm-75.3 3.2h4v4h-4zm140.5 -31.3h4v4h-4zm-50.1 1h4v4h-4zm-149.2 27.2h4v4h-4zm237.6 -19.8h4v4h-4zm-143.2 0.7h4v4h-4zm151.7 14.6h4v4h-4zm-61.2 -10.7h4v4h-4zm30.5 -3.8h4v4h-4zm64.8 17.2h4v4h-4zm-303.6 0.2h4v4h-4zm49.5 2.1h4v4h-4zm-112.4 3.2h4v4h-4zm257.9 -17.9h4v4h-4zm-78 -19h4v4h-4zm-116.6 27.7h4v4h-4zm173.8 -37.8h4v4h-4zm149.8 44.7h4v4h-4zm-105.8 -47.7h4v4h-4zm35.7 16.5h4v4h-4zm-256.8 -7.2h4v4h-4zm114.9 2.9h4v4h-4zm6.1 23.7h4v4h-4zm25.4 -13.4h4v4h-4zm179.8 -14.1h4v4h-4zm-118.3 26.2h4v4h-4zm-78.2 -23.4h4v4h-4zm235.3 -9.4h4v4h-4zm-21.3 8.8h4v4h-4zm-288.1 16.3h4v4h-4zm27.2 4.9h4v4h-4zm-96.5 -12.5h4v4h-4zm226.3 -11.7h4v4h-4zm-125.5 5.1h4v4h-4zm-81.4 -2.9h4v4h-4zm321.2 11.5h4v4h-4zm-30 7.1h4v4h-4zm-248.6 -13.9h4v4h-4zm-128.1 -10h4v4h-4zm275.3 27.3h4v4h-4zm196.2 -13.5h4v4h-4zm-18.7 14.5h4v4h-4zm-63.9 -17.1h4v4h-4zm-133.5 24.1h4v4h-4zm147.4 8.9h4v4h-4zm12 -14.2h4v4h-4zm-339.3 -22h4v4h-4zm393.7 -2.5h4v4h-4zm0.4 14.3h4v4h-4zm-34.6 3.2h4v4h-4zm39.4 14.8h4v4h-4zm-233.6 -27.9h4v4h-4zm224.7 22.7h4v4h-4zm-285.5 -21.7h4v4h-4zm220.9 28.9h4v4h-4zm-358.3 14.6h4v4h-4zm253.4 -53.4h4v4h-4zm40.5 40.7h4v4h-4zm114 -17.3h4v4h-4zm-19.2 -25.9h4v4h-4zm-308.3 14.5h4v4h-4zm198.7 29.2h4v4h-4zm-224.8 -5.3h4v4h-4zm162.1 -31.5h4v4h-4zm10.1 42.4h4v4h-4zm-135.7 -1.2h4v4h-4zm64 -9.4h4v4h-4zm204.2 -13.4h4v4h-4zm-230.2 0.2h4v4h-4zm-132.6 -5.5h4v4h-4zm385.7 -22.6h4v4h-4zm-261.7 25.7h4v4h-4zm220.7 33.8h4v4h-4zm-92.7 -22.1h4v4h-4zm-226.6 -13.5h4v4h-4zm9 -19.6h4v4h-4zm261.5 42.7h4v4h-4zm-166.1 -36.3h4v4h-4zm295.6 18.6h4v4h-4zm-127.6 -0.1h4v4h-4zm-330 -4.2h4v4h-4zm68.8 -10.3h4v4h-4zm300.2 10.5h4v4h-4zm-78.8 -0.2h4v4h-4zm-175.7 6.6h4v4h-4zm48.8 -2.2h4v4h-4zm-103.8 -3.4h4v4h-4zm94.8 -25.7h4v4h-4zm-87.4 34.9h4v4h-4zm198.7 -0.7h4v4h-4zm-250.1 -21.7h4v4h-4zm40.7 41.3h4v4h-4zm53 -40.1h4v4h-4zm211.4 30.6h4v4h-4zm-188.7 -35.5h4v4h-4zm-137 1h4v4h-4zm15.7 34.5h4v4h-4zm252.8 -22.3h4v4h-4zm-236.2 20.1h4v4h-4zm400.5 -13.4h4v4h-4zm-341.8 5.5h4v4h-4zm129.4 1.1h4v4h-4zm-125 9.5h4v4h-4zm188.2 1.3h4v4h-4zm81.1 -29.5h4v4h-4zm-57.7 3.8h4v4h-4zm-179 19.5h4v4h-4zm42.5 -22.1h4v4h-4zm184 17.2h4v4h-4zm-22 16.2h4v4h-4zm-250.1 -25.5h4v4h-4zm-38.8 6.2h4v4h-4zm89.8 -13.5h4v4h-4zm171.3 20.2h4v4h-4zm-81.1 -5.3h4v4h-4zm236.6 -27.3h4v4h-4zm-209 13.6h4v4h-4zm-39.2 -0.1h4v4h-4zm-84.6 21.1h4v4h-4zm5.8 -23.4h4v4h-4zm195.7 -9.8h4v4h-4zm-184.5 39h4v4h-4zm-91.5 -31.5h4v4h-4zm293.3 19.3h4v4h-4zm-204.4 -8.1h4v4h-4zm-139.6 -5.6h4v4h-4zm451.8 -4.9h4v4h-4zm-64 16h4v4h-4zm91.2 5.5h4v4h-4zm-149.1 1.8h4v4h-4zm-172.1 -14.6h4v4h-4zm235.9 -16.5h4v4h-4zm1.1 2.6h4v4h-4zm-211.4 1h4v4h-4zm80.1 6.8h4v4h-4zm-104.9 30.9h4v4h-4zm148.4 -38.7h4v4h-4zm-34.6 18.2h4v4h-4zm-216.4 -14.3h4v4h-4zm-50.1 5.8h4v4h-4zm222.3 14.6h4v4h-4zm0 1.1h4v4h-4zm51.1 0.5h4v4h-4zm-102.6 16.1h4v4h-4zm147.1 -20h4v4h-4zm-19.2 -20.6h4v4h-4zm-83 38.4h4v4h-4zm6.8 -35.6h4v4h-4zm1.3 5h4v4h-4zm110.4 27.6h4v4h-4zm-237 -26h4v4h-4zm344.4 5.1h4v4h-4zm-45.7 1.8h4v4h-4zm-19 -10.7h4v4h-4zm-287.2 0.1h4v4h-4zm44.3 4.2h4v4h-4zm-71.3 -5h4v4h-4zm153.7 1.5h4v4h-4zm-88.5 4.8h4v4h-4zm63.7 -11.3h4v4h-4zm59.7 43.2h4v4h-4zm2.7 -43.1h4v4h-4zm160.2 40.9h4v4h-4zm-235.7 -17.2h4v4h-4zm-67.8 -18.2h4v4h-4zm123.3 -6.7h4v4h-4zm-23.6 19.2h4v4h-4zm65 10h4v4h-4zm-227.8 10.8h4v4h-4zm-55.7 -30.8h4v4h-4zm426 -2.3h4v4h-4zm-152.9 -10.4h4v4h-4zm-235.6 6h4v4h-4zm-36.1 19.7h4v4h-4zm304.8 -6.8h4v4h-4zm106.2 13.4h4v4h-4zm-366.2 16.4h4v4h-4zm400.7 -33.1h4v4h-4zm-61.6 -24.5h4v4h-4zm-161.4 21.2h4v4h-4zm-201.3 1.7h4v4h-4zm127 4h4v4h-4zm256.4 -2.6h4v4h-4zm2.8 -10.5h4v4h-4zm-345.7 20.2h4v4h-4zm169.6 -21.7h4v4h-4zm196.9 10.3h4v4h-4zm-255 -3.6h4v4h-4zm80.6 17.4h4v4h-4zm-201.1 -17.8h4v4h-4zm172 -7.6h4v4h-4zm-206.4 8.5h4v4h-4zm407.2 28.2h4v4h-4zm-215.4 -6.5h4v4h-4zm-182.4 17.8h4v4h-4zm78.8 -31.4h4v4h-4zm269.9 -4.6h4v4h-4zm63.7 -8.8h4v4h-4zm7.6 -7h4v4h-4zm-105.6 37.6h4v4h-4zm-324.8 -16.9h4v4h-4zm307.5 -3.3h4v4h-4zm-102.5 -0.7h4v4h-4zm40.7 -10h4v4h-4zm-150.6 21.6h4v4h-4zm-115.6 -16.5h4v4h-4zm353.7 -9.2h4v4h-4zm-125.1 33.9h4v4h-4zm71.9 -11.9h4v4h-4zm39.7 -22.2h4v4h-4zm-248.8 9.4h4v4h-4zm187.3 -13h4v4h-4zm174.9 40h4v4h-4zm-248.2 -14.2h4v4h-4zm58.6 7.2h4v4h-4zm-112.6 -7.8h4v4h-4zm125.6 -16.1h4v4h-4zm149.1 20.5h4v4h-4zm-271.6 -9.1h4v4h-4zm59.4 30.1h4v4h-4zm-31.8 -46.7h4v4h-4zm232.9 7.7h4v4h-4zm-350.6 12.3h4v4h-4zm66.7 -3.5h4v4h-4zm125.1 -2.9h4v4h-4zm-107.4 14.8h4v4h-4zm-80.6 -27.5h4v4h-4zm97.2 35.1h4v4h-4zm-26.9 -28.5h4v4h-4zm179.7 -1.2h4v4h-4zm125.5 -9.1h4v4h-4zm-352.2 14.7h4v4h-4zm-83 -3.2h4v4h-4zm271.7 -1.1h4v4h-4zm-244.4 21.5h4v4h-4zm202 -14.5h4v4h-4zm-128.2 -7.4h4v4h-4zm39.6 1.8h4v4h-4zm194 -11.7h4v4h-4zm-49.5 10.8h4v4h-4zm158.5 -5.7h4v4h-4zm-90.4 3.2h4v4h-4zm-104.9 -3h4v4h-4zm-128.4 6.4h4v4h-4zm124.4 -13.1h4v4h-4zm99.6 16.1h4v4h-4zm-323.7 22.3h4v4h-4z" stroke="#28e820" stroke-width="1" fill="none"/>
<path d="M411.2 767.6h4v4h-4zm-42 -1.1h4v4h-4zm97.3 6.5h4v4h-4zm-32.7 -6.8h4v4h-4zm0.2 5.8h4v4h-4zm84.8 -23h4v4h-4zm-181.2 20.6h4v4h-4zm13.4 -6.9h4v4h-4zm144.8 -3.2h4v4h-4zm-376.4 17h4v4h-4zm415.3 -22.4h4v4h-4zm-18.3 6.7h4v4h-4zm-198.2 -24.3h4v4h-4zm131.4 8.7h4v4h-4zm-34.7 19.6h4v4h-4zm-117.9 -25h4v4h-4zm-206.1 -1.7h4v4h-4zm244.3 32.9h4v4h-4zm-137.3 -36.2h4v4h-4zm95.9 43.5h4v4h-4zm-187 -26.6h4v4h-4zm185.9 22.9h4v4h-4zm215.5 -18.9h4v4h-4zm-50.1 -10.1h4v4h-4zm-51 12.8h4v4h-4zm-327.4 10.2h4v4h-4zm279.4 -0.9h4v4h-4zm-235.4 17.7h4v4h-4zm349.9 -44.7h4v4h-4zm0.5 -1.8h4v4h-4zm-18.1 21.1h4v4h-4zm-214.2 -15.2h4v4h-4zm-109.9 -18.4h4v4h-4zm368 34.1h4v4h-4zm-384.2 9.4h4v4h-4zm303.2 5.6h4v4h-4zm-248.5 -26.9h4v4h-4zm-72.3 10.2h4v4h-4zm289.3 6.7h4v4h-4zm0.3 -45.3h4v4h-4zm100.8 44.3h4v4h-4zm-53.7 -28.4h4v4h-4zm39.9 23.1h4v4h-4zm-81.3 7.4h4v4h-4zm-191.4 -14.4h4v4h-4zm281.4 23.6h4v4h-4zm-130.5 -23.8h4v4h-4zm-251.9 -10.1h4v4h-4zm112.1 4.2h4v4h-4zm-141.7 -12.3h4v4h-4zm160.8 2.8h4v4h-4zm291.4 24.6h4v4h-4zm-325.1 1.3h4v4h-4zm240.8 5.7h4v4h-4zm-113.8 1.9h4v4h-4zm-201.1 -15.9h4v4h-4zm162.3 -11.9h4v4h-4zm63.4 9.1h4v4h-4zm166.7 2h4v4h-4zm-210.3 -34.5h4v4h-4zm104.1 40.8h4v4h-4zm19.2 18.7h4v4h-4zm88.1 -40.4h4v4h-4zm-293.9 9.2h4v4h-4zm263.5 15.1h4v4h-4zm-287.9 -1.6h4v4h-4zm-39.7 0.4h4v4h-4zm132.9 7.7h4v4h-4zm168.1 -12h4v4h-4zm-122.6 -12.3h4v4h-4zm-5.2 -17.6h4v4h-4zm-242.5 8.5h4v4h-4zm6.2 3.4h4v4h-4zm432.6 14.1h4v4h-4zm-101.7 17.2h4v4h-4zm-151.3 -25.5h4v4h-4zm94.3 -6.4h4v4h-4zm150.9 -4.2h4v4h-4zm-108.6 27.8h4v4h-4zm-306.2 -5.5h4v4h-4zm323 4.3h4v4h-4zm-36 -25.5h4v4h-4zm-64 -11.8h4v4h-4zm-15.2 14.9h4v4h-4zm-73.9 12.2h4v4h-4zm-158 24.3h4v4h-4zm367.2 6.9h4v4h-4zm48.3 -4.5h4v4h-4zm-186.4 -29.4h4v4h-4zm10.7 14.6h4v4h-4zm193.1 -43.5h4v4h-4zm-291.4 44.4h4v4h-4zm-161.6 -46.1h4v4h-4zm113.1 25.1h4v4h-4zm5.9 25.8h4v4h-4zm155.2 -25.2h4v4h-4zm-138.9 9.3h4v4h-4zm260 11.7h4v4h-4zm-388.5 -16.9h4v4h-4zm456 9.6h4v4h-4zm-303.2 -6.5h4v4h-4zm65.7 6.4h4v4h-4zm-22.4 -28h4v4h-4zm-173.9 24.6h4v4h-4zm182.7 17.8h4v4h-4zm-125.9 -0.7h4v4h-4zm-31.2 -25.7h4v4h-4zm5.6 -6.3h4v4h-4zm64.7 10.9h4v4h-4zm279.6 -5.6h4v4h-4zm-52.5 26.2h4v4h-4zm-118.2 -20.8h4v4h-4zm-106.6 11.7h4v4h-4zm163.5 2.4h4v4h-4zm-38.1 -18.9h4v4h-4zm-140.2 -12h4v4h-4zm5.9 28.5h4v4h-4zm8.1 -27.7h4v4h-4zm282.8 36.8h4v4h-4zm-23.9 -29.7h4v4h-4zm-144 14.8h4v4h-4zm174.3 -9.7h4v4h-4zm-92.7 17.9h4v4h-4zm124 -20.8h4v4h-4zm-334.9 -9.7h4v4h-4zm106.5 41.8h4v4h-4zm211.7 -55h4v4h-4zm-347.5 15.2h4v4h-4zm114 11.9h4v4h-4zm212.7 -19.3h4v4h-4zm-241.6 37.3h4v4h-4zm-139.4 -14.9h4v4h-4zm170.1 7.4h4v4h-4zm10.1 -6.5h4v4h-4zm-148.9 10.7h4v4h-4zm93.1 -9.2h4v4h-4zm151.5 -13.7h4v4h-4zm134.3 30.4h4v4h-4zm-247.1 -11.7h4v4h-4zm-158.2 -6h4v4h-4zm76.3 8.2h4v4h-4zm-16.9 10.6h4v4h-4zm55.1 -9.4h4v4h-4zm269.4 3.7h4v4h-4zm-24.8 -21.8h4v4h-4zm-182.6 21h4v4h-4zm262.6 -19.5h4v4h-4zm-103.4 35.4h4v4h-4zm34.1 -18.6h4v4h-4zm73.8 -23.4h4v4h-4zm-12.6 34.5h4v4h-4zm-379 -33h4v4h-4zm241.3 24h4v4h-4zm111.3 0.2h4v4h-4zm-148.7 -31h4v4h-4zm47.4 36.3h4v4h-4zm-6.6 -0.3h4v4h-4zm-238.6 16.3h4v4h-4zm274.3 -18.3h4v4h-4zm-123 -6.3h4v4h-4zm-229.5 -12.1h4v4h-4zm315.4 -7.1h4v4h-4zm79.9 26h4v4h-4zm-165.1 10.1h4v4h-4zm-82.1 -5.7h4v4h-4zm-144.3 -18h4v4h-4zm147.2 -4.9h4v4h-4zm-69.1 1.4h4v4h-4zm-72.3 -18.3h4v4h-4zm353.4 -2.2h4v4h-4zm-85 45.1h4v4h-4zm11.4 -27.8h4v4h-4zm-90.1 -3.9h4v4h-4zm-126 26.4h4v4h-4zm-42 7.9h4v4h-4zm392.3 -13.9h4v4h-4zm-233.3 -4h4v4h-4zm-175.4 0.2h4v4h-4zm309.6 18.4h4v4h-4zm-120.8 -14.1h4v4h-4zm159.7 -3h4v4h-4zm-37.7 -1.6h4v4h-4zm10.4 20.3h4v4h-4zm-151.3 -7.4h4v4h-4zm-33.2 2.1h4v4h-4zm-105.6 -49.1h4v4h-4zm-12.9 38.8h4v4h-4zm282.8 -10.8h4v4h-4zm130.3 -4.4h4v4h-4zm-103.7 31.1h4v4h-4zm-159.3 -12.3h4v4h-4zm67.5 10h4v4h-4zm-244.9 -30.9h4v4h-4zm380.3 -20.3h4v4h-4zm-391.4 21.1h4v4h-4zm95.4 -4.4h4v4h-4zm371.6 7.3h4v4h-4zm-235.5 13.7h4v4h-4zm-59.3 -22.2h4v4h-4zm224.3 18.5h4v4h-4zm-73.9 19.2h4v4h-4zm-156.8 -25.4h4v4h-4zm133.8 2h4v4h-4zm-101.1 -27.9h4v4h-4zm138.7 19.6h4v4h-4zm-320.1 16.4h4v4h-4zm308.3 -5.9h4v4h-4zm-277.2 6.1h4v4h-4zm33.3 -16.2h4v4h-4zm13.2 24.6h4v4h-4zm243.3 0.2h4v4h-4zm95.8 -5.8h4v4h-4zm-215.6 1.7h4v4h-4zm116.3 2.6h4v4h-4zm-59 -9.6h4v4h-4zm-60.3 -17.4h4v4h-4zm221.8 36.8h4v4h-4zm-76.5 -27h4v4h-4zm-146.4 -25.5h4v4h-4zm199.9 17.4h4v4h-4zm-384.7 11.8h4v4h-4zm298.9 3.1h4v4h-4zm-219.8 5.7h4v4h-4zm29.4 -9.8h4v4h-4zm68.6 19.1h4v4h-4zm-156.9 -1.7h4v4h-4zm145.5 -22.8h4v4h-4zm-173.9 17.9h4v4h-4zm347.2 -0.5h4v4h-4zm-201.5 -18.8h4v4h-4zm-6.6 33.8h4v4h-4zm-117 -27.5h4v4h-4zm267.1 6h4v4h-4zm-133.7 -28.4h4v4h-4zm-148.5 3.5h4v4h-4zm410.9 21.4h4v4h-4zm-345.7 0.9h4v4h-4zm-88.6 12.2h4v4h-4zm130.9 1.5h4v4h-4zm178.2 -44.9h4v4h-4zm122.4 1.5h4v4h-4zm-4.3 22.3h4v4h-4zm-234.1 18.9h4v4h-4zm-38.6 -17.6h4v4h-4zm-156.6 -13.7h4v4h-4zm241.4 -5.8h4v4h-4zm144.1 34.5h4v4h-4zm-42.5 -10.7h4v4h-4zm13.7 5.8h4v4h-4zm-247.2 13h4v4h-4zm16.3 -12.8h4v4h-4zm38 -27h4v4h-4zm82.7 15.3h4v4h-4zm-85 16.8h4v4h-4zm282.4 -50.9h4v4h-4zm-312.2 58.8h4v4h-4zm-96.8 -0.1h4v4h-4zm173.9 -33.4h4v4h-4zm-221.2 40.4h4v4h-4zm18.2 -22.1h4v4h-4zm186.1 -19.2h4v4h-4zm130 24.6h4v4h-4zm-46.7 -0.1h4v4h-4zm-165.5 -0.9h4v4h-4zm79.4 9.3h4v4h-4zm-74.4 -3.5h4v4h-4zm-92 -40.3h4v4h-4zm168 16.1h4v4h-4zm74.7 16h4v4h-4zm-114.1 -9h4v4h-4zm66 1.5h4v4h-4zm127 -9.6h4v4h-4zm-330.2 11.7h4v4h-4zm-17.9 -35h4v4h-4zm205.4 32.6h4v4h-4zm-8 19.3h4v4h-4zm222.8 -25.8h4v4h-4zm-49.3 21.4h4v4h-4zm-253.6 -37.8h4v4h-4zm271.3 39.8h4v4h-4zm-173.4 -24.4h4v4h-4zm89.5 16.8h4v4h-4zm-218 -4.7h4v4h-4zm48.8 7.9h4v4h-4zm277.5 -13.3h4v4h-4zm-343.8 -0.1h4v4h-4zm-60.6 -8.7h4v4h-4zm17.9 8.1h4v4h-4zm252.2 20.1h4v4h-4zm-67.4 -14.7h4v4h-4zm81.4 0.4h4v4h-4zm-134.2 21.4h4v4h-4zm-115.7 -20.1h4v4h-4zm38.6 1.6h4v4h-4zm381.3 7.7h4v4h-4zm-97.6 -21.6h4v4h-4zm-51.5 28.7h4v4h-4zm161.3 -13.1h4v4h-4zm-150.5 -10h4v4h-4zm-288.5 26.4h4v4h-4zm117.7 -4.6h4v4h-4zm180.5 -32.8h4v4h-4zm60.2 20.5h4v4h-4zm-51.1 -4.9h4v4h-4zm61.7 -43.7h4v4h-4zm-172.2 40.3h4v4h-4zm-156.2 10.6h4v4h-4zm183.7 3.3h4v4h-4zm81.1 7.6h4v4h-4zm32.8 -17.9h4v4h-4zm-342.5 -16.1h4v4h-4zm49.1 21h4v4h-4zm360.8 -17.1h4v4h-4zm-81.9 2.3h4v4h-4zm-219.4 -15.1h4v4h-4zm-113 28.7h4v4h-4zm261.6 -26.2h4v4h-4zm28 46.5h4v4h-4zm-286.2 -13.6h4v4h-4zm437 -0.3h4v4h-4zm-356.3 -0.8h4v4h-4zm195.5 -27.6h4v4h-4zm-144.6 -11.7h4v4h-4zm-141 36.8h4v4h-4zm58.7 -17.8h4v4h-4zm195.9 16.6h4v4h-4zm123 -1h4v4h-4zm35.6 0.8h4v4h-4zm-206.1 -16h4v4h-4zm-70.2 30.6h4v4h-4zm-56.4 3.3h4v4h-4zm-105.3 -27.5h4v4h-4zm410.8 -3.1h4v4h-4zm-354 -6.3h4v4h-4zm119.4 13.2h4v4h-4zm117.7 -5.5h4v4h-4zm43.4 20.2h4v4h-4zm121.3 -22.6h4v4h-4zm-318.5 24.9h4v4h-4zm7.6 -10.4h4v4h-4zm55.2 -14.5h4v4h-4zm185.1 14.5h4v4h-4zm-10.9 -29.8h4v4h-4zm72.8 39.3h4v4h-4zm-350.7 -11.7h4v4h-4zm205.6 7.5h4v4h-4zm-34.8 -23h4v4h-4zm-261.9 14.5h4v4h-4zm76.4 -20.3h4v4h-4zm200.1 -6.4h4v4h-4zm-256.2 3.1h4v4h-4zm309 16.5h4v4h-4zm-186.9 11.2h4v4h-4zm-150.3 1.5h4v4h-4zm456.8 -24.7h4v4h-4zm5.9 24.4h4v4h-4zm-289 -12.3h4v4h-4zm52.4 -9.8h4v4h-4zm64.9 -22h4v4h-4zm112 23.4h4v4h-4zm-293.1 17.3h4v4h-4zm216.2 -13.9h4v4h-4zm-53.9 -2.5h4v4h-4zm-28.9 26.2h4v4h-4zm-83.5 -8.3h4v4h-4zm66.6 -18.7h4v4h-4zm-153.8 15.6h4v4h-4zm305 -9.4h4v4h-4zm-137.7 -9.9h4v4h-4zm45.7 25.4h4v4h-4zm46.3 -18.9h4v4h-4zm-68.3 30.7h4v4h-4zm-63.5 -53.9h4v4h-4zm-34.3 12.2h4v4h-4zm-11.3 16.3h4v4h-4zm38.3 14.1h4v4h-4zm44.9 -31.9h4v4h-4zm140.3 17.6h4v4h-4zm64.2 -0.6h4v4h-4zm-85.6 -32h4v4h-4zm97.3 25.4h4v4h-4zm-2.8 -24.6h4v4h-4zm-41.5 18h4v4h-4zm30.3 25h4v4h-4zm-257.3 5.2h4v4h-4zm57.9 -11.4h4v4h-4zm93.1 -4.9h4v4h-4zm118.8 -2.5h4v4h-4zm-428.4 7h4v4h-4zm251.2 -15h4v4h-4zm-64.6 -21.9h4v4h-4zm-202.2 47.3h4v4h-4zm308.8 -21h4v4h-4zm-268.4 12.3h4v4h-4zm254.7 -2.5h4v4h-4zm-272.1 -12.2h4v4h-4zm91.5 9.6h4v4h-4zm305.2 -14.9h4v4h-4zm-150.7 1.4h4v4h-4zm-141.6 15.6h4v4h-4zm-48.5 13.9h4v4h-4zm-16 -23.7h4v4h-4zm354.7 16.5h4v4h-4zm-121.6 -14.4h4v4h-4zm-235.2 7.4h4v4h-4zm213.3 -24.3h4v4h-4zm-225.9 18.3h4v4h-4zm72.1 30.8h4v4h-4zm183 -16.1h4v4h-4zm90.8 -8.8h4v4h-4zm51.4 -16h4v4h-4zm-12.6 -0.3h4v4h-4zm-225.2 23.5h4v4h-4zm-44.7 -17.5h4v4h-4zm176.7 -1.9h4v4h-4zm-71.9 -0.4h4v4h-4zm-259.8 23.6h4v4h-4zm177.2 -40.3h4v4h-4zm13.1 27.4h4v4h-4zm-24.5 -7h4v4h-4zm-47.8 5.1h4v4h-4zm-88.5 -5.4h4v4h-4zm370.9 20.4h4v4h-4zm-63.3 -11.8h4v4h-4zm-286.2 11.9h4v4h-4zm384.2 -31.2h4v4h-4zm-289.1 22.4h4v4h-4zm189.7 -15.6h4v4h-4zm-260 12.2h4v4h-4zm357.3 21.9h4v4h-4z" stroke="#f2f200" stroke-width="1" fill="none"/>
<path d="M543.5 810.5h4v4h-4z M543.5 818.5h4v4h-4z" stroke="#ff6446" stroke-width="1" fill="none"/>
</g></svg>
<svg width="1681" height="945" style="left:0;top:0">
<path d="M627.5 691.2V762.6M628.5 687.7V763.6M629.5 693.5V769M630.5 691.6V776.6M631.5 689.7V780.6M632.5 692.9V778.8M633.5 692.8V765.4M634.5 693.6V741.9M635.5 691.9V751.7M636.5 688.9V758.6M637.5 693.9V770.8M638.5 693.5V776.9M639.5 692V759.7M640.5 687.7V756.6M641.5 687.5V764.9M642.5 690.5V766.1M643.5 693.5V771.5M644.5 693.5V772.3M645.5 684.9V761.6M646.5 685.4V736.7M647.5 692.4V759.3M648.5 690.2V731.3M649.5 688.1V762.1M650.5 691.3V793.5M651.5 692.7V777.5M652.5 692.6V767.9M653.5 686.7V788.4M654.5 687.7V752.5M655.5 693V768.4M656.5 693.1V769.9M657.5 693.8V756.4M658.5 691.7V757.7M659.5 692.8V771.6M660.5 692.2V766.8M661.5 692.8V757.7M662.5 683.7V762.6M663.5 690.2V771.3M664.5 692.1V761.8M665.5 686.7V755.9M666.5 691.9V768.3M667.5 691.3V762.6M668.5 693.1V765.4M669.5 693.8V751.1M670.5 689.1V763.5M671.5 689.3V760M672.5 693.5V748.1M673.5 690.6V780.9M674.5 691.9V765.6M675.5 692.6V766.8M676.5 688.6V773.6M677.5 692.2V779.4M678.5 693.6V775.3M679.5 687.1V756.6M680.5 689.4V766.5M681.5 691.9V757.5M682.5 691.7V761.6M683.5 692.7V768.3M684.5 692.3V777.2M685.5 690.8V752.4M686.5 693.4V772.6M687.5 693.6V768.3M688.5 692.5V752.8M689.5 693.3V796.1M690.5 686.7V762.9M691.5 690V777.3M692.5 685.6V763.6M693.5 690V768.3M694.5 692.2V774M695.5 691V764.8M696.5 688.7V764.3M697.5 691V778M698.5 688.3V776.4M699.5 688.6V791.4M700.5 690.9V767.6M701.5 685.7V744.7M702.5 693V748.4M703.5 693.4V770.1M704.5 690.8V753.2M705.5 692.6V748.4M706.5 691V776.9M707.5 692.2V746.3M708.5 690.9V746.2M709.5 693.4V766.1M710.5 691.5V777.4M711.5 689.9V773.2M712.5 693.1V751.6M713.5 690.9V772.6M714.5 689.3V753M715.5 692V767.5M716.5 690.1V730.3M717.5 693.2V750.1M718.5 689V768.2M719.5 693.3V762.4M720.5 692.4V768.5M721.5 690.9V721.2M722.5 689.8V779.5M723.5 693.6V773.7M724.5 685V787.2M725.5 687.8V758M726.5 692.7V774.5M727.5 691.8V770.9M728.5 690.4V761.9M729.5 688.1V769.9M730.5 693.8V765.2M731.5 691.6V771.8M732.5 692.5V762.2M733.5 687.7V765.2M734.5 682.1V755.9M735.5 690.6V759.6M736.5 685.3V766.6M737.5 693.6V767.7M738.5 692.3V768.5M739.5 693.4V774.2M740.5 690.6V756.1M741.5 684.6V755.8M742.5 690.7V745.8M743.5 682V778.6M744.5 693V785.7M745.5 693.5V768.4M746.5 693.2V771.3M747.5 690.4V755.8M748.5 685.3V765.7M749.5 692.9V780M750.5 691V767.8M751.5 693V748.6M752.5 691.9V767.6M753.5 690.3V764.4M754.5 686.7V774.1M755.5 688.8V782.7M756.5 693.5V765M757.5 692.8V770M758.5 688.1V775.4M759.5 692.2V754.8M760.5 693.2V762.1M761.5 684.8V746.1M762.5 689.7V767.3M763.5 690.7V772.5M764.5 689.5V768.4M765.5 687.9V769.5M766.5 692.7V756.1M767.5 693.1V755.3M768.5 688.5V778.8M769.5 688.7V771.9M770.5 693.5V760.6M771.5 691.7V771.2M772.5 692.4V756.1M773.5 689V753.6M774.5 688.2V768.4M775.5 692V763.6M776.5 683.2V767.9M777.5 690.6V790.8M778.5 692V769.2M779.5 690.8V766.5M780.5 692.4V787.4M781.5 688.8V755.8M782.5 691.1V763M783.5 691.2V759.3M784.5 691V763.6M785.5 692.9V789.9M786.5 685.9V743.1M787.5 689.8V778.7M788.5 690.8V749.9M789.5 690.7V746.9M790.5 691.3V762.9M791.5 686.6V763.5M792.5 692.5V761.2M793.5 692.4V752.2M794.5 690V772M795.5 681.7V750.3M796.5 692.5V771.5M797.5 688.1V796M798.5 692.3V750.1M799.5 685.1V767.6M800.5 693.1V766M801.5 688.2V747.6M802.5 689.9V764.8M803.5 691.8V775.6M804.5 688.1V775.2M805.5 688.7V772.4M806.5 691.9V758.3M807.5 690V763.4M808.5 690V754.9M809.5 690.4V777.8M810.5 693.5V756.5M811.5 690.3V752.8M812.5 693.3V758.3M813.5 691.4V783.7M814.5 686.6V746.9M815.5 692.8V774.7M816.5 691.4V773.3M817.5 691.6V758.7M818.5 683.4V767.2M819.5 693.5V748.2M820.5 693.9V769.1M821.5 692V770M822.5 694V756.4M823.5 691.5V766.9M824.5 691.5V765.2M825.5 693.8V771.3M826.5 690.4V772.7M827.5 688.5V776.9M828.5 693.1V763.7M829.5 693.7V771.5M830.5 691.9V774.9M831.5 691.8V783.5M832.5 693.3V766.2M833.5 690.3V759.8M834.5 692.3V757.7M835.5 690.9V763.9M836.5 687.5V745.8M837.5 692.8V753.1M838.5 692.4V772.6M839.5 691V787.6M840.5 688.2V780.3M841.5 691.7V758.2M842.5 692.9V778.7M843.5 692.7V769M844.5 690.7V759.3M845.5 693.4V779.9M846.5 689.7V775.3M847.5 691.8V775.2M848.5 692.6V771.6M849.5 688.3V776.1M850.5 690.3V761.9M851.5 691.6V761.9M852.5 690.3V758.6M853.5 693.8V775.2M854.5 686.9V770.6M855.5 689.7V776.1M856.5 692.2V761.6M857.5 690.1V762.2M858.5 690.9V765.1M859.5 693.1V765.5M860.5 693.8V762.7M861.5 692.3V781.2M862.5 692.8V767.4M863.5 686.6V736.2M864.5 690.1V758.4M865.5 691.8V768.1M866.5 689.4V767M867.5 689.7V766M868.5 684.7V762.9M869.5 688.8V782.3M870.5 692.2V756.4M871.5 688.5V773.8M872.5 686.7V775.8M873.5 694V776.3M874.5 693.8V789.9M875.5 687.1V755.6M876.5 693.3V758.3M877.5 693.3V769.8M878.5 689V771.4M879.5 687V771.9M880.5 693.8V758.1M881.5 691.2V761.3M882.5 692V783M883.5 690.9V773.1M884.5 691.1V773.1M885.5 690.5V775M886.5 693.4V785.6M887.5 688.5V764M888.5 693.7V769.2M889.5 688.4V748M890.5 689.2V761.8M891.5 688.8V769.1M892.5 686V772.7M893.5 688.7V757.6M894.5 682.9V750.5M895.5 690.2V756.2M896.5 691.3V742.2M897.5 690.3V753.7M898.5 679.1V763.9M899.5 692.4V770.7M900.5 693V781.7M901.5 689.3V767.2M902.5 689.5V756.9M903.5 690.5V767.7M904.5 692.1V761.2M905.5 691.6V777M906.5 692.9V777.2M907.5 692.1V746.9M908.5 690.4V762.3M909.5 691.3V788.3M910.5 688V778.8M911.5 689.7V763M912.5 693.7V731M913.5 693.5V772.9M914.5 690.2V769.5M915.5 688.5V763.5M916.5 694V774.2M917.5 692.7V768.3M918.5 692.1V771.6M919.5 693.9V762.4M920.5 691.3V763.2M921.5 689.1V769.4M922.5 692.4V761.5M923.5 690.7V751.8M924.5 689.7V751.1M925.5 689V768.1M926.5 693.6V755.7M927.5 691.2V755.2M928.5 693.3V757.3M929.5 687.3V772.4M930.5 688.6V741.3M931.5 687V737.2M932.5 688.6V766.8M933.5 684.6V762.3M934.5 689.6V781.1M935.5 691.6V761.2M936.5 692.9V748.2M937.5 692.3V767.6M938.5 685.2V768M939.5 691.5V768.3M940.5 690.8V768.4M941.5 692.7V788.5M942.5 684.3V760.5M943.5 690.6V768.8M944.5 693.8V763.9M945.5 692.6V745.3M946.5 693V750.9M947.5 688.3V754.2M948.5 691.8V760.7M949.5 692.2V750.8M950.5 692.9V779.8M951.5 693.2V763.1M952.5 692.9V753.3M953.5 689.7V756M954.5 686.2V764.6M955.5 690.1V757.1M956.5 693.3V752.1M957.5 692.1V750.3M958.5 693.2V763.7M959.5 691.2V783.2M960.5 685.4V733.3M961.5 691.2V759.6M962.5 693.4V764.2M963.5 686.8V754.7M964.5 693.2V788.3M965.5 686.4V765.6M966.5 693.7V744.9M967.5 685.8V766.6M968.5 685.2V750.6M969.5 692.7V772.5M970.5 693V763.8M971.5 691.1V776.8M972.5 688.1V753.1M973.5 686.8V767.9M974.5 692.4V781.7M975.5 688.1V760.9M976.5 687.8V752.4M977.5 687.2V759.7M978.5 693.4V766.1M979.5 693.5V759.5M980.5 691.8V768.6M981.5 691.9V776.2M982.5 693.2V754.4M983.5 690.2V746.4M984.5 691.3V753.6M985.5 691V745.8M986.5 690.7V755M987.5 693.1V760.6M988.5 690.4V744.6M989.5 691.5V763.8M990.5 686.4V762.6M991.5 693.6V745.5M992.5 682.8V758.3M993.5 692.4V744.8M994.5 693.7V769.4M995.5 693.9V759.5M996.5 692.3V767.8M997.5 690.8V777.9M998.5 689.6V769.8M999.5 690.5V762.4M1000.5 685.4V765.7M1001.5 691.8V757.2M1002.5 686.4V761.9M1003.5 689.5V781.5M1004.5 693V755.9M1005.5 689.5V761.1M1006.5 689.8V764.8M1007.5 690.6V766.2M1008.5 693.1V770.3M1009.5 690.8V749.6M1010.5 693V756.7M1011.5 690.1V761.2M1012.5 692.7V765.3M1013.5 683.1V769M1014.5 688.4V766.6M1015.5 689.2V762.9M1016.5 687.8V752.2M1017.5 693.2V749.6M1018.5 691.2V749.2M1019.5 692.2V771.1M1020.5 691V779.1M1021.5 692.3V752.9M1022.5 691.7V747M1023.5 689V758.1M1024.5 687V764.4M1025.5 688.7V756.1M1026.5 692.3V759.5M1027.5 680.7V769.2M1028.5 689.8V765.9M1029.5 689.1V757M1030.5 691.9V747.9M1031.5 691.7V760.3M1032.5 692.1V773.6M1033.5 682.7V743.6M1034.5 690.9V778.6M1035.5 684V763.9M1036.5 685.9V778.4M1037.5 692.6V754.8M1038.5 691.5V753.4M1039.5 691.2V747.4M1040.5 688.5V764.5M1041.5 692.2V763.4M1042.5 685.4V759.7M1043.5 693.7V762.9M1044.5 686.4V766.9M1045.5 689.7V753.4M1046.5 689.1V772.1M1047.5 691V744.8M1048.5 693.3V756.9M1049.5 693.8V765.7M1050.5 688.4V759.2M1051.5 693.4V763.8M1052.5 687.9V744.9M1053.5 692.4V758.6M1054.5 689.8V761.4M1055.5 690.8V746.6M1056.5 691.2V768.1M1057.5 690.7V748.4M1058.5 691.6V752.8M1059.5 679.3V747.8M1060.5 693.8V763.9M1061.5 691.2V753.3M1062.5 690.7V768.2M1063.5 691.7V770.8M1064.5 685.6V758M1065.5 693.6V767.6M1066.5 691.2V780.9M1067.5 692.7V743.7M1068.5 685.3V743.1M1069.5 687.7V780.9M1070.5 692.2V752.2M1071.5 691.5V793M1072.5 691.9V771.2M1073.5 693V736.9M1074.5 692.2V771.4M1075.5 683V760.5M1076.5 690.4V763.1M1077.5 691.9V771.1M1078.5 690V755.5M1079.5 692.8V758.6M1080.5 693.1V763.6M1081.5 687.7V743.4M1082.5 688V758.9M1083.5 692.1V764.9M1084.5 691.7V762.5M1085.5 693V763.7M1086.5 695.1V762.2M1087.5 696.1V740.9M1088.5 693.3V752.6M1089.5 695.7V741M1090.5 696.4V765.7M1091.5 695.3V772.7M1092.5 700.5V764M1093.5 697.6V740.3" stroke="#ff0058" stroke-width="1" fill="none"/>
<path d="M650.5 726.2V793.5M694.5 709.4V774M697.5 756.9V778M743.5 753.1V778.6M793.5 703.3V752.2M810.5 716.6V756.5M844.5 751.5V759.3M853.5 756.2V775.2M854.5 729.9V770.6M870.5 735.8V756.4M912.5 720.1V731M919.5 745.4V762.4M935.5 700.7V761.2M948.5 760V760.7M956.5 740.2V752.1M970.5 703.8V763.8M973.5 764V767.9M979.5 710V759.5M997.5 765.9V777.9M1015.5 754.1V762.9M1033.5 716.2V743.6M1071.5 733.8V793" stroke="#d00850" stroke-width="0.8" fill="none"/>
<path d="M627.5 758.5V766.9M628.5 756.5V806.3M630.5 771.7V788M634.5 735.2V776.1M638.5 775.9V839.6M641.5 763.4V782.1M642.5 759V779.2M643.5 766.7V786M644.5 764.9V804.1M645.5 754.2V815.4M646.5 733.9V796.5M647.5 753.7V782M648.5 728.3V756.1M649.5 760.9V766.5M652.5 766.1V774.2M653.5 787.9V797M654.5 749.6V761.7M655.5 766.7V774.6M656.5 769.1V851.8M657.5 753.2V777.3M660.5 766.2V770.4M661.5 753V762.2M663.5 767.3V797.3M664.5 760.9V781M665.5 750.3V806.5M668.5 758V858M670.5 760.3V769M671.5 757.7V791.7M672.5 746.7V798M673.5 775.1V826.2M674.5 763.8V858M676.5 768.5V850.3M677.5 778.4V804.1M678.5 769.5V801M680.5 762.6V781.6M685.5 750.8V858M686.5 765.8V776.4M687.5 762.2V775.5M688.5 752.2V820.7M689.5 788.6V827.3M694.5 768.8V825.7M695.5 757V771.8M696.5 758.2V770.9M698.5 771.7V858M701.5 737.4V765.1M702.5 746.9V858M704.5 749.4V773.6M706.5 773.2V812.3M711.5 772.1V783.7M712.5 750V781.4M716.5 727V750.1M718.5 767.7V774.6M719.5 757.8V784.4M721.5 720.6V759.2M722.5 773.9V788.8M723.5 772.3V827.4M724.5 781.7V838.2M725.5 756.9V774.3M726.5 768V802.1M727.5 767.9V796.9M728.5 756.5V798.2M729.5 762.3V777M731.5 765.5V806.5M733.5 759.1V788.1M735.5 758.3V785.2M738.5 764.1V807.8M739.5 772.3V783.9M740.5 754.6V781M742.5 741.3V765.7M744.5 784.9V792.2M745.5 764.6V786M746.5 767.4V820.5M747.5 748.9V793.3M748.5 760.1V781.2M749.5 774.7V805.3M752.5 762V788.2M753.5 761.6V824M755.5 782.5V829.2M757.5 769.7V796.3M760.5 755.5V776M761.5 743.2V808.4M763.5 765.1V789.7M765.5 762.6V780.5M766.5 752.4V771.2M767.5 753V795.4M771.5 768.5V802.3M772.5 752.1V779.8M775.5 762.2V800.2M777.5 784V826.8M778.5 762.5V817.6M780.5 781.6V821.8M785.5 786.6V793.6M787.5 775V841.5M788.5 744.2V766.8M789.5 739.4V808.6M790.5 760.9V772.8M793.5 748.3V855.4M795.5 747.4V814.9M798.5 742.5V754.7M800.5 760.1V783.3M804.5 772V823.4M805.5 771.8V784.3M807.5 756.5V769.1M808.5 750.1V768.2M809.5 773.8V785.9M810.5 749.8V760.2M812.5 752.3V780M814.5 739.6V818.4M816.5 766.1V789.4M819.5 741.2V784.8M820.5 763.3V792.8M824.5 759.8V770.8M826.5 766.1V778.3M827.5 769.1V803M828.5 759.7V810.2M829.5 766.2V851.6M830.5 772.2V818.4M831.5 776.4V793.3M833.5 755.1V858M834.5 754.4V788.4M836.5 742.3V756.4M837.5 745.6V804.3M839.5 781.8V793.6M841.5 750.3V807.1M843.5 761.6V778.5M844.5 755.5V812.8M846.5 768.6V837.5M847.5 770.6V791.2M854.5 770.4V779.6M855.5 774.8V793.6M857.5 761.5V776.5M860.5 761.9V815.9M862.5 765.5V796.1M865.5 768V776.7M870.5 750.6V776.2M872.5 770.8V858M876.5 755V777.7M878.5 764.3V783.7M880.5 751V803.6M882.5 780.5V806M885.5 774.3V804M886.5 780.1V801.5M888.5 762V774.2M889.5 740.4V774.9M891.5 767.2V784.3M892.5 767.4V801.4M893.5 755.3V815.7M894.5 743.2V755.1M895.5 750.6V817.9M898.5 758V833.4M900.5 774V814.1M902.5 752.9V776.2M905.5 771.3V822.9M906.5 774.7V814.6M907.5 739.8V833.6M908.5 758V776.6M910.5 774.2V849.2M911.5 760V815.5M915.5 759.6V772.2M918.5 771.5V775M919.5 760.3V812.7M920.5 761V793.8M921.5 762.9V778.7M926.5 751.6V768.6M927.5 752.2V811.4M929.5 767.8V817.1M930.5 739.6V756.8M932.5 760V770.3M933.5 761.2V788.4M935.5 760.4V795.4M936.5 745.2V793.4M937.5 764.7V838M938.5 761.2V773.6M939.5 762.5V798.8M940.5 761.9V809.1M942.5 757.7V849.3M943.5 761.4V786.7M944.5 757.1V797M946.5 745.6V779.6M951.5 759.4V794.2M952.5 749.4V792.3M953.5 750.7V788M954.5 763.4V769.3M958.5 760.3V813.4M960.5 728.9V777M961.5 759.6V779.8M962.5 759.4V785.9M964.5 785V846.1M965.5 761.7V829.3M966.5 744.6V847.7M967.5 765.5V858M968.5 745V763.6M970.5 763V767.2M974.5 776.3V789M976.5 750.9V812.8M977.5 752V765.1M978.5 762.1V770.5M980.5 767.2V784.5M981.5 776.1V788.2M982.5 748.5V757.5M985.5 741.9V770.1M986.5 749.2V785.1M990.5 759.6V769.4M991.5 741.9V857.6M993.5 740V776.8M996.5 762.2V848.1M999.5 760.8V768.9M1002.5 757.9V765.3M1003.5 778.5V844M1004.5 749.9V762.5M1007.5 760.2V778.3M1010.5 750.5V775.5M1014.5 759.4V858M1016.5 746V780.5M1018.5 745.1V762.1M1020.5 774.6V822.1M1022.5 744.3V751.6M1024.5 763.3V792.7M1025.5 748.7V792.6M1026.5 751.8V829.2M1029.5 755.6V763.7M1031.5 757.3V768.4M1032.5 768.4V787.9M1034.5 773.2V794.6M1035.5 760.9V787.3M1036.5 776.3V792.1M1037.5 753.5V797M1038.5 748.3V858M1040.5 756.8V832.5M1041.5 760.9V836.8M1042.5 754V771.6M1044.5 762.8V774.5M1047.5 741.9V750.9M1048.5 755.2V779.3M1049.5 758.6V769.6M1050.5 754.9V774.2M1051.5 761.5V808.6M1052.5 740.6V751.6M1053.5 757.8V796.3M1059.5 746.3V779.2M1060.5 763V774.4M1061.5 746.2V762.2M1062.5 763.4V821.1M1065.5 762.5V782.3M1066.5 778.1V783.9M1068.5 736.5V773.7M1069.5 778.6V803.8M1071.5 786.8V809.4M1072.5 768.7V842.7M1074.5 767.2V811.7M1076.5 758.6V813.6M1078.5 754.3V767.5M1082.5 755.1V764.8M1084.5 758.3V768.3M1085.5 763.3V832.9M1086.5 758.9V843.1M1087.5 740.5V748.1M1088.5 750.6V766.2M1089.5 737.7V759M1091.5 771.4V806M1093.5 733V755.1" stroke="#c80c54" stroke-width="1" fill="none"/>
<path d="M626.5 698 L628 698 L628 770 L621.5 850 L620.5 883.5 L614.8 883.5 L616 826 L623 764 L626.5 730Z M1092 700 L1094 703 L1094.5 800 L1100 830 L1107.5 862 L1108.8 883.5 L1105 883.5 L1098 848 L1092 815 L1091 705Z" fill="#ff0058"/>
</svg>
<svg width="1681" height="945" style="left:0;top:0">
<path d="M1173.5 679V813M1222.5 675V798M1271.5 666V809M1320.5 687V798M1370.5 697V800M1419.5 671V794M1468.5 702V802M1518.5 683.5V796M1567.5 688V814M1617.5 686V797M1665.5 655V813.5" stroke="#b800d8" stroke-width="1" fill="none"/>
<rect x="1171.4" y="690" width="4.2" height="92" fill="#20e020"/>
<rect x="1171.4" y="782" width="4.2" height="11" fill="#ff6446"/>
<rect x="1220.4" y="709" width="4.2" height="89" fill="#ff6446"/>
<rect x="1269.4" y="695" width="4.2" height="8" fill="#ff6446"/>
<rect x="1269.4" y="703" width="4.2" height="79" fill="#20e020"/>
<rect x="1269.4" y="782" width="4.2" height="13" fill="#ff6446"/>
<rect x="1318.4" y="697" width="4.2" height="101" fill="#ff6446"/>
<rect x="1368.4" y="704" width="4.2" height="96" fill="#ff6446"/>
<rect x="1417.4" y="700" width="4.2" height="94" fill="#ff6446"/>
<rect x="1466.4" y="705" width="4.2" height="97" fill="#ff6446"/>
<rect x="1516.4" y="693" width="4.2" height="103" fill="#ff6446"/>
<rect x="1565.4" y="700" width="4.2" height="38" fill="#ff6446"/>
<rect x="1565.4" y="738" width="4.2" height="57" fill="#f0f000"/>
<rect x="1615.4" y="705" width="4.2" height="92" fill="#ff6446"/>
<rect x="1663.4" y="702" width="4.2" height="3" fill="#ff6446"/>
<rect x="1663.4" y="705" width="4.2" height="88" fill="#f0f000"/>
<rect x="1663.4" y="793" width="4.2" height="4" fill="#ff6446"/>
<path d="M1171.5 677.5h4v4h-4zm0 11h4v4h-4zm0 6h4v4h-4zm0 117h4v4h-4zm49 -138h4v4h-4zm0 6h4v4h-4zm0 5h4v4h-4zm0 21h4v4h-4zm0 -10h4v4h-4zm0 5h4v4h-4zm0 93h4v4h-4zm49 -129h4v4h-4zm0 31h4v4h-4zm0 112h4v4h-4zm49 -122h4v4h-4zm0 12h4v4h-4zm0 6h4v4h-4zm50 -8h4v4h-4zm0 9h4v4h-4zm0 88h4v4h-4zm49 -123h4v4h-4zm0 21h4v4h-4zm0 5h4v4h-4zm49 5h4v4h-4zm0 5h4v4h-4zm50 -24h4v4h-4zm0 10h4v4h-4zm0 7h4v4h-4zm0 95h4v4h-4zm49 -107h4v4h-4zm0 9h4v4h-4zm0 9h4v4h-4zm0 10h4v4h-4zm0 79h4v4h-4zm0 19h4v4h-4zm50 -128h4v4h-4zm0 22h4v4h-4zm48 -53h4v4h-4zm0 47h4v4h-4zm0 4h4v4h-4zm0 6h4v4h-4zm0 6h4v4h-4zm0 95h4v4h-4z" stroke="#ff6446" stroke-width="1" fill="none"/>
<path d="M1269.5 670.5h4v4h-4z" stroke="#20e020" stroke-width="1" fill="none"/>
</svg>
<div class="pt" style="left:57.5px;top:99px">Rng -16 dBm</div>
<div class="pt r" style="left:-246.5px;width:300px;top:111.6px">1.5</div>
<div class="pt r" style="left:-246.5px;width:300px;top:218.8px">Const</div>
<div class="pt r" style="left:-246.5px;width:300px;top:313px">300</div>
<div class="pt r" style="left:-246.5px;width:300px;top:325.8px">m</div>
<div class="pt r" style="left:-246.5px;width:300px;top:338.4px">/div</div>
<div class="pt r" style="left:-246.5px;width:300px;top:433px">-1.5</div>
<div class="pt" style="left:57.5px;top:458.7px">-2.058</div>
<div class="pt" style="left:57.5px;top:471.3px">Res BW 50 kHz</div>
<div class="pt r" style="left:244.0px;width:300px;top:458.7px">2.0584</div>
<div class="pt r" style="left:250.0px;width:300px;top:471.3px">TimeLen 11  Sym</div>
<div class="pt" style="left:615.0px;top:99px">Rng -16 dBm</div>
<div class="pt r" style="left:311.0px;width:300px;top:111.4px">5</div>
<div class="pt r" style="left:311.0px;width:300px;top:124px">dB</div>
<div class="pt r" style="left:311.0px;width:300px;top:218.8px">LogMag</div>
<div class="pt r" style="left:311.0px;width:300px;top:313px">1</div>
<div class="pt r" style="left:311.0px;width:300px;top:325.8px">dB</div>
<div class="pt r" style="left:311.0px;width:300px;top:338.4px">/div</div>
<div class="pt r" style="left:311.0px;width:300px;top:433px">-5</div>
<div class="pt r" style="left:311.0px;width:300px;top:445.6px">dB</div>
<div class="pt" style="left:615.0px;top:458.7px">Start 74  carrier</div>
<div class="pt" style="left:615.0px;top:471.3px">Res BW 50 kHz</div>
<div class="pt r" style="left:808.0px;width:300px;top:458.7px">Stop 1.973 kcarrier</div>
<div class="pt" style="left:57.5px;top:526px">Rng -16 dBm</div>
<div class="pt r" style="left:-246.5px;width:300px;top:538.4px">110</div>
<div class="pt r" style="left:-246.5px;width:300px;top:551px">dB</div>
<div class="pt r" style="left:-246.5px;width:300px;top:645.8px">LogMag</div>
<div class="pt r" style="left:-246.5px;width:300px;top:740px">10</div>
<div class="pt r" style="left:-246.5px;width:300px;top:752.8px">dB</div>
<div class="pt r" style="left:-246.5px;width:300px;top:765.4px">/div</div>
<div class="pt r" style="left:-246.5px;width:300px;top:860px">10</div>
<div class="pt r" style="left:-246.5px;width:300px;top:872.6px">dB</div>
<div class="pt" style="left:57.5px;top:885.7px">Start 74  carrier</div>
<div class="pt" style="left:57.5px;top:898.3px">Res BW 50 kHz</div>
<div class="pt r" style="left:250.0px;width:300px;top:885.7px">Stop 1.973 kcarrier</div>
<div class="pt r" style="left:250.0px;width:300px;top:898.3px">TimeLen 11  Sym</div>
<div class="pt" style="left:615.0px;top:526px">Rng -16 dBm</div>
<div class="pt r" style="left:311.0px;width:300px;top:538.4px">-6</div>
<div class="pt r" style="left:311.0px;width:300px;top:551px">dBm</div>
<div class="pt r" style="left:311.0px;width:300px;top:645.8px">LogMag</div>
<div class="pt r" style="left:311.0px;width:300px;top:740px">10</div>
<div class="pt r" style="left:311.0px;width:300px;top:752.8px">dB</div>
<div class="pt r" style="left:311.0px;width:300px;top:765.4px">/div</div>
<div class="pt r" style="left:311.0px;width:300px;top:860px">-106</div>
<div class="pt r" style="left:311.0px;width:300px;top:872.6px">dBm</div>
<div class="pt" style="left:615.0px;top:885.7px">Center 80 MHz</div>
<div class="pt" style="left:615.0px;top:898.3px">Res BW 16.5837 kHz</div>
<div class="pt r" style="left:808.0px;width:300px;top:885.7px">Span 100 MHz</div>
<div class="pt r" style="left:808.0px;width:300px;top:898.3px">TimeLen 230.3125 uSec</div>
<div class="pt" style="left:1173.1px;top:526px">Rng 50.11872 mV</div>
<div class="pt r" style="left:869.0999999999999px;width:300px;top:538.4px">140</div>
<div class="pt r" style="left:869.0999999999999px;width:300px;top:551px">dB</div>
<div class="pt r" style="left:869.0999999999999px;width:300px;top:645.8px">LogMag</div>
<div class="pt r" style="left:869.0999999999999px;width:300px;top:740px">14</div>
<div class="pt r" style="left:869.0999999999999px;width:300px;top:752.8px">dB</div>
<div class="pt r" style="left:869.0999999999999px;width:300px;top:765.4px">/div</div>
<div class="pt r" style="left:869.0999999999999px;width:300px;top:860px">0</div>
<div class="pt r" style="left:869.0999999999999px;width:300px;top:872.6px">dB</div>
<div class="pt" style="left:1173.1px;top:885.7px">Start 0  sym</div>
<div class="pt r" style="left:1365.5px;width:300px;top:885.7px">Stop 10  sym</div>
<div class="e" style="left:1131px;top:119.9px">MER</div>
<div class="e" style="left:1251px;top:119.9px">=</div>
<div class="e" style="left:1262px;top:119.9px">45.30</div>
<div class="e" style="left:1131px;top:132.5px">MER Worst Case</div>
<div class="e" style="left:1251px;top:132.5px">=</div>
<div class="e" style="left:1262px;top:132.5px">28.27</div>
<div class="e" style="left:1131px;top:145.2px">Data MER</div>
<div class="e" style="left:1251px;top:145.2px">=</div>
<div class="e" style="left:1262px;top:145.2px">45.17</div>
<div class="e" style="left:1131px;top:157.8px">Pilot MER</div>
<div class="e" style="left:1251px;top:157.8px">=</div>
<div class="e" style="left:1262px;top:157.8px">50.11</div>
<div class="e" style="left:1131px;top:170.4px">Comp. Pilot MER</div>
<div class="e" style="left:1251px;top:170.4px">=</div>
<div class="e" style="left:1262px;top:170.4px">44.97</div>
<div class="e" style="left:1131px;top:183.1px">Freq Err</div>
<div class="e" style="left:1251px;top:183.1px">=</div>
<div class="e" style="left:1262px;top:183.1px">-949.99</div>
<div class="e" style="left:1330.5px;top:183.1px">mHz</div>
<div class="e" style="left:1131px;top:195.7px">SyncCorr</div>
<div class="e" style="left:1251px;top:195.7px">=</div>
<div class="e" style="left:1262px;top:195.7px">99.994</div>
<div class="e" style="left:1342.6px;top:195.7px">%</div>
<div class="e" style="left:1131px;top:208.3px">SymClk Err</div>
<div class="e" style="left:1251px;top:208.3px">=</div>
<div class="e" style="left:1262px;top:208.3px">-0.00943</div>
<div class="e" style="left:1330.7px;top:208.3px">ppm</div>
<div class="e" style="left:1131px;top:220.9px">SymClk Err Compensate</div>
<div class="e" style="left:1251px;top:220.9px">=</div>
<div class="e" style="left:1262px;top:220.9px">Enabled</div>
<div class="e" style="left:1131px;top:233.6px">Time Offset</div>
<div class="e" style="left:1251px;top:233.6px">=</div>
<div class="e" style="left:1262px;top:233.6px">527.21</div>
<div class="e" style="left:1336px;top:233.6px">us</div>
<div class="e" style="left:1131px;top:246.2px">IQ Offset</div>
<div class="e" style="left:1251px;top:246.2px">=</div>
<div class="e" style="left:1262px;top:246.2px">-57.074</div>
<div class="e" style="left:1336.5px;top:246.2px">dB</div>
<div class="e" style="left:1131px;top:258.8px">IQ Gain Imbalance</div>
<div class="e" style="left:1251px;top:258.8px">=</div>
<div class="e" style="left:1262px;top:258.8px">0.00036</div>
<div class="e" style="left:1336.5px;top:258.8px">dB</div>
<div class="e" style="left:1131px;top:271.5px">IQ Quad. Error</div>
<div class="e" style="left:1251px;top:271.5px">=</div>
<div class="e" style="left:1262px;top:271.5px">-6.1532</div>
<div class="e" style="left:1324.5px;top:271.5px">mdeg</div>
<div class="e" style="left:1131px;top:284.1px">IQ Timing Skew</div>
<div class="e" style="left:1251px;top:284.1px">=</div>
<div class="e" style="left:1262px;top:284.1px">-433.33</div>
<div class="e" style="left:1336px;top:284.1px">fs</div>
<div class="e" style="left:1131px;top:296.7px">Power</div>
<div class="e" style="left:1251px;top:296.7px">=</div>
<div class="e" style="left:1262px;top:296.7px">-18.364</div>
<div class="e" style="left:1330.7px;top:296.7px">dBm</div>
<div class="e" style="left:1131px;top:309.4px">Pilot Rel. Power</div>
<div class="e" style="left:1251px;top:309.4px">=</div>
<div class="e" style="left:1262px;top:309.4px">0.018</div>
<div class="e" style="left:1336.5px;top:309.4px">dB</div>
<div class="e" style="left:1131px;top:322.0px">CompPilot Rel. Power</div>
<div class="e" style="left:1251px;top:322.0px">=</div>
<div class="e" style="left:1262px;top:322.0px">-0.139</div>
<div class="e" style="left:1336.5px;top:322.0px">dB</div>
<div class="e" style="left:1131px;top:334.6px">Max Lower Freq. Error</div>
<div class="e" style="left:1251px;top:334.6px">=</div>
<div class="e" style="left:1262px;top:334.6px">-502.06</div>
<div class="e" style="left:1330.5px;top:334.6px">mHz</div>
<div class="e" style="left:1131px;top:347.2px">Max Upper Freq. Error</div>
<div class="e" style="left:1251px;top:347.2px">=</div>
<div class="e" style="left:1262px;top:347.2px">-1.3918</div>
<div class="e" style="left:1336.5px;top:347.2px">Hz</div>
<div class="e" style="left:1131px;top:359.9px">ACP Results dBc</div>
<div class="e" style="left:1251px;top:359.9px">=</div>
<div class="e" style="left:1262px;top:359.9px">-69.70</div>
<div class="e" style="left:1304.9px;top:359.9px">-70.75;</div>
<div class="e" style="left:1131px;top:372.5px">FFT Size</div>
<div class="e" style="left:1251px;top:372.5px">=</div>
<div class="e" style="left:1262px;top:372.5px">2.048</div>
<div class="e" style="left:1342.6px;top:372.5px">k</div>
<div class="e" style="left:1131px;top:385.1px">CP Size</div>
<div class="e" style="left:1251px;top:385.1px">=</div>
<div class="e" style="left:1262px;top:385.1px">96</div>
<div class="e" style="left:1131px;top:397.8px">RP Size</div>
<div class="e" style="left:1251px;top:397.8px">=</div>
<div class="e" style="left:1262px;top:397.8px">32</div>
<div class="e" style="left:1131px;top:410.4px">Excluded Subcarriers</div>
<div class="e" style="left:1251px;top:410.4px">=</div>
<div class="e" style="left:1262px;top:410.4px">[0</div>
<div class="e" style="left:1131px;top:423.0px">Burst Description</div>
<div class="e" style="left:1251px;top:423.0px">=</div>
<div class="e" style="left:1262px;top:423.0px">[0</div>
<div class="e" style="left:1281.6px;top:410.4px">73]</div>
<div class="e" style="left:1304.9px;top:410.4px">[1962</div>
<div class="e" style="left:1342.6px;top:410.4px">2047]</div>
<div class="e" style="left:1281.6px;top:423.0px">235</div>
<div class="e" style="left:1306.5px;top:423.0px">2</div>
<div class="e" style="left:1317.8px;top:423.0px">2048QAM]</div>
<div class="e" style="left:1360.7px;top:132.5px">at</div>
<div class="e" style="left:1379.5px;top:132.5px">sym</div>
<div class="e" style="left:1403.7px;top:132.5px">8,</div>
<div class="e" style="left:1422.4px;top:132.5px">subcar</div>
<div class="e" style="left:1465.4px;top:132.5px">1954</div>
<div class="a" style="left:0;top:921px;width:1681px;height:24px;background:#0078d4"></div>
<div class="a" style="left:17px;top:927px;font-size:12px;line-height:14px;color:#fff">Single sweep - paused - recording docsis3.1-us.sdf</div>
<div class="a" style="left:1509px;top:921px;width:2px;height:24px;background:#9cc4ea"></div>
<div class="a" style="left:1512px;top:921px;width:1px;height:24px;background:#e8f2fb"></div>
<div class="a" style="left:1531.5px;top:927px;font-size:11px;letter-spacing:-0.3px;line-height:14px;color:#fff">INT REF</div>
<div class="a" style="left:1589px;top:921px;width:1px;height:24px;background:#e8f2fb"></div>
<div class="a" style="left:1591px;top:921px;width:2px;height:24px;background:#9cc4ea"></div>
<div class="a" style="left:1608.5px;top:927px;font-size:11px;letter-spacing:0.25px;line-height:14px;color:#fff">CAL: None</div>

</body></html>
